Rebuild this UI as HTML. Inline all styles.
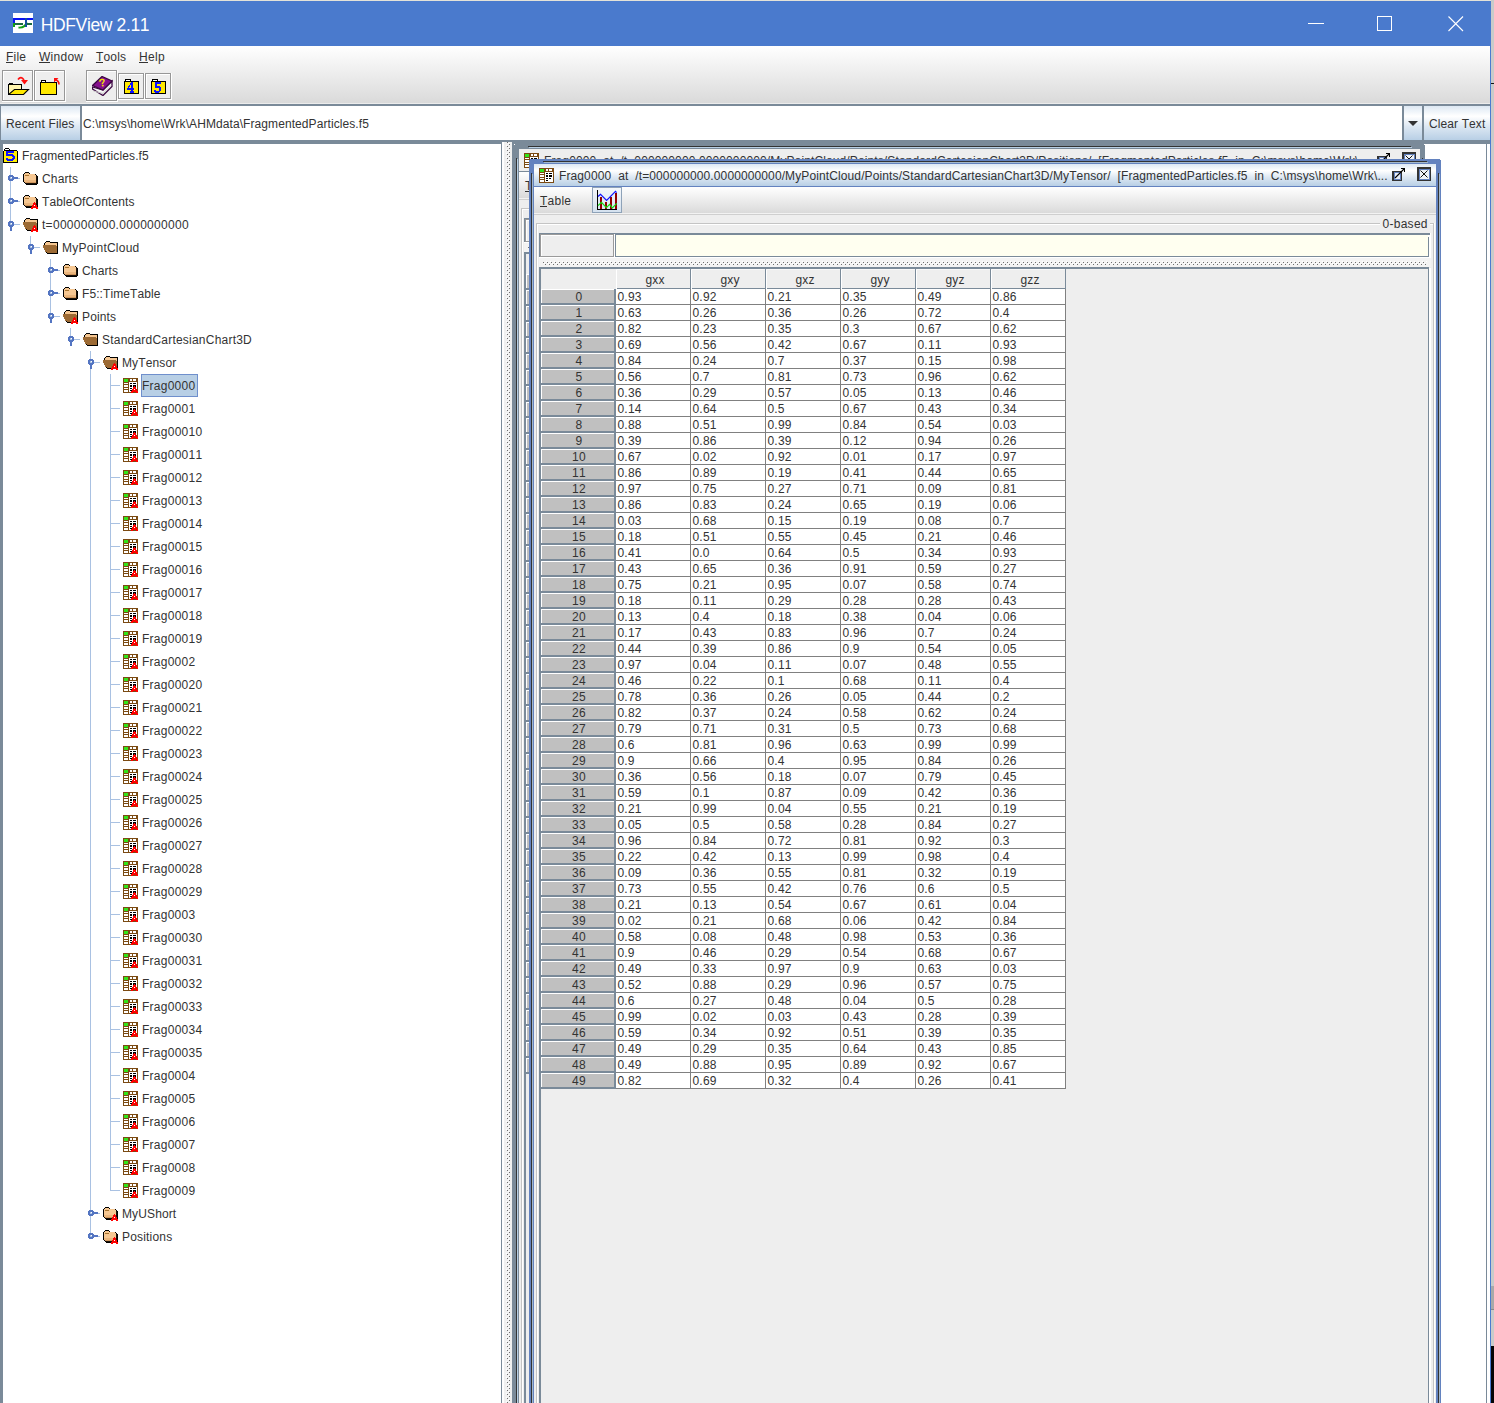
<!DOCTYPE html>
<html><head><meta charset="utf-8"><title>HDFView 2.11</title>
<style>
html,body{margin:0;padding:0;}
body{width:1494px;height:1403px;position:relative;overflow:hidden;background:#d3d3d3;font-family:"Liberation Sans",sans-serif;}
body div,body svg{position:absolute;}
.t{white-space:pre;font-kerning:none;font-family:"Liberation Sans",sans-serif;}
</style></head><body>
<div style="left:1491px;top:0px;width:3px;height:1403px;background:#c8cbca;"></div>
<div style="left:1491px;top:83px;width:3px;height:1px;background:#111111;"></div>
<div style="left:1491px;top:1286px;width:3px;height:23px;background:#a9a9a9;"></div>
<div style="left:1491px;top:1309px;width:3px;height:1px;background:#888888;"></div>
<div style="left:1491px;top:1346px;width:3px;height:57px;background:#050505;"></div>
<div style="left:0px;top:0px;width:1491px;height:1px;background:#e4e2d8;"></div>
<div style="left:0px;top:1px;width:1491px;height:45px;background:#4a7acd;"></div>
<div style="left:1490px;top:1px;width:1px;height:1402px;background:#4a7ad0;"></div>
<svg style="left:13px;top:13px;" width="20" height="20" viewBox="0 0 20 20" shape-rendering="crispEdges"><rect x="0" y="0" width="20" height="20" fill="#ffffff"/><rect x="0" y="5" width="20" height="2" fill="#0a14f0"/><rect x="0" y="5" width="2" height="9" fill="#0a14f0"/><rect x="0" y="10" width="2" height="4" fill="#10a010"/><rect x="2" y="10" width="8" height="2" fill="#1a6a40"/><rect x="12" y="10" width="7" height="2" fill="#1a6a40"/><path d="M5.5 14.5 Q12.5 15 13.5 9" stroke="#12a012" stroke-width="1.8" fill="none" shape-rendering="geometricPrecision"/><rect x="12" y="5" width="2" height="9" fill="#124f9a"/></svg>
<div class="t" style="left:40.7px;top:16.5px;font-size:17.5px;line-height:17.5px;color:#ffffff;letter-spacing:-0.360px;">HDFView 2.11</div>
<div style="left:1308px;top:23px;width:16px;height:1px;background:#ffffff;"></div>
<div style="left:1377px;top:16px;width:13px;height:13px;border:1px solid #ffffff;"></div>
<svg style="left:1447px;top:15px;" width="18" height="18" viewBox="0 0 18 18" shape-rendering="crispEdges"><path d="M1.5 1.5 L16 16 M16 1.5 L1.5 16" stroke="#ffffff" stroke-width="1.1" fill="none" shape-rendering="geometricPrecision"/></svg>
<div style="left:0px;top:46px;width:1490px;height:57px;background:linear-gradient(to bottom,#ffffff 0%,#dadada 100%);"></div>
<div style="left:0px;top:103px;width:1490px;height:1px;background:#ececec;"></div>
<div style="left:0px;top:104px;width:1490px;height:2px;background:#7a8a99;"></div>
<div class="t" style="left:6px;top:51px;font-size:12px;line-height:12px;color:#333333;letter-spacing:0.206px;">File</div>
<div style="left:6px;top:62px;width:7px;height:1px;background:#333333;"></div>
<div class="t" style="left:39px;top:51px;font-size:12px;line-height:12px;color:#333333;letter-spacing:0.260px;">Window</div>
<div style="left:39px;top:62px;width:11px;height:1px;background:#333333;"></div>
<div class="t" style="left:96px;top:51px;font-size:12px;line-height:12px;color:#333333;letter-spacing:0.171px;">Tools</div>
<div style="left:96px;top:62px;width:7px;height:1px;background:#333333;"></div>
<div class="t" style="left:139px;top:51px;font-size:12px;line-height:12px;color:#333333;letter-spacing:0.370px;">Help</div>
<div style="left:139px;top:62px;width:9px;height:1px;background:#333333;"></div>
<div style="left:2px;top:70px;width:32px;height:32px;background:#ffffff;"></div>
<div style="left:2px;top:70px;width:29px;height:29px;border:1px solid #979797;background:#eeeeee;box-shadow:inset 1px 1px 0 #ffffff;"></div>
<div style="left:34px;top:70px;width:32px;height:32px;background:#ffffff;"></div>
<div style="left:34px;top:70px;width:29px;height:29px;border:1px solid #979797;background:#eeeeee;box-shadow:inset 1px 1px 0 #ffffff;"></div>
<div style="left:86px;top:70px;width:32px;height:32px;background:#ffffff;"></div>
<div style="left:86px;top:70px;width:29px;height:29px;border:1px solid #979797;background:#eeeeee;box-shadow:inset 1px 1px 0 #ffffff;"></div>
<div style="left:118px;top:73px;width:27px;height:27px;background:#ffffff;"></div>
<div style="left:118px;top:73px;width:24px;height:24px;border:1px solid #979797;background:#eeeeee;box-shadow:inset 1px 1px 0 #ffffff;"></div>
<div style="left:145px;top:73px;width:27px;height:27px;background:#ffffff;"></div>
<div style="left:145px;top:73px;width:24px;height:24px;border:1px solid #979797;background:#eeeeee;box-shadow:inset 1px 1px 0 #ffffff;"></div>
<svg style="left:8px;top:76px;" width="22" height="20" viewBox="0 0 22 20" shape-rendering="crispEdges"><rect x="1" y="7" width="4" height="1" fill="#000"/><rect x="0" y="8" width="14" height="1" fill="#000"/><rect x="0" y="8" width="1" height="11" fill="#000"/><rect x="13" y="8" width="1" height="5" fill="#000"/><rect x="1" y="9" width="12" height="9" fill="#fff6b0"/><path d="M6.5 13.5 L20.5 13.5 L15.5 18.5 L0.5 18.5 Z" fill="#ffe800" stroke="#000" stroke-width="1.1" shape-rendering="geometricPrecision"/><path d="M10 3.5 Q13 -0.5 16 4" stroke="#ff1010" stroke-width="1.6" fill="none" shape-rendering="geometricPrecision"/><path d="M13 4 L20 4 L16.5 8.5 Z" fill="#ff1010" shape-rendering="geometricPrecision"/></svg>
<svg style="left:40px;top:77px;" width="20" height="20" viewBox="0 0 20 20" shape-rendering="crispEdges"><rect x="1" y="3" width="5" height="2" fill="#000"/><rect x="2" y="4" width="3" height="1" fill="#fff"/><rect x="0" y="5" width="17" height="13" fill="#000"/><rect x="1" y="6" width="15" height="11" fill="#ffe800"/><path d="M14 1 L18.5 1 L14 5.5 Z" fill="#ff1010" shape-rendering="geometricPrecision"/><path d="M15.5 2.5 Q19 4 19 7.5" stroke="#ff1010" stroke-width="1.6" fill="none" shape-rendering="geometricPrecision"/></svg>
<svg style="left:92px;top:76px;" width="21" height="20" viewBox="0 0 21 20" shape-rendering="crispEdges"><path d="M0.5 11 L0.5 13 L11 19.5 L20 10.5 L20 5 L11 14 Z" fill="#f4f4f4" stroke="#3c0642" stroke-width="1.3" shape-rendering="geometricPrecision"/><path d="M1.5 15 L11 17.5 L19 9.5" stroke="#c8c8c8" stroke-width="1" fill="none" shape-rendering="geometricPrecision"/><path d="M0.5 9.5 L10 0.5 L20 5 L11 14 Z" fill="#86108e" stroke="#3c0642" stroke-width="1.3" shape-rendering="geometricPrecision"/><text x="7" y="10.5" transform="rotate(-12 10 7)" font-family="Liberation Sans" font-weight="bold" font-size="11" fill="#f0e000">?</text></svg>
<svg style="left:124px;top:78px;" width="16" height="16" viewBox="0 0 16 16" shape-rendering="crispEdges"><rect x="1" y="1" width="6" height="2" fill="#000"/><rect x="2" y="2" width="4" height="1" fill="#fff"/><rect x="0" y="3" width="15" height="13" fill="#000"/><rect x="1" y="4" width="13" height="11" fill="#ffe800"/><g transform="translate(3,4)"><rect x="4" y="0" width="2" height="1" fill="#0a10ff"/><rect x="3" y="1" width="3" height="1" fill="#0a10ff"/><rect x="3" y="2" width="3" height="1" fill="#0a10ff"/><rect x="2" y="3" width="1" height="1" fill="#0a10ff"/><rect x="4" y="3" width="2" height="1" fill="#0a10ff"/><rect x="1" y="4" width="2" height="1" fill="#0a10ff"/><rect x="4" y="4" width="2" height="1" fill="#0a10ff"/><rect x="1" y="5" width="1" height="1" fill="#0a10ff"/><rect x="4" y="5" width="2" height="1" fill="#0a10ff"/><rect x="0" y="6" width="7" height="1" fill="#0a10ff"/><rect x="0" y="7" width="7" height="1" fill="#0a10ff"/><rect x="4" y="8" width="2" height="1" fill="#0a10ff"/><rect x="3" y="9" width="4" height="1" fill="#0a10ff"/><rect x="3" y="10" width="4" height="1" fill="#0a10ff"/></g></svg>
<svg style="left:151px;top:78px;" width="16" height="16" viewBox="0 0 16 16" shape-rendering="crispEdges"><rect x="1" y="1" width="6" height="2" fill="#000"/><rect x="2" y="2" width="4" height="1" fill="#fff"/><rect x="0" y="3" width="15" height="13" fill="#000"/><rect x="1" y="4" width="13" height="11" fill="#ffe800"/><g transform="translate(3,4)"><rect x="1" y="0" width="6" height="1" fill="#0a10ff"/><rect x="1" y="1" width="6" height="1" fill="#0a10ff"/><rect x="1" y="2" width="2" height="1" fill="#0a10ff"/><rect x="1" y="3" width="2" height="1" fill="#0a10ff"/><rect x="1" y="4" width="5" height="1" fill="#0a10ff"/><rect x="1" y="5" width="6" height="1" fill="#0a10ff"/><rect x="5" y="6" width="2" height="1" fill="#0a10ff"/><rect x="5" y="7" width="2" height="1" fill="#0a10ff"/><rect x="0" y="8" width="2" height="1" fill="#0a10ff"/><rect x="5" y="8" width="2" height="1" fill="#0a10ff"/><rect x="0" y="9" width="6" height="1" fill="#0a10ff"/><rect x="1" y="10" width="4" height="1" fill="#0a10ff"/></g></svg>
<div style="left:0px;top:106px;width:1490px;height:34px;background:#7a8a99;"></div>
<div style="left:1px;top:106px;width:79px;height:34px;background:linear-gradient(to bottom,#dde8f3 0%,#ffffff 30%,#dde8f3 60%,#b8cfe5 100%);"></div>
<div class="t" style="left:6px;top:118px;font-size:12px;line-height:12px;color:#333333;letter-spacing:0.149px;">Recent Files</div>
<div style="left:82px;top:106px;width:1320px;height:34px;background:#ffffff;"></div>
<div class="t" style="left:83px;top:118px;font-size:12px;line-height:12px;color:#333333;letter-spacing:0.081px;">C:\msys\home\Wrk\AHMdata\FragmentedParticles.f5</div>
<div style="left:1404px;top:106px;width:18px;height:34px;background:linear-gradient(to bottom,#dde8f3 0%,#ffffff 30%,#dde8f3 60%,#b8cfe5 100%);"></div>
<svg style="left:1408px;top:121px;" width="10" height="5" viewBox="0 0 10 5" shape-rendering="crispEdges"><path d="M0 0 L10 0 L5 5 Z" fill="#333333" shape-rendering="geometricPrecision"/></svg>
<div style="left:1424px;top:106px;width:66px;height:34px;background:linear-gradient(to bottom,#dde8f3 0%,#ffffff 30%,#dde8f3 60%,#b8cfe5 100%);"></div>
<div class="t" style="left:1429px;top:118px;font-size:12px;line-height:12px;color:#333333;letter-spacing:0.105px;">Clear Text</div>
<div style="left:0px;top:140px;width:1490px;height:4px;background:#7a8a99;"></div>
<div style="left:0px;top:144px;width:3px;height:1259px;background:#7a8a99;"></div>
<div style="left:3px;top:144px;width:498px;height:1259px;background:#ffffff;"></div>
<div style="left:501px;top:142px;width:1px;height:1261px;background:#7a8a99;"></div>
<div style="left:502px;top:142px;width:2px;height:1261px;background:#ffffff;"></div>
<div style="left:504px;top:142px;width:8px;height:1261px;background:#f0f0f0;"></div>
<svg style="left:504px;top:142px" width="8" height="1261" shape-rendering="crispEdges"><defs><pattern id="bumpv" width="8" height="4" patternUnits="userSpaceOnUse"><rect x="3" y="0" width="1" height="1" fill="#6e6e6e"/><rect x="5" y="2" width="1" height="1" fill="#6e6e6e"/><rect x="2" y="3" width="1" height="1" fill="#ffffff"/><rect x="4" y="1" width="1" height="1" fill="#ffffff"/></pattern></defs><rect x="0" y="0" width="8" height="1261" fill="url(#bumpv)"/></svg>
<div style="left:512px;top:140px;width:2px;height:1263px;background:#7a8a99;"></div>
<div style="left:10px;top:167px;width:1px;height:58px;background:#a9c1e2;"></div>
<div style="left:30px;top:236px;width:1px;height:12px;background:#a9c1e2;"></div>
<div style="left:50px;top:259px;width:1px;height:58px;background:#a9c1e2;"></div>
<div style="left:70px;top:328px;width:1px;height:12px;background:#a9c1e2;"></div>
<div style="left:90px;top:351px;width:1px;height:886px;background:#a9c1e2;"></div>
<div style="left:110px;top:374px;width:1px;height:817px;background:#a9c1e2;"></div>
<div style="left:141px;top:374px;width:55px;height:21px;background:#b8cfe5;border:1px solid #6f8fcc;"></div>
<svg style="left:3px;top:148px;" width="16" height="16" viewBox="0 0 16 16" shape-rendering="crispEdges"><rect x="2" y="0" width="4" height="1" fill="#000000"/><rect x="1" y="1" width="1" height="1" fill="#000000"/><rect x="2" y="1" width="4" height="1" fill="#ffffff"/><rect x="6" y="1" width="1" height="1" fill="#000000"/><rect x="1" y="2" width="13" height="1" fill="#000000"/><rect x="0" y="3" width="1" height="1" fill="#000000"/><rect x="1" y="3" width="2" height="1" fill="#ffee00"/><rect x="3" y="3" width="8" height="1" fill="#0a10ff"/><rect x="11" y="3" width="3" height="1" fill="#ffee00"/><rect x="14" y="3" width="1" height="1" fill="#000000"/><rect x="0" y="4" width="1" height="1" fill="#000000"/><rect x="1" y="4" width="2" height="1" fill="#ffee00"/><rect x="3" y="4" width="8" height="1" fill="#0a10ff"/><rect x="11" y="4" width="3" height="1" fill="#ffee00"/><rect x="14" y="4" width="1" height="1" fill="#000000"/><rect x="0" y="5" width="1" height="1" fill="#000000"/><rect x="1" y="5" width="2" height="1" fill="#ffee00"/><rect x="3" y="5" width="2" height="1" fill="#0a10ff"/><rect x="5" y="5" width="9" height="1" fill="#ffee00"/><rect x="14" y="5" width="1" height="1" fill="#000000"/><rect x="0" y="6" width="1" height="1" fill="#000000"/><rect x="1" y="6" width="2" height="1" fill="#ffee00"/><rect x="3" y="6" width="7" height="1" fill="#0a10ff"/><rect x="10" y="6" width="4" height="1" fill="#ffee00"/><rect x="14" y="6" width="1" height="1" fill="#000000"/><rect x="0" y="7" width="1" height="1" fill="#000000"/><rect x="1" y="7" width="2" height="1" fill="#ffee00"/><rect x="3" y="7" width="8" height="1" fill="#0a10ff"/><rect x="11" y="7" width="3" height="1" fill="#ffee00"/><rect x="14" y="7" width="1" height="1" fill="#000000"/><rect x="0" y="8" width="1" height="1" fill="#000000"/><rect x="1" y="8" width="8" height="1" fill="#ffee00"/><rect x="9" y="8" width="3" height="1" fill="#0a10ff"/><rect x="12" y="8" width="2" height="1" fill="#ffee00"/><rect x="14" y="8" width="1" height="1" fill="#000000"/><rect x="0" y="9" width="1" height="1" fill="#000000"/><rect x="1" y="9" width="9" height="1" fill="#ffee00"/><rect x="10" y="9" width="2" height="1" fill="#0a10ff"/><rect x="12" y="9" width="2" height="1" fill="#ffee00"/><rect x="14" y="9" width="1" height="1" fill="#000000"/><rect x="0" y="10" width="1" height="1" fill="#000000"/><rect x="1" y="10" width="2" height="1" fill="#ffee00"/><rect x="3" y="10" width="2" height="1" fill="#0a10ff"/><rect x="5" y="10" width="4" height="1" fill="#ffee00"/><rect x="9" y="10" width="3" height="1" fill="#0a10ff"/><rect x="12" y="10" width="2" height="1" fill="#ffee00"/><rect x="14" y="10" width="1" height="1" fill="#000000"/><rect x="0" y="11" width="1" height="1" fill="#000000"/><rect x="1" y="11" width="2" height="1" fill="#ffee00"/><rect x="3" y="11" width="8" height="1" fill="#0a10ff"/><rect x="11" y="11" width="3" height="1" fill="#ffee00"/><rect x="14" y="11" width="1" height="1" fill="#000000"/><rect x="0" y="12" width="1" height="1" fill="#000000"/><rect x="1" y="12" width="3" height="1" fill="#ffee00"/><rect x="4" y="12" width="6" height="1" fill="#0a10ff"/><rect x="10" y="12" width="4" height="1" fill="#ffee00"/><rect x="14" y="12" width="1" height="1" fill="#000000"/><rect x="0" y="13" width="1" height="1" fill="#000000"/><rect x="1" y="13" width="13" height="1" fill="#ffee00"/><rect x="14" y="13" width="1" height="1" fill="#000000"/><rect x="0" y="14" width="15" height="1" fill="#000000"/></svg>
<div class="t" style="left:22px;top:150px;font-size:12px;line-height:12px;color:#333333;letter-spacing:0.128px;">FragmentedParticles.f5</div>
<div style="left:10px;top:178px;width:10px;height:1px;background:#a9c1e2;"></div>
<svg style="left:8px;top:175px;" width="12" height="6" viewBox="0 0 12 6" shape-rendering="crispEdges"><rect x="1" y="0" width="4" height="1" fill="#5475c2"/><rect x="0" y="1" width="6" height="1" fill="#5475c2"/><rect x="0" y="2" width="2" height="1" fill="#5475c2"/><rect x="4" y="2" width="6" height="1" fill="#5475c2"/><rect x="0" y="3" width="2" height="1" fill="#5475c2"/><rect x="4" y="3" width="6" height="1" fill="#5475c2"/><rect x="0" y="4" width="6" height="1" fill="#5475c2"/><rect x="1" y="5" width="4" height="1" fill="#5475c2"/></svg>
<svg style="left:23px;top:171px;" width="16" height="16" viewBox="0 0 16 16" shape-rendering="crispEdges"><rect x="2" y="1" width="4" height="1" fill="#000000"/><rect x="1" y="2" width="1" height="1" fill="#000000"/><rect x="2" y="2" width="4" height="1" fill="#f6c792"/><rect x="6" y="2" width="1" height="1" fill="#000000"/><rect x="0" y="3" width="1" height="1" fill="#000000"/><rect x="1" y="3" width="11" height="1" fill="#f6c792"/><rect x="12" y="3" width="1" height="1" fill="#000000"/><rect x="0" y="4" width="1" height="1" fill="#000000"/><rect x="1" y="4" width="1" height="1" fill="#f6c792"/><rect x="2" y="4" width="4" height="1" fill="#a8742e"/><rect x="6" y="4" width="7" height="1" fill="#f6c792"/><rect x="13" y="4" width="1" height="1" fill="#000000"/><rect x="0" y="5" width="1" height="1" fill="#000000"/><rect x="1" y="5" width="12" height="1" fill="#f6c792"/><rect x="13" y="5" width="1" height="1" fill="#1c1208"/><rect x="14" y="5" width="1" height="1" fill="#000000"/><rect x="0" y="6" width="1" height="1" fill="#000000"/><rect x="1" y="6" width="12" height="1" fill="#f6c792"/><rect x="13" y="6" width="1" height="1" fill="#1c1208"/><rect x="14" y="6" width="1" height="1" fill="#000000"/><rect x="0" y="7" width="1" height="1" fill="#000000"/><rect x="1" y="7" width="12" height="1" fill="#f6c792"/><rect x="13" y="7" width="1" height="1" fill="#1c1208"/><rect x="14" y="7" width="1" height="1" fill="#000000"/><rect x="0" y="8" width="1" height="1" fill="#000000"/><rect x="1" y="8" width="12" height="1" fill="#f6c792"/><rect x="13" y="8" width="1" height="1" fill="#1c1208"/><rect x="14" y="8" width="1" height="1" fill="#000000"/><rect x="0" y="9" width="1" height="1" fill="#000000"/><rect x="1" y="9" width="12" height="1" fill="#eab57c"/><rect x="13" y="9" width="1" height="1" fill="#1c1208"/><rect x="14" y="9" width="1" height="1" fill="#000000"/><rect x="0" y="10" width="1" height="1" fill="#000000"/><rect x="1" y="10" width="12" height="1" fill="#eab57c"/><rect x="13" y="10" width="1" height="1" fill="#1c1208"/><rect x="14" y="10" width="1" height="1" fill="#000000"/><rect x="1" y="11" width="1" height="1" fill="#000000"/><rect x="2" y="11" width="11" height="1" fill="#cf955c"/><rect x="13" y="11" width="1" height="1" fill="#1c1208"/><rect x="14" y="11" width="1" height="1" fill="#000000"/><rect x="2" y="12" width="1" height="1" fill="#000000"/><rect x="3" y="12" width="11" height="1" fill="#1c1208"/><rect x="14" y="12" width="1" height="1" fill="#000000"/><rect x="3" y="13" width="11" height="1" fill="#000000"/></svg>
<div class="t" style="left:42px;top:173px;font-size:12px;line-height:12px;color:#333333;letter-spacing:0.149px;">Charts</div>
<div style="left:10px;top:201px;width:10px;height:1px;background:#a9c1e2;"></div>
<svg style="left:8px;top:198px;" width="12" height="6" viewBox="0 0 12 6" shape-rendering="crispEdges"><rect x="1" y="0" width="4" height="1" fill="#5475c2"/><rect x="0" y="1" width="6" height="1" fill="#5475c2"/><rect x="0" y="2" width="2" height="1" fill="#5475c2"/><rect x="4" y="2" width="6" height="1" fill="#5475c2"/><rect x="0" y="3" width="2" height="1" fill="#5475c2"/><rect x="4" y="3" width="6" height="1" fill="#5475c2"/><rect x="0" y="4" width="6" height="1" fill="#5475c2"/><rect x="1" y="5" width="4" height="1" fill="#5475c2"/></svg>
<svg style="left:23px;top:194px;" width="16" height="16" viewBox="0 0 16 16" shape-rendering="crispEdges"><rect x="2" y="1" width="4" height="1" fill="#000000"/><rect x="1" y="2" width="1" height="1" fill="#000000"/><rect x="2" y="2" width="4" height="1" fill="#f6c792"/><rect x="6" y="2" width="1" height="1" fill="#000000"/><rect x="0" y="3" width="1" height="1" fill="#000000"/><rect x="1" y="3" width="11" height="1" fill="#f6c792"/><rect x="12" y="3" width="1" height="1" fill="#000000"/><rect x="0" y="4" width="1" height="1" fill="#000000"/><rect x="1" y="4" width="1" height="1" fill="#f6c792"/><rect x="2" y="4" width="4" height="1" fill="#a8742e"/><rect x="6" y="4" width="7" height="1" fill="#f6c792"/><rect x="13" y="4" width="1" height="1" fill="#000000"/><rect x="0" y="5" width="1" height="1" fill="#000000"/><rect x="1" y="5" width="12" height="1" fill="#f6c792"/><rect x="13" y="5" width="1" height="1" fill="#1c1208"/><rect x="14" y="5" width="1" height="1" fill="#000000"/><rect x="0" y="6" width="1" height="1" fill="#000000"/><rect x="1" y="6" width="12" height="1" fill="#f6c792"/><rect x="13" y="6" width="1" height="1" fill="#1c1208"/><rect x="14" y="6" width="1" height="1" fill="#000000"/><rect x="0" y="7" width="1" height="1" fill="#000000"/><rect x="1" y="7" width="12" height="1" fill="#f6c792"/><rect x="13" y="7" width="1" height="1" fill="#1c1208"/><rect x="14" y="7" width="1" height="1" fill="#000000"/><rect x="0" y="8" width="1" height="1" fill="#000000"/><rect x="1" y="8" width="12" height="1" fill="#f6c792"/><rect x="13" y="8" width="1" height="1" fill="#1c1208"/><rect x="14" y="8" width="1" height="1" fill="#000000"/><rect x="0" y="9" width="1" height="1" fill="#000000"/><rect x="1" y="9" width="12" height="1" fill="#eab57c"/><rect x="13" y="9" width="1" height="1" fill="#1c1208"/><rect x="14" y="9" width="1" height="1" fill="#000000"/><rect x="0" y="10" width="1" height="1" fill="#000000"/><rect x="1" y="10" width="12" height="1" fill="#eab57c"/><rect x="13" y="10" width="1" height="1" fill="#1c1208"/><rect x="14" y="10" width="1" height="1" fill="#000000"/><rect x="1" y="11" width="1" height="1" fill="#000000"/><rect x="2" y="11" width="11" height="1" fill="#cf955c"/><rect x="13" y="11" width="1" height="1" fill="#1c1208"/><rect x="14" y="11" width="1" height="1" fill="#000000"/><rect x="2" y="12" width="1" height="1" fill="#000000"/><rect x="3" y="12" width="11" height="1" fill="#1c1208"/><rect x="14" y="12" width="1" height="1" fill="#000000"/><rect x="3" y="13" width="11" height="1" fill="#000000"/><g transform="translate(8,8)"><rect x="3" y="0" width="1" height="1" fill="#ff0000"/><rect x="2" y="1" width="3" height="1" fill="#ff0000"/><rect x="2" y="2" width="3" height="1" fill="#ff0000"/><rect x="1" y="3" width="2" height="1" fill="#ff0000"/><rect x="3" y="3" width="1" height="1" fill="#ffffff"/><rect x="4" y="3" width="2" height="1" fill="#ff0000"/><rect x="1" y="4" width="5" height="1" fill="#ff0000"/><rect x="0" y="5" width="7" height="1" fill="#ff0000"/><rect x="0" y="6" width="2" height="1" fill="#ff0000"/><rect x="5" y="6" width="2" height="1" fill="#ff0000"/></g></svg>
<div class="t" style="left:42px;top:196px;font-size:12px;line-height:12px;color:#333333;letter-spacing:0.126px;">TableOfContents</div>
<div style="left:10px;top:224px;width:10px;height:1px;background:#a9c1e2;"></div>
<svg style="left:8px;top:221px;" width="6" height="10" viewBox="0 0 6 10" shape-rendering="crispEdges"><rect x="1" y="0" width="4" height="1" fill="#5475c2"/><rect x="0" y="1" width="6" height="1" fill="#5475c2"/><rect x="0" y="2" width="2" height="1" fill="#5475c2"/><rect x="4" y="2" width="2" height="1" fill="#5475c2"/><rect x="0" y="3" width="2" height="1" fill="#5475c2"/><rect x="4" y="3" width="2" height="1" fill="#5475c2"/><rect x="0" y="4" width="6" height="1" fill="#5475c2"/><rect x="1" y="5" width="4" height="1" fill="#5475c2"/><rect x="2" y="6" width="2" height="1" fill="#5475c2"/><rect x="2" y="7" width="2" height="1" fill="#5475c2"/><rect x="2" y="8" width="2" height="1" fill="#5475c2"/><rect x="2" y="9" width="2" height="1" fill="#5475c2"/></svg>
<svg style="left:23px;top:217px;" width="16" height="16" viewBox="0 0 16 16" shape-rendering="crispEdges"><rect x="3" y="1" width="4" height="1" fill="#000000"/><rect x="2" y="2" width="1" height="1" fill="#000000"/><rect x="3" y="2" width="4" height="1" fill="#f6c792"/><rect x="7" y="2" width="8" height="1" fill="#000000"/><rect x="1" y="3" width="1" height="1" fill="#000000"/><rect x="2" y="3" width="12" height="1" fill="#f6c792"/><rect x="14" y="3" width="1" height="1" fill="#000000"/><rect x="1" y="4" width="1" height="1" fill="#000000"/><rect x="2" y="4" width="12" height="1" fill="#f6c792"/><rect x="14" y="4" width="1" height="1" fill="#000000"/><rect x="0" y="5" width="13" height="1" fill="#9c6a34"/><rect x="13" y="5" width="1" height="1" fill="#f6c792"/><rect x="14" y="5" width="1" height="1" fill="#000000"/><rect x="0" y="6" width="14" height="1" fill="#9c6a34"/><rect x="14" y="6" width="1" height="1" fill="#000000"/><rect x="0" y="7" width="14" height="1" fill="#9c6a34"/><rect x="14" y="7" width="1" height="1" fill="#000000"/><rect x="1" y="8" width="13" height="1" fill="#9c6a34"/><rect x="14" y="8" width="1" height="1" fill="#000000"/><rect x="1" y="9" width="13" height="1" fill="#9c6a34"/><rect x="14" y="9" width="1" height="1" fill="#000000"/><rect x="2" y="10" width="12" height="1" fill="#9c6a34"/><rect x="14" y="10" width="1" height="1" fill="#000000"/><rect x="2" y="11" width="12" height="1" fill="#9c6a34"/><rect x="14" y="11" width="1" height="1" fill="#000000"/><rect x="3" y="12" width="1" height="1" fill="#000000"/><rect x="4" y="12" width="10" height="1" fill="#9c6a34"/><rect x="14" y="12" width="1" height="1" fill="#000000"/><rect x="4" y="13" width="11" height="1" fill="#000000"/><g transform="translate(8,8)"><rect x="3" y="0" width="1" height="1" fill="#ff0000"/><rect x="2" y="1" width="3" height="1" fill="#ff0000"/><rect x="2" y="2" width="3" height="1" fill="#ff0000"/><rect x="1" y="3" width="2" height="1" fill="#ff0000"/><rect x="3" y="3" width="1" height="1" fill="#ffffff"/><rect x="4" y="3" width="2" height="1" fill="#ff0000"/><rect x="1" y="4" width="5" height="1" fill="#ff0000"/><rect x="0" y="5" width="7" height="1" fill="#ff0000"/><rect x="0" y="6" width="2" height="1" fill="#ff0000"/><rect x="5" y="6" width="2" height="1" fill="#ff0000"/></g></svg>
<div class="t" style="left:42px;top:219px;font-size:12px;line-height:12px;color:#333333;letter-spacing:0.291px;">t=000000000.0000000000</div>
<div style="left:30px;top:247px;width:10px;height:1px;background:#a9c1e2;"></div>
<svg style="left:28px;top:244px;" width="6" height="10" viewBox="0 0 6 10" shape-rendering="crispEdges"><rect x="1" y="0" width="4" height="1" fill="#5475c2"/><rect x="0" y="1" width="6" height="1" fill="#5475c2"/><rect x="0" y="2" width="2" height="1" fill="#5475c2"/><rect x="4" y="2" width="2" height="1" fill="#5475c2"/><rect x="0" y="3" width="2" height="1" fill="#5475c2"/><rect x="4" y="3" width="2" height="1" fill="#5475c2"/><rect x="0" y="4" width="6" height="1" fill="#5475c2"/><rect x="1" y="5" width="4" height="1" fill="#5475c2"/><rect x="2" y="6" width="2" height="1" fill="#5475c2"/><rect x="2" y="7" width="2" height="1" fill="#5475c2"/><rect x="2" y="8" width="2" height="1" fill="#5475c2"/><rect x="2" y="9" width="2" height="1" fill="#5475c2"/></svg>
<svg style="left:43px;top:240px;" width="16" height="16" viewBox="0 0 16 16" shape-rendering="crispEdges"><rect x="3" y="1" width="4" height="1" fill="#000000"/><rect x="2" y="2" width="1" height="1" fill="#000000"/><rect x="3" y="2" width="4" height="1" fill="#f6c792"/><rect x="7" y="2" width="8" height="1" fill="#000000"/><rect x="1" y="3" width="1" height="1" fill="#000000"/><rect x="2" y="3" width="12" height="1" fill="#f6c792"/><rect x="14" y="3" width="1" height="1" fill="#000000"/><rect x="1" y="4" width="1" height="1" fill="#000000"/><rect x="2" y="4" width="12" height="1" fill="#f6c792"/><rect x="14" y="4" width="1" height="1" fill="#000000"/><rect x="0" y="5" width="13" height="1" fill="#9c6a34"/><rect x="13" y="5" width="1" height="1" fill="#f6c792"/><rect x="14" y="5" width="1" height="1" fill="#000000"/><rect x="0" y="6" width="14" height="1" fill="#9c6a34"/><rect x="14" y="6" width="1" height="1" fill="#000000"/><rect x="0" y="7" width="14" height="1" fill="#9c6a34"/><rect x="14" y="7" width="1" height="1" fill="#000000"/><rect x="1" y="8" width="13" height="1" fill="#9c6a34"/><rect x="14" y="8" width="1" height="1" fill="#000000"/><rect x="1" y="9" width="13" height="1" fill="#9c6a34"/><rect x="14" y="9" width="1" height="1" fill="#000000"/><rect x="2" y="10" width="12" height="1" fill="#9c6a34"/><rect x="14" y="10" width="1" height="1" fill="#000000"/><rect x="2" y="11" width="12" height="1" fill="#9c6a34"/><rect x="14" y="11" width="1" height="1" fill="#000000"/><rect x="3" y="12" width="1" height="1" fill="#000000"/><rect x="4" y="12" width="10" height="1" fill="#9c6a34"/><rect x="14" y="12" width="1" height="1" fill="#000000"/><rect x="4" y="13" width="11" height="1" fill="#000000"/></svg>
<div class="t" style="left:62px;top:242px;font-size:12px;line-height:12px;color:#333333;letter-spacing:0.232px;">MyPointCloud</div>
<div style="left:50px;top:270px;width:10px;height:1px;background:#a9c1e2;"></div>
<svg style="left:48px;top:267px;" width="12" height="6" viewBox="0 0 12 6" shape-rendering="crispEdges"><rect x="1" y="0" width="4" height="1" fill="#5475c2"/><rect x="0" y="1" width="6" height="1" fill="#5475c2"/><rect x="0" y="2" width="2" height="1" fill="#5475c2"/><rect x="4" y="2" width="6" height="1" fill="#5475c2"/><rect x="0" y="3" width="2" height="1" fill="#5475c2"/><rect x="4" y="3" width="6" height="1" fill="#5475c2"/><rect x="0" y="4" width="6" height="1" fill="#5475c2"/><rect x="1" y="5" width="4" height="1" fill="#5475c2"/></svg>
<svg style="left:63px;top:263px;" width="16" height="16" viewBox="0 0 16 16" shape-rendering="crispEdges"><rect x="2" y="1" width="4" height="1" fill="#000000"/><rect x="1" y="2" width="1" height="1" fill="#000000"/><rect x="2" y="2" width="4" height="1" fill="#f6c792"/><rect x="6" y="2" width="1" height="1" fill="#000000"/><rect x="0" y="3" width="1" height="1" fill="#000000"/><rect x="1" y="3" width="11" height="1" fill="#f6c792"/><rect x="12" y="3" width="1" height="1" fill="#000000"/><rect x="0" y="4" width="1" height="1" fill="#000000"/><rect x="1" y="4" width="1" height="1" fill="#f6c792"/><rect x="2" y="4" width="4" height="1" fill="#a8742e"/><rect x="6" y="4" width="7" height="1" fill="#f6c792"/><rect x="13" y="4" width="1" height="1" fill="#000000"/><rect x="0" y="5" width="1" height="1" fill="#000000"/><rect x="1" y="5" width="12" height="1" fill="#f6c792"/><rect x="13" y="5" width="1" height="1" fill="#1c1208"/><rect x="14" y="5" width="1" height="1" fill="#000000"/><rect x="0" y="6" width="1" height="1" fill="#000000"/><rect x="1" y="6" width="12" height="1" fill="#f6c792"/><rect x="13" y="6" width="1" height="1" fill="#1c1208"/><rect x="14" y="6" width="1" height="1" fill="#000000"/><rect x="0" y="7" width="1" height="1" fill="#000000"/><rect x="1" y="7" width="12" height="1" fill="#f6c792"/><rect x="13" y="7" width="1" height="1" fill="#1c1208"/><rect x="14" y="7" width="1" height="1" fill="#000000"/><rect x="0" y="8" width="1" height="1" fill="#000000"/><rect x="1" y="8" width="12" height="1" fill="#f6c792"/><rect x="13" y="8" width="1" height="1" fill="#1c1208"/><rect x="14" y="8" width="1" height="1" fill="#000000"/><rect x="0" y="9" width="1" height="1" fill="#000000"/><rect x="1" y="9" width="12" height="1" fill="#eab57c"/><rect x="13" y="9" width="1" height="1" fill="#1c1208"/><rect x="14" y="9" width="1" height="1" fill="#000000"/><rect x="0" y="10" width="1" height="1" fill="#000000"/><rect x="1" y="10" width="12" height="1" fill="#eab57c"/><rect x="13" y="10" width="1" height="1" fill="#1c1208"/><rect x="14" y="10" width="1" height="1" fill="#000000"/><rect x="1" y="11" width="1" height="1" fill="#000000"/><rect x="2" y="11" width="11" height="1" fill="#cf955c"/><rect x="13" y="11" width="1" height="1" fill="#1c1208"/><rect x="14" y="11" width="1" height="1" fill="#000000"/><rect x="2" y="12" width="1" height="1" fill="#000000"/><rect x="3" y="12" width="11" height="1" fill="#1c1208"/><rect x="14" y="12" width="1" height="1" fill="#000000"/><rect x="3" y="13" width="11" height="1" fill="#000000"/></svg>
<div class="t" style="left:82px;top:265px;font-size:12px;line-height:12px;color:#333333;letter-spacing:0.149px;">Charts</div>
<div style="left:50px;top:293px;width:10px;height:1px;background:#a9c1e2;"></div>
<svg style="left:48px;top:290px;" width="12" height="6" viewBox="0 0 12 6" shape-rendering="crispEdges"><rect x="1" y="0" width="4" height="1" fill="#5475c2"/><rect x="0" y="1" width="6" height="1" fill="#5475c2"/><rect x="0" y="2" width="2" height="1" fill="#5475c2"/><rect x="4" y="2" width="6" height="1" fill="#5475c2"/><rect x="0" y="3" width="2" height="1" fill="#5475c2"/><rect x="4" y="3" width="6" height="1" fill="#5475c2"/><rect x="0" y="4" width="6" height="1" fill="#5475c2"/><rect x="1" y="5" width="4" height="1" fill="#5475c2"/></svg>
<svg style="left:63px;top:286px;" width="16" height="16" viewBox="0 0 16 16" shape-rendering="crispEdges"><rect x="2" y="1" width="4" height="1" fill="#000000"/><rect x="1" y="2" width="1" height="1" fill="#000000"/><rect x="2" y="2" width="4" height="1" fill="#f6c792"/><rect x="6" y="2" width="1" height="1" fill="#000000"/><rect x="0" y="3" width="1" height="1" fill="#000000"/><rect x="1" y="3" width="11" height="1" fill="#f6c792"/><rect x="12" y="3" width="1" height="1" fill="#000000"/><rect x="0" y="4" width="1" height="1" fill="#000000"/><rect x="1" y="4" width="1" height="1" fill="#f6c792"/><rect x="2" y="4" width="4" height="1" fill="#a8742e"/><rect x="6" y="4" width="7" height="1" fill="#f6c792"/><rect x="13" y="4" width="1" height="1" fill="#000000"/><rect x="0" y="5" width="1" height="1" fill="#000000"/><rect x="1" y="5" width="12" height="1" fill="#f6c792"/><rect x="13" y="5" width="1" height="1" fill="#1c1208"/><rect x="14" y="5" width="1" height="1" fill="#000000"/><rect x="0" y="6" width="1" height="1" fill="#000000"/><rect x="1" y="6" width="12" height="1" fill="#f6c792"/><rect x="13" y="6" width="1" height="1" fill="#1c1208"/><rect x="14" y="6" width="1" height="1" fill="#000000"/><rect x="0" y="7" width="1" height="1" fill="#000000"/><rect x="1" y="7" width="12" height="1" fill="#f6c792"/><rect x="13" y="7" width="1" height="1" fill="#1c1208"/><rect x="14" y="7" width="1" height="1" fill="#000000"/><rect x="0" y="8" width="1" height="1" fill="#000000"/><rect x="1" y="8" width="12" height="1" fill="#f6c792"/><rect x="13" y="8" width="1" height="1" fill="#1c1208"/><rect x="14" y="8" width="1" height="1" fill="#000000"/><rect x="0" y="9" width="1" height="1" fill="#000000"/><rect x="1" y="9" width="12" height="1" fill="#eab57c"/><rect x="13" y="9" width="1" height="1" fill="#1c1208"/><rect x="14" y="9" width="1" height="1" fill="#000000"/><rect x="0" y="10" width="1" height="1" fill="#000000"/><rect x="1" y="10" width="12" height="1" fill="#eab57c"/><rect x="13" y="10" width="1" height="1" fill="#1c1208"/><rect x="14" y="10" width="1" height="1" fill="#000000"/><rect x="1" y="11" width="1" height="1" fill="#000000"/><rect x="2" y="11" width="11" height="1" fill="#cf955c"/><rect x="13" y="11" width="1" height="1" fill="#1c1208"/><rect x="14" y="11" width="1" height="1" fill="#000000"/><rect x="2" y="12" width="1" height="1" fill="#000000"/><rect x="3" y="12" width="11" height="1" fill="#1c1208"/><rect x="14" y="12" width="1" height="1" fill="#000000"/><rect x="3" y="13" width="11" height="1" fill="#000000"/></svg>
<div class="t" style="left:82px;top:288px;font-size:12px;line-height:12px;color:#333333;letter-spacing:0.090px;">F5::TimeTable</div>
<div style="left:50px;top:316px;width:10px;height:1px;background:#a9c1e2;"></div>
<svg style="left:48px;top:313px;" width="6" height="10" viewBox="0 0 6 10" shape-rendering="crispEdges"><rect x="1" y="0" width="4" height="1" fill="#5475c2"/><rect x="0" y="1" width="6" height="1" fill="#5475c2"/><rect x="0" y="2" width="2" height="1" fill="#5475c2"/><rect x="4" y="2" width="2" height="1" fill="#5475c2"/><rect x="0" y="3" width="2" height="1" fill="#5475c2"/><rect x="4" y="3" width="2" height="1" fill="#5475c2"/><rect x="0" y="4" width="6" height="1" fill="#5475c2"/><rect x="1" y="5" width="4" height="1" fill="#5475c2"/><rect x="2" y="6" width="2" height="1" fill="#5475c2"/><rect x="2" y="7" width="2" height="1" fill="#5475c2"/><rect x="2" y="8" width="2" height="1" fill="#5475c2"/><rect x="2" y="9" width="2" height="1" fill="#5475c2"/></svg>
<svg style="left:63px;top:309px;" width="16" height="16" viewBox="0 0 16 16" shape-rendering="crispEdges"><rect x="3" y="1" width="4" height="1" fill="#000000"/><rect x="2" y="2" width="1" height="1" fill="#000000"/><rect x="3" y="2" width="4" height="1" fill="#f6c792"/><rect x="7" y="2" width="8" height="1" fill="#000000"/><rect x="1" y="3" width="1" height="1" fill="#000000"/><rect x="2" y="3" width="12" height="1" fill="#f6c792"/><rect x="14" y="3" width="1" height="1" fill="#000000"/><rect x="1" y="4" width="1" height="1" fill="#000000"/><rect x="2" y="4" width="12" height="1" fill="#f6c792"/><rect x="14" y="4" width="1" height="1" fill="#000000"/><rect x="0" y="5" width="13" height="1" fill="#9c6a34"/><rect x="13" y="5" width="1" height="1" fill="#f6c792"/><rect x="14" y="5" width="1" height="1" fill="#000000"/><rect x="0" y="6" width="14" height="1" fill="#9c6a34"/><rect x="14" y="6" width="1" height="1" fill="#000000"/><rect x="0" y="7" width="14" height="1" fill="#9c6a34"/><rect x="14" y="7" width="1" height="1" fill="#000000"/><rect x="1" y="8" width="13" height="1" fill="#9c6a34"/><rect x="14" y="8" width="1" height="1" fill="#000000"/><rect x="1" y="9" width="13" height="1" fill="#9c6a34"/><rect x="14" y="9" width="1" height="1" fill="#000000"/><rect x="2" y="10" width="12" height="1" fill="#9c6a34"/><rect x="14" y="10" width="1" height="1" fill="#000000"/><rect x="2" y="11" width="12" height="1" fill="#9c6a34"/><rect x="14" y="11" width="1" height="1" fill="#000000"/><rect x="3" y="12" width="1" height="1" fill="#000000"/><rect x="4" y="12" width="10" height="1" fill="#9c6a34"/><rect x="14" y="12" width="1" height="1" fill="#000000"/><rect x="4" y="13" width="11" height="1" fill="#000000"/><g transform="translate(8,8)"><rect x="3" y="0" width="1" height="1" fill="#ff0000"/><rect x="2" y="1" width="3" height="1" fill="#ff0000"/><rect x="2" y="2" width="3" height="1" fill="#ff0000"/><rect x="1" y="3" width="2" height="1" fill="#ff0000"/><rect x="3" y="3" width="1" height="1" fill="#ffffff"/><rect x="4" y="3" width="2" height="1" fill="#ff0000"/><rect x="1" y="4" width="5" height="1" fill="#ff0000"/><rect x="0" y="5" width="7" height="1" fill="#ff0000"/><rect x="0" y="6" width="2" height="1" fill="#ff0000"/><rect x="5" y="6" width="2" height="1" fill="#ff0000"/></g></svg>
<div class="t" style="left:82px;top:311px;font-size:12px;line-height:12px;color:#333333;letter-spacing:0.148px;">Points</div>
<div style="left:70px;top:339px;width:10px;height:1px;background:#a9c1e2;"></div>
<svg style="left:68px;top:336px;" width="6" height="10" viewBox="0 0 6 10" shape-rendering="crispEdges"><rect x="1" y="0" width="4" height="1" fill="#5475c2"/><rect x="0" y="1" width="6" height="1" fill="#5475c2"/><rect x="0" y="2" width="2" height="1" fill="#5475c2"/><rect x="4" y="2" width="2" height="1" fill="#5475c2"/><rect x="0" y="3" width="2" height="1" fill="#5475c2"/><rect x="4" y="3" width="2" height="1" fill="#5475c2"/><rect x="0" y="4" width="6" height="1" fill="#5475c2"/><rect x="1" y="5" width="4" height="1" fill="#5475c2"/><rect x="2" y="6" width="2" height="1" fill="#5475c2"/><rect x="2" y="7" width="2" height="1" fill="#5475c2"/><rect x="2" y="8" width="2" height="1" fill="#5475c2"/><rect x="2" y="9" width="2" height="1" fill="#5475c2"/></svg>
<svg style="left:83px;top:332px;" width="16" height="16" viewBox="0 0 16 16" shape-rendering="crispEdges"><rect x="3" y="1" width="4" height="1" fill="#000000"/><rect x="2" y="2" width="1" height="1" fill="#000000"/><rect x="3" y="2" width="4" height="1" fill="#f6c792"/><rect x="7" y="2" width="8" height="1" fill="#000000"/><rect x="1" y="3" width="1" height="1" fill="#000000"/><rect x="2" y="3" width="12" height="1" fill="#f6c792"/><rect x="14" y="3" width="1" height="1" fill="#000000"/><rect x="1" y="4" width="1" height="1" fill="#000000"/><rect x="2" y="4" width="12" height="1" fill="#f6c792"/><rect x="14" y="4" width="1" height="1" fill="#000000"/><rect x="0" y="5" width="13" height="1" fill="#9c6a34"/><rect x="13" y="5" width="1" height="1" fill="#f6c792"/><rect x="14" y="5" width="1" height="1" fill="#000000"/><rect x="0" y="6" width="14" height="1" fill="#9c6a34"/><rect x="14" y="6" width="1" height="1" fill="#000000"/><rect x="0" y="7" width="14" height="1" fill="#9c6a34"/><rect x="14" y="7" width="1" height="1" fill="#000000"/><rect x="1" y="8" width="13" height="1" fill="#9c6a34"/><rect x="14" y="8" width="1" height="1" fill="#000000"/><rect x="1" y="9" width="13" height="1" fill="#9c6a34"/><rect x="14" y="9" width="1" height="1" fill="#000000"/><rect x="2" y="10" width="12" height="1" fill="#9c6a34"/><rect x="14" y="10" width="1" height="1" fill="#000000"/><rect x="2" y="11" width="12" height="1" fill="#9c6a34"/><rect x="14" y="11" width="1" height="1" fill="#000000"/><rect x="3" y="12" width="1" height="1" fill="#000000"/><rect x="4" y="12" width="10" height="1" fill="#9c6a34"/><rect x="14" y="12" width="1" height="1" fill="#000000"/><rect x="4" y="13" width="11" height="1" fill="#000000"/></svg>
<div class="t" style="left:102px;top:334px;font-size:12px;line-height:12px;color:#333333;letter-spacing:0.217px;">StandardCartesianChart3D</div>
<div style="left:90px;top:362px;width:10px;height:1px;background:#a9c1e2;"></div>
<svg style="left:88px;top:359px;" width="6" height="10" viewBox="0 0 6 10" shape-rendering="crispEdges"><rect x="1" y="0" width="4" height="1" fill="#5475c2"/><rect x="0" y="1" width="6" height="1" fill="#5475c2"/><rect x="0" y="2" width="2" height="1" fill="#5475c2"/><rect x="4" y="2" width="2" height="1" fill="#5475c2"/><rect x="0" y="3" width="2" height="1" fill="#5475c2"/><rect x="4" y="3" width="2" height="1" fill="#5475c2"/><rect x="0" y="4" width="6" height="1" fill="#5475c2"/><rect x="1" y="5" width="4" height="1" fill="#5475c2"/><rect x="2" y="6" width="2" height="1" fill="#5475c2"/><rect x="2" y="7" width="2" height="1" fill="#5475c2"/><rect x="2" y="8" width="2" height="1" fill="#5475c2"/><rect x="2" y="9" width="2" height="1" fill="#5475c2"/></svg>
<svg style="left:103px;top:355px;" width="16" height="16" viewBox="0 0 16 16" shape-rendering="crispEdges"><rect x="3" y="1" width="4" height="1" fill="#000000"/><rect x="2" y="2" width="1" height="1" fill="#000000"/><rect x="3" y="2" width="4" height="1" fill="#f6c792"/><rect x="7" y="2" width="8" height="1" fill="#000000"/><rect x="1" y="3" width="1" height="1" fill="#000000"/><rect x="2" y="3" width="12" height="1" fill="#f6c792"/><rect x="14" y="3" width="1" height="1" fill="#000000"/><rect x="1" y="4" width="1" height="1" fill="#000000"/><rect x="2" y="4" width="12" height="1" fill="#f6c792"/><rect x="14" y="4" width="1" height="1" fill="#000000"/><rect x="0" y="5" width="13" height="1" fill="#9c6a34"/><rect x="13" y="5" width="1" height="1" fill="#f6c792"/><rect x="14" y="5" width="1" height="1" fill="#000000"/><rect x="0" y="6" width="14" height="1" fill="#9c6a34"/><rect x="14" y="6" width="1" height="1" fill="#000000"/><rect x="0" y="7" width="14" height="1" fill="#9c6a34"/><rect x="14" y="7" width="1" height="1" fill="#000000"/><rect x="1" y="8" width="13" height="1" fill="#9c6a34"/><rect x="14" y="8" width="1" height="1" fill="#000000"/><rect x="1" y="9" width="13" height="1" fill="#9c6a34"/><rect x="14" y="9" width="1" height="1" fill="#000000"/><rect x="2" y="10" width="12" height="1" fill="#9c6a34"/><rect x="14" y="10" width="1" height="1" fill="#000000"/><rect x="2" y="11" width="12" height="1" fill="#9c6a34"/><rect x="14" y="11" width="1" height="1" fill="#000000"/><rect x="3" y="12" width="1" height="1" fill="#000000"/><rect x="4" y="12" width="10" height="1" fill="#9c6a34"/><rect x="14" y="12" width="1" height="1" fill="#000000"/><rect x="4" y="13" width="11" height="1" fill="#000000"/><g transform="translate(8,8)"><rect x="3" y="0" width="1" height="1" fill="#ff0000"/><rect x="2" y="1" width="3" height="1" fill="#ff0000"/><rect x="2" y="2" width="3" height="1" fill="#ff0000"/><rect x="1" y="3" width="2" height="1" fill="#ff0000"/><rect x="3" y="3" width="1" height="1" fill="#ffffff"/><rect x="4" y="3" width="2" height="1" fill="#ff0000"/><rect x="1" y="4" width="5" height="1" fill="#ff0000"/><rect x="0" y="5" width="7" height="1" fill="#ff0000"/><rect x="0" y="6" width="2" height="1" fill="#ff0000"/><rect x="5" y="6" width="2" height="1" fill="#ff0000"/></g></svg>
<div class="t" style="left:122px;top:357px;font-size:12px;line-height:12px;color:#333333;letter-spacing:0.122px;">MyTensor</div>
<div style="left:110px;top:385px;width:10px;height:1px;background:#a9c1e2;"></div>
<svg style="left:123px;top:378px;" width="16" height="16" viewBox="0 0 16 16" shape-rendering="crispEdges"><rect x="0" y="0" width="15" height="1" fill="#7b4a12"/><rect x="0" y="1" width="1" height="1" fill="#7b4a12"/><rect x="1" y="1" width="4" height="1" fill="#33e51a"/><rect x="5" y="1" width="2" height="1" fill="#7b4a12"/><rect x="7" y="1" width="2" height="1" fill="#ffffff"/><rect x="9" y="1" width="1" height="1" fill="#7b4a12"/><rect x="10" y="1" width="3" height="1" fill="#ffffff"/><rect x="13" y="1" width="2" height="1" fill="#7b4a12"/><rect x="0" y="2" width="1" height="1" fill="#7b4a12"/><rect x="1" y="2" width="4" height="1" fill="#33e51a"/><rect x="5" y="2" width="2" height="1" fill="#7b4a12"/><rect x="7" y="2" width="2" height="1" fill="#ffffff"/><rect x="9" y="2" width="1" height="1" fill="#7b4a12"/><rect x="10" y="2" width="3" height="1" fill="#ffffff"/><rect x="13" y="2" width="2" height="1" fill="#7b4a12"/><rect x="0" y="3" width="1" height="1" fill="#7b4a12"/><rect x="1" y="3" width="4" height="1" fill="#33e51a"/><rect x="5" y="3" width="10" height="1" fill="#7b4a12"/><rect x="0" y="4" width="6" height="1" fill="#7b4a12"/><rect x="6" y="4" width="8" height="1" fill="#ffffff"/><rect x="14" y="4" width="1" height="1" fill="#7b4a12"/><rect x="0" y="5" width="1" height="1" fill="#7b4a12"/><rect x="1" y="5" width="4" height="1" fill="#ffffff"/><rect x="5" y="5" width="1" height="1" fill="#7b4a12"/><rect x="6" y="5" width="1" height="1" fill="#ffffff"/><rect x="7" y="5" width="2" height="1" fill="#000000"/><rect x="9" y="5" width="1" height="1" fill="#ffffff"/><rect x="10" y="5" width="3" height="1" fill="#000000"/><rect x="13" y="5" width="1" height="1" fill="#ffffff"/><rect x="14" y="5" width="1" height="1" fill="#7b4a12"/><rect x="0" y="6" width="6" height="1" fill="#7b4a12"/><rect x="6" y="6" width="8" height="1" fill="#ffffff"/><rect x="14" y="6" width="1" height="1" fill="#7b4a12"/><rect x="0" y="7" width="1" height="1" fill="#7b4a12"/><rect x="1" y="7" width="4" height="1" fill="#ffffff"/><rect x="5" y="7" width="1" height="1" fill="#7b4a12"/><rect x="6" y="7" width="1" height="1" fill="#ffffff"/><rect x="7" y="7" width="2" height="1" fill="#000000"/><rect x="9" y="7" width="1" height="1" fill="#ffffff"/><rect x="10" y="7" width="3" height="1" fill="#000000"/><rect x="13" y="7" width="1" height="1" fill="#ffffff"/><rect x="14" y="7" width="1" height="1" fill="#7b4a12"/><rect x="0" y="8" width="1" height="1" fill="#7b4a12"/><rect x="1" y="8" width="4" height="1" fill="#ffffff"/><rect x="5" y="8" width="1" height="1" fill="#7b4a12"/><rect x="6" y="8" width="1" height="1" fill="#ffffff"/><rect x="7" y="8" width="2" height="1" fill="#000000"/><rect x="9" y="8" width="1" height="1" fill="#ffffff"/><rect x="10" y="8" width="3" height="1" fill="#000000"/><rect x="13" y="8" width="1" height="1" fill="#ffffff"/><rect x="14" y="8" width="1" height="1" fill="#7b4a12"/><rect x="0" y="9" width="6" height="1" fill="#7b4a12"/><rect x="6" y="9" width="8" height="1" fill="#ffffff"/><rect x="14" y="9" width="1" height="1" fill="#7b4a12"/><rect x="0" y="10" width="1" height="1" fill="#7b4a12"/><rect x="1" y="10" width="4" height="1" fill="#ffffff"/><rect x="5" y="10" width="1" height="1" fill="#7b4a12"/><rect x="6" y="10" width="1" height="1" fill="#ffffff"/><rect x="7" y="10" width="2" height="1" fill="#000000"/><rect x="9" y="10" width="1" height="1" fill="#ffffff"/><rect x="10" y="10" width="2" height="1" fill="#000000"/><rect x="12" y="10" width="2" height="1" fill="#ffffff"/><rect x="14" y="10" width="1" height="1" fill="#7b4a12"/><rect x="0" y="11" width="6" height="1" fill="#7b4a12"/><rect x="6" y="11" width="8" height="1" fill="#ffffff"/><rect x="14" y="11" width="1" height="1" fill="#7b4a12"/><rect x="0" y="12" width="1" height="1" fill="#7b4a12"/><rect x="1" y="12" width="4" height="1" fill="#ffffff"/><rect x="5" y="12" width="1" height="1" fill="#7b4a12"/><rect x="6" y="12" width="1" height="1" fill="#ffffff"/><rect x="7" y="12" width="2" height="1" fill="#000000"/><rect x="9" y="12" width="5" height="1" fill="#ffffff"/><rect x="14" y="12" width="1" height="1" fill="#7b4a12"/><rect x="0" y="13" width="1" height="1" fill="#7b4a12"/><rect x="1" y="13" width="4" height="1" fill="#ffffff"/><rect x="5" y="13" width="1" height="1" fill="#7b4a12"/><rect x="6" y="13" width="8" height="1" fill="#ffffff"/><rect x="14" y="13" width="1" height="1" fill="#7b4a12"/><rect x="0" y="14" width="15" height="1" fill="#7b4a12"/><g transform="translate(8,8)"><rect x="3" y="0" width="1" height="1" fill="#ff0000"/><rect x="2" y="1" width="3" height="1" fill="#ff0000"/><rect x="2" y="2" width="3" height="1" fill="#ff0000"/><rect x="1" y="3" width="2" height="1" fill="#ff0000"/><rect x="3" y="3" width="1" height="1" fill="#ffffff"/><rect x="4" y="3" width="2" height="1" fill="#ff0000"/><rect x="1" y="4" width="5" height="1" fill="#ff0000"/><rect x="0" y="5" width="7" height="1" fill="#ff0000"/><rect x="0" y="6" width="2" height="1" fill="#ff0000"/><rect x="5" y="6" width="2" height="1" fill="#ff0000"/></g></svg>
<div class="t" style="left:142px;top:380px;font-size:12px;line-height:12px;color:#333333;letter-spacing:0.244px;">Frag0000</div>
<div style="left:110px;top:408px;width:10px;height:1px;background:#a9c1e2;"></div>
<svg style="left:123px;top:401px;" width="16" height="16" viewBox="0 0 16 16" shape-rendering="crispEdges"><rect x="0" y="0" width="15" height="1" fill="#7b4a12"/><rect x="0" y="1" width="1" height="1" fill="#7b4a12"/><rect x="1" y="1" width="4" height="1" fill="#33e51a"/><rect x="5" y="1" width="2" height="1" fill="#7b4a12"/><rect x="7" y="1" width="2" height="1" fill="#ffffff"/><rect x="9" y="1" width="1" height="1" fill="#7b4a12"/><rect x="10" y="1" width="3" height="1" fill="#ffffff"/><rect x="13" y="1" width="2" height="1" fill="#7b4a12"/><rect x="0" y="2" width="1" height="1" fill="#7b4a12"/><rect x="1" y="2" width="4" height="1" fill="#33e51a"/><rect x="5" y="2" width="2" height="1" fill="#7b4a12"/><rect x="7" y="2" width="2" height="1" fill="#ffffff"/><rect x="9" y="2" width="1" height="1" fill="#7b4a12"/><rect x="10" y="2" width="3" height="1" fill="#ffffff"/><rect x="13" y="2" width="2" height="1" fill="#7b4a12"/><rect x="0" y="3" width="1" height="1" fill="#7b4a12"/><rect x="1" y="3" width="4" height="1" fill="#33e51a"/><rect x="5" y="3" width="10" height="1" fill="#7b4a12"/><rect x="0" y="4" width="6" height="1" fill="#7b4a12"/><rect x="6" y="4" width="8" height="1" fill="#ffffff"/><rect x="14" y="4" width="1" height="1" fill="#7b4a12"/><rect x="0" y="5" width="1" height="1" fill="#7b4a12"/><rect x="1" y="5" width="4" height="1" fill="#ffffff"/><rect x="5" y="5" width="1" height="1" fill="#7b4a12"/><rect x="6" y="5" width="1" height="1" fill="#ffffff"/><rect x="7" y="5" width="2" height="1" fill="#000000"/><rect x="9" y="5" width="1" height="1" fill="#ffffff"/><rect x="10" y="5" width="3" height="1" fill="#000000"/><rect x="13" y="5" width="1" height="1" fill="#ffffff"/><rect x="14" y="5" width="1" height="1" fill="#7b4a12"/><rect x="0" y="6" width="6" height="1" fill="#7b4a12"/><rect x="6" y="6" width="8" height="1" fill="#ffffff"/><rect x="14" y="6" width="1" height="1" fill="#7b4a12"/><rect x="0" y="7" width="1" height="1" fill="#7b4a12"/><rect x="1" y="7" width="4" height="1" fill="#ffffff"/><rect x="5" y="7" width="1" height="1" fill="#7b4a12"/><rect x="6" y="7" width="1" height="1" fill="#ffffff"/><rect x="7" y="7" width="2" height="1" fill="#000000"/><rect x="9" y="7" width="1" height="1" fill="#ffffff"/><rect x="10" y="7" width="3" height="1" fill="#000000"/><rect x="13" y="7" width="1" height="1" fill="#ffffff"/><rect x="14" y="7" width="1" height="1" fill="#7b4a12"/><rect x="0" y="8" width="1" height="1" fill="#7b4a12"/><rect x="1" y="8" width="4" height="1" fill="#ffffff"/><rect x="5" y="8" width="1" height="1" fill="#7b4a12"/><rect x="6" y="8" width="1" height="1" fill="#ffffff"/><rect x="7" y="8" width="2" height="1" fill="#000000"/><rect x="9" y="8" width="1" height="1" fill="#ffffff"/><rect x="10" y="8" width="3" height="1" fill="#000000"/><rect x="13" y="8" width="1" height="1" fill="#ffffff"/><rect x="14" y="8" width="1" height="1" fill="#7b4a12"/><rect x="0" y="9" width="6" height="1" fill="#7b4a12"/><rect x="6" y="9" width="8" height="1" fill="#ffffff"/><rect x="14" y="9" width="1" height="1" fill="#7b4a12"/><rect x="0" y="10" width="1" height="1" fill="#7b4a12"/><rect x="1" y="10" width="4" height="1" fill="#ffffff"/><rect x="5" y="10" width="1" height="1" fill="#7b4a12"/><rect x="6" y="10" width="1" height="1" fill="#ffffff"/><rect x="7" y="10" width="2" height="1" fill="#000000"/><rect x="9" y="10" width="1" height="1" fill="#ffffff"/><rect x="10" y="10" width="2" height="1" fill="#000000"/><rect x="12" y="10" width="2" height="1" fill="#ffffff"/><rect x="14" y="10" width="1" height="1" fill="#7b4a12"/><rect x="0" y="11" width="6" height="1" fill="#7b4a12"/><rect x="6" y="11" width="8" height="1" fill="#ffffff"/><rect x="14" y="11" width="1" height="1" fill="#7b4a12"/><rect x="0" y="12" width="1" height="1" fill="#7b4a12"/><rect x="1" y="12" width="4" height="1" fill="#ffffff"/><rect x="5" y="12" width="1" height="1" fill="#7b4a12"/><rect x="6" y="12" width="1" height="1" fill="#ffffff"/><rect x="7" y="12" width="2" height="1" fill="#000000"/><rect x="9" y="12" width="5" height="1" fill="#ffffff"/><rect x="14" y="12" width="1" height="1" fill="#7b4a12"/><rect x="0" y="13" width="1" height="1" fill="#7b4a12"/><rect x="1" y="13" width="4" height="1" fill="#ffffff"/><rect x="5" y="13" width="1" height="1" fill="#7b4a12"/><rect x="6" y="13" width="8" height="1" fill="#ffffff"/><rect x="14" y="13" width="1" height="1" fill="#7b4a12"/><rect x="0" y="14" width="15" height="1" fill="#7b4a12"/><g transform="translate(8,8)"><rect x="3" y="0" width="1" height="1" fill="#ff0000"/><rect x="2" y="1" width="3" height="1" fill="#ff0000"/><rect x="2" y="2" width="3" height="1" fill="#ff0000"/><rect x="1" y="3" width="2" height="1" fill="#ff0000"/><rect x="3" y="3" width="1" height="1" fill="#ffffff"/><rect x="4" y="3" width="2" height="1" fill="#ff0000"/><rect x="1" y="4" width="5" height="1" fill="#ff0000"/><rect x="0" y="5" width="7" height="1" fill="#ff0000"/><rect x="0" y="6" width="2" height="1" fill="#ff0000"/><rect x="5" y="6" width="2" height="1" fill="#ff0000"/></g></svg>
<div class="t" style="left:142px;top:403px;font-size:12px;line-height:12px;color:#333333;letter-spacing:0.244px;">Frag0001</div>
<div style="left:110px;top:431px;width:10px;height:1px;background:#a9c1e2;"></div>
<svg style="left:123px;top:424px;" width="16" height="16" viewBox="0 0 16 16" shape-rendering="crispEdges"><rect x="0" y="0" width="15" height="1" fill="#7b4a12"/><rect x="0" y="1" width="1" height="1" fill="#7b4a12"/><rect x="1" y="1" width="4" height="1" fill="#33e51a"/><rect x="5" y="1" width="2" height="1" fill="#7b4a12"/><rect x="7" y="1" width="2" height="1" fill="#ffffff"/><rect x="9" y="1" width="1" height="1" fill="#7b4a12"/><rect x="10" y="1" width="3" height="1" fill="#ffffff"/><rect x="13" y="1" width="2" height="1" fill="#7b4a12"/><rect x="0" y="2" width="1" height="1" fill="#7b4a12"/><rect x="1" y="2" width="4" height="1" fill="#33e51a"/><rect x="5" y="2" width="2" height="1" fill="#7b4a12"/><rect x="7" y="2" width="2" height="1" fill="#ffffff"/><rect x="9" y="2" width="1" height="1" fill="#7b4a12"/><rect x="10" y="2" width="3" height="1" fill="#ffffff"/><rect x="13" y="2" width="2" height="1" fill="#7b4a12"/><rect x="0" y="3" width="1" height="1" fill="#7b4a12"/><rect x="1" y="3" width="4" height="1" fill="#33e51a"/><rect x="5" y="3" width="10" height="1" fill="#7b4a12"/><rect x="0" y="4" width="6" height="1" fill="#7b4a12"/><rect x="6" y="4" width="8" height="1" fill="#ffffff"/><rect x="14" y="4" width="1" height="1" fill="#7b4a12"/><rect x="0" y="5" width="1" height="1" fill="#7b4a12"/><rect x="1" y="5" width="4" height="1" fill="#ffffff"/><rect x="5" y="5" width="1" height="1" fill="#7b4a12"/><rect x="6" y="5" width="1" height="1" fill="#ffffff"/><rect x="7" y="5" width="2" height="1" fill="#000000"/><rect x="9" y="5" width="1" height="1" fill="#ffffff"/><rect x="10" y="5" width="3" height="1" fill="#000000"/><rect x="13" y="5" width="1" height="1" fill="#ffffff"/><rect x="14" y="5" width="1" height="1" fill="#7b4a12"/><rect x="0" y="6" width="6" height="1" fill="#7b4a12"/><rect x="6" y="6" width="8" height="1" fill="#ffffff"/><rect x="14" y="6" width="1" height="1" fill="#7b4a12"/><rect x="0" y="7" width="1" height="1" fill="#7b4a12"/><rect x="1" y="7" width="4" height="1" fill="#ffffff"/><rect x="5" y="7" width="1" height="1" fill="#7b4a12"/><rect x="6" y="7" width="1" height="1" fill="#ffffff"/><rect x="7" y="7" width="2" height="1" fill="#000000"/><rect x="9" y="7" width="1" height="1" fill="#ffffff"/><rect x="10" y="7" width="3" height="1" fill="#000000"/><rect x="13" y="7" width="1" height="1" fill="#ffffff"/><rect x="14" y="7" width="1" height="1" fill="#7b4a12"/><rect x="0" y="8" width="1" height="1" fill="#7b4a12"/><rect x="1" y="8" width="4" height="1" fill="#ffffff"/><rect x="5" y="8" width="1" height="1" fill="#7b4a12"/><rect x="6" y="8" width="1" height="1" fill="#ffffff"/><rect x="7" y="8" width="2" height="1" fill="#000000"/><rect x="9" y="8" width="1" height="1" fill="#ffffff"/><rect x="10" y="8" width="3" height="1" fill="#000000"/><rect x="13" y="8" width="1" height="1" fill="#ffffff"/><rect x="14" y="8" width="1" height="1" fill="#7b4a12"/><rect x="0" y="9" width="6" height="1" fill="#7b4a12"/><rect x="6" y="9" width="8" height="1" fill="#ffffff"/><rect x="14" y="9" width="1" height="1" fill="#7b4a12"/><rect x="0" y="10" width="1" height="1" fill="#7b4a12"/><rect x="1" y="10" width="4" height="1" fill="#ffffff"/><rect x="5" y="10" width="1" height="1" fill="#7b4a12"/><rect x="6" y="10" width="1" height="1" fill="#ffffff"/><rect x="7" y="10" width="2" height="1" fill="#000000"/><rect x="9" y="10" width="1" height="1" fill="#ffffff"/><rect x="10" y="10" width="2" height="1" fill="#000000"/><rect x="12" y="10" width="2" height="1" fill="#ffffff"/><rect x="14" y="10" width="1" height="1" fill="#7b4a12"/><rect x="0" y="11" width="6" height="1" fill="#7b4a12"/><rect x="6" y="11" width="8" height="1" fill="#ffffff"/><rect x="14" y="11" width="1" height="1" fill="#7b4a12"/><rect x="0" y="12" width="1" height="1" fill="#7b4a12"/><rect x="1" y="12" width="4" height="1" fill="#ffffff"/><rect x="5" y="12" width="1" height="1" fill="#7b4a12"/><rect x="6" y="12" width="1" height="1" fill="#ffffff"/><rect x="7" y="12" width="2" height="1" fill="#000000"/><rect x="9" y="12" width="5" height="1" fill="#ffffff"/><rect x="14" y="12" width="1" height="1" fill="#7b4a12"/><rect x="0" y="13" width="1" height="1" fill="#7b4a12"/><rect x="1" y="13" width="4" height="1" fill="#ffffff"/><rect x="5" y="13" width="1" height="1" fill="#7b4a12"/><rect x="6" y="13" width="8" height="1" fill="#ffffff"/><rect x="14" y="13" width="1" height="1" fill="#7b4a12"/><rect x="0" y="14" width="15" height="1" fill="#7b4a12"/><g transform="translate(8,8)"><rect x="3" y="0" width="1" height="1" fill="#ff0000"/><rect x="2" y="1" width="3" height="1" fill="#ff0000"/><rect x="2" y="2" width="3" height="1" fill="#ff0000"/><rect x="1" y="3" width="2" height="1" fill="#ff0000"/><rect x="3" y="3" width="1" height="1" fill="#ffffff"/><rect x="4" y="3" width="2" height="1" fill="#ff0000"/><rect x="1" y="4" width="5" height="1" fill="#ff0000"/><rect x="0" y="5" width="7" height="1" fill="#ff0000"/><rect x="0" y="6" width="2" height="1" fill="#ff0000"/><rect x="5" y="6" width="2" height="1" fill="#ff0000"/></g></svg>
<div class="t" style="left:142px;top:426px;font-size:12px;line-height:12px;color:#333333;letter-spacing:0.257px;">Frag00010</div>
<div style="left:110px;top:454px;width:10px;height:1px;background:#a9c1e2;"></div>
<svg style="left:123px;top:447px;" width="16" height="16" viewBox="0 0 16 16" shape-rendering="crispEdges"><rect x="0" y="0" width="15" height="1" fill="#7b4a12"/><rect x="0" y="1" width="1" height="1" fill="#7b4a12"/><rect x="1" y="1" width="4" height="1" fill="#33e51a"/><rect x="5" y="1" width="2" height="1" fill="#7b4a12"/><rect x="7" y="1" width="2" height="1" fill="#ffffff"/><rect x="9" y="1" width="1" height="1" fill="#7b4a12"/><rect x="10" y="1" width="3" height="1" fill="#ffffff"/><rect x="13" y="1" width="2" height="1" fill="#7b4a12"/><rect x="0" y="2" width="1" height="1" fill="#7b4a12"/><rect x="1" y="2" width="4" height="1" fill="#33e51a"/><rect x="5" y="2" width="2" height="1" fill="#7b4a12"/><rect x="7" y="2" width="2" height="1" fill="#ffffff"/><rect x="9" y="2" width="1" height="1" fill="#7b4a12"/><rect x="10" y="2" width="3" height="1" fill="#ffffff"/><rect x="13" y="2" width="2" height="1" fill="#7b4a12"/><rect x="0" y="3" width="1" height="1" fill="#7b4a12"/><rect x="1" y="3" width="4" height="1" fill="#33e51a"/><rect x="5" y="3" width="10" height="1" fill="#7b4a12"/><rect x="0" y="4" width="6" height="1" fill="#7b4a12"/><rect x="6" y="4" width="8" height="1" fill="#ffffff"/><rect x="14" y="4" width="1" height="1" fill="#7b4a12"/><rect x="0" y="5" width="1" height="1" fill="#7b4a12"/><rect x="1" y="5" width="4" height="1" fill="#ffffff"/><rect x="5" y="5" width="1" height="1" fill="#7b4a12"/><rect x="6" y="5" width="1" height="1" fill="#ffffff"/><rect x="7" y="5" width="2" height="1" fill="#000000"/><rect x="9" y="5" width="1" height="1" fill="#ffffff"/><rect x="10" y="5" width="3" height="1" fill="#000000"/><rect x="13" y="5" width="1" height="1" fill="#ffffff"/><rect x="14" y="5" width="1" height="1" fill="#7b4a12"/><rect x="0" y="6" width="6" height="1" fill="#7b4a12"/><rect x="6" y="6" width="8" height="1" fill="#ffffff"/><rect x="14" y="6" width="1" height="1" fill="#7b4a12"/><rect x="0" y="7" width="1" height="1" fill="#7b4a12"/><rect x="1" y="7" width="4" height="1" fill="#ffffff"/><rect x="5" y="7" width="1" height="1" fill="#7b4a12"/><rect x="6" y="7" width="1" height="1" fill="#ffffff"/><rect x="7" y="7" width="2" height="1" fill="#000000"/><rect x="9" y="7" width="1" height="1" fill="#ffffff"/><rect x="10" y="7" width="3" height="1" fill="#000000"/><rect x="13" y="7" width="1" height="1" fill="#ffffff"/><rect x="14" y="7" width="1" height="1" fill="#7b4a12"/><rect x="0" y="8" width="1" height="1" fill="#7b4a12"/><rect x="1" y="8" width="4" height="1" fill="#ffffff"/><rect x="5" y="8" width="1" height="1" fill="#7b4a12"/><rect x="6" y="8" width="1" height="1" fill="#ffffff"/><rect x="7" y="8" width="2" height="1" fill="#000000"/><rect x="9" y="8" width="1" height="1" fill="#ffffff"/><rect x="10" y="8" width="3" height="1" fill="#000000"/><rect x="13" y="8" width="1" height="1" fill="#ffffff"/><rect x="14" y="8" width="1" height="1" fill="#7b4a12"/><rect x="0" y="9" width="6" height="1" fill="#7b4a12"/><rect x="6" y="9" width="8" height="1" fill="#ffffff"/><rect x="14" y="9" width="1" height="1" fill="#7b4a12"/><rect x="0" y="10" width="1" height="1" fill="#7b4a12"/><rect x="1" y="10" width="4" height="1" fill="#ffffff"/><rect x="5" y="10" width="1" height="1" fill="#7b4a12"/><rect x="6" y="10" width="1" height="1" fill="#ffffff"/><rect x="7" y="10" width="2" height="1" fill="#000000"/><rect x="9" y="10" width="1" height="1" fill="#ffffff"/><rect x="10" y="10" width="2" height="1" fill="#000000"/><rect x="12" y="10" width="2" height="1" fill="#ffffff"/><rect x="14" y="10" width="1" height="1" fill="#7b4a12"/><rect x="0" y="11" width="6" height="1" fill="#7b4a12"/><rect x="6" y="11" width="8" height="1" fill="#ffffff"/><rect x="14" y="11" width="1" height="1" fill="#7b4a12"/><rect x="0" y="12" width="1" height="1" fill="#7b4a12"/><rect x="1" y="12" width="4" height="1" fill="#ffffff"/><rect x="5" y="12" width="1" height="1" fill="#7b4a12"/><rect x="6" y="12" width="1" height="1" fill="#ffffff"/><rect x="7" y="12" width="2" height="1" fill="#000000"/><rect x="9" y="12" width="5" height="1" fill="#ffffff"/><rect x="14" y="12" width="1" height="1" fill="#7b4a12"/><rect x="0" y="13" width="1" height="1" fill="#7b4a12"/><rect x="1" y="13" width="4" height="1" fill="#ffffff"/><rect x="5" y="13" width="1" height="1" fill="#7b4a12"/><rect x="6" y="13" width="8" height="1" fill="#ffffff"/><rect x="14" y="13" width="1" height="1" fill="#7b4a12"/><rect x="0" y="14" width="15" height="1" fill="#7b4a12"/><g transform="translate(8,8)"><rect x="3" y="0" width="1" height="1" fill="#ff0000"/><rect x="2" y="1" width="3" height="1" fill="#ff0000"/><rect x="2" y="2" width="3" height="1" fill="#ff0000"/><rect x="1" y="3" width="2" height="1" fill="#ff0000"/><rect x="3" y="3" width="1" height="1" fill="#ffffff"/><rect x="4" y="3" width="2" height="1" fill="#ff0000"/><rect x="1" y="4" width="5" height="1" fill="#ff0000"/><rect x="0" y="5" width="7" height="1" fill="#ff0000"/><rect x="0" y="6" width="2" height="1" fill="#ff0000"/><rect x="5" y="6" width="2" height="1" fill="#ff0000"/></g></svg>
<div class="t" style="left:142px;top:449px;font-size:12px;line-height:12px;color:#333333;letter-spacing:0.257px;">Frag00011</div>
<div style="left:110px;top:477px;width:10px;height:1px;background:#a9c1e2;"></div>
<svg style="left:123px;top:470px;" width="16" height="16" viewBox="0 0 16 16" shape-rendering="crispEdges"><rect x="0" y="0" width="15" height="1" fill="#7b4a12"/><rect x="0" y="1" width="1" height="1" fill="#7b4a12"/><rect x="1" y="1" width="4" height="1" fill="#33e51a"/><rect x="5" y="1" width="2" height="1" fill="#7b4a12"/><rect x="7" y="1" width="2" height="1" fill="#ffffff"/><rect x="9" y="1" width="1" height="1" fill="#7b4a12"/><rect x="10" y="1" width="3" height="1" fill="#ffffff"/><rect x="13" y="1" width="2" height="1" fill="#7b4a12"/><rect x="0" y="2" width="1" height="1" fill="#7b4a12"/><rect x="1" y="2" width="4" height="1" fill="#33e51a"/><rect x="5" y="2" width="2" height="1" fill="#7b4a12"/><rect x="7" y="2" width="2" height="1" fill="#ffffff"/><rect x="9" y="2" width="1" height="1" fill="#7b4a12"/><rect x="10" y="2" width="3" height="1" fill="#ffffff"/><rect x="13" y="2" width="2" height="1" fill="#7b4a12"/><rect x="0" y="3" width="1" height="1" fill="#7b4a12"/><rect x="1" y="3" width="4" height="1" fill="#33e51a"/><rect x="5" y="3" width="10" height="1" fill="#7b4a12"/><rect x="0" y="4" width="6" height="1" fill="#7b4a12"/><rect x="6" y="4" width="8" height="1" fill="#ffffff"/><rect x="14" y="4" width="1" height="1" fill="#7b4a12"/><rect x="0" y="5" width="1" height="1" fill="#7b4a12"/><rect x="1" y="5" width="4" height="1" fill="#ffffff"/><rect x="5" y="5" width="1" height="1" fill="#7b4a12"/><rect x="6" y="5" width="1" height="1" fill="#ffffff"/><rect x="7" y="5" width="2" height="1" fill="#000000"/><rect x="9" y="5" width="1" height="1" fill="#ffffff"/><rect x="10" y="5" width="3" height="1" fill="#000000"/><rect x="13" y="5" width="1" height="1" fill="#ffffff"/><rect x="14" y="5" width="1" height="1" fill="#7b4a12"/><rect x="0" y="6" width="6" height="1" fill="#7b4a12"/><rect x="6" y="6" width="8" height="1" fill="#ffffff"/><rect x="14" y="6" width="1" height="1" fill="#7b4a12"/><rect x="0" y="7" width="1" height="1" fill="#7b4a12"/><rect x="1" y="7" width="4" height="1" fill="#ffffff"/><rect x="5" y="7" width="1" height="1" fill="#7b4a12"/><rect x="6" y="7" width="1" height="1" fill="#ffffff"/><rect x="7" y="7" width="2" height="1" fill="#000000"/><rect x="9" y="7" width="1" height="1" fill="#ffffff"/><rect x="10" y="7" width="3" height="1" fill="#000000"/><rect x="13" y="7" width="1" height="1" fill="#ffffff"/><rect x="14" y="7" width="1" height="1" fill="#7b4a12"/><rect x="0" y="8" width="1" height="1" fill="#7b4a12"/><rect x="1" y="8" width="4" height="1" fill="#ffffff"/><rect x="5" y="8" width="1" height="1" fill="#7b4a12"/><rect x="6" y="8" width="1" height="1" fill="#ffffff"/><rect x="7" y="8" width="2" height="1" fill="#000000"/><rect x="9" y="8" width="1" height="1" fill="#ffffff"/><rect x="10" y="8" width="3" height="1" fill="#000000"/><rect x="13" y="8" width="1" height="1" fill="#ffffff"/><rect x="14" y="8" width="1" height="1" fill="#7b4a12"/><rect x="0" y="9" width="6" height="1" fill="#7b4a12"/><rect x="6" y="9" width="8" height="1" fill="#ffffff"/><rect x="14" y="9" width="1" height="1" fill="#7b4a12"/><rect x="0" y="10" width="1" height="1" fill="#7b4a12"/><rect x="1" y="10" width="4" height="1" fill="#ffffff"/><rect x="5" y="10" width="1" height="1" fill="#7b4a12"/><rect x="6" y="10" width="1" height="1" fill="#ffffff"/><rect x="7" y="10" width="2" height="1" fill="#000000"/><rect x="9" y="10" width="1" height="1" fill="#ffffff"/><rect x="10" y="10" width="2" height="1" fill="#000000"/><rect x="12" y="10" width="2" height="1" fill="#ffffff"/><rect x="14" y="10" width="1" height="1" fill="#7b4a12"/><rect x="0" y="11" width="6" height="1" fill="#7b4a12"/><rect x="6" y="11" width="8" height="1" fill="#ffffff"/><rect x="14" y="11" width="1" height="1" fill="#7b4a12"/><rect x="0" y="12" width="1" height="1" fill="#7b4a12"/><rect x="1" y="12" width="4" height="1" fill="#ffffff"/><rect x="5" y="12" width="1" height="1" fill="#7b4a12"/><rect x="6" y="12" width="1" height="1" fill="#ffffff"/><rect x="7" y="12" width="2" height="1" fill="#000000"/><rect x="9" y="12" width="5" height="1" fill="#ffffff"/><rect x="14" y="12" width="1" height="1" fill="#7b4a12"/><rect x="0" y="13" width="1" height="1" fill="#7b4a12"/><rect x="1" y="13" width="4" height="1" fill="#ffffff"/><rect x="5" y="13" width="1" height="1" fill="#7b4a12"/><rect x="6" y="13" width="8" height="1" fill="#ffffff"/><rect x="14" y="13" width="1" height="1" fill="#7b4a12"/><rect x="0" y="14" width="15" height="1" fill="#7b4a12"/><g transform="translate(8,8)"><rect x="3" y="0" width="1" height="1" fill="#ff0000"/><rect x="2" y="1" width="3" height="1" fill="#ff0000"/><rect x="2" y="2" width="3" height="1" fill="#ff0000"/><rect x="1" y="3" width="2" height="1" fill="#ff0000"/><rect x="3" y="3" width="1" height="1" fill="#ffffff"/><rect x="4" y="3" width="2" height="1" fill="#ff0000"/><rect x="1" y="4" width="5" height="1" fill="#ff0000"/><rect x="0" y="5" width="7" height="1" fill="#ff0000"/><rect x="0" y="6" width="2" height="1" fill="#ff0000"/><rect x="5" y="6" width="2" height="1" fill="#ff0000"/></g></svg>
<div class="t" style="left:142px;top:472px;font-size:12px;line-height:12px;color:#333333;letter-spacing:0.257px;">Frag00012</div>
<div style="left:110px;top:500px;width:10px;height:1px;background:#a9c1e2;"></div>
<svg style="left:123px;top:493px;" width="16" height="16" viewBox="0 0 16 16" shape-rendering="crispEdges"><rect x="0" y="0" width="15" height="1" fill="#7b4a12"/><rect x="0" y="1" width="1" height="1" fill="#7b4a12"/><rect x="1" y="1" width="4" height="1" fill="#33e51a"/><rect x="5" y="1" width="2" height="1" fill="#7b4a12"/><rect x="7" y="1" width="2" height="1" fill="#ffffff"/><rect x="9" y="1" width="1" height="1" fill="#7b4a12"/><rect x="10" y="1" width="3" height="1" fill="#ffffff"/><rect x="13" y="1" width="2" height="1" fill="#7b4a12"/><rect x="0" y="2" width="1" height="1" fill="#7b4a12"/><rect x="1" y="2" width="4" height="1" fill="#33e51a"/><rect x="5" y="2" width="2" height="1" fill="#7b4a12"/><rect x="7" y="2" width="2" height="1" fill="#ffffff"/><rect x="9" y="2" width="1" height="1" fill="#7b4a12"/><rect x="10" y="2" width="3" height="1" fill="#ffffff"/><rect x="13" y="2" width="2" height="1" fill="#7b4a12"/><rect x="0" y="3" width="1" height="1" fill="#7b4a12"/><rect x="1" y="3" width="4" height="1" fill="#33e51a"/><rect x="5" y="3" width="10" height="1" fill="#7b4a12"/><rect x="0" y="4" width="6" height="1" fill="#7b4a12"/><rect x="6" y="4" width="8" height="1" fill="#ffffff"/><rect x="14" y="4" width="1" height="1" fill="#7b4a12"/><rect x="0" y="5" width="1" height="1" fill="#7b4a12"/><rect x="1" y="5" width="4" height="1" fill="#ffffff"/><rect x="5" y="5" width="1" height="1" fill="#7b4a12"/><rect x="6" y="5" width="1" height="1" fill="#ffffff"/><rect x="7" y="5" width="2" height="1" fill="#000000"/><rect x="9" y="5" width="1" height="1" fill="#ffffff"/><rect x="10" y="5" width="3" height="1" fill="#000000"/><rect x="13" y="5" width="1" height="1" fill="#ffffff"/><rect x="14" y="5" width="1" height="1" fill="#7b4a12"/><rect x="0" y="6" width="6" height="1" fill="#7b4a12"/><rect x="6" y="6" width="8" height="1" fill="#ffffff"/><rect x="14" y="6" width="1" height="1" fill="#7b4a12"/><rect x="0" y="7" width="1" height="1" fill="#7b4a12"/><rect x="1" y="7" width="4" height="1" fill="#ffffff"/><rect x="5" y="7" width="1" height="1" fill="#7b4a12"/><rect x="6" y="7" width="1" height="1" fill="#ffffff"/><rect x="7" y="7" width="2" height="1" fill="#000000"/><rect x="9" y="7" width="1" height="1" fill="#ffffff"/><rect x="10" y="7" width="3" height="1" fill="#000000"/><rect x="13" y="7" width="1" height="1" fill="#ffffff"/><rect x="14" y="7" width="1" height="1" fill="#7b4a12"/><rect x="0" y="8" width="1" height="1" fill="#7b4a12"/><rect x="1" y="8" width="4" height="1" fill="#ffffff"/><rect x="5" y="8" width="1" height="1" fill="#7b4a12"/><rect x="6" y="8" width="1" height="1" fill="#ffffff"/><rect x="7" y="8" width="2" height="1" fill="#000000"/><rect x="9" y="8" width="1" height="1" fill="#ffffff"/><rect x="10" y="8" width="3" height="1" fill="#000000"/><rect x="13" y="8" width="1" height="1" fill="#ffffff"/><rect x="14" y="8" width="1" height="1" fill="#7b4a12"/><rect x="0" y="9" width="6" height="1" fill="#7b4a12"/><rect x="6" y="9" width="8" height="1" fill="#ffffff"/><rect x="14" y="9" width="1" height="1" fill="#7b4a12"/><rect x="0" y="10" width="1" height="1" fill="#7b4a12"/><rect x="1" y="10" width="4" height="1" fill="#ffffff"/><rect x="5" y="10" width="1" height="1" fill="#7b4a12"/><rect x="6" y="10" width="1" height="1" fill="#ffffff"/><rect x="7" y="10" width="2" height="1" fill="#000000"/><rect x="9" y="10" width="1" height="1" fill="#ffffff"/><rect x="10" y="10" width="2" height="1" fill="#000000"/><rect x="12" y="10" width="2" height="1" fill="#ffffff"/><rect x="14" y="10" width="1" height="1" fill="#7b4a12"/><rect x="0" y="11" width="6" height="1" fill="#7b4a12"/><rect x="6" y="11" width="8" height="1" fill="#ffffff"/><rect x="14" y="11" width="1" height="1" fill="#7b4a12"/><rect x="0" y="12" width="1" height="1" fill="#7b4a12"/><rect x="1" y="12" width="4" height="1" fill="#ffffff"/><rect x="5" y="12" width="1" height="1" fill="#7b4a12"/><rect x="6" y="12" width="1" height="1" fill="#ffffff"/><rect x="7" y="12" width="2" height="1" fill="#000000"/><rect x="9" y="12" width="5" height="1" fill="#ffffff"/><rect x="14" y="12" width="1" height="1" fill="#7b4a12"/><rect x="0" y="13" width="1" height="1" fill="#7b4a12"/><rect x="1" y="13" width="4" height="1" fill="#ffffff"/><rect x="5" y="13" width="1" height="1" fill="#7b4a12"/><rect x="6" y="13" width="8" height="1" fill="#ffffff"/><rect x="14" y="13" width="1" height="1" fill="#7b4a12"/><rect x="0" y="14" width="15" height="1" fill="#7b4a12"/><g transform="translate(8,8)"><rect x="3" y="0" width="1" height="1" fill="#ff0000"/><rect x="2" y="1" width="3" height="1" fill="#ff0000"/><rect x="2" y="2" width="3" height="1" fill="#ff0000"/><rect x="1" y="3" width="2" height="1" fill="#ff0000"/><rect x="3" y="3" width="1" height="1" fill="#ffffff"/><rect x="4" y="3" width="2" height="1" fill="#ff0000"/><rect x="1" y="4" width="5" height="1" fill="#ff0000"/><rect x="0" y="5" width="7" height="1" fill="#ff0000"/><rect x="0" y="6" width="2" height="1" fill="#ff0000"/><rect x="5" y="6" width="2" height="1" fill="#ff0000"/></g></svg>
<div class="t" style="left:142px;top:495px;font-size:12px;line-height:12px;color:#333333;letter-spacing:0.257px;">Frag00013</div>
<div style="left:110px;top:523px;width:10px;height:1px;background:#a9c1e2;"></div>
<svg style="left:123px;top:516px;" width="16" height="16" viewBox="0 0 16 16" shape-rendering="crispEdges"><rect x="0" y="0" width="15" height="1" fill="#7b4a12"/><rect x="0" y="1" width="1" height="1" fill="#7b4a12"/><rect x="1" y="1" width="4" height="1" fill="#33e51a"/><rect x="5" y="1" width="2" height="1" fill="#7b4a12"/><rect x="7" y="1" width="2" height="1" fill="#ffffff"/><rect x="9" y="1" width="1" height="1" fill="#7b4a12"/><rect x="10" y="1" width="3" height="1" fill="#ffffff"/><rect x="13" y="1" width="2" height="1" fill="#7b4a12"/><rect x="0" y="2" width="1" height="1" fill="#7b4a12"/><rect x="1" y="2" width="4" height="1" fill="#33e51a"/><rect x="5" y="2" width="2" height="1" fill="#7b4a12"/><rect x="7" y="2" width="2" height="1" fill="#ffffff"/><rect x="9" y="2" width="1" height="1" fill="#7b4a12"/><rect x="10" y="2" width="3" height="1" fill="#ffffff"/><rect x="13" y="2" width="2" height="1" fill="#7b4a12"/><rect x="0" y="3" width="1" height="1" fill="#7b4a12"/><rect x="1" y="3" width="4" height="1" fill="#33e51a"/><rect x="5" y="3" width="10" height="1" fill="#7b4a12"/><rect x="0" y="4" width="6" height="1" fill="#7b4a12"/><rect x="6" y="4" width="8" height="1" fill="#ffffff"/><rect x="14" y="4" width="1" height="1" fill="#7b4a12"/><rect x="0" y="5" width="1" height="1" fill="#7b4a12"/><rect x="1" y="5" width="4" height="1" fill="#ffffff"/><rect x="5" y="5" width="1" height="1" fill="#7b4a12"/><rect x="6" y="5" width="1" height="1" fill="#ffffff"/><rect x="7" y="5" width="2" height="1" fill="#000000"/><rect x="9" y="5" width="1" height="1" fill="#ffffff"/><rect x="10" y="5" width="3" height="1" fill="#000000"/><rect x="13" y="5" width="1" height="1" fill="#ffffff"/><rect x="14" y="5" width="1" height="1" fill="#7b4a12"/><rect x="0" y="6" width="6" height="1" fill="#7b4a12"/><rect x="6" y="6" width="8" height="1" fill="#ffffff"/><rect x="14" y="6" width="1" height="1" fill="#7b4a12"/><rect x="0" y="7" width="1" height="1" fill="#7b4a12"/><rect x="1" y="7" width="4" height="1" fill="#ffffff"/><rect x="5" y="7" width="1" height="1" fill="#7b4a12"/><rect x="6" y="7" width="1" height="1" fill="#ffffff"/><rect x="7" y="7" width="2" height="1" fill="#000000"/><rect x="9" y="7" width="1" height="1" fill="#ffffff"/><rect x="10" y="7" width="3" height="1" fill="#000000"/><rect x="13" y="7" width="1" height="1" fill="#ffffff"/><rect x="14" y="7" width="1" height="1" fill="#7b4a12"/><rect x="0" y="8" width="1" height="1" fill="#7b4a12"/><rect x="1" y="8" width="4" height="1" fill="#ffffff"/><rect x="5" y="8" width="1" height="1" fill="#7b4a12"/><rect x="6" y="8" width="1" height="1" fill="#ffffff"/><rect x="7" y="8" width="2" height="1" fill="#000000"/><rect x="9" y="8" width="1" height="1" fill="#ffffff"/><rect x="10" y="8" width="3" height="1" fill="#000000"/><rect x="13" y="8" width="1" height="1" fill="#ffffff"/><rect x="14" y="8" width="1" height="1" fill="#7b4a12"/><rect x="0" y="9" width="6" height="1" fill="#7b4a12"/><rect x="6" y="9" width="8" height="1" fill="#ffffff"/><rect x="14" y="9" width="1" height="1" fill="#7b4a12"/><rect x="0" y="10" width="1" height="1" fill="#7b4a12"/><rect x="1" y="10" width="4" height="1" fill="#ffffff"/><rect x="5" y="10" width="1" height="1" fill="#7b4a12"/><rect x="6" y="10" width="1" height="1" fill="#ffffff"/><rect x="7" y="10" width="2" height="1" fill="#000000"/><rect x="9" y="10" width="1" height="1" fill="#ffffff"/><rect x="10" y="10" width="2" height="1" fill="#000000"/><rect x="12" y="10" width="2" height="1" fill="#ffffff"/><rect x="14" y="10" width="1" height="1" fill="#7b4a12"/><rect x="0" y="11" width="6" height="1" fill="#7b4a12"/><rect x="6" y="11" width="8" height="1" fill="#ffffff"/><rect x="14" y="11" width="1" height="1" fill="#7b4a12"/><rect x="0" y="12" width="1" height="1" fill="#7b4a12"/><rect x="1" y="12" width="4" height="1" fill="#ffffff"/><rect x="5" y="12" width="1" height="1" fill="#7b4a12"/><rect x="6" y="12" width="1" height="1" fill="#ffffff"/><rect x="7" y="12" width="2" height="1" fill="#000000"/><rect x="9" y="12" width="5" height="1" fill="#ffffff"/><rect x="14" y="12" width="1" height="1" fill="#7b4a12"/><rect x="0" y="13" width="1" height="1" fill="#7b4a12"/><rect x="1" y="13" width="4" height="1" fill="#ffffff"/><rect x="5" y="13" width="1" height="1" fill="#7b4a12"/><rect x="6" y="13" width="8" height="1" fill="#ffffff"/><rect x="14" y="13" width="1" height="1" fill="#7b4a12"/><rect x="0" y="14" width="15" height="1" fill="#7b4a12"/><g transform="translate(8,8)"><rect x="3" y="0" width="1" height="1" fill="#ff0000"/><rect x="2" y="1" width="3" height="1" fill="#ff0000"/><rect x="2" y="2" width="3" height="1" fill="#ff0000"/><rect x="1" y="3" width="2" height="1" fill="#ff0000"/><rect x="3" y="3" width="1" height="1" fill="#ffffff"/><rect x="4" y="3" width="2" height="1" fill="#ff0000"/><rect x="1" y="4" width="5" height="1" fill="#ff0000"/><rect x="0" y="5" width="7" height="1" fill="#ff0000"/><rect x="0" y="6" width="2" height="1" fill="#ff0000"/><rect x="5" y="6" width="2" height="1" fill="#ff0000"/></g></svg>
<div class="t" style="left:142px;top:518px;font-size:12px;line-height:12px;color:#333333;letter-spacing:0.257px;">Frag00014</div>
<div style="left:110px;top:546px;width:10px;height:1px;background:#a9c1e2;"></div>
<svg style="left:123px;top:539px;" width="16" height="16" viewBox="0 0 16 16" shape-rendering="crispEdges"><rect x="0" y="0" width="15" height="1" fill="#7b4a12"/><rect x="0" y="1" width="1" height="1" fill="#7b4a12"/><rect x="1" y="1" width="4" height="1" fill="#33e51a"/><rect x="5" y="1" width="2" height="1" fill="#7b4a12"/><rect x="7" y="1" width="2" height="1" fill="#ffffff"/><rect x="9" y="1" width="1" height="1" fill="#7b4a12"/><rect x="10" y="1" width="3" height="1" fill="#ffffff"/><rect x="13" y="1" width="2" height="1" fill="#7b4a12"/><rect x="0" y="2" width="1" height="1" fill="#7b4a12"/><rect x="1" y="2" width="4" height="1" fill="#33e51a"/><rect x="5" y="2" width="2" height="1" fill="#7b4a12"/><rect x="7" y="2" width="2" height="1" fill="#ffffff"/><rect x="9" y="2" width="1" height="1" fill="#7b4a12"/><rect x="10" y="2" width="3" height="1" fill="#ffffff"/><rect x="13" y="2" width="2" height="1" fill="#7b4a12"/><rect x="0" y="3" width="1" height="1" fill="#7b4a12"/><rect x="1" y="3" width="4" height="1" fill="#33e51a"/><rect x="5" y="3" width="10" height="1" fill="#7b4a12"/><rect x="0" y="4" width="6" height="1" fill="#7b4a12"/><rect x="6" y="4" width="8" height="1" fill="#ffffff"/><rect x="14" y="4" width="1" height="1" fill="#7b4a12"/><rect x="0" y="5" width="1" height="1" fill="#7b4a12"/><rect x="1" y="5" width="4" height="1" fill="#ffffff"/><rect x="5" y="5" width="1" height="1" fill="#7b4a12"/><rect x="6" y="5" width="1" height="1" fill="#ffffff"/><rect x="7" y="5" width="2" height="1" fill="#000000"/><rect x="9" y="5" width="1" height="1" fill="#ffffff"/><rect x="10" y="5" width="3" height="1" fill="#000000"/><rect x="13" y="5" width="1" height="1" fill="#ffffff"/><rect x="14" y="5" width="1" height="1" fill="#7b4a12"/><rect x="0" y="6" width="6" height="1" fill="#7b4a12"/><rect x="6" y="6" width="8" height="1" fill="#ffffff"/><rect x="14" y="6" width="1" height="1" fill="#7b4a12"/><rect x="0" y="7" width="1" height="1" fill="#7b4a12"/><rect x="1" y="7" width="4" height="1" fill="#ffffff"/><rect x="5" y="7" width="1" height="1" fill="#7b4a12"/><rect x="6" y="7" width="1" height="1" fill="#ffffff"/><rect x="7" y="7" width="2" height="1" fill="#000000"/><rect x="9" y="7" width="1" height="1" fill="#ffffff"/><rect x="10" y="7" width="3" height="1" fill="#000000"/><rect x="13" y="7" width="1" height="1" fill="#ffffff"/><rect x="14" y="7" width="1" height="1" fill="#7b4a12"/><rect x="0" y="8" width="1" height="1" fill="#7b4a12"/><rect x="1" y="8" width="4" height="1" fill="#ffffff"/><rect x="5" y="8" width="1" height="1" fill="#7b4a12"/><rect x="6" y="8" width="1" height="1" fill="#ffffff"/><rect x="7" y="8" width="2" height="1" fill="#000000"/><rect x="9" y="8" width="1" height="1" fill="#ffffff"/><rect x="10" y="8" width="3" height="1" fill="#000000"/><rect x="13" y="8" width="1" height="1" fill="#ffffff"/><rect x="14" y="8" width="1" height="1" fill="#7b4a12"/><rect x="0" y="9" width="6" height="1" fill="#7b4a12"/><rect x="6" y="9" width="8" height="1" fill="#ffffff"/><rect x="14" y="9" width="1" height="1" fill="#7b4a12"/><rect x="0" y="10" width="1" height="1" fill="#7b4a12"/><rect x="1" y="10" width="4" height="1" fill="#ffffff"/><rect x="5" y="10" width="1" height="1" fill="#7b4a12"/><rect x="6" y="10" width="1" height="1" fill="#ffffff"/><rect x="7" y="10" width="2" height="1" fill="#000000"/><rect x="9" y="10" width="1" height="1" fill="#ffffff"/><rect x="10" y="10" width="2" height="1" fill="#000000"/><rect x="12" y="10" width="2" height="1" fill="#ffffff"/><rect x="14" y="10" width="1" height="1" fill="#7b4a12"/><rect x="0" y="11" width="6" height="1" fill="#7b4a12"/><rect x="6" y="11" width="8" height="1" fill="#ffffff"/><rect x="14" y="11" width="1" height="1" fill="#7b4a12"/><rect x="0" y="12" width="1" height="1" fill="#7b4a12"/><rect x="1" y="12" width="4" height="1" fill="#ffffff"/><rect x="5" y="12" width="1" height="1" fill="#7b4a12"/><rect x="6" y="12" width="1" height="1" fill="#ffffff"/><rect x="7" y="12" width="2" height="1" fill="#000000"/><rect x="9" y="12" width="5" height="1" fill="#ffffff"/><rect x="14" y="12" width="1" height="1" fill="#7b4a12"/><rect x="0" y="13" width="1" height="1" fill="#7b4a12"/><rect x="1" y="13" width="4" height="1" fill="#ffffff"/><rect x="5" y="13" width="1" height="1" fill="#7b4a12"/><rect x="6" y="13" width="8" height="1" fill="#ffffff"/><rect x="14" y="13" width="1" height="1" fill="#7b4a12"/><rect x="0" y="14" width="15" height="1" fill="#7b4a12"/><g transform="translate(8,8)"><rect x="3" y="0" width="1" height="1" fill="#ff0000"/><rect x="2" y="1" width="3" height="1" fill="#ff0000"/><rect x="2" y="2" width="3" height="1" fill="#ff0000"/><rect x="1" y="3" width="2" height="1" fill="#ff0000"/><rect x="3" y="3" width="1" height="1" fill="#ffffff"/><rect x="4" y="3" width="2" height="1" fill="#ff0000"/><rect x="1" y="4" width="5" height="1" fill="#ff0000"/><rect x="0" y="5" width="7" height="1" fill="#ff0000"/><rect x="0" y="6" width="2" height="1" fill="#ff0000"/><rect x="5" y="6" width="2" height="1" fill="#ff0000"/></g></svg>
<div class="t" style="left:142px;top:541px;font-size:12px;line-height:12px;color:#333333;letter-spacing:0.257px;">Frag00015</div>
<div style="left:110px;top:569px;width:10px;height:1px;background:#a9c1e2;"></div>
<svg style="left:123px;top:562px;" width="16" height="16" viewBox="0 0 16 16" shape-rendering="crispEdges"><rect x="0" y="0" width="15" height="1" fill="#7b4a12"/><rect x="0" y="1" width="1" height="1" fill="#7b4a12"/><rect x="1" y="1" width="4" height="1" fill="#33e51a"/><rect x="5" y="1" width="2" height="1" fill="#7b4a12"/><rect x="7" y="1" width="2" height="1" fill="#ffffff"/><rect x="9" y="1" width="1" height="1" fill="#7b4a12"/><rect x="10" y="1" width="3" height="1" fill="#ffffff"/><rect x="13" y="1" width="2" height="1" fill="#7b4a12"/><rect x="0" y="2" width="1" height="1" fill="#7b4a12"/><rect x="1" y="2" width="4" height="1" fill="#33e51a"/><rect x="5" y="2" width="2" height="1" fill="#7b4a12"/><rect x="7" y="2" width="2" height="1" fill="#ffffff"/><rect x="9" y="2" width="1" height="1" fill="#7b4a12"/><rect x="10" y="2" width="3" height="1" fill="#ffffff"/><rect x="13" y="2" width="2" height="1" fill="#7b4a12"/><rect x="0" y="3" width="1" height="1" fill="#7b4a12"/><rect x="1" y="3" width="4" height="1" fill="#33e51a"/><rect x="5" y="3" width="10" height="1" fill="#7b4a12"/><rect x="0" y="4" width="6" height="1" fill="#7b4a12"/><rect x="6" y="4" width="8" height="1" fill="#ffffff"/><rect x="14" y="4" width="1" height="1" fill="#7b4a12"/><rect x="0" y="5" width="1" height="1" fill="#7b4a12"/><rect x="1" y="5" width="4" height="1" fill="#ffffff"/><rect x="5" y="5" width="1" height="1" fill="#7b4a12"/><rect x="6" y="5" width="1" height="1" fill="#ffffff"/><rect x="7" y="5" width="2" height="1" fill="#000000"/><rect x="9" y="5" width="1" height="1" fill="#ffffff"/><rect x="10" y="5" width="3" height="1" fill="#000000"/><rect x="13" y="5" width="1" height="1" fill="#ffffff"/><rect x="14" y="5" width="1" height="1" fill="#7b4a12"/><rect x="0" y="6" width="6" height="1" fill="#7b4a12"/><rect x="6" y="6" width="8" height="1" fill="#ffffff"/><rect x="14" y="6" width="1" height="1" fill="#7b4a12"/><rect x="0" y="7" width="1" height="1" fill="#7b4a12"/><rect x="1" y="7" width="4" height="1" fill="#ffffff"/><rect x="5" y="7" width="1" height="1" fill="#7b4a12"/><rect x="6" y="7" width="1" height="1" fill="#ffffff"/><rect x="7" y="7" width="2" height="1" fill="#000000"/><rect x="9" y="7" width="1" height="1" fill="#ffffff"/><rect x="10" y="7" width="3" height="1" fill="#000000"/><rect x="13" y="7" width="1" height="1" fill="#ffffff"/><rect x="14" y="7" width="1" height="1" fill="#7b4a12"/><rect x="0" y="8" width="1" height="1" fill="#7b4a12"/><rect x="1" y="8" width="4" height="1" fill="#ffffff"/><rect x="5" y="8" width="1" height="1" fill="#7b4a12"/><rect x="6" y="8" width="1" height="1" fill="#ffffff"/><rect x="7" y="8" width="2" height="1" fill="#000000"/><rect x="9" y="8" width="1" height="1" fill="#ffffff"/><rect x="10" y="8" width="3" height="1" fill="#000000"/><rect x="13" y="8" width="1" height="1" fill="#ffffff"/><rect x="14" y="8" width="1" height="1" fill="#7b4a12"/><rect x="0" y="9" width="6" height="1" fill="#7b4a12"/><rect x="6" y="9" width="8" height="1" fill="#ffffff"/><rect x="14" y="9" width="1" height="1" fill="#7b4a12"/><rect x="0" y="10" width="1" height="1" fill="#7b4a12"/><rect x="1" y="10" width="4" height="1" fill="#ffffff"/><rect x="5" y="10" width="1" height="1" fill="#7b4a12"/><rect x="6" y="10" width="1" height="1" fill="#ffffff"/><rect x="7" y="10" width="2" height="1" fill="#000000"/><rect x="9" y="10" width="1" height="1" fill="#ffffff"/><rect x="10" y="10" width="2" height="1" fill="#000000"/><rect x="12" y="10" width="2" height="1" fill="#ffffff"/><rect x="14" y="10" width="1" height="1" fill="#7b4a12"/><rect x="0" y="11" width="6" height="1" fill="#7b4a12"/><rect x="6" y="11" width="8" height="1" fill="#ffffff"/><rect x="14" y="11" width="1" height="1" fill="#7b4a12"/><rect x="0" y="12" width="1" height="1" fill="#7b4a12"/><rect x="1" y="12" width="4" height="1" fill="#ffffff"/><rect x="5" y="12" width="1" height="1" fill="#7b4a12"/><rect x="6" y="12" width="1" height="1" fill="#ffffff"/><rect x="7" y="12" width="2" height="1" fill="#000000"/><rect x="9" y="12" width="5" height="1" fill="#ffffff"/><rect x="14" y="12" width="1" height="1" fill="#7b4a12"/><rect x="0" y="13" width="1" height="1" fill="#7b4a12"/><rect x="1" y="13" width="4" height="1" fill="#ffffff"/><rect x="5" y="13" width="1" height="1" fill="#7b4a12"/><rect x="6" y="13" width="8" height="1" fill="#ffffff"/><rect x="14" y="13" width="1" height="1" fill="#7b4a12"/><rect x="0" y="14" width="15" height="1" fill="#7b4a12"/><g transform="translate(8,8)"><rect x="3" y="0" width="1" height="1" fill="#ff0000"/><rect x="2" y="1" width="3" height="1" fill="#ff0000"/><rect x="2" y="2" width="3" height="1" fill="#ff0000"/><rect x="1" y="3" width="2" height="1" fill="#ff0000"/><rect x="3" y="3" width="1" height="1" fill="#ffffff"/><rect x="4" y="3" width="2" height="1" fill="#ff0000"/><rect x="1" y="4" width="5" height="1" fill="#ff0000"/><rect x="0" y="5" width="7" height="1" fill="#ff0000"/><rect x="0" y="6" width="2" height="1" fill="#ff0000"/><rect x="5" y="6" width="2" height="1" fill="#ff0000"/></g></svg>
<div class="t" style="left:142px;top:564px;font-size:12px;line-height:12px;color:#333333;letter-spacing:0.257px;">Frag00016</div>
<div style="left:110px;top:592px;width:10px;height:1px;background:#a9c1e2;"></div>
<svg style="left:123px;top:585px;" width="16" height="16" viewBox="0 0 16 16" shape-rendering="crispEdges"><rect x="0" y="0" width="15" height="1" fill="#7b4a12"/><rect x="0" y="1" width="1" height="1" fill="#7b4a12"/><rect x="1" y="1" width="4" height="1" fill="#33e51a"/><rect x="5" y="1" width="2" height="1" fill="#7b4a12"/><rect x="7" y="1" width="2" height="1" fill="#ffffff"/><rect x="9" y="1" width="1" height="1" fill="#7b4a12"/><rect x="10" y="1" width="3" height="1" fill="#ffffff"/><rect x="13" y="1" width="2" height="1" fill="#7b4a12"/><rect x="0" y="2" width="1" height="1" fill="#7b4a12"/><rect x="1" y="2" width="4" height="1" fill="#33e51a"/><rect x="5" y="2" width="2" height="1" fill="#7b4a12"/><rect x="7" y="2" width="2" height="1" fill="#ffffff"/><rect x="9" y="2" width="1" height="1" fill="#7b4a12"/><rect x="10" y="2" width="3" height="1" fill="#ffffff"/><rect x="13" y="2" width="2" height="1" fill="#7b4a12"/><rect x="0" y="3" width="1" height="1" fill="#7b4a12"/><rect x="1" y="3" width="4" height="1" fill="#33e51a"/><rect x="5" y="3" width="10" height="1" fill="#7b4a12"/><rect x="0" y="4" width="6" height="1" fill="#7b4a12"/><rect x="6" y="4" width="8" height="1" fill="#ffffff"/><rect x="14" y="4" width="1" height="1" fill="#7b4a12"/><rect x="0" y="5" width="1" height="1" fill="#7b4a12"/><rect x="1" y="5" width="4" height="1" fill="#ffffff"/><rect x="5" y="5" width="1" height="1" fill="#7b4a12"/><rect x="6" y="5" width="1" height="1" fill="#ffffff"/><rect x="7" y="5" width="2" height="1" fill="#000000"/><rect x="9" y="5" width="1" height="1" fill="#ffffff"/><rect x="10" y="5" width="3" height="1" fill="#000000"/><rect x="13" y="5" width="1" height="1" fill="#ffffff"/><rect x="14" y="5" width="1" height="1" fill="#7b4a12"/><rect x="0" y="6" width="6" height="1" fill="#7b4a12"/><rect x="6" y="6" width="8" height="1" fill="#ffffff"/><rect x="14" y="6" width="1" height="1" fill="#7b4a12"/><rect x="0" y="7" width="1" height="1" fill="#7b4a12"/><rect x="1" y="7" width="4" height="1" fill="#ffffff"/><rect x="5" y="7" width="1" height="1" fill="#7b4a12"/><rect x="6" y="7" width="1" height="1" fill="#ffffff"/><rect x="7" y="7" width="2" height="1" fill="#000000"/><rect x="9" y="7" width="1" height="1" fill="#ffffff"/><rect x="10" y="7" width="3" height="1" fill="#000000"/><rect x="13" y="7" width="1" height="1" fill="#ffffff"/><rect x="14" y="7" width="1" height="1" fill="#7b4a12"/><rect x="0" y="8" width="1" height="1" fill="#7b4a12"/><rect x="1" y="8" width="4" height="1" fill="#ffffff"/><rect x="5" y="8" width="1" height="1" fill="#7b4a12"/><rect x="6" y="8" width="1" height="1" fill="#ffffff"/><rect x="7" y="8" width="2" height="1" fill="#000000"/><rect x="9" y="8" width="1" height="1" fill="#ffffff"/><rect x="10" y="8" width="3" height="1" fill="#000000"/><rect x="13" y="8" width="1" height="1" fill="#ffffff"/><rect x="14" y="8" width="1" height="1" fill="#7b4a12"/><rect x="0" y="9" width="6" height="1" fill="#7b4a12"/><rect x="6" y="9" width="8" height="1" fill="#ffffff"/><rect x="14" y="9" width="1" height="1" fill="#7b4a12"/><rect x="0" y="10" width="1" height="1" fill="#7b4a12"/><rect x="1" y="10" width="4" height="1" fill="#ffffff"/><rect x="5" y="10" width="1" height="1" fill="#7b4a12"/><rect x="6" y="10" width="1" height="1" fill="#ffffff"/><rect x="7" y="10" width="2" height="1" fill="#000000"/><rect x="9" y="10" width="1" height="1" fill="#ffffff"/><rect x="10" y="10" width="2" height="1" fill="#000000"/><rect x="12" y="10" width="2" height="1" fill="#ffffff"/><rect x="14" y="10" width="1" height="1" fill="#7b4a12"/><rect x="0" y="11" width="6" height="1" fill="#7b4a12"/><rect x="6" y="11" width="8" height="1" fill="#ffffff"/><rect x="14" y="11" width="1" height="1" fill="#7b4a12"/><rect x="0" y="12" width="1" height="1" fill="#7b4a12"/><rect x="1" y="12" width="4" height="1" fill="#ffffff"/><rect x="5" y="12" width="1" height="1" fill="#7b4a12"/><rect x="6" y="12" width="1" height="1" fill="#ffffff"/><rect x="7" y="12" width="2" height="1" fill="#000000"/><rect x="9" y="12" width="5" height="1" fill="#ffffff"/><rect x="14" y="12" width="1" height="1" fill="#7b4a12"/><rect x="0" y="13" width="1" height="1" fill="#7b4a12"/><rect x="1" y="13" width="4" height="1" fill="#ffffff"/><rect x="5" y="13" width="1" height="1" fill="#7b4a12"/><rect x="6" y="13" width="8" height="1" fill="#ffffff"/><rect x="14" y="13" width="1" height="1" fill="#7b4a12"/><rect x="0" y="14" width="15" height="1" fill="#7b4a12"/><g transform="translate(8,8)"><rect x="3" y="0" width="1" height="1" fill="#ff0000"/><rect x="2" y="1" width="3" height="1" fill="#ff0000"/><rect x="2" y="2" width="3" height="1" fill="#ff0000"/><rect x="1" y="3" width="2" height="1" fill="#ff0000"/><rect x="3" y="3" width="1" height="1" fill="#ffffff"/><rect x="4" y="3" width="2" height="1" fill="#ff0000"/><rect x="1" y="4" width="5" height="1" fill="#ff0000"/><rect x="0" y="5" width="7" height="1" fill="#ff0000"/><rect x="0" y="6" width="2" height="1" fill="#ff0000"/><rect x="5" y="6" width="2" height="1" fill="#ff0000"/></g></svg>
<div class="t" style="left:142px;top:587px;font-size:12px;line-height:12px;color:#333333;letter-spacing:0.257px;">Frag00017</div>
<div style="left:110px;top:615px;width:10px;height:1px;background:#a9c1e2;"></div>
<svg style="left:123px;top:608px;" width="16" height="16" viewBox="0 0 16 16" shape-rendering="crispEdges"><rect x="0" y="0" width="15" height="1" fill="#7b4a12"/><rect x="0" y="1" width="1" height="1" fill="#7b4a12"/><rect x="1" y="1" width="4" height="1" fill="#33e51a"/><rect x="5" y="1" width="2" height="1" fill="#7b4a12"/><rect x="7" y="1" width="2" height="1" fill="#ffffff"/><rect x="9" y="1" width="1" height="1" fill="#7b4a12"/><rect x="10" y="1" width="3" height="1" fill="#ffffff"/><rect x="13" y="1" width="2" height="1" fill="#7b4a12"/><rect x="0" y="2" width="1" height="1" fill="#7b4a12"/><rect x="1" y="2" width="4" height="1" fill="#33e51a"/><rect x="5" y="2" width="2" height="1" fill="#7b4a12"/><rect x="7" y="2" width="2" height="1" fill="#ffffff"/><rect x="9" y="2" width="1" height="1" fill="#7b4a12"/><rect x="10" y="2" width="3" height="1" fill="#ffffff"/><rect x="13" y="2" width="2" height="1" fill="#7b4a12"/><rect x="0" y="3" width="1" height="1" fill="#7b4a12"/><rect x="1" y="3" width="4" height="1" fill="#33e51a"/><rect x="5" y="3" width="10" height="1" fill="#7b4a12"/><rect x="0" y="4" width="6" height="1" fill="#7b4a12"/><rect x="6" y="4" width="8" height="1" fill="#ffffff"/><rect x="14" y="4" width="1" height="1" fill="#7b4a12"/><rect x="0" y="5" width="1" height="1" fill="#7b4a12"/><rect x="1" y="5" width="4" height="1" fill="#ffffff"/><rect x="5" y="5" width="1" height="1" fill="#7b4a12"/><rect x="6" y="5" width="1" height="1" fill="#ffffff"/><rect x="7" y="5" width="2" height="1" fill="#000000"/><rect x="9" y="5" width="1" height="1" fill="#ffffff"/><rect x="10" y="5" width="3" height="1" fill="#000000"/><rect x="13" y="5" width="1" height="1" fill="#ffffff"/><rect x="14" y="5" width="1" height="1" fill="#7b4a12"/><rect x="0" y="6" width="6" height="1" fill="#7b4a12"/><rect x="6" y="6" width="8" height="1" fill="#ffffff"/><rect x="14" y="6" width="1" height="1" fill="#7b4a12"/><rect x="0" y="7" width="1" height="1" fill="#7b4a12"/><rect x="1" y="7" width="4" height="1" fill="#ffffff"/><rect x="5" y="7" width="1" height="1" fill="#7b4a12"/><rect x="6" y="7" width="1" height="1" fill="#ffffff"/><rect x="7" y="7" width="2" height="1" fill="#000000"/><rect x="9" y="7" width="1" height="1" fill="#ffffff"/><rect x="10" y="7" width="3" height="1" fill="#000000"/><rect x="13" y="7" width="1" height="1" fill="#ffffff"/><rect x="14" y="7" width="1" height="1" fill="#7b4a12"/><rect x="0" y="8" width="1" height="1" fill="#7b4a12"/><rect x="1" y="8" width="4" height="1" fill="#ffffff"/><rect x="5" y="8" width="1" height="1" fill="#7b4a12"/><rect x="6" y="8" width="1" height="1" fill="#ffffff"/><rect x="7" y="8" width="2" height="1" fill="#000000"/><rect x="9" y="8" width="1" height="1" fill="#ffffff"/><rect x="10" y="8" width="3" height="1" fill="#000000"/><rect x="13" y="8" width="1" height="1" fill="#ffffff"/><rect x="14" y="8" width="1" height="1" fill="#7b4a12"/><rect x="0" y="9" width="6" height="1" fill="#7b4a12"/><rect x="6" y="9" width="8" height="1" fill="#ffffff"/><rect x="14" y="9" width="1" height="1" fill="#7b4a12"/><rect x="0" y="10" width="1" height="1" fill="#7b4a12"/><rect x="1" y="10" width="4" height="1" fill="#ffffff"/><rect x="5" y="10" width="1" height="1" fill="#7b4a12"/><rect x="6" y="10" width="1" height="1" fill="#ffffff"/><rect x="7" y="10" width="2" height="1" fill="#000000"/><rect x="9" y="10" width="1" height="1" fill="#ffffff"/><rect x="10" y="10" width="2" height="1" fill="#000000"/><rect x="12" y="10" width="2" height="1" fill="#ffffff"/><rect x="14" y="10" width="1" height="1" fill="#7b4a12"/><rect x="0" y="11" width="6" height="1" fill="#7b4a12"/><rect x="6" y="11" width="8" height="1" fill="#ffffff"/><rect x="14" y="11" width="1" height="1" fill="#7b4a12"/><rect x="0" y="12" width="1" height="1" fill="#7b4a12"/><rect x="1" y="12" width="4" height="1" fill="#ffffff"/><rect x="5" y="12" width="1" height="1" fill="#7b4a12"/><rect x="6" y="12" width="1" height="1" fill="#ffffff"/><rect x="7" y="12" width="2" height="1" fill="#000000"/><rect x="9" y="12" width="5" height="1" fill="#ffffff"/><rect x="14" y="12" width="1" height="1" fill="#7b4a12"/><rect x="0" y="13" width="1" height="1" fill="#7b4a12"/><rect x="1" y="13" width="4" height="1" fill="#ffffff"/><rect x="5" y="13" width="1" height="1" fill="#7b4a12"/><rect x="6" y="13" width="8" height="1" fill="#ffffff"/><rect x="14" y="13" width="1" height="1" fill="#7b4a12"/><rect x="0" y="14" width="15" height="1" fill="#7b4a12"/><g transform="translate(8,8)"><rect x="3" y="0" width="1" height="1" fill="#ff0000"/><rect x="2" y="1" width="3" height="1" fill="#ff0000"/><rect x="2" y="2" width="3" height="1" fill="#ff0000"/><rect x="1" y="3" width="2" height="1" fill="#ff0000"/><rect x="3" y="3" width="1" height="1" fill="#ffffff"/><rect x="4" y="3" width="2" height="1" fill="#ff0000"/><rect x="1" y="4" width="5" height="1" fill="#ff0000"/><rect x="0" y="5" width="7" height="1" fill="#ff0000"/><rect x="0" y="6" width="2" height="1" fill="#ff0000"/><rect x="5" y="6" width="2" height="1" fill="#ff0000"/></g></svg>
<div class="t" style="left:142px;top:610px;font-size:12px;line-height:12px;color:#333333;letter-spacing:0.257px;">Frag00018</div>
<div style="left:110px;top:638px;width:10px;height:1px;background:#a9c1e2;"></div>
<svg style="left:123px;top:631px;" width="16" height="16" viewBox="0 0 16 16" shape-rendering="crispEdges"><rect x="0" y="0" width="15" height="1" fill="#7b4a12"/><rect x="0" y="1" width="1" height="1" fill="#7b4a12"/><rect x="1" y="1" width="4" height="1" fill="#33e51a"/><rect x="5" y="1" width="2" height="1" fill="#7b4a12"/><rect x="7" y="1" width="2" height="1" fill="#ffffff"/><rect x="9" y="1" width="1" height="1" fill="#7b4a12"/><rect x="10" y="1" width="3" height="1" fill="#ffffff"/><rect x="13" y="1" width="2" height="1" fill="#7b4a12"/><rect x="0" y="2" width="1" height="1" fill="#7b4a12"/><rect x="1" y="2" width="4" height="1" fill="#33e51a"/><rect x="5" y="2" width="2" height="1" fill="#7b4a12"/><rect x="7" y="2" width="2" height="1" fill="#ffffff"/><rect x="9" y="2" width="1" height="1" fill="#7b4a12"/><rect x="10" y="2" width="3" height="1" fill="#ffffff"/><rect x="13" y="2" width="2" height="1" fill="#7b4a12"/><rect x="0" y="3" width="1" height="1" fill="#7b4a12"/><rect x="1" y="3" width="4" height="1" fill="#33e51a"/><rect x="5" y="3" width="10" height="1" fill="#7b4a12"/><rect x="0" y="4" width="6" height="1" fill="#7b4a12"/><rect x="6" y="4" width="8" height="1" fill="#ffffff"/><rect x="14" y="4" width="1" height="1" fill="#7b4a12"/><rect x="0" y="5" width="1" height="1" fill="#7b4a12"/><rect x="1" y="5" width="4" height="1" fill="#ffffff"/><rect x="5" y="5" width="1" height="1" fill="#7b4a12"/><rect x="6" y="5" width="1" height="1" fill="#ffffff"/><rect x="7" y="5" width="2" height="1" fill="#000000"/><rect x="9" y="5" width="1" height="1" fill="#ffffff"/><rect x="10" y="5" width="3" height="1" fill="#000000"/><rect x="13" y="5" width="1" height="1" fill="#ffffff"/><rect x="14" y="5" width="1" height="1" fill="#7b4a12"/><rect x="0" y="6" width="6" height="1" fill="#7b4a12"/><rect x="6" y="6" width="8" height="1" fill="#ffffff"/><rect x="14" y="6" width="1" height="1" fill="#7b4a12"/><rect x="0" y="7" width="1" height="1" fill="#7b4a12"/><rect x="1" y="7" width="4" height="1" fill="#ffffff"/><rect x="5" y="7" width="1" height="1" fill="#7b4a12"/><rect x="6" y="7" width="1" height="1" fill="#ffffff"/><rect x="7" y="7" width="2" height="1" fill="#000000"/><rect x="9" y="7" width="1" height="1" fill="#ffffff"/><rect x="10" y="7" width="3" height="1" fill="#000000"/><rect x="13" y="7" width="1" height="1" fill="#ffffff"/><rect x="14" y="7" width="1" height="1" fill="#7b4a12"/><rect x="0" y="8" width="1" height="1" fill="#7b4a12"/><rect x="1" y="8" width="4" height="1" fill="#ffffff"/><rect x="5" y="8" width="1" height="1" fill="#7b4a12"/><rect x="6" y="8" width="1" height="1" fill="#ffffff"/><rect x="7" y="8" width="2" height="1" fill="#000000"/><rect x="9" y="8" width="1" height="1" fill="#ffffff"/><rect x="10" y="8" width="3" height="1" fill="#000000"/><rect x="13" y="8" width="1" height="1" fill="#ffffff"/><rect x="14" y="8" width="1" height="1" fill="#7b4a12"/><rect x="0" y="9" width="6" height="1" fill="#7b4a12"/><rect x="6" y="9" width="8" height="1" fill="#ffffff"/><rect x="14" y="9" width="1" height="1" fill="#7b4a12"/><rect x="0" y="10" width="1" height="1" fill="#7b4a12"/><rect x="1" y="10" width="4" height="1" fill="#ffffff"/><rect x="5" y="10" width="1" height="1" fill="#7b4a12"/><rect x="6" y="10" width="1" height="1" fill="#ffffff"/><rect x="7" y="10" width="2" height="1" fill="#000000"/><rect x="9" y="10" width="1" height="1" fill="#ffffff"/><rect x="10" y="10" width="2" height="1" fill="#000000"/><rect x="12" y="10" width="2" height="1" fill="#ffffff"/><rect x="14" y="10" width="1" height="1" fill="#7b4a12"/><rect x="0" y="11" width="6" height="1" fill="#7b4a12"/><rect x="6" y="11" width="8" height="1" fill="#ffffff"/><rect x="14" y="11" width="1" height="1" fill="#7b4a12"/><rect x="0" y="12" width="1" height="1" fill="#7b4a12"/><rect x="1" y="12" width="4" height="1" fill="#ffffff"/><rect x="5" y="12" width="1" height="1" fill="#7b4a12"/><rect x="6" y="12" width="1" height="1" fill="#ffffff"/><rect x="7" y="12" width="2" height="1" fill="#000000"/><rect x="9" y="12" width="5" height="1" fill="#ffffff"/><rect x="14" y="12" width="1" height="1" fill="#7b4a12"/><rect x="0" y="13" width="1" height="1" fill="#7b4a12"/><rect x="1" y="13" width="4" height="1" fill="#ffffff"/><rect x="5" y="13" width="1" height="1" fill="#7b4a12"/><rect x="6" y="13" width="8" height="1" fill="#ffffff"/><rect x="14" y="13" width="1" height="1" fill="#7b4a12"/><rect x="0" y="14" width="15" height="1" fill="#7b4a12"/><g transform="translate(8,8)"><rect x="3" y="0" width="1" height="1" fill="#ff0000"/><rect x="2" y="1" width="3" height="1" fill="#ff0000"/><rect x="2" y="2" width="3" height="1" fill="#ff0000"/><rect x="1" y="3" width="2" height="1" fill="#ff0000"/><rect x="3" y="3" width="1" height="1" fill="#ffffff"/><rect x="4" y="3" width="2" height="1" fill="#ff0000"/><rect x="1" y="4" width="5" height="1" fill="#ff0000"/><rect x="0" y="5" width="7" height="1" fill="#ff0000"/><rect x="0" y="6" width="2" height="1" fill="#ff0000"/><rect x="5" y="6" width="2" height="1" fill="#ff0000"/></g></svg>
<div class="t" style="left:142px;top:633px;font-size:12px;line-height:12px;color:#333333;letter-spacing:0.257px;">Frag00019</div>
<div style="left:110px;top:661px;width:10px;height:1px;background:#a9c1e2;"></div>
<svg style="left:123px;top:654px;" width="16" height="16" viewBox="0 0 16 16" shape-rendering="crispEdges"><rect x="0" y="0" width="15" height="1" fill="#7b4a12"/><rect x="0" y="1" width="1" height="1" fill="#7b4a12"/><rect x="1" y="1" width="4" height="1" fill="#33e51a"/><rect x="5" y="1" width="2" height="1" fill="#7b4a12"/><rect x="7" y="1" width="2" height="1" fill="#ffffff"/><rect x="9" y="1" width="1" height="1" fill="#7b4a12"/><rect x="10" y="1" width="3" height="1" fill="#ffffff"/><rect x="13" y="1" width="2" height="1" fill="#7b4a12"/><rect x="0" y="2" width="1" height="1" fill="#7b4a12"/><rect x="1" y="2" width="4" height="1" fill="#33e51a"/><rect x="5" y="2" width="2" height="1" fill="#7b4a12"/><rect x="7" y="2" width="2" height="1" fill="#ffffff"/><rect x="9" y="2" width="1" height="1" fill="#7b4a12"/><rect x="10" y="2" width="3" height="1" fill="#ffffff"/><rect x="13" y="2" width="2" height="1" fill="#7b4a12"/><rect x="0" y="3" width="1" height="1" fill="#7b4a12"/><rect x="1" y="3" width="4" height="1" fill="#33e51a"/><rect x="5" y="3" width="10" height="1" fill="#7b4a12"/><rect x="0" y="4" width="6" height="1" fill="#7b4a12"/><rect x="6" y="4" width="8" height="1" fill="#ffffff"/><rect x="14" y="4" width="1" height="1" fill="#7b4a12"/><rect x="0" y="5" width="1" height="1" fill="#7b4a12"/><rect x="1" y="5" width="4" height="1" fill="#ffffff"/><rect x="5" y="5" width="1" height="1" fill="#7b4a12"/><rect x="6" y="5" width="1" height="1" fill="#ffffff"/><rect x="7" y="5" width="2" height="1" fill="#000000"/><rect x="9" y="5" width="1" height="1" fill="#ffffff"/><rect x="10" y="5" width="3" height="1" fill="#000000"/><rect x="13" y="5" width="1" height="1" fill="#ffffff"/><rect x="14" y="5" width="1" height="1" fill="#7b4a12"/><rect x="0" y="6" width="6" height="1" fill="#7b4a12"/><rect x="6" y="6" width="8" height="1" fill="#ffffff"/><rect x="14" y="6" width="1" height="1" fill="#7b4a12"/><rect x="0" y="7" width="1" height="1" fill="#7b4a12"/><rect x="1" y="7" width="4" height="1" fill="#ffffff"/><rect x="5" y="7" width="1" height="1" fill="#7b4a12"/><rect x="6" y="7" width="1" height="1" fill="#ffffff"/><rect x="7" y="7" width="2" height="1" fill="#000000"/><rect x="9" y="7" width="1" height="1" fill="#ffffff"/><rect x="10" y="7" width="3" height="1" fill="#000000"/><rect x="13" y="7" width="1" height="1" fill="#ffffff"/><rect x="14" y="7" width="1" height="1" fill="#7b4a12"/><rect x="0" y="8" width="1" height="1" fill="#7b4a12"/><rect x="1" y="8" width="4" height="1" fill="#ffffff"/><rect x="5" y="8" width="1" height="1" fill="#7b4a12"/><rect x="6" y="8" width="1" height="1" fill="#ffffff"/><rect x="7" y="8" width="2" height="1" fill="#000000"/><rect x="9" y="8" width="1" height="1" fill="#ffffff"/><rect x="10" y="8" width="3" height="1" fill="#000000"/><rect x="13" y="8" width="1" height="1" fill="#ffffff"/><rect x="14" y="8" width="1" height="1" fill="#7b4a12"/><rect x="0" y="9" width="6" height="1" fill="#7b4a12"/><rect x="6" y="9" width="8" height="1" fill="#ffffff"/><rect x="14" y="9" width="1" height="1" fill="#7b4a12"/><rect x="0" y="10" width="1" height="1" fill="#7b4a12"/><rect x="1" y="10" width="4" height="1" fill="#ffffff"/><rect x="5" y="10" width="1" height="1" fill="#7b4a12"/><rect x="6" y="10" width="1" height="1" fill="#ffffff"/><rect x="7" y="10" width="2" height="1" fill="#000000"/><rect x="9" y="10" width="1" height="1" fill="#ffffff"/><rect x="10" y="10" width="2" height="1" fill="#000000"/><rect x="12" y="10" width="2" height="1" fill="#ffffff"/><rect x="14" y="10" width="1" height="1" fill="#7b4a12"/><rect x="0" y="11" width="6" height="1" fill="#7b4a12"/><rect x="6" y="11" width="8" height="1" fill="#ffffff"/><rect x="14" y="11" width="1" height="1" fill="#7b4a12"/><rect x="0" y="12" width="1" height="1" fill="#7b4a12"/><rect x="1" y="12" width="4" height="1" fill="#ffffff"/><rect x="5" y="12" width="1" height="1" fill="#7b4a12"/><rect x="6" y="12" width="1" height="1" fill="#ffffff"/><rect x="7" y="12" width="2" height="1" fill="#000000"/><rect x="9" y="12" width="5" height="1" fill="#ffffff"/><rect x="14" y="12" width="1" height="1" fill="#7b4a12"/><rect x="0" y="13" width="1" height="1" fill="#7b4a12"/><rect x="1" y="13" width="4" height="1" fill="#ffffff"/><rect x="5" y="13" width="1" height="1" fill="#7b4a12"/><rect x="6" y="13" width="8" height="1" fill="#ffffff"/><rect x="14" y="13" width="1" height="1" fill="#7b4a12"/><rect x="0" y="14" width="15" height="1" fill="#7b4a12"/><g transform="translate(8,8)"><rect x="3" y="0" width="1" height="1" fill="#ff0000"/><rect x="2" y="1" width="3" height="1" fill="#ff0000"/><rect x="2" y="2" width="3" height="1" fill="#ff0000"/><rect x="1" y="3" width="2" height="1" fill="#ff0000"/><rect x="3" y="3" width="1" height="1" fill="#ffffff"/><rect x="4" y="3" width="2" height="1" fill="#ff0000"/><rect x="1" y="4" width="5" height="1" fill="#ff0000"/><rect x="0" y="5" width="7" height="1" fill="#ff0000"/><rect x="0" y="6" width="2" height="1" fill="#ff0000"/><rect x="5" y="6" width="2" height="1" fill="#ff0000"/></g></svg>
<div class="t" style="left:142px;top:656px;font-size:12px;line-height:12px;color:#333333;letter-spacing:0.244px;">Frag0002</div>
<div style="left:110px;top:684px;width:10px;height:1px;background:#a9c1e2;"></div>
<svg style="left:123px;top:677px;" width="16" height="16" viewBox="0 0 16 16" shape-rendering="crispEdges"><rect x="0" y="0" width="15" height="1" fill="#7b4a12"/><rect x="0" y="1" width="1" height="1" fill="#7b4a12"/><rect x="1" y="1" width="4" height="1" fill="#33e51a"/><rect x="5" y="1" width="2" height="1" fill="#7b4a12"/><rect x="7" y="1" width="2" height="1" fill="#ffffff"/><rect x="9" y="1" width="1" height="1" fill="#7b4a12"/><rect x="10" y="1" width="3" height="1" fill="#ffffff"/><rect x="13" y="1" width="2" height="1" fill="#7b4a12"/><rect x="0" y="2" width="1" height="1" fill="#7b4a12"/><rect x="1" y="2" width="4" height="1" fill="#33e51a"/><rect x="5" y="2" width="2" height="1" fill="#7b4a12"/><rect x="7" y="2" width="2" height="1" fill="#ffffff"/><rect x="9" y="2" width="1" height="1" fill="#7b4a12"/><rect x="10" y="2" width="3" height="1" fill="#ffffff"/><rect x="13" y="2" width="2" height="1" fill="#7b4a12"/><rect x="0" y="3" width="1" height="1" fill="#7b4a12"/><rect x="1" y="3" width="4" height="1" fill="#33e51a"/><rect x="5" y="3" width="10" height="1" fill="#7b4a12"/><rect x="0" y="4" width="6" height="1" fill="#7b4a12"/><rect x="6" y="4" width="8" height="1" fill="#ffffff"/><rect x="14" y="4" width="1" height="1" fill="#7b4a12"/><rect x="0" y="5" width="1" height="1" fill="#7b4a12"/><rect x="1" y="5" width="4" height="1" fill="#ffffff"/><rect x="5" y="5" width="1" height="1" fill="#7b4a12"/><rect x="6" y="5" width="1" height="1" fill="#ffffff"/><rect x="7" y="5" width="2" height="1" fill="#000000"/><rect x="9" y="5" width="1" height="1" fill="#ffffff"/><rect x="10" y="5" width="3" height="1" fill="#000000"/><rect x="13" y="5" width="1" height="1" fill="#ffffff"/><rect x="14" y="5" width="1" height="1" fill="#7b4a12"/><rect x="0" y="6" width="6" height="1" fill="#7b4a12"/><rect x="6" y="6" width="8" height="1" fill="#ffffff"/><rect x="14" y="6" width="1" height="1" fill="#7b4a12"/><rect x="0" y="7" width="1" height="1" fill="#7b4a12"/><rect x="1" y="7" width="4" height="1" fill="#ffffff"/><rect x="5" y="7" width="1" height="1" fill="#7b4a12"/><rect x="6" y="7" width="1" height="1" fill="#ffffff"/><rect x="7" y="7" width="2" height="1" fill="#000000"/><rect x="9" y="7" width="1" height="1" fill="#ffffff"/><rect x="10" y="7" width="3" height="1" fill="#000000"/><rect x="13" y="7" width="1" height="1" fill="#ffffff"/><rect x="14" y="7" width="1" height="1" fill="#7b4a12"/><rect x="0" y="8" width="1" height="1" fill="#7b4a12"/><rect x="1" y="8" width="4" height="1" fill="#ffffff"/><rect x="5" y="8" width="1" height="1" fill="#7b4a12"/><rect x="6" y="8" width="1" height="1" fill="#ffffff"/><rect x="7" y="8" width="2" height="1" fill="#000000"/><rect x="9" y="8" width="1" height="1" fill="#ffffff"/><rect x="10" y="8" width="3" height="1" fill="#000000"/><rect x="13" y="8" width="1" height="1" fill="#ffffff"/><rect x="14" y="8" width="1" height="1" fill="#7b4a12"/><rect x="0" y="9" width="6" height="1" fill="#7b4a12"/><rect x="6" y="9" width="8" height="1" fill="#ffffff"/><rect x="14" y="9" width="1" height="1" fill="#7b4a12"/><rect x="0" y="10" width="1" height="1" fill="#7b4a12"/><rect x="1" y="10" width="4" height="1" fill="#ffffff"/><rect x="5" y="10" width="1" height="1" fill="#7b4a12"/><rect x="6" y="10" width="1" height="1" fill="#ffffff"/><rect x="7" y="10" width="2" height="1" fill="#000000"/><rect x="9" y="10" width="1" height="1" fill="#ffffff"/><rect x="10" y="10" width="2" height="1" fill="#000000"/><rect x="12" y="10" width="2" height="1" fill="#ffffff"/><rect x="14" y="10" width="1" height="1" fill="#7b4a12"/><rect x="0" y="11" width="6" height="1" fill="#7b4a12"/><rect x="6" y="11" width="8" height="1" fill="#ffffff"/><rect x="14" y="11" width="1" height="1" fill="#7b4a12"/><rect x="0" y="12" width="1" height="1" fill="#7b4a12"/><rect x="1" y="12" width="4" height="1" fill="#ffffff"/><rect x="5" y="12" width="1" height="1" fill="#7b4a12"/><rect x="6" y="12" width="1" height="1" fill="#ffffff"/><rect x="7" y="12" width="2" height="1" fill="#000000"/><rect x="9" y="12" width="5" height="1" fill="#ffffff"/><rect x="14" y="12" width="1" height="1" fill="#7b4a12"/><rect x="0" y="13" width="1" height="1" fill="#7b4a12"/><rect x="1" y="13" width="4" height="1" fill="#ffffff"/><rect x="5" y="13" width="1" height="1" fill="#7b4a12"/><rect x="6" y="13" width="8" height="1" fill="#ffffff"/><rect x="14" y="13" width="1" height="1" fill="#7b4a12"/><rect x="0" y="14" width="15" height="1" fill="#7b4a12"/><g transform="translate(8,8)"><rect x="3" y="0" width="1" height="1" fill="#ff0000"/><rect x="2" y="1" width="3" height="1" fill="#ff0000"/><rect x="2" y="2" width="3" height="1" fill="#ff0000"/><rect x="1" y="3" width="2" height="1" fill="#ff0000"/><rect x="3" y="3" width="1" height="1" fill="#ffffff"/><rect x="4" y="3" width="2" height="1" fill="#ff0000"/><rect x="1" y="4" width="5" height="1" fill="#ff0000"/><rect x="0" y="5" width="7" height="1" fill="#ff0000"/><rect x="0" y="6" width="2" height="1" fill="#ff0000"/><rect x="5" y="6" width="2" height="1" fill="#ff0000"/></g></svg>
<div class="t" style="left:142px;top:679px;font-size:12px;line-height:12px;color:#333333;letter-spacing:0.257px;">Frag00020</div>
<div style="left:110px;top:707px;width:10px;height:1px;background:#a9c1e2;"></div>
<svg style="left:123px;top:700px;" width="16" height="16" viewBox="0 0 16 16" shape-rendering="crispEdges"><rect x="0" y="0" width="15" height="1" fill="#7b4a12"/><rect x="0" y="1" width="1" height="1" fill="#7b4a12"/><rect x="1" y="1" width="4" height="1" fill="#33e51a"/><rect x="5" y="1" width="2" height="1" fill="#7b4a12"/><rect x="7" y="1" width="2" height="1" fill="#ffffff"/><rect x="9" y="1" width="1" height="1" fill="#7b4a12"/><rect x="10" y="1" width="3" height="1" fill="#ffffff"/><rect x="13" y="1" width="2" height="1" fill="#7b4a12"/><rect x="0" y="2" width="1" height="1" fill="#7b4a12"/><rect x="1" y="2" width="4" height="1" fill="#33e51a"/><rect x="5" y="2" width="2" height="1" fill="#7b4a12"/><rect x="7" y="2" width="2" height="1" fill="#ffffff"/><rect x="9" y="2" width="1" height="1" fill="#7b4a12"/><rect x="10" y="2" width="3" height="1" fill="#ffffff"/><rect x="13" y="2" width="2" height="1" fill="#7b4a12"/><rect x="0" y="3" width="1" height="1" fill="#7b4a12"/><rect x="1" y="3" width="4" height="1" fill="#33e51a"/><rect x="5" y="3" width="10" height="1" fill="#7b4a12"/><rect x="0" y="4" width="6" height="1" fill="#7b4a12"/><rect x="6" y="4" width="8" height="1" fill="#ffffff"/><rect x="14" y="4" width="1" height="1" fill="#7b4a12"/><rect x="0" y="5" width="1" height="1" fill="#7b4a12"/><rect x="1" y="5" width="4" height="1" fill="#ffffff"/><rect x="5" y="5" width="1" height="1" fill="#7b4a12"/><rect x="6" y="5" width="1" height="1" fill="#ffffff"/><rect x="7" y="5" width="2" height="1" fill="#000000"/><rect x="9" y="5" width="1" height="1" fill="#ffffff"/><rect x="10" y="5" width="3" height="1" fill="#000000"/><rect x="13" y="5" width="1" height="1" fill="#ffffff"/><rect x="14" y="5" width="1" height="1" fill="#7b4a12"/><rect x="0" y="6" width="6" height="1" fill="#7b4a12"/><rect x="6" y="6" width="8" height="1" fill="#ffffff"/><rect x="14" y="6" width="1" height="1" fill="#7b4a12"/><rect x="0" y="7" width="1" height="1" fill="#7b4a12"/><rect x="1" y="7" width="4" height="1" fill="#ffffff"/><rect x="5" y="7" width="1" height="1" fill="#7b4a12"/><rect x="6" y="7" width="1" height="1" fill="#ffffff"/><rect x="7" y="7" width="2" height="1" fill="#000000"/><rect x="9" y="7" width="1" height="1" fill="#ffffff"/><rect x="10" y="7" width="3" height="1" fill="#000000"/><rect x="13" y="7" width="1" height="1" fill="#ffffff"/><rect x="14" y="7" width="1" height="1" fill="#7b4a12"/><rect x="0" y="8" width="1" height="1" fill="#7b4a12"/><rect x="1" y="8" width="4" height="1" fill="#ffffff"/><rect x="5" y="8" width="1" height="1" fill="#7b4a12"/><rect x="6" y="8" width="1" height="1" fill="#ffffff"/><rect x="7" y="8" width="2" height="1" fill="#000000"/><rect x="9" y="8" width="1" height="1" fill="#ffffff"/><rect x="10" y="8" width="3" height="1" fill="#000000"/><rect x="13" y="8" width="1" height="1" fill="#ffffff"/><rect x="14" y="8" width="1" height="1" fill="#7b4a12"/><rect x="0" y="9" width="6" height="1" fill="#7b4a12"/><rect x="6" y="9" width="8" height="1" fill="#ffffff"/><rect x="14" y="9" width="1" height="1" fill="#7b4a12"/><rect x="0" y="10" width="1" height="1" fill="#7b4a12"/><rect x="1" y="10" width="4" height="1" fill="#ffffff"/><rect x="5" y="10" width="1" height="1" fill="#7b4a12"/><rect x="6" y="10" width="1" height="1" fill="#ffffff"/><rect x="7" y="10" width="2" height="1" fill="#000000"/><rect x="9" y="10" width="1" height="1" fill="#ffffff"/><rect x="10" y="10" width="2" height="1" fill="#000000"/><rect x="12" y="10" width="2" height="1" fill="#ffffff"/><rect x="14" y="10" width="1" height="1" fill="#7b4a12"/><rect x="0" y="11" width="6" height="1" fill="#7b4a12"/><rect x="6" y="11" width="8" height="1" fill="#ffffff"/><rect x="14" y="11" width="1" height="1" fill="#7b4a12"/><rect x="0" y="12" width="1" height="1" fill="#7b4a12"/><rect x="1" y="12" width="4" height="1" fill="#ffffff"/><rect x="5" y="12" width="1" height="1" fill="#7b4a12"/><rect x="6" y="12" width="1" height="1" fill="#ffffff"/><rect x="7" y="12" width="2" height="1" fill="#000000"/><rect x="9" y="12" width="5" height="1" fill="#ffffff"/><rect x="14" y="12" width="1" height="1" fill="#7b4a12"/><rect x="0" y="13" width="1" height="1" fill="#7b4a12"/><rect x="1" y="13" width="4" height="1" fill="#ffffff"/><rect x="5" y="13" width="1" height="1" fill="#7b4a12"/><rect x="6" y="13" width="8" height="1" fill="#ffffff"/><rect x="14" y="13" width="1" height="1" fill="#7b4a12"/><rect x="0" y="14" width="15" height="1" fill="#7b4a12"/><g transform="translate(8,8)"><rect x="3" y="0" width="1" height="1" fill="#ff0000"/><rect x="2" y="1" width="3" height="1" fill="#ff0000"/><rect x="2" y="2" width="3" height="1" fill="#ff0000"/><rect x="1" y="3" width="2" height="1" fill="#ff0000"/><rect x="3" y="3" width="1" height="1" fill="#ffffff"/><rect x="4" y="3" width="2" height="1" fill="#ff0000"/><rect x="1" y="4" width="5" height="1" fill="#ff0000"/><rect x="0" y="5" width="7" height="1" fill="#ff0000"/><rect x="0" y="6" width="2" height="1" fill="#ff0000"/><rect x="5" y="6" width="2" height="1" fill="#ff0000"/></g></svg>
<div class="t" style="left:142px;top:702px;font-size:12px;line-height:12px;color:#333333;letter-spacing:0.257px;">Frag00021</div>
<div style="left:110px;top:730px;width:10px;height:1px;background:#a9c1e2;"></div>
<svg style="left:123px;top:723px;" width="16" height="16" viewBox="0 0 16 16" shape-rendering="crispEdges"><rect x="0" y="0" width="15" height="1" fill="#7b4a12"/><rect x="0" y="1" width="1" height="1" fill="#7b4a12"/><rect x="1" y="1" width="4" height="1" fill="#33e51a"/><rect x="5" y="1" width="2" height="1" fill="#7b4a12"/><rect x="7" y="1" width="2" height="1" fill="#ffffff"/><rect x="9" y="1" width="1" height="1" fill="#7b4a12"/><rect x="10" y="1" width="3" height="1" fill="#ffffff"/><rect x="13" y="1" width="2" height="1" fill="#7b4a12"/><rect x="0" y="2" width="1" height="1" fill="#7b4a12"/><rect x="1" y="2" width="4" height="1" fill="#33e51a"/><rect x="5" y="2" width="2" height="1" fill="#7b4a12"/><rect x="7" y="2" width="2" height="1" fill="#ffffff"/><rect x="9" y="2" width="1" height="1" fill="#7b4a12"/><rect x="10" y="2" width="3" height="1" fill="#ffffff"/><rect x="13" y="2" width="2" height="1" fill="#7b4a12"/><rect x="0" y="3" width="1" height="1" fill="#7b4a12"/><rect x="1" y="3" width="4" height="1" fill="#33e51a"/><rect x="5" y="3" width="10" height="1" fill="#7b4a12"/><rect x="0" y="4" width="6" height="1" fill="#7b4a12"/><rect x="6" y="4" width="8" height="1" fill="#ffffff"/><rect x="14" y="4" width="1" height="1" fill="#7b4a12"/><rect x="0" y="5" width="1" height="1" fill="#7b4a12"/><rect x="1" y="5" width="4" height="1" fill="#ffffff"/><rect x="5" y="5" width="1" height="1" fill="#7b4a12"/><rect x="6" y="5" width="1" height="1" fill="#ffffff"/><rect x="7" y="5" width="2" height="1" fill="#000000"/><rect x="9" y="5" width="1" height="1" fill="#ffffff"/><rect x="10" y="5" width="3" height="1" fill="#000000"/><rect x="13" y="5" width="1" height="1" fill="#ffffff"/><rect x="14" y="5" width="1" height="1" fill="#7b4a12"/><rect x="0" y="6" width="6" height="1" fill="#7b4a12"/><rect x="6" y="6" width="8" height="1" fill="#ffffff"/><rect x="14" y="6" width="1" height="1" fill="#7b4a12"/><rect x="0" y="7" width="1" height="1" fill="#7b4a12"/><rect x="1" y="7" width="4" height="1" fill="#ffffff"/><rect x="5" y="7" width="1" height="1" fill="#7b4a12"/><rect x="6" y="7" width="1" height="1" fill="#ffffff"/><rect x="7" y="7" width="2" height="1" fill="#000000"/><rect x="9" y="7" width="1" height="1" fill="#ffffff"/><rect x="10" y="7" width="3" height="1" fill="#000000"/><rect x="13" y="7" width="1" height="1" fill="#ffffff"/><rect x="14" y="7" width="1" height="1" fill="#7b4a12"/><rect x="0" y="8" width="1" height="1" fill="#7b4a12"/><rect x="1" y="8" width="4" height="1" fill="#ffffff"/><rect x="5" y="8" width="1" height="1" fill="#7b4a12"/><rect x="6" y="8" width="1" height="1" fill="#ffffff"/><rect x="7" y="8" width="2" height="1" fill="#000000"/><rect x="9" y="8" width="1" height="1" fill="#ffffff"/><rect x="10" y="8" width="3" height="1" fill="#000000"/><rect x="13" y="8" width="1" height="1" fill="#ffffff"/><rect x="14" y="8" width="1" height="1" fill="#7b4a12"/><rect x="0" y="9" width="6" height="1" fill="#7b4a12"/><rect x="6" y="9" width="8" height="1" fill="#ffffff"/><rect x="14" y="9" width="1" height="1" fill="#7b4a12"/><rect x="0" y="10" width="1" height="1" fill="#7b4a12"/><rect x="1" y="10" width="4" height="1" fill="#ffffff"/><rect x="5" y="10" width="1" height="1" fill="#7b4a12"/><rect x="6" y="10" width="1" height="1" fill="#ffffff"/><rect x="7" y="10" width="2" height="1" fill="#000000"/><rect x="9" y="10" width="1" height="1" fill="#ffffff"/><rect x="10" y="10" width="2" height="1" fill="#000000"/><rect x="12" y="10" width="2" height="1" fill="#ffffff"/><rect x="14" y="10" width="1" height="1" fill="#7b4a12"/><rect x="0" y="11" width="6" height="1" fill="#7b4a12"/><rect x="6" y="11" width="8" height="1" fill="#ffffff"/><rect x="14" y="11" width="1" height="1" fill="#7b4a12"/><rect x="0" y="12" width="1" height="1" fill="#7b4a12"/><rect x="1" y="12" width="4" height="1" fill="#ffffff"/><rect x="5" y="12" width="1" height="1" fill="#7b4a12"/><rect x="6" y="12" width="1" height="1" fill="#ffffff"/><rect x="7" y="12" width="2" height="1" fill="#000000"/><rect x="9" y="12" width="5" height="1" fill="#ffffff"/><rect x="14" y="12" width="1" height="1" fill="#7b4a12"/><rect x="0" y="13" width="1" height="1" fill="#7b4a12"/><rect x="1" y="13" width="4" height="1" fill="#ffffff"/><rect x="5" y="13" width="1" height="1" fill="#7b4a12"/><rect x="6" y="13" width="8" height="1" fill="#ffffff"/><rect x="14" y="13" width="1" height="1" fill="#7b4a12"/><rect x="0" y="14" width="15" height="1" fill="#7b4a12"/><g transform="translate(8,8)"><rect x="3" y="0" width="1" height="1" fill="#ff0000"/><rect x="2" y="1" width="3" height="1" fill="#ff0000"/><rect x="2" y="2" width="3" height="1" fill="#ff0000"/><rect x="1" y="3" width="2" height="1" fill="#ff0000"/><rect x="3" y="3" width="1" height="1" fill="#ffffff"/><rect x="4" y="3" width="2" height="1" fill="#ff0000"/><rect x="1" y="4" width="5" height="1" fill="#ff0000"/><rect x="0" y="5" width="7" height="1" fill="#ff0000"/><rect x="0" y="6" width="2" height="1" fill="#ff0000"/><rect x="5" y="6" width="2" height="1" fill="#ff0000"/></g></svg>
<div class="t" style="left:142px;top:725px;font-size:12px;line-height:12px;color:#333333;letter-spacing:0.257px;">Frag00022</div>
<div style="left:110px;top:753px;width:10px;height:1px;background:#a9c1e2;"></div>
<svg style="left:123px;top:746px;" width="16" height="16" viewBox="0 0 16 16" shape-rendering="crispEdges"><rect x="0" y="0" width="15" height="1" fill="#7b4a12"/><rect x="0" y="1" width="1" height="1" fill="#7b4a12"/><rect x="1" y="1" width="4" height="1" fill="#33e51a"/><rect x="5" y="1" width="2" height="1" fill="#7b4a12"/><rect x="7" y="1" width="2" height="1" fill="#ffffff"/><rect x="9" y="1" width="1" height="1" fill="#7b4a12"/><rect x="10" y="1" width="3" height="1" fill="#ffffff"/><rect x="13" y="1" width="2" height="1" fill="#7b4a12"/><rect x="0" y="2" width="1" height="1" fill="#7b4a12"/><rect x="1" y="2" width="4" height="1" fill="#33e51a"/><rect x="5" y="2" width="2" height="1" fill="#7b4a12"/><rect x="7" y="2" width="2" height="1" fill="#ffffff"/><rect x="9" y="2" width="1" height="1" fill="#7b4a12"/><rect x="10" y="2" width="3" height="1" fill="#ffffff"/><rect x="13" y="2" width="2" height="1" fill="#7b4a12"/><rect x="0" y="3" width="1" height="1" fill="#7b4a12"/><rect x="1" y="3" width="4" height="1" fill="#33e51a"/><rect x="5" y="3" width="10" height="1" fill="#7b4a12"/><rect x="0" y="4" width="6" height="1" fill="#7b4a12"/><rect x="6" y="4" width="8" height="1" fill="#ffffff"/><rect x="14" y="4" width="1" height="1" fill="#7b4a12"/><rect x="0" y="5" width="1" height="1" fill="#7b4a12"/><rect x="1" y="5" width="4" height="1" fill="#ffffff"/><rect x="5" y="5" width="1" height="1" fill="#7b4a12"/><rect x="6" y="5" width="1" height="1" fill="#ffffff"/><rect x="7" y="5" width="2" height="1" fill="#000000"/><rect x="9" y="5" width="1" height="1" fill="#ffffff"/><rect x="10" y="5" width="3" height="1" fill="#000000"/><rect x="13" y="5" width="1" height="1" fill="#ffffff"/><rect x="14" y="5" width="1" height="1" fill="#7b4a12"/><rect x="0" y="6" width="6" height="1" fill="#7b4a12"/><rect x="6" y="6" width="8" height="1" fill="#ffffff"/><rect x="14" y="6" width="1" height="1" fill="#7b4a12"/><rect x="0" y="7" width="1" height="1" fill="#7b4a12"/><rect x="1" y="7" width="4" height="1" fill="#ffffff"/><rect x="5" y="7" width="1" height="1" fill="#7b4a12"/><rect x="6" y="7" width="1" height="1" fill="#ffffff"/><rect x="7" y="7" width="2" height="1" fill="#000000"/><rect x="9" y="7" width="1" height="1" fill="#ffffff"/><rect x="10" y="7" width="3" height="1" fill="#000000"/><rect x="13" y="7" width="1" height="1" fill="#ffffff"/><rect x="14" y="7" width="1" height="1" fill="#7b4a12"/><rect x="0" y="8" width="1" height="1" fill="#7b4a12"/><rect x="1" y="8" width="4" height="1" fill="#ffffff"/><rect x="5" y="8" width="1" height="1" fill="#7b4a12"/><rect x="6" y="8" width="1" height="1" fill="#ffffff"/><rect x="7" y="8" width="2" height="1" fill="#000000"/><rect x="9" y="8" width="1" height="1" fill="#ffffff"/><rect x="10" y="8" width="3" height="1" fill="#000000"/><rect x="13" y="8" width="1" height="1" fill="#ffffff"/><rect x="14" y="8" width="1" height="1" fill="#7b4a12"/><rect x="0" y="9" width="6" height="1" fill="#7b4a12"/><rect x="6" y="9" width="8" height="1" fill="#ffffff"/><rect x="14" y="9" width="1" height="1" fill="#7b4a12"/><rect x="0" y="10" width="1" height="1" fill="#7b4a12"/><rect x="1" y="10" width="4" height="1" fill="#ffffff"/><rect x="5" y="10" width="1" height="1" fill="#7b4a12"/><rect x="6" y="10" width="1" height="1" fill="#ffffff"/><rect x="7" y="10" width="2" height="1" fill="#000000"/><rect x="9" y="10" width="1" height="1" fill="#ffffff"/><rect x="10" y="10" width="2" height="1" fill="#000000"/><rect x="12" y="10" width="2" height="1" fill="#ffffff"/><rect x="14" y="10" width="1" height="1" fill="#7b4a12"/><rect x="0" y="11" width="6" height="1" fill="#7b4a12"/><rect x="6" y="11" width="8" height="1" fill="#ffffff"/><rect x="14" y="11" width="1" height="1" fill="#7b4a12"/><rect x="0" y="12" width="1" height="1" fill="#7b4a12"/><rect x="1" y="12" width="4" height="1" fill="#ffffff"/><rect x="5" y="12" width="1" height="1" fill="#7b4a12"/><rect x="6" y="12" width="1" height="1" fill="#ffffff"/><rect x="7" y="12" width="2" height="1" fill="#000000"/><rect x="9" y="12" width="5" height="1" fill="#ffffff"/><rect x="14" y="12" width="1" height="1" fill="#7b4a12"/><rect x="0" y="13" width="1" height="1" fill="#7b4a12"/><rect x="1" y="13" width="4" height="1" fill="#ffffff"/><rect x="5" y="13" width="1" height="1" fill="#7b4a12"/><rect x="6" y="13" width="8" height="1" fill="#ffffff"/><rect x="14" y="13" width="1" height="1" fill="#7b4a12"/><rect x="0" y="14" width="15" height="1" fill="#7b4a12"/><g transform="translate(8,8)"><rect x="3" y="0" width="1" height="1" fill="#ff0000"/><rect x="2" y="1" width="3" height="1" fill="#ff0000"/><rect x="2" y="2" width="3" height="1" fill="#ff0000"/><rect x="1" y="3" width="2" height="1" fill="#ff0000"/><rect x="3" y="3" width="1" height="1" fill="#ffffff"/><rect x="4" y="3" width="2" height="1" fill="#ff0000"/><rect x="1" y="4" width="5" height="1" fill="#ff0000"/><rect x="0" y="5" width="7" height="1" fill="#ff0000"/><rect x="0" y="6" width="2" height="1" fill="#ff0000"/><rect x="5" y="6" width="2" height="1" fill="#ff0000"/></g></svg>
<div class="t" style="left:142px;top:748px;font-size:12px;line-height:12px;color:#333333;letter-spacing:0.257px;">Frag00023</div>
<div style="left:110px;top:776px;width:10px;height:1px;background:#a9c1e2;"></div>
<svg style="left:123px;top:769px;" width="16" height="16" viewBox="0 0 16 16" shape-rendering="crispEdges"><rect x="0" y="0" width="15" height="1" fill="#7b4a12"/><rect x="0" y="1" width="1" height="1" fill="#7b4a12"/><rect x="1" y="1" width="4" height="1" fill="#33e51a"/><rect x="5" y="1" width="2" height="1" fill="#7b4a12"/><rect x="7" y="1" width="2" height="1" fill="#ffffff"/><rect x="9" y="1" width="1" height="1" fill="#7b4a12"/><rect x="10" y="1" width="3" height="1" fill="#ffffff"/><rect x="13" y="1" width="2" height="1" fill="#7b4a12"/><rect x="0" y="2" width="1" height="1" fill="#7b4a12"/><rect x="1" y="2" width="4" height="1" fill="#33e51a"/><rect x="5" y="2" width="2" height="1" fill="#7b4a12"/><rect x="7" y="2" width="2" height="1" fill="#ffffff"/><rect x="9" y="2" width="1" height="1" fill="#7b4a12"/><rect x="10" y="2" width="3" height="1" fill="#ffffff"/><rect x="13" y="2" width="2" height="1" fill="#7b4a12"/><rect x="0" y="3" width="1" height="1" fill="#7b4a12"/><rect x="1" y="3" width="4" height="1" fill="#33e51a"/><rect x="5" y="3" width="10" height="1" fill="#7b4a12"/><rect x="0" y="4" width="6" height="1" fill="#7b4a12"/><rect x="6" y="4" width="8" height="1" fill="#ffffff"/><rect x="14" y="4" width="1" height="1" fill="#7b4a12"/><rect x="0" y="5" width="1" height="1" fill="#7b4a12"/><rect x="1" y="5" width="4" height="1" fill="#ffffff"/><rect x="5" y="5" width="1" height="1" fill="#7b4a12"/><rect x="6" y="5" width="1" height="1" fill="#ffffff"/><rect x="7" y="5" width="2" height="1" fill="#000000"/><rect x="9" y="5" width="1" height="1" fill="#ffffff"/><rect x="10" y="5" width="3" height="1" fill="#000000"/><rect x="13" y="5" width="1" height="1" fill="#ffffff"/><rect x="14" y="5" width="1" height="1" fill="#7b4a12"/><rect x="0" y="6" width="6" height="1" fill="#7b4a12"/><rect x="6" y="6" width="8" height="1" fill="#ffffff"/><rect x="14" y="6" width="1" height="1" fill="#7b4a12"/><rect x="0" y="7" width="1" height="1" fill="#7b4a12"/><rect x="1" y="7" width="4" height="1" fill="#ffffff"/><rect x="5" y="7" width="1" height="1" fill="#7b4a12"/><rect x="6" y="7" width="1" height="1" fill="#ffffff"/><rect x="7" y="7" width="2" height="1" fill="#000000"/><rect x="9" y="7" width="1" height="1" fill="#ffffff"/><rect x="10" y="7" width="3" height="1" fill="#000000"/><rect x="13" y="7" width="1" height="1" fill="#ffffff"/><rect x="14" y="7" width="1" height="1" fill="#7b4a12"/><rect x="0" y="8" width="1" height="1" fill="#7b4a12"/><rect x="1" y="8" width="4" height="1" fill="#ffffff"/><rect x="5" y="8" width="1" height="1" fill="#7b4a12"/><rect x="6" y="8" width="1" height="1" fill="#ffffff"/><rect x="7" y="8" width="2" height="1" fill="#000000"/><rect x="9" y="8" width="1" height="1" fill="#ffffff"/><rect x="10" y="8" width="3" height="1" fill="#000000"/><rect x="13" y="8" width="1" height="1" fill="#ffffff"/><rect x="14" y="8" width="1" height="1" fill="#7b4a12"/><rect x="0" y="9" width="6" height="1" fill="#7b4a12"/><rect x="6" y="9" width="8" height="1" fill="#ffffff"/><rect x="14" y="9" width="1" height="1" fill="#7b4a12"/><rect x="0" y="10" width="1" height="1" fill="#7b4a12"/><rect x="1" y="10" width="4" height="1" fill="#ffffff"/><rect x="5" y="10" width="1" height="1" fill="#7b4a12"/><rect x="6" y="10" width="1" height="1" fill="#ffffff"/><rect x="7" y="10" width="2" height="1" fill="#000000"/><rect x="9" y="10" width="1" height="1" fill="#ffffff"/><rect x="10" y="10" width="2" height="1" fill="#000000"/><rect x="12" y="10" width="2" height="1" fill="#ffffff"/><rect x="14" y="10" width="1" height="1" fill="#7b4a12"/><rect x="0" y="11" width="6" height="1" fill="#7b4a12"/><rect x="6" y="11" width="8" height="1" fill="#ffffff"/><rect x="14" y="11" width="1" height="1" fill="#7b4a12"/><rect x="0" y="12" width="1" height="1" fill="#7b4a12"/><rect x="1" y="12" width="4" height="1" fill="#ffffff"/><rect x="5" y="12" width="1" height="1" fill="#7b4a12"/><rect x="6" y="12" width="1" height="1" fill="#ffffff"/><rect x="7" y="12" width="2" height="1" fill="#000000"/><rect x="9" y="12" width="5" height="1" fill="#ffffff"/><rect x="14" y="12" width="1" height="1" fill="#7b4a12"/><rect x="0" y="13" width="1" height="1" fill="#7b4a12"/><rect x="1" y="13" width="4" height="1" fill="#ffffff"/><rect x="5" y="13" width="1" height="1" fill="#7b4a12"/><rect x="6" y="13" width="8" height="1" fill="#ffffff"/><rect x="14" y="13" width="1" height="1" fill="#7b4a12"/><rect x="0" y="14" width="15" height="1" fill="#7b4a12"/><g transform="translate(8,8)"><rect x="3" y="0" width="1" height="1" fill="#ff0000"/><rect x="2" y="1" width="3" height="1" fill="#ff0000"/><rect x="2" y="2" width="3" height="1" fill="#ff0000"/><rect x="1" y="3" width="2" height="1" fill="#ff0000"/><rect x="3" y="3" width="1" height="1" fill="#ffffff"/><rect x="4" y="3" width="2" height="1" fill="#ff0000"/><rect x="1" y="4" width="5" height="1" fill="#ff0000"/><rect x="0" y="5" width="7" height="1" fill="#ff0000"/><rect x="0" y="6" width="2" height="1" fill="#ff0000"/><rect x="5" y="6" width="2" height="1" fill="#ff0000"/></g></svg>
<div class="t" style="left:142px;top:771px;font-size:12px;line-height:12px;color:#333333;letter-spacing:0.257px;">Frag00024</div>
<div style="left:110px;top:799px;width:10px;height:1px;background:#a9c1e2;"></div>
<svg style="left:123px;top:792px;" width="16" height="16" viewBox="0 0 16 16" shape-rendering="crispEdges"><rect x="0" y="0" width="15" height="1" fill="#7b4a12"/><rect x="0" y="1" width="1" height="1" fill="#7b4a12"/><rect x="1" y="1" width="4" height="1" fill="#33e51a"/><rect x="5" y="1" width="2" height="1" fill="#7b4a12"/><rect x="7" y="1" width="2" height="1" fill="#ffffff"/><rect x="9" y="1" width="1" height="1" fill="#7b4a12"/><rect x="10" y="1" width="3" height="1" fill="#ffffff"/><rect x="13" y="1" width="2" height="1" fill="#7b4a12"/><rect x="0" y="2" width="1" height="1" fill="#7b4a12"/><rect x="1" y="2" width="4" height="1" fill="#33e51a"/><rect x="5" y="2" width="2" height="1" fill="#7b4a12"/><rect x="7" y="2" width="2" height="1" fill="#ffffff"/><rect x="9" y="2" width="1" height="1" fill="#7b4a12"/><rect x="10" y="2" width="3" height="1" fill="#ffffff"/><rect x="13" y="2" width="2" height="1" fill="#7b4a12"/><rect x="0" y="3" width="1" height="1" fill="#7b4a12"/><rect x="1" y="3" width="4" height="1" fill="#33e51a"/><rect x="5" y="3" width="10" height="1" fill="#7b4a12"/><rect x="0" y="4" width="6" height="1" fill="#7b4a12"/><rect x="6" y="4" width="8" height="1" fill="#ffffff"/><rect x="14" y="4" width="1" height="1" fill="#7b4a12"/><rect x="0" y="5" width="1" height="1" fill="#7b4a12"/><rect x="1" y="5" width="4" height="1" fill="#ffffff"/><rect x="5" y="5" width="1" height="1" fill="#7b4a12"/><rect x="6" y="5" width="1" height="1" fill="#ffffff"/><rect x="7" y="5" width="2" height="1" fill="#000000"/><rect x="9" y="5" width="1" height="1" fill="#ffffff"/><rect x="10" y="5" width="3" height="1" fill="#000000"/><rect x="13" y="5" width="1" height="1" fill="#ffffff"/><rect x="14" y="5" width="1" height="1" fill="#7b4a12"/><rect x="0" y="6" width="6" height="1" fill="#7b4a12"/><rect x="6" y="6" width="8" height="1" fill="#ffffff"/><rect x="14" y="6" width="1" height="1" fill="#7b4a12"/><rect x="0" y="7" width="1" height="1" fill="#7b4a12"/><rect x="1" y="7" width="4" height="1" fill="#ffffff"/><rect x="5" y="7" width="1" height="1" fill="#7b4a12"/><rect x="6" y="7" width="1" height="1" fill="#ffffff"/><rect x="7" y="7" width="2" height="1" fill="#000000"/><rect x="9" y="7" width="1" height="1" fill="#ffffff"/><rect x="10" y="7" width="3" height="1" fill="#000000"/><rect x="13" y="7" width="1" height="1" fill="#ffffff"/><rect x="14" y="7" width="1" height="1" fill="#7b4a12"/><rect x="0" y="8" width="1" height="1" fill="#7b4a12"/><rect x="1" y="8" width="4" height="1" fill="#ffffff"/><rect x="5" y="8" width="1" height="1" fill="#7b4a12"/><rect x="6" y="8" width="1" height="1" fill="#ffffff"/><rect x="7" y="8" width="2" height="1" fill="#000000"/><rect x="9" y="8" width="1" height="1" fill="#ffffff"/><rect x="10" y="8" width="3" height="1" fill="#000000"/><rect x="13" y="8" width="1" height="1" fill="#ffffff"/><rect x="14" y="8" width="1" height="1" fill="#7b4a12"/><rect x="0" y="9" width="6" height="1" fill="#7b4a12"/><rect x="6" y="9" width="8" height="1" fill="#ffffff"/><rect x="14" y="9" width="1" height="1" fill="#7b4a12"/><rect x="0" y="10" width="1" height="1" fill="#7b4a12"/><rect x="1" y="10" width="4" height="1" fill="#ffffff"/><rect x="5" y="10" width="1" height="1" fill="#7b4a12"/><rect x="6" y="10" width="1" height="1" fill="#ffffff"/><rect x="7" y="10" width="2" height="1" fill="#000000"/><rect x="9" y="10" width="1" height="1" fill="#ffffff"/><rect x="10" y="10" width="2" height="1" fill="#000000"/><rect x="12" y="10" width="2" height="1" fill="#ffffff"/><rect x="14" y="10" width="1" height="1" fill="#7b4a12"/><rect x="0" y="11" width="6" height="1" fill="#7b4a12"/><rect x="6" y="11" width="8" height="1" fill="#ffffff"/><rect x="14" y="11" width="1" height="1" fill="#7b4a12"/><rect x="0" y="12" width="1" height="1" fill="#7b4a12"/><rect x="1" y="12" width="4" height="1" fill="#ffffff"/><rect x="5" y="12" width="1" height="1" fill="#7b4a12"/><rect x="6" y="12" width="1" height="1" fill="#ffffff"/><rect x="7" y="12" width="2" height="1" fill="#000000"/><rect x="9" y="12" width="5" height="1" fill="#ffffff"/><rect x="14" y="12" width="1" height="1" fill="#7b4a12"/><rect x="0" y="13" width="1" height="1" fill="#7b4a12"/><rect x="1" y="13" width="4" height="1" fill="#ffffff"/><rect x="5" y="13" width="1" height="1" fill="#7b4a12"/><rect x="6" y="13" width="8" height="1" fill="#ffffff"/><rect x="14" y="13" width="1" height="1" fill="#7b4a12"/><rect x="0" y="14" width="15" height="1" fill="#7b4a12"/><g transform="translate(8,8)"><rect x="3" y="0" width="1" height="1" fill="#ff0000"/><rect x="2" y="1" width="3" height="1" fill="#ff0000"/><rect x="2" y="2" width="3" height="1" fill="#ff0000"/><rect x="1" y="3" width="2" height="1" fill="#ff0000"/><rect x="3" y="3" width="1" height="1" fill="#ffffff"/><rect x="4" y="3" width="2" height="1" fill="#ff0000"/><rect x="1" y="4" width="5" height="1" fill="#ff0000"/><rect x="0" y="5" width="7" height="1" fill="#ff0000"/><rect x="0" y="6" width="2" height="1" fill="#ff0000"/><rect x="5" y="6" width="2" height="1" fill="#ff0000"/></g></svg>
<div class="t" style="left:142px;top:794px;font-size:12px;line-height:12px;color:#333333;letter-spacing:0.257px;">Frag00025</div>
<div style="left:110px;top:822px;width:10px;height:1px;background:#a9c1e2;"></div>
<svg style="left:123px;top:815px;" width="16" height="16" viewBox="0 0 16 16" shape-rendering="crispEdges"><rect x="0" y="0" width="15" height="1" fill="#7b4a12"/><rect x="0" y="1" width="1" height="1" fill="#7b4a12"/><rect x="1" y="1" width="4" height="1" fill="#33e51a"/><rect x="5" y="1" width="2" height="1" fill="#7b4a12"/><rect x="7" y="1" width="2" height="1" fill="#ffffff"/><rect x="9" y="1" width="1" height="1" fill="#7b4a12"/><rect x="10" y="1" width="3" height="1" fill="#ffffff"/><rect x="13" y="1" width="2" height="1" fill="#7b4a12"/><rect x="0" y="2" width="1" height="1" fill="#7b4a12"/><rect x="1" y="2" width="4" height="1" fill="#33e51a"/><rect x="5" y="2" width="2" height="1" fill="#7b4a12"/><rect x="7" y="2" width="2" height="1" fill="#ffffff"/><rect x="9" y="2" width="1" height="1" fill="#7b4a12"/><rect x="10" y="2" width="3" height="1" fill="#ffffff"/><rect x="13" y="2" width="2" height="1" fill="#7b4a12"/><rect x="0" y="3" width="1" height="1" fill="#7b4a12"/><rect x="1" y="3" width="4" height="1" fill="#33e51a"/><rect x="5" y="3" width="10" height="1" fill="#7b4a12"/><rect x="0" y="4" width="6" height="1" fill="#7b4a12"/><rect x="6" y="4" width="8" height="1" fill="#ffffff"/><rect x="14" y="4" width="1" height="1" fill="#7b4a12"/><rect x="0" y="5" width="1" height="1" fill="#7b4a12"/><rect x="1" y="5" width="4" height="1" fill="#ffffff"/><rect x="5" y="5" width="1" height="1" fill="#7b4a12"/><rect x="6" y="5" width="1" height="1" fill="#ffffff"/><rect x="7" y="5" width="2" height="1" fill="#000000"/><rect x="9" y="5" width="1" height="1" fill="#ffffff"/><rect x="10" y="5" width="3" height="1" fill="#000000"/><rect x="13" y="5" width="1" height="1" fill="#ffffff"/><rect x="14" y="5" width="1" height="1" fill="#7b4a12"/><rect x="0" y="6" width="6" height="1" fill="#7b4a12"/><rect x="6" y="6" width="8" height="1" fill="#ffffff"/><rect x="14" y="6" width="1" height="1" fill="#7b4a12"/><rect x="0" y="7" width="1" height="1" fill="#7b4a12"/><rect x="1" y="7" width="4" height="1" fill="#ffffff"/><rect x="5" y="7" width="1" height="1" fill="#7b4a12"/><rect x="6" y="7" width="1" height="1" fill="#ffffff"/><rect x="7" y="7" width="2" height="1" fill="#000000"/><rect x="9" y="7" width="1" height="1" fill="#ffffff"/><rect x="10" y="7" width="3" height="1" fill="#000000"/><rect x="13" y="7" width="1" height="1" fill="#ffffff"/><rect x="14" y="7" width="1" height="1" fill="#7b4a12"/><rect x="0" y="8" width="1" height="1" fill="#7b4a12"/><rect x="1" y="8" width="4" height="1" fill="#ffffff"/><rect x="5" y="8" width="1" height="1" fill="#7b4a12"/><rect x="6" y="8" width="1" height="1" fill="#ffffff"/><rect x="7" y="8" width="2" height="1" fill="#000000"/><rect x="9" y="8" width="1" height="1" fill="#ffffff"/><rect x="10" y="8" width="3" height="1" fill="#000000"/><rect x="13" y="8" width="1" height="1" fill="#ffffff"/><rect x="14" y="8" width="1" height="1" fill="#7b4a12"/><rect x="0" y="9" width="6" height="1" fill="#7b4a12"/><rect x="6" y="9" width="8" height="1" fill="#ffffff"/><rect x="14" y="9" width="1" height="1" fill="#7b4a12"/><rect x="0" y="10" width="1" height="1" fill="#7b4a12"/><rect x="1" y="10" width="4" height="1" fill="#ffffff"/><rect x="5" y="10" width="1" height="1" fill="#7b4a12"/><rect x="6" y="10" width="1" height="1" fill="#ffffff"/><rect x="7" y="10" width="2" height="1" fill="#000000"/><rect x="9" y="10" width="1" height="1" fill="#ffffff"/><rect x="10" y="10" width="2" height="1" fill="#000000"/><rect x="12" y="10" width="2" height="1" fill="#ffffff"/><rect x="14" y="10" width="1" height="1" fill="#7b4a12"/><rect x="0" y="11" width="6" height="1" fill="#7b4a12"/><rect x="6" y="11" width="8" height="1" fill="#ffffff"/><rect x="14" y="11" width="1" height="1" fill="#7b4a12"/><rect x="0" y="12" width="1" height="1" fill="#7b4a12"/><rect x="1" y="12" width="4" height="1" fill="#ffffff"/><rect x="5" y="12" width="1" height="1" fill="#7b4a12"/><rect x="6" y="12" width="1" height="1" fill="#ffffff"/><rect x="7" y="12" width="2" height="1" fill="#000000"/><rect x="9" y="12" width="5" height="1" fill="#ffffff"/><rect x="14" y="12" width="1" height="1" fill="#7b4a12"/><rect x="0" y="13" width="1" height="1" fill="#7b4a12"/><rect x="1" y="13" width="4" height="1" fill="#ffffff"/><rect x="5" y="13" width="1" height="1" fill="#7b4a12"/><rect x="6" y="13" width="8" height="1" fill="#ffffff"/><rect x="14" y="13" width="1" height="1" fill="#7b4a12"/><rect x="0" y="14" width="15" height="1" fill="#7b4a12"/><g transform="translate(8,8)"><rect x="3" y="0" width="1" height="1" fill="#ff0000"/><rect x="2" y="1" width="3" height="1" fill="#ff0000"/><rect x="2" y="2" width="3" height="1" fill="#ff0000"/><rect x="1" y="3" width="2" height="1" fill="#ff0000"/><rect x="3" y="3" width="1" height="1" fill="#ffffff"/><rect x="4" y="3" width="2" height="1" fill="#ff0000"/><rect x="1" y="4" width="5" height="1" fill="#ff0000"/><rect x="0" y="5" width="7" height="1" fill="#ff0000"/><rect x="0" y="6" width="2" height="1" fill="#ff0000"/><rect x="5" y="6" width="2" height="1" fill="#ff0000"/></g></svg>
<div class="t" style="left:142px;top:817px;font-size:12px;line-height:12px;color:#333333;letter-spacing:0.257px;">Frag00026</div>
<div style="left:110px;top:845px;width:10px;height:1px;background:#a9c1e2;"></div>
<svg style="left:123px;top:838px;" width="16" height="16" viewBox="0 0 16 16" shape-rendering="crispEdges"><rect x="0" y="0" width="15" height="1" fill="#7b4a12"/><rect x="0" y="1" width="1" height="1" fill="#7b4a12"/><rect x="1" y="1" width="4" height="1" fill="#33e51a"/><rect x="5" y="1" width="2" height="1" fill="#7b4a12"/><rect x="7" y="1" width="2" height="1" fill="#ffffff"/><rect x="9" y="1" width="1" height="1" fill="#7b4a12"/><rect x="10" y="1" width="3" height="1" fill="#ffffff"/><rect x="13" y="1" width="2" height="1" fill="#7b4a12"/><rect x="0" y="2" width="1" height="1" fill="#7b4a12"/><rect x="1" y="2" width="4" height="1" fill="#33e51a"/><rect x="5" y="2" width="2" height="1" fill="#7b4a12"/><rect x="7" y="2" width="2" height="1" fill="#ffffff"/><rect x="9" y="2" width="1" height="1" fill="#7b4a12"/><rect x="10" y="2" width="3" height="1" fill="#ffffff"/><rect x="13" y="2" width="2" height="1" fill="#7b4a12"/><rect x="0" y="3" width="1" height="1" fill="#7b4a12"/><rect x="1" y="3" width="4" height="1" fill="#33e51a"/><rect x="5" y="3" width="10" height="1" fill="#7b4a12"/><rect x="0" y="4" width="6" height="1" fill="#7b4a12"/><rect x="6" y="4" width="8" height="1" fill="#ffffff"/><rect x="14" y="4" width="1" height="1" fill="#7b4a12"/><rect x="0" y="5" width="1" height="1" fill="#7b4a12"/><rect x="1" y="5" width="4" height="1" fill="#ffffff"/><rect x="5" y="5" width="1" height="1" fill="#7b4a12"/><rect x="6" y="5" width="1" height="1" fill="#ffffff"/><rect x="7" y="5" width="2" height="1" fill="#000000"/><rect x="9" y="5" width="1" height="1" fill="#ffffff"/><rect x="10" y="5" width="3" height="1" fill="#000000"/><rect x="13" y="5" width="1" height="1" fill="#ffffff"/><rect x="14" y="5" width="1" height="1" fill="#7b4a12"/><rect x="0" y="6" width="6" height="1" fill="#7b4a12"/><rect x="6" y="6" width="8" height="1" fill="#ffffff"/><rect x="14" y="6" width="1" height="1" fill="#7b4a12"/><rect x="0" y="7" width="1" height="1" fill="#7b4a12"/><rect x="1" y="7" width="4" height="1" fill="#ffffff"/><rect x="5" y="7" width="1" height="1" fill="#7b4a12"/><rect x="6" y="7" width="1" height="1" fill="#ffffff"/><rect x="7" y="7" width="2" height="1" fill="#000000"/><rect x="9" y="7" width="1" height="1" fill="#ffffff"/><rect x="10" y="7" width="3" height="1" fill="#000000"/><rect x="13" y="7" width="1" height="1" fill="#ffffff"/><rect x="14" y="7" width="1" height="1" fill="#7b4a12"/><rect x="0" y="8" width="1" height="1" fill="#7b4a12"/><rect x="1" y="8" width="4" height="1" fill="#ffffff"/><rect x="5" y="8" width="1" height="1" fill="#7b4a12"/><rect x="6" y="8" width="1" height="1" fill="#ffffff"/><rect x="7" y="8" width="2" height="1" fill="#000000"/><rect x="9" y="8" width="1" height="1" fill="#ffffff"/><rect x="10" y="8" width="3" height="1" fill="#000000"/><rect x="13" y="8" width="1" height="1" fill="#ffffff"/><rect x="14" y="8" width="1" height="1" fill="#7b4a12"/><rect x="0" y="9" width="6" height="1" fill="#7b4a12"/><rect x="6" y="9" width="8" height="1" fill="#ffffff"/><rect x="14" y="9" width="1" height="1" fill="#7b4a12"/><rect x="0" y="10" width="1" height="1" fill="#7b4a12"/><rect x="1" y="10" width="4" height="1" fill="#ffffff"/><rect x="5" y="10" width="1" height="1" fill="#7b4a12"/><rect x="6" y="10" width="1" height="1" fill="#ffffff"/><rect x="7" y="10" width="2" height="1" fill="#000000"/><rect x="9" y="10" width="1" height="1" fill="#ffffff"/><rect x="10" y="10" width="2" height="1" fill="#000000"/><rect x="12" y="10" width="2" height="1" fill="#ffffff"/><rect x="14" y="10" width="1" height="1" fill="#7b4a12"/><rect x="0" y="11" width="6" height="1" fill="#7b4a12"/><rect x="6" y="11" width="8" height="1" fill="#ffffff"/><rect x="14" y="11" width="1" height="1" fill="#7b4a12"/><rect x="0" y="12" width="1" height="1" fill="#7b4a12"/><rect x="1" y="12" width="4" height="1" fill="#ffffff"/><rect x="5" y="12" width="1" height="1" fill="#7b4a12"/><rect x="6" y="12" width="1" height="1" fill="#ffffff"/><rect x="7" y="12" width="2" height="1" fill="#000000"/><rect x="9" y="12" width="5" height="1" fill="#ffffff"/><rect x="14" y="12" width="1" height="1" fill="#7b4a12"/><rect x="0" y="13" width="1" height="1" fill="#7b4a12"/><rect x="1" y="13" width="4" height="1" fill="#ffffff"/><rect x="5" y="13" width="1" height="1" fill="#7b4a12"/><rect x="6" y="13" width="8" height="1" fill="#ffffff"/><rect x="14" y="13" width="1" height="1" fill="#7b4a12"/><rect x="0" y="14" width="15" height="1" fill="#7b4a12"/><g transform="translate(8,8)"><rect x="3" y="0" width="1" height="1" fill="#ff0000"/><rect x="2" y="1" width="3" height="1" fill="#ff0000"/><rect x="2" y="2" width="3" height="1" fill="#ff0000"/><rect x="1" y="3" width="2" height="1" fill="#ff0000"/><rect x="3" y="3" width="1" height="1" fill="#ffffff"/><rect x="4" y="3" width="2" height="1" fill="#ff0000"/><rect x="1" y="4" width="5" height="1" fill="#ff0000"/><rect x="0" y="5" width="7" height="1" fill="#ff0000"/><rect x="0" y="6" width="2" height="1" fill="#ff0000"/><rect x="5" y="6" width="2" height="1" fill="#ff0000"/></g></svg>
<div class="t" style="left:142px;top:840px;font-size:12px;line-height:12px;color:#333333;letter-spacing:0.257px;">Frag00027</div>
<div style="left:110px;top:868px;width:10px;height:1px;background:#a9c1e2;"></div>
<svg style="left:123px;top:861px;" width="16" height="16" viewBox="0 0 16 16" shape-rendering="crispEdges"><rect x="0" y="0" width="15" height="1" fill="#7b4a12"/><rect x="0" y="1" width="1" height="1" fill="#7b4a12"/><rect x="1" y="1" width="4" height="1" fill="#33e51a"/><rect x="5" y="1" width="2" height="1" fill="#7b4a12"/><rect x="7" y="1" width="2" height="1" fill="#ffffff"/><rect x="9" y="1" width="1" height="1" fill="#7b4a12"/><rect x="10" y="1" width="3" height="1" fill="#ffffff"/><rect x="13" y="1" width="2" height="1" fill="#7b4a12"/><rect x="0" y="2" width="1" height="1" fill="#7b4a12"/><rect x="1" y="2" width="4" height="1" fill="#33e51a"/><rect x="5" y="2" width="2" height="1" fill="#7b4a12"/><rect x="7" y="2" width="2" height="1" fill="#ffffff"/><rect x="9" y="2" width="1" height="1" fill="#7b4a12"/><rect x="10" y="2" width="3" height="1" fill="#ffffff"/><rect x="13" y="2" width="2" height="1" fill="#7b4a12"/><rect x="0" y="3" width="1" height="1" fill="#7b4a12"/><rect x="1" y="3" width="4" height="1" fill="#33e51a"/><rect x="5" y="3" width="10" height="1" fill="#7b4a12"/><rect x="0" y="4" width="6" height="1" fill="#7b4a12"/><rect x="6" y="4" width="8" height="1" fill="#ffffff"/><rect x="14" y="4" width="1" height="1" fill="#7b4a12"/><rect x="0" y="5" width="1" height="1" fill="#7b4a12"/><rect x="1" y="5" width="4" height="1" fill="#ffffff"/><rect x="5" y="5" width="1" height="1" fill="#7b4a12"/><rect x="6" y="5" width="1" height="1" fill="#ffffff"/><rect x="7" y="5" width="2" height="1" fill="#000000"/><rect x="9" y="5" width="1" height="1" fill="#ffffff"/><rect x="10" y="5" width="3" height="1" fill="#000000"/><rect x="13" y="5" width="1" height="1" fill="#ffffff"/><rect x="14" y="5" width="1" height="1" fill="#7b4a12"/><rect x="0" y="6" width="6" height="1" fill="#7b4a12"/><rect x="6" y="6" width="8" height="1" fill="#ffffff"/><rect x="14" y="6" width="1" height="1" fill="#7b4a12"/><rect x="0" y="7" width="1" height="1" fill="#7b4a12"/><rect x="1" y="7" width="4" height="1" fill="#ffffff"/><rect x="5" y="7" width="1" height="1" fill="#7b4a12"/><rect x="6" y="7" width="1" height="1" fill="#ffffff"/><rect x="7" y="7" width="2" height="1" fill="#000000"/><rect x="9" y="7" width="1" height="1" fill="#ffffff"/><rect x="10" y="7" width="3" height="1" fill="#000000"/><rect x="13" y="7" width="1" height="1" fill="#ffffff"/><rect x="14" y="7" width="1" height="1" fill="#7b4a12"/><rect x="0" y="8" width="1" height="1" fill="#7b4a12"/><rect x="1" y="8" width="4" height="1" fill="#ffffff"/><rect x="5" y="8" width="1" height="1" fill="#7b4a12"/><rect x="6" y="8" width="1" height="1" fill="#ffffff"/><rect x="7" y="8" width="2" height="1" fill="#000000"/><rect x="9" y="8" width="1" height="1" fill="#ffffff"/><rect x="10" y="8" width="3" height="1" fill="#000000"/><rect x="13" y="8" width="1" height="1" fill="#ffffff"/><rect x="14" y="8" width="1" height="1" fill="#7b4a12"/><rect x="0" y="9" width="6" height="1" fill="#7b4a12"/><rect x="6" y="9" width="8" height="1" fill="#ffffff"/><rect x="14" y="9" width="1" height="1" fill="#7b4a12"/><rect x="0" y="10" width="1" height="1" fill="#7b4a12"/><rect x="1" y="10" width="4" height="1" fill="#ffffff"/><rect x="5" y="10" width="1" height="1" fill="#7b4a12"/><rect x="6" y="10" width="1" height="1" fill="#ffffff"/><rect x="7" y="10" width="2" height="1" fill="#000000"/><rect x="9" y="10" width="1" height="1" fill="#ffffff"/><rect x="10" y="10" width="2" height="1" fill="#000000"/><rect x="12" y="10" width="2" height="1" fill="#ffffff"/><rect x="14" y="10" width="1" height="1" fill="#7b4a12"/><rect x="0" y="11" width="6" height="1" fill="#7b4a12"/><rect x="6" y="11" width="8" height="1" fill="#ffffff"/><rect x="14" y="11" width="1" height="1" fill="#7b4a12"/><rect x="0" y="12" width="1" height="1" fill="#7b4a12"/><rect x="1" y="12" width="4" height="1" fill="#ffffff"/><rect x="5" y="12" width="1" height="1" fill="#7b4a12"/><rect x="6" y="12" width="1" height="1" fill="#ffffff"/><rect x="7" y="12" width="2" height="1" fill="#000000"/><rect x="9" y="12" width="5" height="1" fill="#ffffff"/><rect x="14" y="12" width="1" height="1" fill="#7b4a12"/><rect x="0" y="13" width="1" height="1" fill="#7b4a12"/><rect x="1" y="13" width="4" height="1" fill="#ffffff"/><rect x="5" y="13" width="1" height="1" fill="#7b4a12"/><rect x="6" y="13" width="8" height="1" fill="#ffffff"/><rect x="14" y="13" width="1" height="1" fill="#7b4a12"/><rect x="0" y="14" width="15" height="1" fill="#7b4a12"/><g transform="translate(8,8)"><rect x="3" y="0" width="1" height="1" fill="#ff0000"/><rect x="2" y="1" width="3" height="1" fill="#ff0000"/><rect x="2" y="2" width="3" height="1" fill="#ff0000"/><rect x="1" y="3" width="2" height="1" fill="#ff0000"/><rect x="3" y="3" width="1" height="1" fill="#ffffff"/><rect x="4" y="3" width="2" height="1" fill="#ff0000"/><rect x="1" y="4" width="5" height="1" fill="#ff0000"/><rect x="0" y="5" width="7" height="1" fill="#ff0000"/><rect x="0" y="6" width="2" height="1" fill="#ff0000"/><rect x="5" y="6" width="2" height="1" fill="#ff0000"/></g></svg>
<div class="t" style="left:142px;top:863px;font-size:12px;line-height:12px;color:#333333;letter-spacing:0.257px;">Frag00028</div>
<div style="left:110px;top:891px;width:10px;height:1px;background:#a9c1e2;"></div>
<svg style="left:123px;top:884px;" width="16" height="16" viewBox="0 0 16 16" shape-rendering="crispEdges"><rect x="0" y="0" width="15" height="1" fill="#7b4a12"/><rect x="0" y="1" width="1" height="1" fill="#7b4a12"/><rect x="1" y="1" width="4" height="1" fill="#33e51a"/><rect x="5" y="1" width="2" height="1" fill="#7b4a12"/><rect x="7" y="1" width="2" height="1" fill="#ffffff"/><rect x="9" y="1" width="1" height="1" fill="#7b4a12"/><rect x="10" y="1" width="3" height="1" fill="#ffffff"/><rect x="13" y="1" width="2" height="1" fill="#7b4a12"/><rect x="0" y="2" width="1" height="1" fill="#7b4a12"/><rect x="1" y="2" width="4" height="1" fill="#33e51a"/><rect x="5" y="2" width="2" height="1" fill="#7b4a12"/><rect x="7" y="2" width="2" height="1" fill="#ffffff"/><rect x="9" y="2" width="1" height="1" fill="#7b4a12"/><rect x="10" y="2" width="3" height="1" fill="#ffffff"/><rect x="13" y="2" width="2" height="1" fill="#7b4a12"/><rect x="0" y="3" width="1" height="1" fill="#7b4a12"/><rect x="1" y="3" width="4" height="1" fill="#33e51a"/><rect x="5" y="3" width="10" height="1" fill="#7b4a12"/><rect x="0" y="4" width="6" height="1" fill="#7b4a12"/><rect x="6" y="4" width="8" height="1" fill="#ffffff"/><rect x="14" y="4" width="1" height="1" fill="#7b4a12"/><rect x="0" y="5" width="1" height="1" fill="#7b4a12"/><rect x="1" y="5" width="4" height="1" fill="#ffffff"/><rect x="5" y="5" width="1" height="1" fill="#7b4a12"/><rect x="6" y="5" width="1" height="1" fill="#ffffff"/><rect x="7" y="5" width="2" height="1" fill="#000000"/><rect x="9" y="5" width="1" height="1" fill="#ffffff"/><rect x="10" y="5" width="3" height="1" fill="#000000"/><rect x="13" y="5" width="1" height="1" fill="#ffffff"/><rect x="14" y="5" width="1" height="1" fill="#7b4a12"/><rect x="0" y="6" width="6" height="1" fill="#7b4a12"/><rect x="6" y="6" width="8" height="1" fill="#ffffff"/><rect x="14" y="6" width="1" height="1" fill="#7b4a12"/><rect x="0" y="7" width="1" height="1" fill="#7b4a12"/><rect x="1" y="7" width="4" height="1" fill="#ffffff"/><rect x="5" y="7" width="1" height="1" fill="#7b4a12"/><rect x="6" y="7" width="1" height="1" fill="#ffffff"/><rect x="7" y="7" width="2" height="1" fill="#000000"/><rect x="9" y="7" width="1" height="1" fill="#ffffff"/><rect x="10" y="7" width="3" height="1" fill="#000000"/><rect x="13" y="7" width="1" height="1" fill="#ffffff"/><rect x="14" y="7" width="1" height="1" fill="#7b4a12"/><rect x="0" y="8" width="1" height="1" fill="#7b4a12"/><rect x="1" y="8" width="4" height="1" fill="#ffffff"/><rect x="5" y="8" width="1" height="1" fill="#7b4a12"/><rect x="6" y="8" width="1" height="1" fill="#ffffff"/><rect x="7" y="8" width="2" height="1" fill="#000000"/><rect x="9" y="8" width="1" height="1" fill="#ffffff"/><rect x="10" y="8" width="3" height="1" fill="#000000"/><rect x="13" y="8" width="1" height="1" fill="#ffffff"/><rect x="14" y="8" width="1" height="1" fill="#7b4a12"/><rect x="0" y="9" width="6" height="1" fill="#7b4a12"/><rect x="6" y="9" width="8" height="1" fill="#ffffff"/><rect x="14" y="9" width="1" height="1" fill="#7b4a12"/><rect x="0" y="10" width="1" height="1" fill="#7b4a12"/><rect x="1" y="10" width="4" height="1" fill="#ffffff"/><rect x="5" y="10" width="1" height="1" fill="#7b4a12"/><rect x="6" y="10" width="1" height="1" fill="#ffffff"/><rect x="7" y="10" width="2" height="1" fill="#000000"/><rect x="9" y="10" width="1" height="1" fill="#ffffff"/><rect x="10" y="10" width="2" height="1" fill="#000000"/><rect x="12" y="10" width="2" height="1" fill="#ffffff"/><rect x="14" y="10" width="1" height="1" fill="#7b4a12"/><rect x="0" y="11" width="6" height="1" fill="#7b4a12"/><rect x="6" y="11" width="8" height="1" fill="#ffffff"/><rect x="14" y="11" width="1" height="1" fill="#7b4a12"/><rect x="0" y="12" width="1" height="1" fill="#7b4a12"/><rect x="1" y="12" width="4" height="1" fill="#ffffff"/><rect x="5" y="12" width="1" height="1" fill="#7b4a12"/><rect x="6" y="12" width="1" height="1" fill="#ffffff"/><rect x="7" y="12" width="2" height="1" fill="#000000"/><rect x="9" y="12" width="5" height="1" fill="#ffffff"/><rect x="14" y="12" width="1" height="1" fill="#7b4a12"/><rect x="0" y="13" width="1" height="1" fill="#7b4a12"/><rect x="1" y="13" width="4" height="1" fill="#ffffff"/><rect x="5" y="13" width="1" height="1" fill="#7b4a12"/><rect x="6" y="13" width="8" height="1" fill="#ffffff"/><rect x="14" y="13" width="1" height="1" fill="#7b4a12"/><rect x="0" y="14" width="15" height="1" fill="#7b4a12"/><g transform="translate(8,8)"><rect x="3" y="0" width="1" height="1" fill="#ff0000"/><rect x="2" y="1" width="3" height="1" fill="#ff0000"/><rect x="2" y="2" width="3" height="1" fill="#ff0000"/><rect x="1" y="3" width="2" height="1" fill="#ff0000"/><rect x="3" y="3" width="1" height="1" fill="#ffffff"/><rect x="4" y="3" width="2" height="1" fill="#ff0000"/><rect x="1" y="4" width="5" height="1" fill="#ff0000"/><rect x="0" y="5" width="7" height="1" fill="#ff0000"/><rect x="0" y="6" width="2" height="1" fill="#ff0000"/><rect x="5" y="6" width="2" height="1" fill="#ff0000"/></g></svg>
<div class="t" style="left:142px;top:886px;font-size:12px;line-height:12px;color:#333333;letter-spacing:0.257px;">Frag00029</div>
<div style="left:110px;top:914px;width:10px;height:1px;background:#a9c1e2;"></div>
<svg style="left:123px;top:907px;" width="16" height="16" viewBox="0 0 16 16" shape-rendering="crispEdges"><rect x="0" y="0" width="15" height="1" fill="#7b4a12"/><rect x="0" y="1" width="1" height="1" fill="#7b4a12"/><rect x="1" y="1" width="4" height="1" fill="#33e51a"/><rect x="5" y="1" width="2" height="1" fill="#7b4a12"/><rect x="7" y="1" width="2" height="1" fill="#ffffff"/><rect x="9" y="1" width="1" height="1" fill="#7b4a12"/><rect x="10" y="1" width="3" height="1" fill="#ffffff"/><rect x="13" y="1" width="2" height="1" fill="#7b4a12"/><rect x="0" y="2" width="1" height="1" fill="#7b4a12"/><rect x="1" y="2" width="4" height="1" fill="#33e51a"/><rect x="5" y="2" width="2" height="1" fill="#7b4a12"/><rect x="7" y="2" width="2" height="1" fill="#ffffff"/><rect x="9" y="2" width="1" height="1" fill="#7b4a12"/><rect x="10" y="2" width="3" height="1" fill="#ffffff"/><rect x="13" y="2" width="2" height="1" fill="#7b4a12"/><rect x="0" y="3" width="1" height="1" fill="#7b4a12"/><rect x="1" y="3" width="4" height="1" fill="#33e51a"/><rect x="5" y="3" width="10" height="1" fill="#7b4a12"/><rect x="0" y="4" width="6" height="1" fill="#7b4a12"/><rect x="6" y="4" width="8" height="1" fill="#ffffff"/><rect x="14" y="4" width="1" height="1" fill="#7b4a12"/><rect x="0" y="5" width="1" height="1" fill="#7b4a12"/><rect x="1" y="5" width="4" height="1" fill="#ffffff"/><rect x="5" y="5" width="1" height="1" fill="#7b4a12"/><rect x="6" y="5" width="1" height="1" fill="#ffffff"/><rect x="7" y="5" width="2" height="1" fill="#000000"/><rect x="9" y="5" width="1" height="1" fill="#ffffff"/><rect x="10" y="5" width="3" height="1" fill="#000000"/><rect x="13" y="5" width="1" height="1" fill="#ffffff"/><rect x="14" y="5" width="1" height="1" fill="#7b4a12"/><rect x="0" y="6" width="6" height="1" fill="#7b4a12"/><rect x="6" y="6" width="8" height="1" fill="#ffffff"/><rect x="14" y="6" width="1" height="1" fill="#7b4a12"/><rect x="0" y="7" width="1" height="1" fill="#7b4a12"/><rect x="1" y="7" width="4" height="1" fill="#ffffff"/><rect x="5" y="7" width="1" height="1" fill="#7b4a12"/><rect x="6" y="7" width="1" height="1" fill="#ffffff"/><rect x="7" y="7" width="2" height="1" fill="#000000"/><rect x="9" y="7" width="1" height="1" fill="#ffffff"/><rect x="10" y="7" width="3" height="1" fill="#000000"/><rect x="13" y="7" width="1" height="1" fill="#ffffff"/><rect x="14" y="7" width="1" height="1" fill="#7b4a12"/><rect x="0" y="8" width="1" height="1" fill="#7b4a12"/><rect x="1" y="8" width="4" height="1" fill="#ffffff"/><rect x="5" y="8" width="1" height="1" fill="#7b4a12"/><rect x="6" y="8" width="1" height="1" fill="#ffffff"/><rect x="7" y="8" width="2" height="1" fill="#000000"/><rect x="9" y="8" width="1" height="1" fill="#ffffff"/><rect x="10" y="8" width="3" height="1" fill="#000000"/><rect x="13" y="8" width="1" height="1" fill="#ffffff"/><rect x="14" y="8" width="1" height="1" fill="#7b4a12"/><rect x="0" y="9" width="6" height="1" fill="#7b4a12"/><rect x="6" y="9" width="8" height="1" fill="#ffffff"/><rect x="14" y="9" width="1" height="1" fill="#7b4a12"/><rect x="0" y="10" width="1" height="1" fill="#7b4a12"/><rect x="1" y="10" width="4" height="1" fill="#ffffff"/><rect x="5" y="10" width="1" height="1" fill="#7b4a12"/><rect x="6" y="10" width="1" height="1" fill="#ffffff"/><rect x="7" y="10" width="2" height="1" fill="#000000"/><rect x="9" y="10" width="1" height="1" fill="#ffffff"/><rect x="10" y="10" width="2" height="1" fill="#000000"/><rect x="12" y="10" width="2" height="1" fill="#ffffff"/><rect x="14" y="10" width="1" height="1" fill="#7b4a12"/><rect x="0" y="11" width="6" height="1" fill="#7b4a12"/><rect x="6" y="11" width="8" height="1" fill="#ffffff"/><rect x="14" y="11" width="1" height="1" fill="#7b4a12"/><rect x="0" y="12" width="1" height="1" fill="#7b4a12"/><rect x="1" y="12" width="4" height="1" fill="#ffffff"/><rect x="5" y="12" width="1" height="1" fill="#7b4a12"/><rect x="6" y="12" width="1" height="1" fill="#ffffff"/><rect x="7" y="12" width="2" height="1" fill="#000000"/><rect x="9" y="12" width="5" height="1" fill="#ffffff"/><rect x="14" y="12" width="1" height="1" fill="#7b4a12"/><rect x="0" y="13" width="1" height="1" fill="#7b4a12"/><rect x="1" y="13" width="4" height="1" fill="#ffffff"/><rect x="5" y="13" width="1" height="1" fill="#7b4a12"/><rect x="6" y="13" width="8" height="1" fill="#ffffff"/><rect x="14" y="13" width="1" height="1" fill="#7b4a12"/><rect x="0" y="14" width="15" height="1" fill="#7b4a12"/><g transform="translate(8,8)"><rect x="3" y="0" width="1" height="1" fill="#ff0000"/><rect x="2" y="1" width="3" height="1" fill="#ff0000"/><rect x="2" y="2" width="3" height="1" fill="#ff0000"/><rect x="1" y="3" width="2" height="1" fill="#ff0000"/><rect x="3" y="3" width="1" height="1" fill="#ffffff"/><rect x="4" y="3" width="2" height="1" fill="#ff0000"/><rect x="1" y="4" width="5" height="1" fill="#ff0000"/><rect x="0" y="5" width="7" height="1" fill="#ff0000"/><rect x="0" y="6" width="2" height="1" fill="#ff0000"/><rect x="5" y="6" width="2" height="1" fill="#ff0000"/></g></svg>
<div class="t" style="left:142px;top:909px;font-size:12px;line-height:12px;color:#333333;letter-spacing:0.244px;">Frag0003</div>
<div style="left:110px;top:937px;width:10px;height:1px;background:#a9c1e2;"></div>
<svg style="left:123px;top:930px;" width="16" height="16" viewBox="0 0 16 16" shape-rendering="crispEdges"><rect x="0" y="0" width="15" height="1" fill="#7b4a12"/><rect x="0" y="1" width="1" height="1" fill="#7b4a12"/><rect x="1" y="1" width="4" height="1" fill="#33e51a"/><rect x="5" y="1" width="2" height="1" fill="#7b4a12"/><rect x="7" y="1" width="2" height="1" fill="#ffffff"/><rect x="9" y="1" width="1" height="1" fill="#7b4a12"/><rect x="10" y="1" width="3" height="1" fill="#ffffff"/><rect x="13" y="1" width="2" height="1" fill="#7b4a12"/><rect x="0" y="2" width="1" height="1" fill="#7b4a12"/><rect x="1" y="2" width="4" height="1" fill="#33e51a"/><rect x="5" y="2" width="2" height="1" fill="#7b4a12"/><rect x="7" y="2" width="2" height="1" fill="#ffffff"/><rect x="9" y="2" width="1" height="1" fill="#7b4a12"/><rect x="10" y="2" width="3" height="1" fill="#ffffff"/><rect x="13" y="2" width="2" height="1" fill="#7b4a12"/><rect x="0" y="3" width="1" height="1" fill="#7b4a12"/><rect x="1" y="3" width="4" height="1" fill="#33e51a"/><rect x="5" y="3" width="10" height="1" fill="#7b4a12"/><rect x="0" y="4" width="6" height="1" fill="#7b4a12"/><rect x="6" y="4" width="8" height="1" fill="#ffffff"/><rect x="14" y="4" width="1" height="1" fill="#7b4a12"/><rect x="0" y="5" width="1" height="1" fill="#7b4a12"/><rect x="1" y="5" width="4" height="1" fill="#ffffff"/><rect x="5" y="5" width="1" height="1" fill="#7b4a12"/><rect x="6" y="5" width="1" height="1" fill="#ffffff"/><rect x="7" y="5" width="2" height="1" fill="#000000"/><rect x="9" y="5" width="1" height="1" fill="#ffffff"/><rect x="10" y="5" width="3" height="1" fill="#000000"/><rect x="13" y="5" width="1" height="1" fill="#ffffff"/><rect x="14" y="5" width="1" height="1" fill="#7b4a12"/><rect x="0" y="6" width="6" height="1" fill="#7b4a12"/><rect x="6" y="6" width="8" height="1" fill="#ffffff"/><rect x="14" y="6" width="1" height="1" fill="#7b4a12"/><rect x="0" y="7" width="1" height="1" fill="#7b4a12"/><rect x="1" y="7" width="4" height="1" fill="#ffffff"/><rect x="5" y="7" width="1" height="1" fill="#7b4a12"/><rect x="6" y="7" width="1" height="1" fill="#ffffff"/><rect x="7" y="7" width="2" height="1" fill="#000000"/><rect x="9" y="7" width="1" height="1" fill="#ffffff"/><rect x="10" y="7" width="3" height="1" fill="#000000"/><rect x="13" y="7" width="1" height="1" fill="#ffffff"/><rect x="14" y="7" width="1" height="1" fill="#7b4a12"/><rect x="0" y="8" width="1" height="1" fill="#7b4a12"/><rect x="1" y="8" width="4" height="1" fill="#ffffff"/><rect x="5" y="8" width="1" height="1" fill="#7b4a12"/><rect x="6" y="8" width="1" height="1" fill="#ffffff"/><rect x="7" y="8" width="2" height="1" fill="#000000"/><rect x="9" y="8" width="1" height="1" fill="#ffffff"/><rect x="10" y="8" width="3" height="1" fill="#000000"/><rect x="13" y="8" width="1" height="1" fill="#ffffff"/><rect x="14" y="8" width="1" height="1" fill="#7b4a12"/><rect x="0" y="9" width="6" height="1" fill="#7b4a12"/><rect x="6" y="9" width="8" height="1" fill="#ffffff"/><rect x="14" y="9" width="1" height="1" fill="#7b4a12"/><rect x="0" y="10" width="1" height="1" fill="#7b4a12"/><rect x="1" y="10" width="4" height="1" fill="#ffffff"/><rect x="5" y="10" width="1" height="1" fill="#7b4a12"/><rect x="6" y="10" width="1" height="1" fill="#ffffff"/><rect x="7" y="10" width="2" height="1" fill="#000000"/><rect x="9" y="10" width="1" height="1" fill="#ffffff"/><rect x="10" y="10" width="2" height="1" fill="#000000"/><rect x="12" y="10" width="2" height="1" fill="#ffffff"/><rect x="14" y="10" width="1" height="1" fill="#7b4a12"/><rect x="0" y="11" width="6" height="1" fill="#7b4a12"/><rect x="6" y="11" width="8" height="1" fill="#ffffff"/><rect x="14" y="11" width="1" height="1" fill="#7b4a12"/><rect x="0" y="12" width="1" height="1" fill="#7b4a12"/><rect x="1" y="12" width="4" height="1" fill="#ffffff"/><rect x="5" y="12" width="1" height="1" fill="#7b4a12"/><rect x="6" y="12" width="1" height="1" fill="#ffffff"/><rect x="7" y="12" width="2" height="1" fill="#000000"/><rect x="9" y="12" width="5" height="1" fill="#ffffff"/><rect x="14" y="12" width="1" height="1" fill="#7b4a12"/><rect x="0" y="13" width="1" height="1" fill="#7b4a12"/><rect x="1" y="13" width="4" height="1" fill="#ffffff"/><rect x="5" y="13" width="1" height="1" fill="#7b4a12"/><rect x="6" y="13" width="8" height="1" fill="#ffffff"/><rect x="14" y="13" width="1" height="1" fill="#7b4a12"/><rect x="0" y="14" width="15" height="1" fill="#7b4a12"/><g transform="translate(8,8)"><rect x="3" y="0" width="1" height="1" fill="#ff0000"/><rect x="2" y="1" width="3" height="1" fill="#ff0000"/><rect x="2" y="2" width="3" height="1" fill="#ff0000"/><rect x="1" y="3" width="2" height="1" fill="#ff0000"/><rect x="3" y="3" width="1" height="1" fill="#ffffff"/><rect x="4" y="3" width="2" height="1" fill="#ff0000"/><rect x="1" y="4" width="5" height="1" fill="#ff0000"/><rect x="0" y="5" width="7" height="1" fill="#ff0000"/><rect x="0" y="6" width="2" height="1" fill="#ff0000"/><rect x="5" y="6" width="2" height="1" fill="#ff0000"/></g></svg>
<div class="t" style="left:142px;top:932px;font-size:12px;line-height:12px;color:#333333;letter-spacing:0.257px;">Frag00030</div>
<div style="left:110px;top:960px;width:10px;height:1px;background:#a9c1e2;"></div>
<svg style="left:123px;top:953px;" width="16" height="16" viewBox="0 0 16 16" shape-rendering="crispEdges"><rect x="0" y="0" width="15" height="1" fill="#7b4a12"/><rect x="0" y="1" width="1" height="1" fill="#7b4a12"/><rect x="1" y="1" width="4" height="1" fill="#33e51a"/><rect x="5" y="1" width="2" height="1" fill="#7b4a12"/><rect x="7" y="1" width="2" height="1" fill="#ffffff"/><rect x="9" y="1" width="1" height="1" fill="#7b4a12"/><rect x="10" y="1" width="3" height="1" fill="#ffffff"/><rect x="13" y="1" width="2" height="1" fill="#7b4a12"/><rect x="0" y="2" width="1" height="1" fill="#7b4a12"/><rect x="1" y="2" width="4" height="1" fill="#33e51a"/><rect x="5" y="2" width="2" height="1" fill="#7b4a12"/><rect x="7" y="2" width="2" height="1" fill="#ffffff"/><rect x="9" y="2" width="1" height="1" fill="#7b4a12"/><rect x="10" y="2" width="3" height="1" fill="#ffffff"/><rect x="13" y="2" width="2" height="1" fill="#7b4a12"/><rect x="0" y="3" width="1" height="1" fill="#7b4a12"/><rect x="1" y="3" width="4" height="1" fill="#33e51a"/><rect x="5" y="3" width="10" height="1" fill="#7b4a12"/><rect x="0" y="4" width="6" height="1" fill="#7b4a12"/><rect x="6" y="4" width="8" height="1" fill="#ffffff"/><rect x="14" y="4" width="1" height="1" fill="#7b4a12"/><rect x="0" y="5" width="1" height="1" fill="#7b4a12"/><rect x="1" y="5" width="4" height="1" fill="#ffffff"/><rect x="5" y="5" width="1" height="1" fill="#7b4a12"/><rect x="6" y="5" width="1" height="1" fill="#ffffff"/><rect x="7" y="5" width="2" height="1" fill="#000000"/><rect x="9" y="5" width="1" height="1" fill="#ffffff"/><rect x="10" y="5" width="3" height="1" fill="#000000"/><rect x="13" y="5" width="1" height="1" fill="#ffffff"/><rect x="14" y="5" width="1" height="1" fill="#7b4a12"/><rect x="0" y="6" width="6" height="1" fill="#7b4a12"/><rect x="6" y="6" width="8" height="1" fill="#ffffff"/><rect x="14" y="6" width="1" height="1" fill="#7b4a12"/><rect x="0" y="7" width="1" height="1" fill="#7b4a12"/><rect x="1" y="7" width="4" height="1" fill="#ffffff"/><rect x="5" y="7" width="1" height="1" fill="#7b4a12"/><rect x="6" y="7" width="1" height="1" fill="#ffffff"/><rect x="7" y="7" width="2" height="1" fill="#000000"/><rect x="9" y="7" width="1" height="1" fill="#ffffff"/><rect x="10" y="7" width="3" height="1" fill="#000000"/><rect x="13" y="7" width="1" height="1" fill="#ffffff"/><rect x="14" y="7" width="1" height="1" fill="#7b4a12"/><rect x="0" y="8" width="1" height="1" fill="#7b4a12"/><rect x="1" y="8" width="4" height="1" fill="#ffffff"/><rect x="5" y="8" width="1" height="1" fill="#7b4a12"/><rect x="6" y="8" width="1" height="1" fill="#ffffff"/><rect x="7" y="8" width="2" height="1" fill="#000000"/><rect x="9" y="8" width="1" height="1" fill="#ffffff"/><rect x="10" y="8" width="3" height="1" fill="#000000"/><rect x="13" y="8" width="1" height="1" fill="#ffffff"/><rect x="14" y="8" width="1" height="1" fill="#7b4a12"/><rect x="0" y="9" width="6" height="1" fill="#7b4a12"/><rect x="6" y="9" width="8" height="1" fill="#ffffff"/><rect x="14" y="9" width="1" height="1" fill="#7b4a12"/><rect x="0" y="10" width="1" height="1" fill="#7b4a12"/><rect x="1" y="10" width="4" height="1" fill="#ffffff"/><rect x="5" y="10" width="1" height="1" fill="#7b4a12"/><rect x="6" y="10" width="1" height="1" fill="#ffffff"/><rect x="7" y="10" width="2" height="1" fill="#000000"/><rect x="9" y="10" width="1" height="1" fill="#ffffff"/><rect x="10" y="10" width="2" height="1" fill="#000000"/><rect x="12" y="10" width="2" height="1" fill="#ffffff"/><rect x="14" y="10" width="1" height="1" fill="#7b4a12"/><rect x="0" y="11" width="6" height="1" fill="#7b4a12"/><rect x="6" y="11" width="8" height="1" fill="#ffffff"/><rect x="14" y="11" width="1" height="1" fill="#7b4a12"/><rect x="0" y="12" width="1" height="1" fill="#7b4a12"/><rect x="1" y="12" width="4" height="1" fill="#ffffff"/><rect x="5" y="12" width="1" height="1" fill="#7b4a12"/><rect x="6" y="12" width="1" height="1" fill="#ffffff"/><rect x="7" y="12" width="2" height="1" fill="#000000"/><rect x="9" y="12" width="5" height="1" fill="#ffffff"/><rect x="14" y="12" width="1" height="1" fill="#7b4a12"/><rect x="0" y="13" width="1" height="1" fill="#7b4a12"/><rect x="1" y="13" width="4" height="1" fill="#ffffff"/><rect x="5" y="13" width="1" height="1" fill="#7b4a12"/><rect x="6" y="13" width="8" height="1" fill="#ffffff"/><rect x="14" y="13" width="1" height="1" fill="#7b4a12"/><rect x="0" y="14" width="15" height="1" fill="#7b4a12"/><g transform="translate(8,8)"><rect x="3" y="0" width="1" height="1" fill="#ff0000"/><rect x="2" y="1" width="3" height="1" fill="#ff0000"/><rect x="2" y="2" width="3" height="1" fill="#ff0000"/><rect x="1" y="3" width="2" height="1" fill="#ff0000"/><rect x="3" y="3" width="1" height="1" fill="#ffffff"/><rect x="4" y="3" width="2" height="1" fill="#ff0000"/><rect x="1" y="4" width="5" height="1" fill="#ff0000"/><rect x="0" y="5" width="7" height="1" fill="#ff0000"/><rect x="0" y="6" width="2" height="1" fill="#ff0000"/><rect x="5" y="6" width="2" height="1" fill="#ff0000"/></g></svg>
<div class="t" style="left:142px;top:955px;font-size:12px;line-height:12px;color:#333333;letter-spacing:0.257px;">Frag00031</div>
<div style="left:110px;top:983px;width:10px;height:1px;background:#a9c1e2;"></div>
<svg style="left:123px;top:976px;" width="16" height="16" viewBox="0 0 16 16" shape-rendering="crispEdges"><rect x="0" y="0" width="15" height="1" fill="#7b4a12"/><rect x="0" y="1" width="1" height="1" fill="#7b4a12"/><rect x="1" y="1" width="4" height="1" fill="#33e51a"/><rect x="5" y="1" width="2" height="1" fill="#7b4a12"/><rect x="7" y="1" width="2" height="1" fill="#ffffff"/><rect x="9" y="1" width="1" height="1" fill="#7b4a12"/><rect x="10" y="1" width="3" height="1" fill="#ffffff"/><rect x="13" y="1" width="2" height="1" fill="#7b4a12"/><rect x="0" y="2" width="1" height="1" fill="#7b4a12"/><rect x="1" y="2" width="4" height="1" fill="#33e51a"/><rect x="5" y="2" width="2" height="1" fill="#7b4a12"/><rect x="7" y="2" width="2" height="1" fill="#ffffff"/><rect x="9" y="2" width="1" height="1" fill="#7b4a12"/><rect x="10" y="2" width="3" height="1" fill="#ffffff"/><rect x="13" y="2" width="2" height="1" fill="#7b4a12"/><rect x="0" y="3" width="1" height="1" fill="#7b4a12"/><rect x="1" y="3" width="4" height="1" fill="#33e51a"/><rect x="5" y="3" width="10" height="1" fill="#7b4a12"/><rect x="0" y="4" width="6" height="1" fill="#7b4a12"/><rect x="6" y="4" width="8" height="1" fill="#ffffff"/><rect x="14" y="4" width="1" height="1" fill="#7b4a12"/><rect x="0" y="5" width="1" height="1" fill="#7b4a12"/><rect x="1" y="5" width="4" height="1" fill="#ffffff"/><rect x="5" y="5" width="1" height="1" fill="#7b4a12"/><rect x="6" y="5" width="1" height="1" fill="#ffffff"/><rect x="7" y="5" width="2" height="1" fill="#000000"/><rect x="9" y="5" width="1" height="1" fill="#ffffff"/><rect x="10" y="5" width="3" height="1" fill="#000000"/><rect x="13" y="5" width="1" height="1" fill="#ffffff"/><rect x="14" y="5" width="1" height="1" fill="#7b4a12"/><rect x="0" y="6" width="6" height="1" fill="#7b4a12"/><rect x="6" y="6" width="8" height="1" fill="#ffffff"/><rect x="14" y="6" width="1" height="1" fill="#7b4a12"/><rect x="0" y="7" width="1" height="1" fill="#7b4a12"/><rect x="1" y="7" width="4" height="1" fill="#ffffff"/><rect x="5" y="7" width="1" height="1" fill="#7b4a12"/><rect x="6" y="7" width="1" height="1" fill="#ffffff"/><rect x="7" y="7" width="2" height="1" fill="#000000"/><rect x="9" y="7" width="1" height="1" fill="#ffffff"/><rect x="10" y="7" width="3" height="1" fill="#000000"/><rect x="13" y="7" width="1" height="1" fill="#ffffff"/><rect x="14" y="7" width="1" height="1" fill="#7b4a12"/><rect x="0" y="8" width="1" height="1" fill="#7b4a12"/><rect x="1" y="8" width="4" height="1" fill="#ffffff"/><rect x="5" y="8" width="1" height="1" fill="#7b4a12"/><rect x="6" y="8" width="1" height="1" fill="#ffffff"/><rect x="7" y="8" width="2" height="1" fill="#000000"/><rect x="9" y="8" width="1" height="1" fill="#ffffff"/><rect x="10" y="8" width="3" height="1" fill="#000000"/><rect x="13" y="8" width="1" height="1" fill="#ffffff"/><rect x="14" y="8" width="1" height="1" fill="#7b4a12"/><rect x="0" y="9" width="6" height="1" fill="#7b4a12"/><rect x="6" y="9" width="8" height="1" fill="#ffffff"/><rect x="14" y="9" width="1" height="1" fill="#7b4a12"/><rect x="0" y="10" width="1" height="1" fill="#7b4a12"/><rect x="1" y="10" width="4" height="1" fill="#ffffff"/><rect x="5" y="10" width="1" height="1" fill="#7b4a12"/><rect x="6" y="10" width="1" height="1" fill="#ffffff"/><rect x="7" y="10" width="2" height="1" fill="#000000"/><rect x="9" y="10" width="1" height="1" fill="#ffffff"/><rect x="10" y="10" width="2" height="1" fill="#000000"/><rect x="12" y="10" width="2" height="1" fill="#ffffff"/><rect x="14" y="10" width="1" height="1" fill="#7b4a12"/><rect x="0" y="11" width="6" height="1" fill="#7b4a12"/><rect x="6" y="11" width="8" height="1" fill="#ffffff"/><rect x="14" y="11" width="1" height="1" fill="#7b4a12"/><rect x="0" y="12" width="1" height="1" fill="#7b4a12"/><rect x="1" y="12" width="4" height="1" fill="#ffffff"/><rect x="5" y="12" width="1" height="1" fill="#7b4a12"/><rect x="6" y="12" width="1" height="1" fill="#ffffff"/><rect x="7" y="12" width="2" height="1" fill="#000000"/><rect x="9" y="12" width="5" height="1" fill="#ffffff"/><rect x="14" y="12" width="1" height="1" fill="#7b4a12"/><rect x="0" y="13" width="1" height="1" fill="#7b4a12"/><rect x="1" y="13" width="4" height="1" fill="#ffffff"/><rect x="5" y="13" width="1" height="1" fill="#7b4a12"/><rect x="6" y="13" width="8" height="1" fill="#ffffff"/><rect x="14" y="13" width="1" height="1" fill="#7b4a12"/><rect x="0" y="14" width="15" height="1" fill="#7b4a12"/><g transform="translate(8,8)"><rect x="3" y="0" width="1" height="1" fill="#ff0000"/><rect x="2" y="1" width="3" height="1" fill="#ff0000"/><rect x="2" y="2" width="3" height="1" fill="#ff0000"/><rect x="1" y="3" width="2" height="1" fill="#ff0000"/><rect x="3" y="3" width="1" height="1" fill="#ffffff"/><rect x="4" y="3" width="2" height="1" fill="#ff0000"/><rect x="1" y="4" width="5" height="1" fill="#ff0000"/><rect x="0" y="5" width="7" height="1" fill="#ff0000"/><rect x="0" y="6" width="2" height="1" fill="#ff0000"/><rect x="5" y="6" width="2" height="1" fill="#ff0000"/></g></svg>
<div class="t" style="left:142px;top:978px;font-size:12px;line-height:12px;color:#333333;letter-spacing:0.257px;">Frag00032</div>
<div style="left:110px;top:1006px;width:10px;height:1px;background:#a9c1e2;"></div>
<svg style="left:123px;top:999px;" width="16" height="16" viewBox="0 0 16 16" shape-rendering="crispEdges"><rect x="0" y="0" width="15" height="1" fill="#7b4a12"/><rect x="0" y="1" width="1" height="1" fill="#7b4a12"/><rect x="1" y="1" width="4" height="1" fill="#33e51a"/><rect x="5" y="1" width="2" height="1" fill="#7b4a12"/><rect x="7" y="1" width="2" height="1" fill="#ffffff"/><rect x="9" y="1" width="1" height="1" fill="#7b4a12"/><rect x="10" y="1" width="3" height="1" fill="#ffffff"/><rect x="13" y="1" width="2" height="1" fill="#7b4a12"/><rect x="0" y="2" width="1" height="1" fill="#7b4a12"/><rect x="1" y="2" width="4" height="1" fill="#33e51a"/><rect x="5" y="2" width="2" height="1" fill="#7b4a12"/><rect x="7" y="2" width="2" height="1" fill="#ffffff"/><rect x="9" y="2" width="1" height="1" fill="#7b4a12"/><rect x="10" y="2" width="3" height="1" fill="#ffffff"/><rect x="13" y="2" width="2" height="1" fill="#7b4a12"/><rect x="0" y="3" width="1" height="1" fill="#7b4a12"/><rect x="1" y="3" width="4" height="1" fill="#33e51a"/><rect x="5" y="3" width="10" height="1" fill="#7b4a12"/><rect x="0" y="4" width="6" height="1" fill="#7b4a12"/><rect x="6" y="4" width="8" height="1" fill="#ffffff"/><rect x="14" y="4" width="1" height="1" fill="#7b4a12"/><rect x="0" y="5" width="1" height="1" fill="#7b4a12"/><rect x="1" y="5" width="4" height="1" fill="#ffffff"/><rect x="5" y="5" width="1" height="1" fill="#7b4a12"/><rect x="6" y="5" width="1" height="1" fill="#ffffff"/><rect x="7" y="5" width="2" height="1" fill="#000000"/><rect x="9" y="5" width="1" height="1" fill="#ffffff"/><rect x="10" y="5" width="3" height="1" fill="#000000"/><rect x="13" y="5" width="1" height="1" fill="#ffffff"/><rect x="14" y="5" width="1" height="1" fill="#7b4a12"/><rect x="0" y="6" width="6" height="1" fill="#7b4a12"/><rect x="6" y="6" width="8" height="1" fill="#ffffff"/><rect x="14" y="6" width="1" height="1" fill="#7b4a12"/><rect x="0" y="7" width="1" height="1" fill="#7b4a12"/><rect x="1" y="7" width="4" height="1" fill="#ffffff"/><rect x="5" y="7" width="1" height="1" fill="#7b4a12"/><rect x="6" y="7" width="1" height="1" fill="#ffffff"/><rect x="7" y="7" width="2" height="1" fill="#000000"/><rect x="9" y="7" width="1" height="1" fill="#ffffff"/><rect x="10" y="7" width="3" height="1" fill="#000000"/><rect x="13" y="7" width="1" height="1" fill="#ffffff"/><rect x="14" y="7" width="1" height="1" fill="#7b4a12"/><rect x="0" y="8" width="1" height="1" fill="#7b4a12"/><rect x="1" y="8" width="4" height="1" fill="#ffffff"/><rect x="5" y="8" width="1" height="1" fill="#7b4a12"/><rect x="6" y="8" width="1" height="1" fill="#ffffff"/><rect x="7" y="8" width="2" height="1" fill="#000000"/><rect x="9" y="8" width="1" height="1" fill="#ffffff"/><rect x="10" y="8" width="3" height="1" fill="#000000"/><rect x="13" y="8" width="1" height="1" fill="#ffffff"/><rect x="14" y="8" width="1" height="1" fill="#7b4a12"/><rect x="0" y="9" width="6" height="1" fill="#7b4a12"/><rect x="6" y="9" width="8" height="1" fill="#ffffff"/><rect x="14" y="9" width="1" height="1" fill="#7b4a12"/><rect x="0" y="10" width="1" height="1" fill="#7b4a12"/><rect x="1" y="10" width="4" height="1" fill="#ffffff"/><rect x="5" y="10" width="1" height="1" fill="#7b4a12"/><rect x="6" y="10" width="1" height="1" fill="#ffffff"/><rect x="7" y="10" width="2" height="1" fill="#000000"/><rect x="9" y="10" width="1" height="1" fill="#ffffff"/><rect x="10" y="10" width="2" height="1" fill="#000000"/><rect x="12" y="10" width="2" height="1" fill="#ffffff"/><rect x="14" y="10" width="1" height="1" fill="#7b4a12"/><rect x="0" y="11" width="6" height="1" fill="#7b4a12"/><rect x="6" y="11" width="8" height="1" fill="#ffffff"/><rect x="14" y="11" width="1" height="1" fill="#7b4a12"/><rect x="0" y="12" width="1" height="1" fill="#7b4a12"/><rect x="1" y="12" width="4" height="1" fill="#ffffff"/><rect x="5" y="12" width="1" height="1" fill="#7b4a12"/><rect x="6" y="12" width="1" height="1" fill="#ffffff"/><rect x="7" y="12" width="2" height="1" fill="#000000"/><rect x="9" y="12" width="5" height="1" fill="#ffffff"/><rect x="14" y="12" width="1" height="1" fill="#7b4a12"/><rect x="0" y="13" width="1" height="1" fill="#7b4a12"/><rect x="1" y="13" width="4" height="1" fill="#ffffff"/><rect x="5" y="13" width="1" height="1" fill="#7b4a12"/><rect x="6" y="13" width="8" height="1" fill="#ffffff"/><rect x="14" y="13" width="1" height="1" fill="#7b4a12"/><rect x="0" y="14" width="15" height="1" fill="#7b4a12"/><g transform="translate(8,8)"><rect x="3" y="0" width="1" height="1" fill="#ff0000"/><rect x="2" y="1" width="3" height="1" fill="#ff0000"/><rect x="2" y="2" width="3" height="1" fill="#ff0000"/><rect x="1" y="3" width="2" height="1" fill="#ff0000"/><rect x="3" y="3" width="1" height="1" fill="#ffffff"/><rect x="4" y="3" width="2" height="1" fill="#ff0000"/><rect x="1" y="4" width="5" height="1" fill="#ff0000"/><rect x="0" y="5" width="7" height="1" fill="#ff0000"/><rect x="0" y="6" width="2" height="1" fill="#ff0000"/><rect x="5" y="6" width="2" height="1" fill="#ff0000"/></g></svg>
<div class="t" style="left:142px;top:1001px;font-size:12px;line-height:12px;color:#333333;letter-spacing:0.257px;">Frag00033</div>
<div style="left:110px;top:1029px;width:10px;height:1px;background:#a9c1e2;"></div>
<svg style="left:123px;top:1022px;" width="16" height="16" viewBox="0 0 16 16" shape-rendering="crispEdges"><rect x="0" y="0" width="15" height="1" fill="#7b4a12"/><rect x="0" y="1" width="1" height="1" fill="#7b4a12"/><rect x="1" y="1" width="4" height="1" fill="#33e51a"/><rect x="5" y="1" width="2" height="1" fill="#7b4a12"/><rect x="7" y="1" width="2" height="1" fill="#ffffff"/><rect x="9" y="1" width="1" height="1" fill="#7b4a12"/><rect x="10" y="1" width="3" height="1" fill="#ffffff"/><rect x="13" y="1" width="2" height="1" fill="#7b4a12"/><rect x="0" y="2" width="1" height="1" fill="#7b4a12"/><rect x="1" y="2" width="4" height="1" fill="#33e51a"/><rect x="5" y="2" width="2" height="1" fill="#7b4a12"/><rect x="7" y="2" width="2" height="1" fill="#ffffff"/><rect x="9" y="2" width="1" height="1" fill="#7b4a12"/><rect x="10" y="2" width="3" height="1" fill="#ffffff"/><rect x="13" y="2" width="2" height="1" fill="#7b4a12"/><rect x="0" y="3" width="1" height="1" fill="#7b4a12"/><rect x="1" y="3" width="4" height="1" fill="#33e51a"/><rect x="5" y="3" width="10" height="1" fill="#7b4a12"/><rect x="0" y="4" width="6" height="1" fill="#7b4a12"/><rect x="6" y="4" width="8" height="1" fill="#ffffff"/><rect x="14" y="4" width="1" height="1" fill="#7b4a12"/><rect x="0" y="5" width="1" height="1" fill="#7b4a12"/><rect x="1" y="5" width="4" height="1" fill="#ffffff"/><rect x="5" y="5" width="1" height="1" fill="#7b4a12"/><rect x="6" y="5" width="1" height="1" fill="#ffffff"/><rect x="7" y="5" width="2" height="1" fill="#000000"/><rect x="9" y="5" width="1" height="1" fill="#ffffff"/><rect x="10" y="5" width="3" height="1" fill="#000000"/><rect x="13" y="5" width="1" height="1" fill="#ffffff"/><rect x="14" y="5" width="1" height="1" fill="#7b4a12"/><rect x="0" y="6" width="6" height="1" fill="#7b4a12"/><rect x="6" y="6" width="8" height="1" fill="#ffffff"/><rect x="14" y="6" width="1" height="1" fill="#7b4a12"/><rect x="0" y="7" width="1" height="1" fill="#7b4a12"/><rect x="1" y="7" width="4" height="1" fill="#ffffff"/><rect x="5" y="7" width="1" height="1" fill="#7b4a12"/><rect x="6" y="7" width="1" height="1" fill="#ffffff"/><rect x="7" y="7" width="2" height="1" fill="#000000"/><rect x="9" y="7" width="1" height="1" fill="#ffffff"/><rect x="10" y="7" width="3" height="1" fill="#000000"/><rect x="13" y="7" width="1" height="1" fill="#ffffff"/><rect x="14" y="7" width="1" height="1" fill="#7b4a12"/><rect x="0" y="8" width="1" height="1" fill="#7b4a12"/><rect x="1" y="8" width="4" height="1" fill="#ffffff"/><rect x="5" y="8" width="1" height="1" fill="#7b4a12"/><rect x="6" y="8" width="1" height="1" fill="#ffffff"/><rect x="7" y="8" width="2" height="1" fill="#000000"/><rect x="9" y="8" width="1" height="1" fill="#ffffff"/><rect x="10" y="8" width="3" height="1" fill="#000000"/><rect x="13" y="8" width="1" height="1" fill="#ffffff"/><rect x="14" y="8" width="1" height="1" fill="#7b4a12"/><rect x="0" y="9" width="6" height="1" fill="#7b4a12"/><rect x="6" y="9" width="8" height="1" fill="#ffffff"/><rect x="14" y="9" width="1" height="1" fill="#7b4a12"/><rect x="0" y="10" width="1" height="1" fill="#7b4a12"/><rect x="1" y="10" width="4" height="1" fill="#ffffff"/><rect x="5" y="10" width="1" height="1" fill="#7b4a12"/><rect x="6" y="10" width="1" height="1" fill="#ffffff"/><rect x="7" y="10" width="2" height="1" fill="#000000"/><rect x="9" y="10" width="1" height="1" fill="#ffffff"/><rect x="10" y="10" width="2" height="1" fill="#000000"/><rect x="12" y="10" width="2" height="1" fill="#ffffff"/><rect x="14" y="10" width="1" height="1" fill="#7b4a12"/><rect x="0" y="11" width="6" height="1" fill="#7b4a12"/><rect x="6" y="11" width="8" height="1" fill="#ffffff"/><rect x="14" y="11" width="1" height="1" fill="#7b4a12"/><rect x="0" y="12" width="1" height="1" fill="#7b4a12"/><rect x="1" y="12" width="4" height="1" fill="#ffffff"/><rect x="5" y="12" width="1" height="1" fill="#7b4a12"/><rect x="6" y="12" width="1" height="1" fill="#ffffff"/><rect x="7" y="12" width="2" height="1" fill="#000000"/><rect x="9" y="12" width="5" height="1" fill="#ffffff"/><rect x="14" y="12" width="1" height="1" fill="#7b4a12"/><rect x="0" y="13" width="1" height="1" fill="#7b4a12"/><rect x="1" y="13" width="4" height="1" fill="#ffffff"/><rect x="5" y="13" width="1" height="1" fill="#7b4a12"/><rect x="6" y="13" width="8" height="1" fill="#ffffff"/><rect x="14" y="13" width="1" height="1" fill="#7b4a12"/><rect x="0" y="14" width="15" height="1" fill="#7b4a12"/><g transform="translate(8,8)"><rect x="3" y="0" width="1" height="1" fill="#ff0000"/><rect x="2" y="1" width="3" height="1" fill="#ff0000"/><rect x="2" y="2" width="3" height="1" fill="#ff0000"/><rect x="1" y="3" width="2" height="1" fill="#ff0000"/><rect x="3" y="3" width="1" height="1" fill="#ffffff"/><rect x="4" y="3" width="2" height="1" fill="#ff0000"/><rect x="1" y="4" width="5" height="1" fill="#ff0000"/><rect x="0" y="5" width="7" height="1" fill="#ff0000"/><rect x="0" y="6" width="2" height="1" fill="#ff0000"/><rect x="5" y="6" width="2" height="1" fill="#ff0000"/></g></svg>
<div class="t" style="left:142px;top:1024px;font-size:12px;line-height:12px;color:#333333;letter-spacing:0.257px;">Frag00034</div>
<div style="left:110px;top:1052px;width:10px;height:1px;background:#a9c1e2;"></div>
<svg style="left:123px;top:1045px;" width="16" height="16" viewBox="0 0 16 16" shape-rendering="crispEdges"><rect x="0" y="0" width="15" height="1" fill="#7b4a12"/><rect x="0" y="1" width="1" height="1" fill="#7b4a12"/><rect x="1" y="1" width="4" height="1" fill="#33e51a"/><rect x="5" y="1" width="2" height="1" fill="#7b4a12"/><rect x="7" y="1" width="2" height="1" fill="#ffffff"/><rect x="9" y="1" width="1" height="1" fill="#7b4a12"/><rect x="10" y="1" width="3" height="1" fill="#ffffff"/><rect x="13" y="1" width="2" height="1" fill="#7b4a12"/><rect x="0" y="2" width="1" height="1" fill="#7b4a12"/><rect x="1" y="2" width="4" height="1" fill="#33e51a"/><rect x="5" y="2" width="2" height="1" fill="#7b4a12"/><rect x="7" y="2" width="2" height="1" fill="#ffffff"/><rect x="9" y="2" width="1" height="1" fill="#7b4a12"/><rect x="10" y="2" width="3" height="1" fill="#ffffff"/><rect x="13" y="2" width="2" height="1" fill="#7b4a12"/><rect x="0" y="3" width="1" height="1" fill="#7b4a12"/><rect x="1" y="3" width="4" height="1" fill="#33e51a"/><rect x="5" y="3" width="10" height="1" fill="#7b4a12"/><rect x="0" y="4" width="6" height="1" fill="#7b4a12"/><rect x="6" y="4" width="8" height="1" fill="#ffffff"/><rect x="14" y="4" width="1" height="1" fill="#7b4a12"/><rect x="0" y="5" width="1" height="1" fill="#7b4a12"/><rect x="1" y="5" width="4" height="1" fill="#ffffff"/><rect x="5" y="5" width="1" height="1" fill="#7b4a12"/><rect x="6" y="5" width="1" height="1" fill="#ffffff"/><rect x="7" y="5" width="2" height="1" fill="#000000"/><rect x="9" y="5" width="1" height="1" fill="#ffffff"/><rect x="10" y="5" width="3" height="1" fill="#000000"/><rect x="13" y="5" width="1" height="1" fill="#ffffff"/><rect x="14" y="5" width="1" height="1" fill="#7b4a12"/><rect x="0" y="6" width="6" height="1" fill="#7b4a12"/><rect x="6" y="6" width="8" height="1" fill="#ffffff"/><rect x="14" y="6" width="1" height="1" fill="#7b4a12"/><rect x="0" y="7" width="1" height="1" fill="#7b4a12"/><rect x="1" y="7" width="4" height="1" fill="#ffffff"/><rect x="5" y="7" width="1" height="1" fill="#7b4a12"/><rect x="6" y="7" width="1" height="1" fill="#ffffff"/><rect x="7" y="7" width="2" height="1" fill="#000000"/><rect x="9" y="7" width="1" height="1" fill="#ffffff"/><rect x="10" y="7" width="3" height="1" fill="#000000"/><rect x="13" y="7" width="1" height="1" fill="#ffffff"/><rect x="14" y="7" width="1" height="1" fill="#7b4a12"/><rect x="0" y="8" width="1" height="1" fill="#7b4a12"/><rect x="1" y="8" width="4" height="1" fill="#ffffff"/><rect x="5" y="8" width="1" height="1" fill="#7b4a12"/><rect x="6" y="8" width="1" height="1" fill="#ffffff"/><rect x="7" y="8" width="2" height="1" fill="#000000"/><rect x="9" y="8" width="1" height="1" fill="#ffffff"/><rect x="10" y="8" width="3" height="1" fill="#000000"/><rect x="13" y="8" width="1" height="1" fill="#ffffff"/><rect x="14" y="8" width="1" height="1" fill="#7b4a12"/><rect x="0" y="9" width="6" height="1" fill="#7b4a12"/><rect x="6" y="9" width="8" height="1" fill="#ffffff"/><rect x="14" y="9" width="1" height="1" fill="#7b4a12"/><rect x="0" y="10" width="1" height="1" fill="#7b4a12"/><rect x="1" y="10" width="4" height="1" fill="#ffffff"/><rect x="5" y="10" width="1" height="1" fill="#7b4a12"/><rect x="6" y="10" width="1" height="1" fill="#ffffff"/><rect x="7" y="10" width="2" height="1" fill="#000000"/><rect x="9" y="10" width="1" height="1" fill="#ffffff"/><rect x="10" y="10" width="2" height="1" fill="#000000"/><rect x="12" y="10" width="2" height="1" fill="#ffffff"/><rect x="14" y="10" width="1" height="1" fill="#7b4a12"/><rect x="0" y="11" width="6" height="1" fill="#7b4a12"/><rect x="6" y="11" width="8" height="1" fill="#ffffff"/><rect x="14" y="11" width="1" height="1" fill="#7b4a12"/><rect x="0" y="12" width="1" height="1" fill="#7b4a12"/><rect x="1" y="12" width="4" height="1" fill="#ffffff"/><rect x="5" y="12" width="1" height="1" fill="#7b4a12"/><rect x="6" y="12" width="1" height="1" fill="#ffffff"/><rect x="7" y="12" width="2" height="1" fill="#000000"/><rect x="9" y="12" width="5" height="1" fill="#ffffff"/><rect x="14" y="12" width="1" height="1" fill="#7b4a12"/><rect x="0" y="13" width="1" height="1" fill="#7b4a12"/><rect x="1" y="13" width="4" height="1" fill="#ffffff"/><rect x="5" y="13" width="1" height="1" fill="#7b4a12"/><rect x="6" y="13" width="8" height="1" fill="#ffffff"/><rect x="14" y="13" width="1" height="1" fill="#7b4a12"/><rect x="0" y="14" width="15" height="1" fill="#7b4a12"/><g transform="translate(8,8)"><rect x="3" y="0" width="1" height="1" fill="#ff0000"/><rect x="2" y="1" width="3" height="1" fill="#ff0000"/><rect x="2" y="2" width="3" height="1" fill="#ff0000"/><rect x="1" y="3" width="2" height="1" fill="#ff0000"/><rect x="3" y="3" width="1" height="1" fill="#ffffff"/><rect x="4" y="3" width="2" height="1" fill="#ff0000"/><rect x="1" y="4" width="5" height="1" fill="#ff0000"/><rect x="0" y="5" width="7" height="1" fill="#ff0000"/><rect x="0" y="6" width="2" height="1" fill="#ff0000"/><rect x="5" y="6" width="2" height="1" fill="#ff0000"/></g></svg>
<div class="t" style="left:142px;top:1047px;font-size:12px;line-height:12px;color:#333333;letter-spacing:0.257px;">Frag00035</div>
<div style="left:110px;top:1075px;width:10px;height:1px;background:#a9c1e2;"></div>
<svg style="left:123px;top:1068px;" width="16" height="16" viewBox="0 0 16 16" shape-rendering="crispEdges"><rect x="0" y="0" width="15" height="1" fill="#7b4a12"/><rect x="0" y="1" width="1" height="1" fill="#7b4a12"/><rect x="1" y="1" width="4" height="1" fill="#33e51a"/><rect x="5" y="1" width="2" height="1" fill="#7b4a12"/><rect x="7" y="1" width="2" height="1" fill="#ffffff"/><rect x="9" y="1" width="1" height="1" fill="#7b4a12"/><rect x="10" y="1" width="3" height="1" fill="#ffffff"/><rect x="13" y="1" width="2" height="1" fill="#7b4a12"/><rect x="0" y="2" width="1" height="1" fill="#7b4a12"/><rect x="1" y="2" width="4" height="1" fill="#33e51a"/><rect x="5" y="2" width="2" height="1" fill="#7b4a12"/><rect x="7" y="2" width="2" height="1" fill="#ffffff"/><rect x="9" y="2" width="1" height="1" fill="#7b4a12"/><rect x="10" y="2" width="3" height="1" fill="#ffffff"/><rect x="13" y="2" width="2" height="1" fill="#7b4a12"/><rect x="0" y="3" width="1" height="1" fill="#7b4a12"/><rect x="1" y="3" width="4" height="1" fill="#33e51a"/><rect x="5" y="3" width="10" height="1" fill="#7b4a12"/><rect x="0" y="4" width="6" height="1" fill="#7b4a12"/><rect x="6" y="4" width="8" height="1" fill="#ffffff"/><rect x="14" y="4" width="1" height="1" fill="#7b4a12"/><rect x="0" y="5" width="1" height="1" fill="#7b4a12"/><rect x="1" y="5" width="4" height="1" fill="#ffffff"/><rect x="5" y="5" width="1" height="1" fill="#7b4a12"/><rect x="6" y="5" width="1" height="1" fill="#ffffff"/><rect x="7" y="5" width="2" height="1" fill="#000000"/><rect x="9" y="5" width="1" height="1" fill="#ffffff"/><rect x="10" y="5" width="3" height="1" fill="#000000"/><rect x="13" y="5" width="1" height="1" fill="#ffffff"/><rect x="14" y="5" width="1" height="1" fill="#7b4a12"/><rect x="0" y="6" width="6" height="1" fill="#7b4a12"/><rect x="6" y="6" width="8" height="1" fill="#ffffff"/><rect x="14" y="6" width="1" height="1" fill="#7b4a12"/><rect x="0" y="7" width="1" height="1" fill="#7b4a12"/><rect x="1" y="7" width="4" height="1" fill="#ffffff"/><rect x="5" y="7" width="1" height="1" fill="#7b4a12"/><rect x="6" y="7" width="1" height="1" fill="#ffffff"/><rect x="7" y="7" width="2" height="1" fill="#000000"/><rect x="9" y="7" width="1" height="1" fill="#ffffff"/><rect x="10" y="7" width="3" height="1" fill="#000000"/><rect x="13" y="7" width="1" height="1" fill="#ffffff"/><rect x="14" y="7" width="1" height="1" fill="#7b4a12"/><rect x="0" y="8" width="1" height="1" fill="#7b4a12"/><rect x="1" y="8" width="4" height="1" fill="#ffffff"/><rect x="5" y="8" width="1" height="1" fill="#7b4a12"/><rect x="6" y="8" width="1" height="1" fill="#ffffff"/><rect x="7" y="8" width="2" height="1" fill="#000000"/><rect x="9" y="8" width="1" height="1" fill="#ffffff"/><rect x="10" y="8" width="3" height="1" fill="#000000"/><rect x="13" y="8" width="1" height="1" fill="#ffffff"/><rect x="14" y="8" width="1" height="1" fill="#7b4a12"/><rect x="0" y="9" width="6" height="1" fill="#7b4a12"/><rect x="6" y="9" width="8" height="1" fill="#ffffff"/><rect x="14" y="9" width="1" height="1" fill="#7b4a12"/><rect x="0" y="10" width="1" height="1" fill="#7b4a12"/><rect x="1" y="10" width="4" height="1" fill="#ffffff"/><rect x="5" y="10" width="1" height="1" fill="#7b4a12"/><rect x="6" y="10" width="1" height="1" fill="#ffffff"/><rect x="7" y="10" width="2" height="1" fill="#000000"/><rect x="9" y="10" width="1" height="1" fill="#ffffff"/><rect x="10" y="10" width="2" height="1" fill="#000000"/><rect x="12" y="10" width="2" height="1" fill="#ffffff"/><rect x="14" y="10" width="1" height="1" fill="#7b4a12"/><rect x="0" y="11" width="6" height="1" fill="#7b4a12"/><rect x="6" y="11" width="8" height="1" fill="#ffffff"/><rect x="14" y="11" width="1" height="1" fill="#7b4a12"/><rect x="0" y="12" width="1" height="1" fill="#7b4a12"/><rect x="1" y="12" width="4" height="1" fill="#ffffff"/><rect x="5" y="12" width="1" height="1" fill="#7b4a12"/><rect x="6" y="12" width="1" height="1" fill="#ffffff"/><rect x="7" y="12" width="2" height="1" fill="#000000"/><rect x="9" y="12" width="5" height="1" fill="#ffffff"/><rect x="14" y="12" width="1" height="1" fill="#7b4a12"/><rect x="0" y="13" width="1" height="1" fill="#7b4a12"/><rect x="1" y="13" width="4" height="1" fill="#ffffff"/><rect x="5" y="13" width="1" height="1" fill="#7b4a12"/><rect x="6" y="13" width="8" height="1" fill="#ffffff"/><rect x="14" y="13" width="1" height="1" fill="#7b4a12"/><rect x="0" y="14" width="15" height="1" fill="#7b4a12"/><g transform="translate(8,8)"><rect x="3" y="0" width="1" height="1" fill="#ff0000"/><rect x="2" y="1" width="3" height="1" fill="#ff0000"/><rect x="2" y="2" width="3" height="1" fill="#ff0000"/><rect x="1" y="3" width="2" height="1" fill="#ff0000"/><rect x="3" y="3" width="1" height="1" fill="#ffffff"/><rect x="4" y="3" width="2" height="1" fill="#ff0000"/><rect x="1" y="4" width="5" height="1" fill="#ff0000"/><rect x="0" y="5" width="7" height="1" fill="#ff0000"/><rect x="0" y="6" width="2" height="1" fill="#ff0000"/><rect x="5" y="6" width="2" height="1" fill="#ff0000"/></g></svg>
<div class="t" style="left:142px;top:1070px;font-size:12px;line-height:12px;color:#333333;letter-spacing:0.244px;">Frag0004</div>
<div style="left:110px;top:1098px;width:10px;height:1px;background:#a9c1e2;"></div>
<svg style="left:123px;top:1091px;" width="16" height="16" viewBox="0 0 16 16" shape-rendering="crispEdges"><rect x="0" y="0" width="15" height="1" fill="#7b4a12"/><rect x="0" y="1" width="1" height="1" fill="#7b4a12"/><rect x="1" y="1" width="4" height="1" fill="#33e51a"/><rect x="5" y="1" width="2" height="1" fill="#7b4a12"/><rect x="7" y="1" width="2" height="1" fill="#ffffff"/><rect x="9" y="1" width="1" height="1" fill="#7b4a12"/><rect x="10" y="1" width="3" height="1" fill="#ffffff"/><rect x="13" y="1" width="2" height="1" fill="#7b4a12"/><rect x="0" y="2" width="1" height="1" fill="#7b4a12"/><rect x="1" y="2" width="4" height="1" fill="#33e51a"/><rect x="5" y="2" width="2" height="1" fill="#7b4a12"/><rect x="7" y="2" width="2" height="1" fill="#ffffff"/><rect x="9" y="2" width="1" height="1" fill="#7b4a12"/><rect x="10" y="2" width="3" height="1" fill="#ffffff"/><rect x="13" y="2" width="2" height="1" fill="#7b4a12"/><rect x="0" y="3" width="1" height="1" fill="#7b4a12"/><rect x="1" y="3" width="4" height="1" fill="#33e51a"/><rect x="5" y="3" width="10" height="1" fill="#7b4a12"/><rect x="0" y="4" width="6" height="1" fill="#7b4a12"/><rect x="6" y="4" width="8" height="1" fill="#ffffff"/><rect x="14" y="4" width="1" height="1" fill="#7b4a12"/><rect x="0" y="5" width="1" height="1" fill="#7b4a12"/><rect x="1" y="5" width="4" height="1" fill="#ffffff"/><rect x="5" y="5" width="1" height="1" fill="#7b4a12"/><rect x="6" y="5" width="1" height="1" fill="#ffffff"/><rect x="7" y="5" width="2" height="1" fill="#000000"/><rect x="9" y="5" width="1" height="1" fill="#ffffff"/><rect x="10" y="5" width="3" height="1" fill="#000000"/><rect x="13" y="5" width="1" height="1" fill="#ffffff"/><rect x="14" y="5" width="1" height="1" fill="#7b4a12"/><rect x="0" y="6" width="6" height="1" fill="#7b4a12"/><rect x="6" y="6" width="8" height="1" fill="#ffffff"/><rect x="14" y="6" width="1" height="1" fill="#7b4a12"/><rect x="0" y="7" width="1" height="1" fill="#7b4a12"/><rect x="1" y="7" width="4" height="1" fill="#ffffff"/><rect x="5" y="7" width="1" height="1" fill="#7b4a12"/><rect x="6" y="7" width="1" height="1" fill="#ffffff"/><rect x="7" y="7" width="2" height="1" fill="#000000"/><rect x="9" y="7" width="1" height="1" fill="#ffffff"/><rect x="10" y="7" width="3" height="1" fill="#000000"/><rect x="13" y="7" width="1" height="1" fill="#ffffff"/><rect x="14" y="7" width="1" height="1" fill="#7b4a12"/><rect x="0" y="8" width="1" height="1" fill="#7b4a12"/><rect x="1" y="8" width="4" height="1" fill="#ffffff"/><rect x="5" y="8" width="1" height="1" fill="#7b4a12"/><rect x="6" y="8" width="1" height="1" fill="#ffffff"/><rect x="7" y="8" width="2" height="1" fill="#000000"/><rect x="9" y="8" width="1" height="1" fill="#ffffff"/><rect x="10" y="8" width="3" height="1" fill="#000000"/><rect x="13" y="8" width="1" height="1" fill="#ffffff"/><rect x="14" y="8" width="1" height="1" fill="#7b4a12"/><rect x="0" y="9" width="6" height="1" fill="#7b4a12"/><rect x="6" y="9" width="8" height="1" fill="#ffffff"/><rect x="14" y="9" width="1" height="1" fill="#7b4a12"/><rect x="0" y="10" width="1" height="1" fill="#7b4a12"/><rect x="1" y="10" width="4" height="1" fill="#ffffff"/><rect x="5" y="10" width="1" height="1" fill="#7b4a12"/><rect x="6" y="10" width="1" height="1" fill="#ffffff"/><rect x="7" y="10" width="2" height="1" fill="#000000"/><rect x="9" y="10" width="1" height="1" fill="#ffffff"/><rect x="10" y="10" width="2" height="1" fill="#000000"/><rect x="12" y="10" width="2" height="1" fill="#ffffff"/><rect x="14" y="10" width="1" height="1" fill="#7b4a12"/><rect x="0" y="11" width="6" height="1" fill="#7b4a12"/><rect x="6" y="11" width="8" height="1" fill="#ffffff"/><rect x="14" y="11" width="1" height="1" fill="#7b4a12"/><rect x="0" y="12" width="1" height="1" fill="#7b4a12"/><rect x="1" y="12" width="4" height="1" fill="#ffffff"/><rect x="5" y="12" width="1" height="1" fill="#7b4a12"/><rect x="6" y="12" width="1" height="1" fill="#ffffff"/><rect x="7" y="12" width="2" height="1" fill="#000000"/><rect x="9" y="12" width="5" height="1" fill="#ffffff"/><rect x="14" y="12" width="1" height="1" fill="#7b4a12"/><rect x="0" y="13" width="1" height="1" fill="#7b4a12"/><rect x="1" y="13" width="4" height="1" fill="#ffffff"/><rect x="5" y="13" width="1" height="1" fill="#7b4a12"/><rect x="6" y="13" width="8" height="1" fill="#ffffff"/><rect x="14" y="13" width="1" height="1" fill="#7b4a12"/><rect x="0" y="14" width="15" height="1" fill="#7b4a12"/><g transform="translate(8,8)"><rect x="3" y="0" width="1" height="1" fill="#ff0000"/><rect x="2" y="1" width="3" height="1" fill="#ff0000"/><rect x="2" y="2" width="3" height="1" fill="#ff0000"/><rect x="1" y="3" width="2" height="1" fill="#ff0000"/><rect x="3" y="3" width="1" height="1" fill="#ffffff"/><rect x="4" y="3" width="2" height="1" fill="#ff0000"/><rect x="1" y="4" width="5" height="1" fill="#ff0000"/><rect x="0" y="5" width="7" height="1" fill="#ff0000"/><rect x="0" y="6" width="2" height="1" fill="#ff0000"/><rect x="5" y="6" width="2" height="1" fill="#ff0000"/></g></svg>
<div class="t" style="left:142px;top:1093px;font-size:12px;line-height:12px;color:#333333;letter-spacing:0.244px;">Frag0005</div>
<div style="left:110px;top:1121px;width:10px;height:1px;background:#a9c1e2;"></div>
<svg style="left:123px;top:1114px;" width="16" height="16" viewBox="0 0 16 16" shape-rendering="crispEdges"><rect x="0" y="0" width="15" height="1" fill="#7b4a12"/><rect x="0" y="1" width="1" height="1" fill="#7b4a12"/><rect x="1" y="1" width="4" height="1" fill="#33e51a"/><rect x="5" y="1" width="2" height="1" fill="#7b4a12"/><rect x="7" y="1" width="2" height="1" fill="#ffffff"/><rect x="9" y="1" width="1" height="1" fill="#7b4a12"/><rect x="10" y="1" width="3" height="1" fill="#ffffff"/><rect x="13" y="1" width="2" height="1" fill="#7b4a12"/><rect x="0" y="2" width="1" height="1" fill="#7b4a12"/><rect x="1" y="2" width="4" height="1" fill="#33e51a"/><rect x="5" y="2" width="2" height="1" fill="#7b4a12"/><rect x="7" y="2" width="2" height="1" fill="#ffffff"/><rect x="9" y="2" width="1" height="1" fill="#7b4a12"/><rect x="10" y="2" width="3" height="1" fill="#ffffff"/><rect x="13" y="2" width="2" height="1" fill="#7b4a12"/><rect x="0" y="3" width="1" height="1" fill="#7b4a12"/><rect x="1" y="3" width="4" height="1" fill="#33e51a"/><rect x="5" y="3" width="10" height="1" fill="#7b4a12"/><rect x="0" y="4" width="6" height="1" fill="#7b4a12"/><rect x="6" y="4" width="8" height="1" fill="#ffffff"/><rect x="14" y="4" width="1" height="1" fill="#7b4a12"/><rect x="0" y="5" width="1" height="1" fill="#7b4a12"/><rect x="1" y="5" width="4" height="1" fill="#ffffff"/><rect x="5" y="5" width="1" height="1" fill="#7b4a12"/><rect x="6" y="5" width="1" height="1" fill="#ffffff"/><rect x="7" y="5" width="2" height="1" fill="#000000"/><rect x="9" y="5" width="1" height="1" fill="#ffffff"/><rect x="10" y="5" width="3" height="1" fill="#000000"/><rect x="13" y="5" width="1" height="1" fill="#ffffff"/><rect x="14" y="5" width="1" height="1" fill="#7b4a12"/><rect x="0" y="6" width="6" height="1" fill="#7b4a12"/><rect x="6" y="6" width="8" height="1" fill="#ffffff"/><rect x="14" y="6" width="1" height="1" fill="#7b4a12"/><rect x="0" y="7" width="1" height="1" fill="#7b4a12"/><rect x="1" y="7" width="4" height="1" fill="#ffffff"/><rect x="5" y="7" width="1" height="1" fill="#7b4a12"/><rect x="6" y="7" width="1" height="1" fill="#ffffff"/><rect x="7" y="7" width="2" height="1" fill="#000000"/><rect x="9" y="7" width="1" height="1" fill="#ffffff"/><rect x="10" y="7" width="3" height="1" fill="#000000"/><rect x="13" y="7" width="1" height="1" fill="#ffffff"/><rect x="14" y="7" width="1" height="1" fill="#7b4a12"/><rect x="0" y="8" width="1" height="1" fill="#7b4a12"/><rect x="1" y="8" width="4" height="1" fill="#ffffff"/><rect x="5" y="8" width="1" height="1" fill="#7b4a12"/><rect x="6" y="8" width="1" height="1" fill="#ffffff"/><rect x="7" y="8" width="2" height="1" fill="#000000"/><rect x="9" y="8" width="1" height="1" fill="#ffffff"/><rect x="10" y="8" width="3" height="1" fill="#000000"/><rect x="13" y="8" width="1" height="1" fill="#ffffff"/><rect x="14" y="8" width="1" height="1" fill="#7b4a12"/><rect x="0" y="9" width="6" height="1" fill="#7b4a12"/><rect x="6" y="9" width="8" height="1" fill="#ffffff"/><rect x="14" y="9" width="1" height="1" fill="#7b4a12"/><rect x="0" y="10" width="1" height="1" fill="#7b4a12"/><rect x="1" y="10" width="4" height="1" fill="#ffffff"/><rect x="5" y="10" width="1" height="1" fill="#7b4a12"/><rect x="6" y="10" width="1" height="1" fill="#ffffff"/><rect x="7" y="10" width="2" height="1" fill="#000000"/><rect x="9" y="10" width="1" height="1" fill="#ffffff"/><rect x="10" y="10" width="2" height="1" fill="#000000"/><rect x="12" y="10" width="2" height="1" fill="#ffffff"/><rect x="14" y="10" width="1" height="1" fill="#7b4a12"/><rect x="0" y="11" width="6" height="1" fill="#7b4a12"/><rect x="6" y="11" width="8" height="1" fill="#ffffff"/><rect x="14" y="11" width="1" height="1" fill="#7b4a12"/><rect x="0" y="12" width="1" height="1" fill="#7b4a12"/><rect x="1" y="12" width="4" height="1" fill="#ffffff"/><rect x="5" y="12" width="1" height="1" fill="#7b4a12"/><rect x="6" y="12" width="1" height="1" fill="#ffffff"/><rect x="7" y="12" width="2" height="1" fill="#000000"/><rect x="9" y="12" width="5" height="1" fill="#ffffff"/><rect x="14" y="12" width="1" height="1" fill="#7b4a12"/><rect x="0" y="13" width="1" height="1" fill="#7b4a12"/><rect x="1" y="13" width="4" height="1" fill="#ffffff"/><rect x="5" y="13" width="1" height="1" fill="#7b4a12"/><rect x="6" y="13" width="8" height="1" fill="#ffffff"/><rect x="14" y="13" width="1" height="1" fill="#7b4a12"/><rect x="0" y="14" width="15" height="1" fill="#7b4a12"/><g transform="translate(8,8)"><rect x="3" y="0" width="1" height="1" fill="#ff0000"/><rect x="2" y="1" width="3" height="1" fill="#ff0000"/><rect x="2" y="2" width="3" height="1" fill="#ff0000"/><rect x="1" y="3" width="2" height="1" fill="#ff0000"/><rect x="3" y="3" width="1" height="1" fill="#ffffff"/><rect x="4" y="3" width="2" height="1" fill="#ff0000"/><rect x="1" y="4" width="5" height="1" fill="#ff0000"/><rect x="0" y="5" width="7" height="1" fill="#ff0000"/><rect x="0" y="6" width="2" height="1" fill="#ff0000"/><rect x="5" y="6" width="2" height="1" fill="#ff0000"/></g></svg>
<div class="t" style="left:142px;top:1116px;font-size:12px;line-height:12px;color:#333333;letter-spacing:0.244px;">Frag0006</div>
<div style="left:110px;top:1144px;width:10px;height:1px;background:#a9c1e2;"></div>
<svg style="left:123px;top:1137px;" width="16" height="16" viewBox="0 0 16 16" shape-rendering="crispEdges"><rect x="0" y="0" width="15" height="1" fill="#7b4a12"/><rect x="0" y="1" width="1" height="1" fill="#7b4a12"/><rect x="1" y="1" width="4" height="1" fill="#33e51a"/><rect x="5" y="1" width="2" height="1" fill="#7b4a12"/><rect x="7" y="1" width="2" height="1" fill="#ffffff"/><rect x="9" y="1" width="1" height="1" fill="#7b4a12"/><rect x="10" y="1" width="3" height="1" fill="#ffffff"/><rect x="13" y="1" width="2" height="1" fill="#7b4a12"/><rect x="0" y="2" width="1" height="1" fill="#7b4a12"/><rect x="1" y="2" width="4" height="1" fill="#33e51a"/><rect x="5" y="2" width="2" height="1" fill="#7b4a12"/><rect x="7" y="2" width="2" height="1" fill="#ffffff"/><rect x="9" y="2" width="1" height="1" fill="#7b4a12"/><rect x="10" y="2" width="3" height="1" fill="#ffffff"/><rect x="13" y="2" width="2" height="1" fill="#7b4a12"/><rect x="0" y="3" width="1" height="1" fill="#7b4a12"/><rect x="1" y="3" width="4" height="1" fill="#33e51a"/><rect x="5" y="3" width="10" height="1" fill="#7b4a12"/><rect x="0" y="4" width="6" height="1" fill="#7b4a12"/><rect x="6" y="4" width="8" height="1" fill="#ffffff"/><rect x="14" y="4" width="1" height="1" fill="#7b4a12"/><rect x="0" y="5" width="1" height="1" fill="#7b4a12"/><rect x="1" y="5" width="4" height="1" fill="#ffffff"/><rect x="5" y="5" width="1" height="1" fill="#7b4a12"/><rect x="6" y="5" width="1" height="1" fill="#ffffff"/><rect x="7" y="5" width="2" height="1" fill="#000000"/><rect x="9" y="5" width="1" height="1" fill="#ffffff"/><rect x="10" y="5" width="3" height="1" fill="#000000"/><rect x="13" y="5" width="1" height="1" fill="#ffffff"/><rect x="14" y="5" width="1" height="1" fill="#7b4a12"/><rect x="0" y="6" width="6" height="1" fill="#7b4a12"/><rect x="6" y="6" width="8" height="1" fill="#ffffff"/><rect x="14" y="6" width="1" height="1" fill="#7b4a12"/><rect x="0" y="7" width="1" height="1" fill="#7b4a12"/><rect x="1" y="7" width="4" height="1" fill="#ffffff"/><rect x="5" y="7" width="1" height="1" fill="#7b4a12"/><rect x="6" y="7" width="1" height="1" fill="#ffffff"/><rect x="7" y="7" width="2" height="1" fill="#000000"/><rect x="9" y="7" width="1" height="1" fill="#ffffff"/><rect x="10" y="7" width="3" height="1" fill="#000000"/><rect x="13" y="7" width="1" height="1" fill="#ffffff"/><rect x="14" y="7" width="1" height="1" fill="#7b4a12"/><rect x="0" y="8" width="1" height="1" fill="#7b4a12"/><rect x="1" y="8" width="4" height="1" fill="#ffffff"/><rect x="5" y="8" width="1" height="1" fill="#7b4a12"/><rect x="6" y="8" width="1" height="1" fill="#ffffff"/><rect x="7" y="8" width="2" height="1" fill="#000000"/><rect x="9" y="8" width="1" height="1" fill="#ffffff"/><rect x="10" y="8" width="3" height="1" fill="#000000"/><rect x="13" y="8" width="1" height="1" fill="#ffffff"/><rect x="14" y="8" width="1" height="1" fill="#7b4a12"/><rect x="0" y="9" width="6" height="1" fill="#7b4a12"/><rect x="6" y="9" width="8" height="1" fill="#ffffff"/><rect x="14" y="9" width="1" height="1" fill="#7b4a12"/><rect x="0" y="10" width="1" height="1" fill="#7b4a12"/><rect x="1" y="10" width="4" height="1" fill="#ffffff"/><rect x="5" y="10" width="1" height="1" fill="#7b4a12"/><rect x="6" y="10" width="1" height="1" fill="#ffffff"/><rect x="7" y="10" width="2" height="1" fill="#000000"/><rect x="9" y="10" width="1" height="1" fill="#ffffff"/><rect x="10" y="10" width="2" height="1" fill="#000000"/><rect x="12" y="10" width="2" height="1" fill="#ffffff"/><rect x="14" y="10" width="1" height="1" fill="#7b4a12"/><rect x="0" y="11" width="6" height="1" fill="#7b4a12"/><rect x="6" y="11" width="8" height="1" fill="#ffffff"/><rect x="14" y="11" width="1" height="1" fill="#7b4a12"/><rect x="0" y="12" width="1" height="1" fill="#7b4a12"/><rect x="1" y="12" width="4" height="1" fill="#ffffff"/><rect x="5" y="12" width="1" height="1" fill="#7b4a12"/><rect x="6" y="12" width="1" height="1" fill="#ffffff"/><rect x="7" y="12" width="2" height="1" fill="#000000"/><rect x="9" y="12" width="5" height="1" fill="#ffffff"/><rect x="14" y="12" width="1" height="1" fill="#7b4a12"/><rect x="0" y="13" width="1" height="1" fill="#7b4a12"/><rect x="1" y="13" width="4" height="1" fill="#ffffff"/><rect x="5" y="13" width="1" height="1" fill="#7b4a12"/><rect x="6" y="13" width="8" height="1" fill="#ffffff"/><rect x="14" y="13" width="1" height="1" fill="#7b4a12"/><rect x="0" y="14" width="15" height="1" fill="#7b4a12"/><g transform="translate(8,8)"><rect x="3" y="0" width="1" height="1" fill="#ff0000"/><rect x="2" y="1" width="3" height="1" fill="#ff0000"/><rect x="2" y="2" width="3" height="1" fill="#ff0000"/><rect x="1" y="3" width="2" height="1" fill="#ff0000"/><rect x="3" y="3" width="1" height="1" fill="#ffffff"/><rect x="4" y="3" width="2" height="1" fill="#ff0000"/><rect x="1" y="4" width="5" height="1" fill="#ff0000"/><rect x="0" y="5" width="7" height="1" fill="#ff0000"/><rect x="0" y="6" width="2" height="1" fill="#ff0000"/><rect x="5" y="6" width="2" height="1" fill="#ff0000"/></g></svg>
<div class="t" style="left:142px;top:1139px;font-size:12px;line-height:12px;color:#333333;letter-spacing:0.244px;">Frag0007</div>
<div style="left:110px;top:1167px;width:10px;height:1px;background:#a9c1e2;"></div>
<svg style="left:123px;top:1160px;" width="16" height="16" viewBox="0 0 16 16" shape-rendering="crispEdges"><rect x="0" y="0" width="15" height="1" fill="#7b4a12"/><rect x="0" y="1" width="1" height="1" fill="#7b4a12"/><rect x="1" y="1" width="4" height="1" fill="#33e51a"/><rect x="5" y="1" width="2" height="1" fill="#7b4a12"/><rect x="7" y="1" width="2" height="1" fill="#ffffff"/><rect x="9" y="1" width="1" height="1" fill="#7b4a12"/><rect x="10" y="1" width="3" height="1" fill="#ffffff"/><rect x="13" y="1" width="2" height="1" fill="#7b4a12"/><rect x="0" y="2" width="1" height="1" fill="#7b4a12"/><rect x="1" y="2" width="4" height="1" fill="#33e51a"/><rect x="5" y="2" width="2" height="1" fill="#7b4a12"/><rect x="7" y="2" width="2" height="1" fill="#ffffff"/><rect x="9" y="2" width="1" height="1" fill="#7b4a12"/><rect x="10" y="2" width="3" height="1" fill="#ffffff"/><rect x="13" y="2" width="2" height="1" fill="#7b4a12"/><rect x="0" y="3" width="1" height="1" fill="#7b4a12"/><rect x="1" y="3" width="4" height="1" fill="#33e51a"/><rect x="5" y="3" width="10" height="1" fill="#7b4a12"/><rect x="0" y="4" width="6" height="1" fill="#7b4a12"/><rect x="6" y="4" width="8" height="1" fill="#ffffff"/><rect x="14" y="4" width="1" height="1" fill="#7b4a12"/><rect x="0" y="5" width="1" height="1" fill="#7b4a12"/><rect x="1" y="5" width="4" height="1" fill="#ffffff"/><rect x="5" y="5" width="1" height="1" fill="#7b4a12"/><rect x="6" y="5" width="1" height="1" fill="#ffffff"/><rect x="7" y="5" width="2" height="1" fill="#000000"/><rect x="9" y="5" width="1" height="1" fill="#ffffff"/><rect x="10" y="5" width="3" height="1" fill="#000000"/><rect x="13" y="5" width="1" height="1" fill="#ffffff"/><rect x="14" y="5" width="1" height="1" fill="#7b4a12"/><rect x="0" y="6" width="6" height="1" fill="#7b4a12"/><rect x="6" y="6" width="8" height="1" fill="#ffffff"/><rect x="14" y="6" width="1" height="1" fill="#7b4a12"/><rect x="0" y="7" width="1" height="1" fill="#7b4a12"/><rect x="1" y="7" width="4" height="1" fill="#ffffff"/><rect x="5" y="7" width="1" height="1" fill="#7b4a12"/><rect x="6" y="7" width="1" height="1" fill="#ffffff"/><rect x="7" y="7" width="2" height="1" fill="#000000"/><rect x="9" y="7" width="1" height="1" fill="#ffffff"/><rect x="10" y="7" width="3" height="1" fill="#000000"/><rect x="13" y="7" width="1" height="1" fill="#ffffff"/><rect x="14" y="7" width="1" height="1" fill="#7b4a12"/><rect x="0" y="8" width="1" height="1" fill="#7b4a12"/><rect x="1" y="8" width="4" height="1" fill="#ffffff"/><rect x="5" y="8" width="1" height="1" fill="#7b4a12"/><rect x="6" y="8" width="1" height="1" fill="#ffffff"/><rect x="7" y="8" width="2" height="1" fill="#000000"/><rect x="9" y="8" width="1" height="1" fill="#ffffff"/><rect x="10" y="8" width="3" height="1" fill="#000000"/><rect x="13" y="8" width="1" height="1" fill="#ffffff"/><rect x="14" y="8" width="1" height="1" fill="#7b4a12"/><rect x="0" y="9" width="6" height="1" fill="#7b4a12"/><rect x="6" y="9" width="8" height="1" fill="#ffffff"/><rect x="14" y="9" width="1" height="1" fill="#7b4a12"/><rect x="0" y="10" width="1" height="1" fill="#7b4a12"/><rect x="1" y="10" width="4" height="1" fill="#ffffff"/><rect x="5" y="10" width="1" height="1" fill="#7b4a12"/><rect x="6" y="10" width="1" height="1" fill="#ffffff"/><rect x="7" y="10" width="2" height="1" fill="#000000"/><rect x="9" y="10" width="1" height="1" fill="#ffffff"/><rect x="10" y="10" width="2" height="1" fill="#000000"/><rect x="12" y="10" width="2" height="1" fill="#ffffff"/><rect x="14" y="10" width="1" height="1" fill="#7b4a12"/><rect x="0" y="11" width="6" height="1" fill="#7b4a12"/><rect x="6" y="11" width="8" height="1" fill="#ffffff"/><rect x="14" y="11" width="1" height="1" fill="#7b4a12"/><rect x="0" y="12" width="1" height="1" fill="#7b4a12"/><rect x="1" y="12" width="4" height="1" fill="#ffffff"/><rect x="5" y="12" width="1" height="1" fill="#7b4a12"/><rect x="6" y="12" width="1" height="1" fill="#ffffff"/><rect x="7" y="12" width="2" height="1" fill="#000000"/><rect x="9" y="12" width="5" height="1" fill="#ffffff"/><rect x="14" y="12" width="1" height="1" fill="#7b4a12"/><rect x="0" y="13" width="1" height="1" fill="#7b4a12"/><rect x="1" y="13" width="4" height="1" fill="#ffffff"/><rect x="5" y="13" width="1" height="1" fill="#7b4a12"/><rect x="6" y="13" width="8" height="1" fill="#ffffff"/><rect x="14" y="13" width="1" height="1" fill="#7b4a12"/><rect x="0" y="14" width="15" height="1" fill="#7b4a12"/><g transform="translate(8,8)"><rect x="3" y="0" width="1" height="1" fill="#ff0000"/><rect x="2" y="1" width="3" height="1" fill="#ff0000"/><rect x="2" y="2" width="3" height="1" fill="#ff0000"/><rect x="1" y="3" width="2" height="1" fill="#ff0000"/><rect x="3" y="3" width="1" height="1" fill="#ffffff"/><rect x="4" y="3" width="2" height="1" fill="#ff0000"/><rect x="1" y="4" width="5" height="1" fill="#ff0000"/><rect x="0" y="5" width="7" height="1" fill="#ff0000"/><rect x="0" y="6" width="2" height="1" fill="#ff0000"/><rect x="5" y="6" width="2" height="1" fill="#ff0000"/></g></svg>
<div class="t" style="left:142px;top:1162px;font-size:12px;line-height:12px;color:#333333;letter-spacing:0.244px;">Frag0008</div>
<div style="left:110px;top:1190px;width:10px;height:1px;background:#a9c1e2;"></div>
<svg style="left:123px;top:1183px;" width="16" height="16" viewBox="0 0 16 16" shape-rendering="crispEdges"><rect x="0" y="0" width="15" height="1" fill="#7b4a12"/><rect x="0" y="1" width="1" height="1" fill="#7b4a12"/><rect x="1" y="1" width="4" height="1" fill="#33e51a"/><rect x="5" y="1" width="2" height="1" fill="#7b4a12"/><rect x="7" y="1" width="2" height="1" fill="#ffffff"/><rect x="9" y="1" width="1" height="1" fill="#7b4a12"/><rect x="10" y="1" width="3" height="1" fill="#ffffff"/><rect x="13" y="1" width="2" height="1" fill="#7b4a12"/><rect x="0" y="2" width="1" height="1" fill="#7b4a12"/><rect x="1" y="2" width="4" height="1" fill="#33e51a"/><rect x="5" y="2" width="2" height="1" fill="#7b4a12"/><rect x="7" y="2" width="2" height="1" fill="#ffffff"/><rect x="9" y="2" width="1" height="1" fill="#7b4a12"/><rect x="10" y="2" width="3" height="1" fill="#ffffff"/><rect x="13" y="2" width="2" height="1" fill="#7b4a12"/><rect x="0" y="3" width="1" height="1" fill="#7b4a12"/><rect x="1" y="3" width="4" height="1" fill="#33e51a"/><rect x="5" y="3" width="10" height="1" fill="#7b4a12"/><rect x="0" y="4" width="6" height="1" fill="#7b4a12"/><rect x="6" y="4" width="8" height="1" fill="#ffffff"/><rect x="14" y="4" width="1" height="1" fill="#7b4a12"/><rect x="0" y="5" width="1" height="1" fill="#7b4a12"/><rect x="1" y="5" width="4" height="1" fill="#ffffff"/><rect x="5" y="5" width="1" height="1" fill="#7b4a12"/><rect x="6" y="5" width="1" height="1" fill="#ffffff"/><rect x="7" y="5" width="2" height="1" fill="#000000"/><rect x="9" y="5" width="1" height="1" fill="#ffffff"/><rect x="10" y="5" width="3" height="1" fill="#000000"/><rect x="13" y="5" width="1" height="1" fill="#ffffff"/><rect x="14" y="5" width="1" height="1" fill="#7b4a12"/><rect x="0" y="6" width="6" height="1" fill="#7b4a12"/><rect x="6" y="6" width="8" height="1" fill="#ffffff"/><rect x="14" y="6" width="1" height="1" fill="#7b4a12"/><rect x="0" y="7" width="1" height="1" fill="#7b4a12"/><rect x="1" y="7" width="4" height="1" fill="#ffffff"/><rect x="5" y="7" width="1" height="1" fill="#7b4a12"/><rect x="6" y="7" width="1" height="1" fill="#ffffff"/><rect x="7" y="7" width="2" height="1" fill="#000000"/><rect x="9" y="7" width="1" height="1" fill="#ffffff"/><rect x="10" y="7" width="3" height="1" fill="#000000"/><rect x="13" y="7" width="1" height="1" fill="#ffffff"/><rect x="14" y="7" width="1" height="1" fill="#7b4a12"/><rect x="0" y="8" width="1" height="1" fill="#7b4a12"/><rect x="1" y="8" width="4" height="1" fill="#ffffff"/><rect x="5" y="8" width="1" height="1" fill="#7b4a12"/><rect x="6" y="8" width="1" height="1" fill="#ffffff"/><rect x="7" y="8" width="2" height="1" fill="#000000"/><rect x="9" y="8" width="1" height="1" fill="#ffffff"/><rect x="10" y="8" width="3" height="1" fill="#000000"/><rect x="13" y="8" width="1" height="1" fill="#ffffff"/><rect x="14" y="8" width="1" height="1" fill="#7b4a12"/><rect x="0" y="9" width="6" height="1" fill="#7b4a12"/><rect x="6" y="9" width="8" height="1" fill="#ffffff"/><rect x="14" y="9" width="1" height="1" fill="#7b4a12"/><rect x="0" y="10" width="1" height="1" fill="#7b4a12"/><rect x="1" y="10" width="4" height="1" fill="#ffffff"/><rect x="5" y="10" width="1" height="1" fill="#7b4a12"/><rect x="6" y="10" width="1" height="1" fill="#ffffff"/><rect x="7" y="10" width="2" height="1" fill="#000000"/><rect x="9" y="10" width="1" height="1" fill="#ffffff"/><rect x="10" y="10" width="2" height="1" fill="#000000"/><rect x="12" y="10" width="2" height="1" fill="#ffffff"/><rect x="14" y="10" width="1" height="1" fill="#7b4a12"/><rect x="0" y="11" width="6" height="1" fill="#7b4a12"/><rect x="6" y="11" width="8" height="1" fill="#ffffff"/><rect x="14" y="11" width="1" height="1" fill="#7b4a12"/><rect x="0" y="12" width="1" height="1" fill="#7b4a12"/><rect x="1" y="12" width="4" height="1" fill="#ffffff"/><rect x="5" y="12" width="1" height="1" fill="#7b4a12"/><rect x="6" y="12" width="1" height="1" fill="#ffffff"/><rect x="7" y="12" width="2" height="1" fill="#000000"/><rect x="9" y="12" width="5" height="1" fill="#ffffff"/><rect x="14" y="12" width="1" height="1" fill="#7b4a12"/><rect x="0" y="13" width="1" height="1" fill="#7b4a12"/><rect x="1" y="13" width="4" height="1" fill="#ffffff"/><rect x="5" y="13" width="1" height="1" fill="#7b4a12"/><rect x="6" y="13" width="8" height="1" fill="#ffffff"/><rect x="14" y="13" width="1" height="1" fill="#7b4a12"/><rect x="0" y="14" width="15" height="1" fill="#7b4a12"/><g transform="translate(8,8)"><rect x="3" y="0" width="1" height="1" fill="#ff0000"/><rect x="2" y="1" width="3" height="1" fill="#ff0000"/><rect x="2" y="2" width="3" height="1" fill="#ff0000"/><rect x="1" y="3" width="2" height="1" fill="#ff0000"/><rect x="3" y="3" width="1" height="1" fill="#ffffff"/><rect x="4" y="3" width="2" height="1" fill="#ff0000"/><rect x="1" y="4" width="5" height="1" fill="#ff0000"/><rect x="0" y="5" width="7" height="1" fill="#ff0000"/><rect x="0" y="6" width="2" height="1" fill="#ff0000"/><rect x="5" y="6" width="2" height="1" fill="#ff0000"/></g></svg>
<div class="t" style="left:142px;top:1185px;font-size:12px;line-height:12px;color:#333333;letter-spacing:0.244px;">Frag0009</div>
<div style="left:90px;top:1213px;width:10px;height:1px;background:#a9c1e2;"></div>
<svg style="left:88px;top:1210px;" width="12" height="6" viewBox="0 0 12 6" shape-rendering="crispEdges"><rect x="1" y="0" width="4" height="1" fill="#5475c2"/><rect x="0" y="1" width="6" height="1" fill="#5475c2"/><rect x="0" y="2" width="2" height="1" fill="#5475c2"/><rect x="4" y="2" width="6" height="1" fill="#5475c2"/><rect x="0" y="3" width="2" height="1" fill="#5475c2"/><rect x="4" y="3" width="6" height="1" fill="#5475c2"/><rect x="0" y="4" width="6" height="1" fill="#5475c2"/><rect x="1" y="5" width="4" height="1" fill="#5475c2"/></svg>
<svg style="left:103px;top:1206px;" width="16" height="16" viewBox="0 0 16 16" shape-rendering="crispEdges"><rect x="2" y="1" width="4" height="1" fill="#000000"/><rect x="1" y="2" width="1" height="1" fill="#000000"/><rect x="2" y="2" width="4" height="1" fill="#f6c792"/><rect x="6" y="2" width="1" height="1" fill="#000000"/><rect x="0" y="3" width="1" height="1" fill="#000000"/><rect x="1" y="3" width="11" height="1" fill="#f6c792"/><rect x="12" y="3" width="1" height="1" fill="#000000"/><rect x="0" y="4" width="1" height="1" fill="#000000"/><rect x="1" y="4" width="1" height="1" fill="#f6c792"/><rect x="2" y="4" width="4" height="1" fill="#a8742e"/><rect x="6" y="4" width="7" height="1" fill="#f6c792"/><rect x="13" y="4" width="1" height="1" fill="#000000"/><rect x="0" y="5" width="1" height="1" fill="#000000"/><rect x="1" y="5" width="12" height="1" fill="#f6c792"/><rect x="13" y="5" width="1" height="1" fill="#1c1208"/><rect x="14" y="5" width="1" height="1" fill="#000000"/><rect x="0" y="6" width="1" height="1" fill="#000000"/><rect x="1" y="6" width="12" height="1" fill="#f6c792"/><rect x="13" y="6" width="1" height="1" fill="#1c1208"/><rect x="14" y="6" width="1" height="1" fill="#000000"/><rect x="0" y="7" width="1" height="1" fill="#000000"/><rect x="1" y="7" width="12" height="1" fill="#f6c792"/><rect x="13" y="7" width="1" height="1" fill="#1c1208"/><rect x="14" y="7" width="1" height="1" fill="#000000"/><rect x="0" y="8" width="1" height="1" fill="#000000"/><rect x="1" y="8" width="12" height="1" fill="#f6c792"/><rect x="13" y="8" width="1" height="1" fill="#1c1208"/><rect x="14" y="8" width="1" height="1" fill="#000000"/><rect x="0" y="9" width="1" height="1" fill="#000000"/><rect x="1" y="9" width="12" height="1" fill="#eab57c"/><rect x="13" y="9" width="1" height="1" fill="#1c1208"/><rect x="14" y="9" width="1" height="1" fill="#000000"/><rect x="0" y="10" width="1" height="1" fill="#000000"/><rect x="1" y="10" width="12" height="1" fill="#eab57c"/><rect x="13" y="10" width="1" height="1" fill="#1c1208"/><rect x="14" y="10" width="1" height="1" fill="#000000"/><rect x="1" y="11" width="1" height="1" fill="#000000"/><rect x="2" y="11" width="11" height="1" fill="#cf955c"/><rect x="13" y="11" width="1" height="1" fill="#1c1208"/><rect x="14" y="11" width="1" height="1" fill="#000000"/><rect x="2" y="12" width="1" height="1" fill="#000000"/><rect x="3" y="12" width="11" height="1" fill="#1c1208"/><rect x="14" y="12" width="1" height="1" fill="#000000"/><rect x="3" y="13" width="11" height="1" fill="#000000"/><g transform="translate(8,8)"><rect x="3" y="0" width="1" height="1" fill="#ff0000"/><rect x="2" y="1" width="3" height="1" fill="#ff0000"/><rect x="2" y="2" width="3" height="1" fill="#ff0000"/><rect x="1" y="3" width="2" height="1" fill="#ff0000"/><rect x="3" y="3" width="1" height="1" fill="#ffffff"/><rect x="4" y="3" width="2" height="1" fill="#ff0000"/><rect x="1" y="4" width="5" height="1" fill="#ff0000"/><rect x="0" y="5" width="7" height="1" fill="#ff0000"/><rect x="0" y="6" width="2" height="1" fill="#ff0000"/><rect x="5" y="6" width="2" height="1" fill="#ff0000"/></g></svg>
<div class="t" style="left:122px;top:1208px;font-size:12px;line-height:12px;color:#333333;letter-spacing:0.122px;">MyUShort</div>
<div style="left:90px;top:1236px;width:10px;height:1px;background:#a9c1e2;"></div>
<svg style="left:88px;top:1233px;" width="12" height="6" viewBox="0 0 12 6" shape-rendering="crispEdges"><rect x="1" y="0" width="4" height="1" fill="#5475c2"/><rect x="0" y="1" width="6" height="1" fill="#5475c2"/><rect x="0" y="2" width="2" height="1" fill="#5475c2"/><rect x="4" y="2" width="6" height="1" fill="#5475c2"/><rect x="0" y="3" width="2" height="1" fill="#5475c2"/><rect x="4" y="3" width="6" height="1" fill="#5475c2"/><rect x="0" y="4" width="6" height="1" fill="#5475c2"/><rect x="1" y="5" width="4" height="1" fill="#5475c2"/></svg>
<svg style="left:103px;top:1229px;" width="16" height="16" viewBox="0 0 16 16" shape-rendering="crispEdges"><rect x="2" y="1" width="4" height="1" fill="#000000"/><rect x="1" y="2" width="1" height="1" fill="#000000"/><rect x="2" y="2" width="4" height="1" fill="#f6c792"/><rect x="6" y="2" width="1" height="1" fill="#000000"/><rect x="0" y="3" width="1" height="1" fill="#000000"/><rect x="1" y="3" width="11" height="1" fill="#f6c792"/><rect x="12" y="3" width="1" height="1" fill="#000000"/><rect x="0" y="4" width="1" height="1" fill="#000000"/><rect x="1" y="4" width="1" height="1" fill="#f6c792"/><rect x="2" y="4" width="4" height="1" fill="#a8742e"/><rect x="6" y="4" width="7" height="1" fill="#f6c792"/><rect x="13" y="4" width="1" height="1" fill="#000000"/><rect x="0" y="5" width="1" height="1" fill="#000000"/><rect x="1" y="5" width="12" height="1" fill="#f6c792"/><rect x="13" y="5" width="1" height="1" fill="#1c1208"/><rect x="14" y="5" width="1" height="1" fill="#000000"/><rect x="0" y="6" width="1" height="1" fill="#000000"/><rect x="1" y="6" width="12" height="1" fill="#f6c792"/><rect x="13" y="6" width="1" height="1" fill="#1c1208"/><rect x="14" y="6" width="1" height="1" fill="#000000"/><rect x="0" y="7" width="1" height="1" fill="#000000"/><rect x="1" y="7" width="12" height="1" fill="#f6c792"/><rect x="13" y="7" width="1" height="1" fill="#1c1208"/><rect x="14" y="7" width="1" height="1" fill="#000000"/><rect x="0" y="8" width="1" height="1" fill="#000000"/><rect x="1" y="8" width="12" height="1" fill="#f6c792"/><rect x="13" y="8" width="1" height="1" fill="#1c1208"/><rect x="14" y="8" width="1" height="1" fill="#000000"/><rect x="0" y="9" width="1" height="1" fill="#000000"/><rect x="1" y="9" width="12" height="1" fill="#eab57c"/><rect x="13" y="9" width="1" height="1" fill="#1c1208"/><rect x="14" y="9" width="1" height="1" fill="#000000"/><rect x="0" y="10" width="1" height="1" fill="#000000"/><rect x="1" y="10" width="12" height="1" fill="#eab57c"/><rect x="13" y="10" width="1" height="1" fill="#1c1208"/><rect x="14" y="10" width="1" height="1" fill="#000000"/><rect x="1" y="11" width="1" height="1" fill="#000000"/><rect x="2" y="11" width="11" height="1" fill="#cf955c"/><rect x="13" y="11" width="1" height="1" fill="#1c1208"/><rect x="14" y="11" width="1" height="1" fill="#000000"/><rect x="2" y="12" width="1" height="1" fill="#000000"/><rect x="3" y="12" width="11" height="1" fill="#1c1208"/><rect x="14" y="12" width="1" height="1" fill="#000000"/><rect x="3" y="13" width="11" height="1" fill="#000000"/><g transform="translate(8,8)"><rect x="3" y="0" width="1" height="1" fill="#ff0000"/><rect x="2" y="1" width="3" height="1" fill="#ff0000"/><rect x="2" y="2" width="3" height="1" fill="#ff0000"/><rect x="1" y="3" width="2" height="1" fill="#ff0000"/><rect x="3" y="3" width="1" height="1" fill="#ffffff"/><rect x="4" y="3" width="2" height="1" fill="#ff0000"/><rect x="1" y="4" width="5" height="1" fill="#ff0000"/><rect x="0" y="5" width="7" height="1" fill="#ff0000"/><rect x="0" y="6" width="2" height="1" fill="#ff0000"/><rect x="5" y="6" width="2" height="1" fill="#ff0000"/></g></svg>
<div class="t" style="left:122px;top:1231px;font-size:12px;line-height:12px;color:#333333;letter-spacing:0.185px;">Positions</div>
<div style="left:514px;top:144px;width:972px;height:1259px;background:#ffffff;"></div>
<div style="left:1486px;top:144px;width:1px;height:1259px;background:#7a8a99;"></div>
<div style="left:1487px;top:144px;width:3px;height:1259px;background:#ffffff;"></div>
<div style="left:515px;top:144px;width:909px;height:1px;background:#7a8a99;"></div>
<div style="left:514px;top:145px;width:911px;height:4px;background:#7a8a99;"></div>
<div style="left:514px;top:149px;width:5px;height:1259px;background:#7a8a99;"></div>
<div style="left:1420px;top:149px;width:5px;height:1259px;background:#7a8a99;"></div>
<div style="left:528px;top:146px;width:883px;height:1px;background:#333333;"></div>
<div style="left:516px;top:158px;width:1px;height:1246px;background:#333333;"></div>
<div style="left:1422px;top:158px;width:1px;height:1246px;background:#333333;"></div>
<div style="left:529px;top:147px;width:883px;height:1px;background:#b8cfe5;"></div>
<div style="left:517px;top:159px;width:1px;height:1245px;background:#b8cfe5;"></div>
<div style="left:1423px;top:159px;width:1px;height:1245px;background:#b8cfe5;"></div>
<div style="left:519px;top:149px;width:901px;height:1259px;background:#eeeeee;"></div>
<div style="left:519px;top:149px;width:901px;height:22px;background:#eeeeee;"></div>
<div style="left:519px;top:171px;width:901px;height:1px;background:#7a8a99;"></div>
<svg style="left:524px;top:153px;" width="15" height="15" viewBox="0 0 15 15" shape-rendering="crispEdges"><rect x="0" y="0" width="15" height="1" fill="#7b4a12"/><rect x="0" y="1" width="1" height="1" fill="#7b4a12"/><rect x="1" y="1" width="4" height="1" fill="#33e51a"/><rect x="5" y="1" width="2" height="1" fill="#7b4a12"/><rect x="7" y="1" width="2" height="1" fill="#ffffff"/><rect x="9" y="1" width="1" height="1" fill="#7b4a12"/><rect x="10" y="1" width="3" height="1" fill="#ffffff"/><rect x="13" y="1" width="2" height="1" fill="#7b4a12"/><rect x="0" y="2" width="1" height="1" fill="#7b4a12"/><rect x="1" y="2" width="4" height="1" fill="#33e51a"/><rect x="5" y="2" width="2" height="1" fill="#7b4a12"/><rect x="7" y="2" width="2" height="1" fill="#ffffff"/><rect x="9" y="2" width="1" height="1" fill="#7b4a12"/><rect x="10" y="2" width="3" height="1" fill="#ffffff"/><rect x="13" y="2" width="2" height="1" fill="#7b4a12"/><rect x="0" y="3" width="1" height="1" fill="#7b4a12"/><rect x="1" y="3" width="4" height="1" fill="#33e51a"/><rect x="5" y="3" width="10" height="1" fill="#7b4a12"/><rect x="0" y="4" width="6" height="1" fill="#7b4a12"/><rect x="6" y="4" width="8" height="1" fill="#ffffff"/><rect x="14" y="4" width="1" height="1" fill="#7b4a12"/><rect x="0" y="5" width="1" height="1" fill="#7b4a12"/><rect x="1" y="5" width="4" height="1" fill="#ffffff"/><rect x="5" y="5" width="1" height="1" fill="#7b4a12"/><rect x="6" y="5" width="1" height="1" fill="#ffffff"/><rect x="7" y="5" width="2" height="1" fill="#000000"/><rect x="9" y="5" width="1" height="1" fill="#ffffff"/><rect x="10" y="5" width="3" height="1" fill="#000000"/><rect x="13" y="5" width="1" height="1" fill="#ffffff"/><rect x="14" y="5" width="1" height="1" fill="#7b4a12"/><rect x="0" y="6" width="6" height="1" fill="#7b4a12"/><rect x="6" y="6" width="8" height="1" fill="#ffffff"/><rect x="14" y="6" width="1" height="1" fill="#7b4a12"/><rect x="0" y="7" width="1" height="1" fill="#7b4a12"/><rect x="1" y="7" width="4" height="1" fill="#ffffff"/><rect x="5" y="7" width="1" height="1" fill="#7b4a12"/><rect x="6" y="7" width="1" height="1" fill="#ffffff"/><rect x="7" y="7" width="2" height="1" fill="#000000"/><rect x="9" y="7" width="1" height="1" fill="#ffffff"/><rect x="10" y="7" width="3" height="1" fill="#000000"/><rect x="13" y="7" width="1" height="1" fill="#ffffff"/><rect x="14" y="7" width="1" height="1" fill="#7b4a12"/><rect x="0" y="8" width="1" height="1" fill="#7b4a12"/><rect x="1" y="8" width="4" height="1" fill="#ffffff"/><rect x="5" y="8" width="1" height="1" fill="#7b4a12"/><rect x="6" y="8" width="1" height="1" fill="#ffffff"/><rect x="7" y="8" width="2" height="1" fill="#000000"/><rect x="9" y="8" width="1" height="1" fill="#ffffff"/><rect x="10" y="8" width="3" height="1" fill="#000000"/><rect x="13" y="8" width="1" height="1" fill="#ffffff"/><rect x="14" y="8" width="1" height="1" fill="#7b4a12"/><rect x="0" y="9" width="6" height="1" fill="#7b4a12"/><rect x="6" y="9" width="8" height="1" fill="#ffffff"/><rect x="14" y="9" width="1" height="1" fill="#7b4a12"/><rect x="0" y="10" width="1" height="1" fill="#7b4a12"/><rect x="1" y="10" width="4" height="1" fill="#ffffff"/><rect x="5" y="10" width="1" height="1" fill="#7b4a12"/><rect x="6" y="10" width="1" height="1" fill="#ffffff"/><rect x="7" y="10" width="2" height="1" fill="#000000"/><rect x="9" y="10" width="1" height="1" fill="#ffffff"/><rect x="10" y="10" width="2" height="1" fill="#000000"/><rect x="12" y="10" width="2" height="1" fill="#ffffff"/><rect x="14" y="10" width="1" height="1" fill="#7b4a12"/><rect x="0" y="11" width="6" height="1" fill="#7b4a12"/><rect x="6" y="11" width="8" height="1" fill="#ffffff"/><rect x="14" y="11" width="1" height="1" fill="#7b4a12"/><rect x="0" y="12" width="1" height="1" fill="#7b4a12"/><rect x="1" y="12" width="4" height="1" fill="#ffffff"/><rect x="5" y="12" width="1" height="1" fill="#7b4a12"/><rect x="6" y="12" width="1" height="1" fill="#ffffff"/><rect x="7" y="12" width="2" height="1" fill="#000000"/><rect x="9" y="12" width="5" height="1" fill="#ffffff"/><rect x="14" y="12" width="1" height="1" fill="#7b4a12"/><rect x="0" y="13" width="1" height="1" fill="#7b4a12"/><rect x="1" y="13" width="4" height="1" fill="#ffffff"/><rect x="5" y="13" width="1" height="1" fill="#7b4a12"/><rect x="6" y="13" width="8" height="1" fill="#ffffff"/><rect x="14" y="13" width="1" height="1" fill="#7b4a12"/><rect x="0" y="14" width="15" height="1" fill="#7b4a12"/></svg>
<div class="t" style="left:544px;top:155px;font-size:12px;line-height:12px;color:#333333;letter-spacing:0.116px;">Frag0000  at  /t=000000000.0000000000/MyPointCloud/Points/StandardCartesianChart3D/Positions/  [FragmentedParticles.f5  in  C:\msys\home\Wrk\...</div>
<svg style="left:1377px;top:152px;" width="15" height="14" viewBox="0 0 15 14" shape-rendering="crispEdges"><rect x="0" y="4" width="10" height="10" fill="#333333"/><rect x="1.5" y="5" width="7" height="7.5" fill="#6382bf"/><rect x="2.5" y="6" width="5" height="5.5" fill="#e8eef7"/><path d="M3 11 L12.5 1.5" stroke="#000" stroke-width="1.1" fill="none" shape-rendering="geometricPrecision"/><rect x="9" y="1" width="4" height="1" fill="#000"/><rect x="12" y="1" width="1" height="4" fill="#000"/></svg>
<svg style="left:1402px;top:152px;" width="14" height="14" viewBox="0 0 14 14" shape-rendering="crispEdges"><rect x="0" y="0" width="14" height="14" fill="#333333"/><rect x="1.5" y="1.5" width="11" height="11" fill="#6382bf"/><rect x="2.5" y="2.5" width="9" height="9" fill="#eef2f8"/><path d="M3.5 3.5 L10.5 10.5 M10.5 3.5 L3.5 10.5" stroke="#111" stroke-width="1" fill="none" shape-rendering="geometricPrecision"/></svg>
<div style="left:519px;top:172px;width:901px;height:26px;background:linear-gradient(to bottom,#ffffff 0%,#dadada 100%);"></div>
<div style="left:519px;top:198px;width:901px;height:1px;background:#f2f2f2;"></div>
<div style="left:519px;top:199px;width:901px;height:1px;background:#cfcfcf;"></div>
<div class="t" style="left:525px;top:180px;font-size:12px;line-height:12px;color:#333333;letter-spacing:0.236px;">Table</div>
<div style="left:525px;top:191px;width:7px;height:1px;background:#333333;"></div>
<div style="left:577px;top:172px;width:28px;height:24px;border:1px solid #8ea2b8;background:linear-gradient(to bottom,#f4f7fb,#d4e1ef);"></div>
<svg style="left:582px;top:175px;" width="22" height="21" viewBox="0 0 22 21" shape-rendering="crispEdges"><rect x="0" y="0" width="1" height="20" fill="#000"/><rect x="0" y="19" width="20" height="1" fill="#000"/><rect x="3" y="7" width="2" height="12" fill="#900000"/><rect x="8" y="12" width="2" height="7" fill="#900000"/><rect x="13" y="7" width="2" height="12" fill="#900000"/><rect x="18" y="3" width="2" height="16" fill="#900000"/><path d="M1 6.5 L3.5 4.3 L9.6 10.5 L18.5 1.4 L19.6 2.6" stroke="#1010ff" stroke-width="1.2" fill="none" shape-rendering="geometricPrecision"/><path d="M1 15.6 L4.5 12.3 L9.4 17.7 L12.6 14.4 L15.4 17.8 L19.8 13.3" stroke="#10e010" stroke-width="1.2" fill="none" shape-rendering="geometricPrecision"/></svg>
<div style="left:521px;top:208px;width:1px;height:1196px;background:#c4c4c4;"></div>
<div style="left:522px;top:209px;width:1px;height:1195px;background:#ffffff;"></div>
<div style="left:521px;top:208px;width:844px;height:1px;background:#c4c4c4;"></div>
<div style="left:522px;top:209px;width:843px;height:1px;background:#ffffff;"></div>
<div style="left:1415px;top:208px;width:4px;height:1px;background:#c4c4c4;"></div>
<div style="left:1415px;top:209px;width:4px;height:1px;background:#ffffff;"></div>
<div style="left:1418px;top:208px;width:1px;height:1196px;background:#c4c4c4;"></div>
<div style="left:1419px;top:208px;width:1px;height:1196px;background:#ffffff;"></div>
<div class="t" style="left:1367.5px;top:203px;font-size:12px;line-height:12px;color:#333333;letter-spacing:0.274px;">0-based</div>
<div style="left:524px;top:218px;width:76px;height:25px;background:#eeeeee;"></div>
<div style="left:524px;top:218px;width:76px;height:1px;background:#7a8a99;"></div>
<div style="left:524px;top:218px;width:1px;height:25px;background:#7a8a99;"></div>
<div style="left:525px;top:219px;width:74px;height:1px;background:#9a9a9a;"></div>
<div style="left:525px;top:219px;width:1px;height:23px;background:#9a9a9a;"></div>
<div style="left:525px;top:241px;width:74px;height:1px;background:#9a9a9a;"></div>
<div style="left:598px;top:219px;width:1px;height:23px;background:#9a9a9a;"></div>
<div style="left:526px;top:220px;width:72px;height:1px;background:#ffffff;"></div>
<div style="left:526px;top:220px;width:1px;height:21px;background:#ffffff;"></div>
<div style="left:599px;top:219px;width:1px;height:24px;background:#ffffff;"></div>
<div style="left:524px;top:242px;width:76px;height:1px;background:#ffffff;"></div>
<div style="left:600px;top:218px;width:816px;height:26px;background:#ffffff;"></div>
<div style="left:601px;top:220px;width:812px;height:21px;background:#fffff0;"></div>
<div style="left:600px;top:218px;width:815px;height:2px;background:#7a8a99;"></div>
<div style="left:600px;top:218px;width:1px;height:24px;background:#7a8a99;"></div>
<div style="left:601px;top:241px;width:813px;height:1px;background:#7a8a99;"></div>
<div style="left:1413px;top:222px;width:1px;height:20px;background:#7a8a99;"></div>
<div style="left:524px;top:243px;width:892px;height:9px;background:#f3f3f3;"></div>
<svg style="left:524px;top:243px" width="892" height="9" shape-rendering="crispEdges"><defs><pattern id="bh514" width="4" height="9" patternUnits="userSpaceOnUse"><rect x="0" y="4" width="1" height="1" fill="#6f6f6f"/><rect x="2" y="6" width="1" height="1" fill="#6f6f6f"/><rect x="3" y="3" width="1" height="1" fill="#ffffff"/><rect x="1" y="5" width="1" height="1" fill="#ffffff"/></pattern></defs><rect x="4" y="0" width="884" height="9" fill="url(#bh514)"/></svg>
<div style="left:524px;top:252px;width:892px;height:1151px;background:#eeeeee;"></div>
<div style="left:524px;top:252px;width:890px;height:2px;background:#7a8a99;"></div>
<div style="left:524px;top:252px;width:2px;height:1151px;background:#7a8a99;"></div>
<div style="left:1413px;top:252px;width:1px;height:1152px;background:#7a8a99;"></div>
<div style="left:1414px;top:253px;width:2px;height:1151px;background:#ffffff;"></div>
<div style="left:526px;top:274px;width:73px;height:1px;background:#ffffff;"></div>
<div style="left:526px;top:274px;width:1px;height:14px;background:#ffffff;"></div>
<div style="left:527px;top:275px;width:72px;height:13px;background:#c0c0c0;"></div>
<div style="left:526px;top:288px;width:75px;height:2px;background:#7a8a99;"></div>
<div style="left:599px;top:274px;width:2px;height:16px;background:#7a8a99;"></div>
<div style="left:526px;top:290px;width:73px;height:1px;background:#ffffff;"></div>
<div style="left:526px;top:290px;width:1px;height:14px;background:#ffffff;"></div>
<div style="left:527px;top:291px;width:72px;height:13px;background:#c0c0c0;"></div>
<div style="left:526px;top:304px;width:75px;height:2px;background:#7a8a99;"></div>
<div style="left:599px;top:290px;width:2px;height:16px;background:#7a8a99;"></div>
<div style="left:526px;top:306px;width:73px;height:1px;background:#ffffff;"></div>
<div style="left:526px;top:306px;width:1px;height:14px;background:#ffffff;"></div>
<div style="left:527px;top:307px;width:72px;height:13px;background:#c0c0c0;"></div>
<div style="left:526px;top:320px;width:75px;height:2px;background:#7a8a99;"></div>
<div style="left:599px;top:306px;width:2px;height:16px;background:#7a8a99;"></div>
<div style="left:526px;top:322px;width:73px;height:1px;background:#ffffff;"></div>
<div style="left:526px;top:322px;width:1px;height:14px;background:#ffffff;"></div>
<div style="left:527px;top:323px;width:72px;height:13px;background:#c0c0c0;"></div>
<div style="left:526px;top:336px;width:75px;height:2px;background:#7a8a99;"></div>
<div style="left:599px;top:322px;width:2px;height:16px;background:#7a8a99;"></div>
<div style="left:526px;top:338px;width:73px;height:1px;background:#ffffff;"></div>
<div style="left:526px;top:338px;width:1px;height:14px;background:#ffffff;"></div>
<div style="left:527px;top:339px;width:72px;height:13px;background:#c0c0c0;"></div>
<div style="left:526px;top:352px;width:75px;height:2px;background:#7a8a99;"></div>
<div style="left:599px;top:338px;width:2px;height:16px;background:#7a8a99;"></div>
<div style="left:526px;top:354px;width:73px;height:1px;background:#ffffff;"></div>
<div style="left:526px;top:354px;width:1px;height:14px;background:#ffffff;"></div>
<div style="left:527px;top:355px;width:72px;height:13px;background:#c0c0c0;"></div>
<div style="left:526px;top:368px;width:75px;height:2px;background:#7a8a99;"></div>
<div style="left:599px;top:354px;width:2px;height:16px;background:#7a8a99;"></div>
<div style="left:526px;top:370px;width:73px;height:1px;background:#ffffff;"></div>
<div style="left:526px;top:370px;width:1px;height:14px;background:#ffffff;"></div>
<div style="left:527px;top:371px;width:72px;height:13px;background:#c0c0c0;"></div>
<div style="left:526px;top:384px;width:75px;height:2px;background:#7a8a99;"></div>
<div style="left:599px;top:370px;width:2px;height:16px;background:#7a8a99;"></div>
<div style="left:526px;top:386px;width:73px;height:1px;background:#ffffff;"></div>
<div style="left:526px;top:386px;width:1px;height:14px;background:#ffffff;"></div>
<div style="left:527px;top:387px;width:72px;height:13px;background:#c0c0c0;"></div>
<div style="left:526px;top:400px;width:75px;height:2px;background:#7a8a99;"></div>
<div style="left:599px;top:386px;width:2px;height:16px;background:#7a8a99;"></div>
<div style="left:526px;top:402px;width:73px;height:1px;background:#ffffff;"></div>
<div style="left:526px;top:402px;width:1px;height:14px;background:#ffffff;"></div>
<div style="left:527px;top:403px;width:72px;height:13px;background:#c0c0c0;"></div>
<div style="left:526px;top:416px;width:75px;height:2px;background:#7a8a99;"></div>
<div style="left:599px;top:402px;width:2px;height:16px;background:#7a8a99;"></div>
<div style="left:526px;top:418px;width:73px;height:1px;background:#ffffff;"></div>
<div style="left:526px;top:418px;width:1px;height:14px;background:#ffffff;"></div>
<div style="left:527px;top:419px;width:72px;height:13px;background:#c0c0c0;"></div>
<div style="left:526px;top:432px;width:75px;height:2px;background:#7a8a99;"></div>
<div style="left:599px;top:418px;width:2px;height:16px;background:#7a8a99;"></div>
<div style="left:526px;top:434px;width:73px;height:1px;background:#ffffff;"></div>
<div style="left:526px;top:434px;width:1px;height:14px;background:#ffffff;"></div>
<div style="left:527px;top:435px;width:72px;height:13px;background:#c0c0c0;"></div>
<div style="left:526px;top:448px;width:75px;height:2px;background:#7a8a99;"></div>
<div style="left:599px;top:434px;width:2px;height:16px;background:#7a8a99;"></div>
<div style="left:526px;top:450px;width:73px;height:1px;background:#ffffff;"></div>
<div style="left:526px;top:450px;width:1px;height:14px;background:#ffffff;"></div>
<div style="left:527px;top:451px;width:72px;height:13px;background:#c0c0c0;"></div>
<div style="left:526px;top:464px;width:75px;height:2px;background:#7a8a99;"></div>
<div style="left:599px;top:450px;width:2px;height:16px;background:#7a8a99;"></div>
<div style="left:526px;top:466px;width:73px;height:1px;background:#ffffff;"></div>
<div style="left:526px;top:466px;width:1px;height:14px;background:#ffffff;"></div>
<div style="left:527px;top:467px;width:72px;height:13px;background:#c0c0c0;"></div>
<div style="left:526px;top:480px;width:75px;height:2px;background:#7a8a99;"></div>
<div style="left:599px;top:466px;width:2px;height:16px;background:#7a8a99;"></div>
<div style="left:526px;top:482px;width:73px;height:1px;background:#ffffff;"></div>
<div style="left:526px;top:482px;width:1px;height:14px;background:#ffffff;"></div>
<div style="left:527px;top:483px;width:72px;height:13px;background:#c0c0c0;"></div>
<div style="left:526px;top:496px;width:75px;height:2px;background:#7a8a99;"></div>
<div style="left:599px;top:482px;width:2px;height:16px;background:#7a8a99;"></div>
<div style="left:526px;top:498px;width:73px;height:1px;background:#ffffff;"></div>
<div style="left:526px;top:498px;width:1px;height:14px;background:#ffffff;"></div>
<div style="left:527px;top:499px;width:72px;height:13px;background:#c0c0c0;"></div>
<div style="left:526px;top:512px;width:75px;height:2px;background:#7a8a99;"></div>
<div style="left:599px;top:498px;width:2px;height:16px;background:#7a8a99;"></div>
<div style="left:526px;top:514px;width:73px;height:1px;background:#ffffff;"></div>
<div style="left:526px;top:514px;width:1px;height:14px;background:#ffffff;"></div>
<div style="left:527px;top:515px;width:72px;height:13px;background:#c0c0c0;"></div>
<div style="left:526px;top:528px;width:75px;height:2px;background:#7a8a99;"></div>
<div style="left:599px;top:514px;width:2px;height:16px;background:#7a8a99;"></div>
<div style="left:526px;top:530px;width:73px;height:1px;background:#ffffff;"></div>
<div style="left:526px;top:530px;width:1px;height:14px;background:#ffffff;"></div>
<div style="left:527px;top:531px;width:72px;height:13px;background:#c0c0c0;"></div>
<div style="left:526px;top:544px;width:75px;height:2px;background:#7a8a99;"></div>
<div style="left:599px;top:530px;width:2px;height:16px;background:#7a8a99;"></div>
<div style="left:526px;top:546px;width:73px;height:1px;background:#ffffff;"></div>
<div style="left:526px;top:546px;width:1px;height:14px;background:#ffffff;"></div>
<div style="left:527px;top:547px;width:72px;height:13px;background:#c0c0c0;"></div>
<div style="left:526px;top:560px;width:75px;height:2px;background:#7a8a99;"></div>
<div style="left:599px;top:546px;width:2px;height:16px;background:#7a8a99;"></div>
<div style="left:526px;top:562px;width:73px;height:1px;background:#ffffff;"></div>
<div style="left:526px;top:562px;width:1px;height:14px;background:#ffffff;"></div>
<div style="left:527px;top:563px;width:72px;height:13px;background:#c0c0c0;"></div>
<div style="left:526px;top:576px;width:75px;height:2px;background:#7a8a99;"></div>
<div style="left:599px;top:562px;width:2px;height:16px;background:#7a8a99;"></div>
<div style="left:526px;top:578px;width:73px;height:1px;background:#ffffff;"></div>
<div style="left:526px;top:578px;width:1px;height:14px;background:#ffffff;"></div>
<div style="left:527px;top:579px;width:72px;height:13px;background:#c0c0c0;"></div>
<div style="left:526px;top:592px;width:75px;height:2px;background:#7a8a99;"></div>
<div style="left:599px;top:578px;width:2px;height:16px;background:#7a8a99;"></div>
<div style="left:526px;top:594px;width:73px;height:1px;background:#ffffff;"></div>
<div style="left:526px;top:594px;width:1px;height:14px;background:#ffffff;"></div>
<div style="left:527px;top:595px;width:72px;height:13px;background:#c0c0c0;"></div>
<div style="left:526px;top:608px;width:75px;height:2px;background:#7a8a99;"></div>
<div style="left:599px;top:594px;width:2px;height:16px;background:#7a8a99;"></div>
<div style="left:526px;top:610px;width:73px;height:1px;background:#ffffff;"></div>
<div style="left:526px;top:610px;width:1px;height:14px;background:#ffffff;"></div>
<div style="left:527px;top:611px;width:72px;height:13px;background:#c0c0c0;"></div>
<div style="left:526px;top:624px;width:75px;height:2px;background:#7a8a99;"></div>
<div style="left:599px;top:610px;width:2px;height:16px;background:#7a8a99;"></div>
<div style="left:526px;top:626px;width:73px;height:1px;background:#ffffff;"></div>
<div style="left:526px;top:626px;width:1px;height:14px;background:#ffffff;"></div>
<div style="left:527px;top:627px;width:72px;height:13px;background:#c0c0c0;"></div>
<div style="left:526px;top:640px;width:75px;height:2px;background:#7a8a99;"></div>
<div style="left:599px;top:626px;width:2px;height:16px;background:#7a8a99;"></div>
<div style="left:526px;top:642px;width:73px;height:1px;background:#ffffff;"></div>
<div style="left:526px;top:642px;width:1px;height:14px;background:#ffffff;"></div>
<div style="left:527px;top:643px;width:72px;height:13px;background:#c0c0c0;"></div>
<div style="left:526px;top:656px;width:75px;height:2px;background:#7a8a99;"></div>
<div style="left:599px;top:642px;width:2px;height:16px;background:#7a8a99;"></div>
<div style="left:526px;top:658px;width:73px;height:1px;background:#ffffff;"></div>
<div style="left:526px;top:658px;width:1px;height:14px;background:#ffffff;"></div>
<div style="left:527px;top:659px;width:72px;height:13px;background:#c0c0c0;"></div>
<div style="left:526px;top:672px;width:75px;height:2px;background:#7a8a99;"></div>
<div style="left:599px;top:658px;width:2px;height:16px;background:#7a8a99;"></div>
<div style="left:526px;top:674px;width:73px;height:1px;background:#ffffff;"></div>
<div style="left:526px;top:674px;width:1px;height:14px;background:#ffffff;"></div>
<div style="left:527px;top:675px;width:72px;height:13px;background:#c0c0c0;"></div>
<div style="left:526px;top:688px;width:75px;height:2px;background:#7a8a99;"></div>
<div style="left:599px;top:674px;width:2px;height:16px;background:#7a8a99;"></div>
<div style="left:526px;top:690px;width:73px;height:1px;background:#ffffff;"></div>
<div style="left:526px;top:690px;width:1px;height:14px;background:#ffffff;"></div>
<div style="left:527px;top:691px;width:72px;height:13px;background:#c0c0c0;"></div>
<div style="left:526px;top:704px;width:75px;height:2px;background:#7a8a99;"></div>
<div style="left:599px;top:690px;width:2px;height:16px;background:#7a8a99;"></div>
<div style="left:526px;top:706px;width:73px;height:1px;background:#ffffff;"></div>
<div style="left:526px;top:706px;width:1px;height:14px;background:#ffffff;"></div>
<div style="left:527px;top:707px;width:72px;height:13px;background:#c0c0c0;"></div>
<div style="left:526px;top:720px;width:75px;height:2px;background:#7a8a99;"></div>
<div style="left:599px;top:706px;width:2px;height:16px;background:#7a8a99;"></div>
<div style="left:526px;top:722px;width:73px;height:1px;background:#ffffff;"></div>
<div style="left:526px;top:722px;width:1px;height:14px;background:#ffffff;"></div>
<div style="left:527px;top:723px;width:72px;height:13px;background:#c0c0c0;"></div>
<div style="left:526px;top:736px;width:75px;height:2px;background:#7a8a99;"></div>
<div style="left:599px;top:722px;width:2px;height:16px;background:#7a8a99;"></div>
<div style="left:526px;top:738px;width:73px;height:1px;background:#ffffff;"></div>
<div style="left:526px;top:738px;width:1px;height:14px;background:#ffffff;"></div>
<div style="left:527px;top:739px;width:72px;height:13px;background:#c0c0c0;"></div>
<div style="left:526px;top:752px;width:75px;height:2px;background:#7a8a99;"></div>
<div style="left:599px;top:738px;width:2px;height:16px;background:#7a8a99;"></div>
<div style="left:526px;top:754px;width:73px;height:1px;background:#ffffff;"></div>
<div style="left:526px;top:754px;width:1px;height:14px;background:#ffffff;"></div>
<div style="left:527px;top:755px;width:72px;height:13px;background:#c0c0c0;"></div>
<div style="left:526px;top:768px;width:75px;height:2px;background:#7a8a99;"></div>
<div style="left:599px;top:754px;width:2px;height:16px;background:#7a8a99;"></div>
<div style="left:526px;top:770px;width:73px;height:1px;background:#ffffff;"></div>
<div style="left:526px;top:770px;width:1px;height:14px;background:#ffffff;"></div>
<div style="left:527px;top:771px;width:72px;height:13px;background:#c0c0c0;"></div>
<div style="left:526px;top:784px;width:75px;height:2px;background:#7a8a99;"></div>
<div style="left:599px;top:770px;width:2px;height:16px;background:#7a8a99;"></div>
<div style="left:526px;top:786px;width:73px;height:1px;background:#ffffff;"></div>
<div style="left:526px;top:786px;width:1px;height:14px;background:#ffffff;"></div>
<div style="left:527px;top:787px;width:72px;height:13px;background:#c0c0c0;"></div>
<div style="left:526px;top:800px;width:75px;height:2px;background:#7a8a99;"></div>
<div style="left:599px;top:786px;width:2px;height:16px;background:#7a8a99;"></div>
<div style="left:526px;top:802px;width:73px;height:1px;background:#ffffff;"></div>
<div style="left:526px;top:802px;width:1px;height:14px;background:#ffffff;"></div>
<div style="left:527px;top:803px;width:72px;height:13px;background:#c0c0c0;"></div>
<div style="left:526px;top:816px;width:75px;height:2px;background:#7a8a99;"></div>
<div style="left:599px;top:802px;width:2px;height:16px;background:#7a8a99;"></div>
<div style="left:526px;top:818px;width:73px;height:1px;background:#ffffff;"></div>
<div style="left:526px;top:818px;width:1px;height:14px;background:#ffffff;"></div>
<div style="left:527px;top:819px;width:72px;height:13px;background:#c0c0c0;"></div>
<div style="left:526px;top:832px;width:75px;height:2px;background:#7a8a99;"></div>
<div style="left:599px;top:818px;width:2px;height:16px;background:#7a8a99;"></div>
<div style="left:526px;top:834px;width:73px;height:1px;background:#ffffff;"></div>
<div style="left:526px;top:834px;width:1px;height:14px;background:#ffffff;"></div>
<div style="left:527px;top:835px;width:72px;height:13px;background:#c0c0c0;"></div>
<div style="left:526px;top:848px;width:75px;height:2px;background:#7a8a99;"></div>
<div style="left:599px;top:834px;width:2px;height:16px;background:#7a8a99;"></div>
<div style="left:526px;top:850px;width:73px;height:1px;background:#ffffff;"></div>
<div style="left:526px;top:850px;width:1px;height:14px;background:#ffffff;"></div>
<div style="left:527px;top:851px;width:72px;height:13px;background:#c0c0c0;"></div>
<div style="left:526px;top:864px;width:75px;height:2px;background:#7a8a99;"></div>
<div style="left:599px;top:850px;width:2px;height:16px;background:#7a8a99;"></div>
<div style="left:526px;top:866px;width:73px;height:1px;background:#ffffff;"></div>
<div style="left:526px;top:866px;width:1px;height:14px;background:#ffffff;"></div>
<div style="left:527px;top:867px;width:72px;height:13px;background:#c0c0c0;"></div>
<div style="left:526px;top:880px;width:75px;height:2px;background:#7a8a99;"></div>
<div style="left:599px;top:866px;width:2px;height:16px;background:#7a8a99;"></div>
<div style="left:526px;top:882px;width:73px;height:1px;background:#ffffff;"></div>
<div style="left:526px;top:882px;width:1px;height:14px;background:#ffffff;"></div>
<div style="left:527px;top:883px;width:72px;height:13px;background:#c0c0c0;"></div>
<div style="left:526px;top:896px;width:75px;height:2px;background:#7a8a99;"></div>
<div style="left:599px;top:882px;width:2px;height:16px;background:#7a8a99;"></div>
<div style="left:526px;top:898px;width:73px;height:1px;background:#ffffff;"></div>
<div style="left:526px;top:898px;width:1px;height:14px;background:#ffffff;"></div>
<div style="left:527px;top:899px;width:72px;height:13px;background:#c0c0c0;"></div>
<div style="left:526px;top:912px;width:75px;height:2px;background:#7a8a99;"></div>
<div style="left:599px;top:898px;width:2px;height:16px;background:#7a8a99;"></div>
<div style="left:526px;top:914px;width:73px;height:1px;background:#ffffff;"></div>
<div style="left:526px;top:914px;width:1px;height:14px;background:#ffffff;"></div>
<div style="left:527px;top:915px;width:72px;height:13px;background:#c0c0c0;"></div>
<div style="left:526px;top:928px;width:75px;height:2px;background:#7a8a99;"></div>
<div style="left:599px;top:914px;width:2px;height:16px;background:#7a8a99;"></div>
<div style="left:526px;top:930px;width:73px;height:1px;background:#ffffff;"></div>
<div style="left:526px;top:930px;width:1px;height:14px;background:#ffffff;"></div>
<div style="left:527px;top:931px;width:72px;height:13px;background:#c0c0c0;"></div>
<div style="left:526px;top:944px;width:75px;height:2px;background:#7a8a99;"></div>
<div style="left:599px;top:930px;width:2px;height:16px;background:#7a8a99;"></div>
<div style="left:526px;top:946px;width:73px;height:1px;background:#ffffff;"></div>
<div style="left:526px;top:946px;width:1px;height:14px;background:#ffffff;"></div>
<div style="left:527px;top:947px;width:72px;height:13px;background:#c0c0c0;"></div>
<div style="left:526px;top:960px;width:75px;height:2px;background:#7a8a99;"></div>
<div style="left:599px;top:946px;width:2px;height:16px;background:#7a8a99;"></div>
<div style="left:526px;top:962px;width:73px;height:1px;background:#ffffff;"></div>
<div style="left:526px;top:962px;width:1px;height:14px;background:#ffffff;"></div>
<div style="left:527px;top:963px;width:72px;height:13px;background:#c0c0c0;"></div>
<div style="left:526px;top:976px;width:75px;height:2px;background:#7a8a99;"></div>
<div style="left:599px;top:962px;width:2px;height:16px;background:#7a8a99;"></div>
<div style="left:526px;top:978px;width:73px;height:1px;background:#ffffff;"></div>
<div style="left:526px;top:978px;width:1px;height:14px;background:#ffffff;"></div>
<div style="left:527px;top:979px;width:72px;height:13px;background:#c0c0c0;"></div>
<div style="left:526px;top:992px;width:75px;height:2px;background:#7a8a99;"></div>
<div style="left:599px;top:978px;width:2px;height:16px;background:#7a8a99;"></div>
<div style="left:526px;top:994px;width:73px;height:1px;background:#ffffff;"></div>
<div style="left:526px;top:994px;width:1px;height:14px;background:#ffffff;"></div>
<div style="left:527px;top:995px;width:72px;height:13px;background:#c0c0c0;"></div>
<div style="left:526px;top:1008px;width:75px;height:2px;background:#7a8a99;"></div>
<div style="left:599px;top:994px;width:2px;height:16px;background:#7a8a99;"></div>
<div style="left:526px;top:1010px;width:73px;height:1px;background:#ffffff;"></div>
<div style="left:526px;top:1010px;width:1px;height:14px;background:#ffffff;"></div>
<div style="left:527px;top:1011px;width:72px;height:13px;background:#c0c0c0;"></div>
<div style="left:526px;top:1024px;width:75px;height:2px;background:#7a8a99;"></div>
<div style="left:599px;top:1010px;width:2px;height:16px;background:#7a8a99;"></div>
<div style="left:526px;top:1026px;width:73px;height:1px;background:#ffffff;"></div>
<div style="left:526px;top:1026px;width:1px;height:14px;background:#ffffff;"></div>
<div style="left:527px;top:1027px;width:72px;height:13px;background:#c0c0c0;"></div>
<div style="left:526px;top:1040px;width:75px;height:2px;background:#7a8a99;"></div>
<div style="left:599px;top:1026px;width:2px;height:16px;background:#7a8a99;"></div>
<div style="left:526px;top:1042px;width:73px;height:1px;background:#ffffff;"></div>
<div style="left:526px;top:1042px;width:1px;height:14px;background:#ffffff;"></div>
<div style="left:527px;top:1043px;width:72px;height:13px;background:#c0c0c0;"></div>
<div style="left:526px;top:1056px;width:75px;height:2px;background:#7a8a99;"></div>
<div style="left:599px;top:1042px;width:2px;height:16px;background:#7a8a99;"></div>
<div style="left:526px;top:1058px;width:73px;height:1px;background:#ffffff;"></div>
<div style="left:526px;top:1058px;width:1px;height:14px;background:#ffffff;"></div>
<div style="left:527px;top:1059px;width:72px;height:13px;background:#c0c0c0;"></div>
<div style="left:526px;top:1072px;width:75px;height:2px;background:#7a8a99;"></div>
<div style="left:599px;top:1058px;width:2px;height:16px;background:#7a8a99;"></div>
<div style="left:530px;top:159px;width:910px;height:1px;background:#6382bf;"></div>
<div style="left:529px;top:160px;width:912px;height:4px;background:#6382bf;"></div>
<div style="left:529px;top:164px;width:5px;height:1244px;background:#6382bf;"></div>
<div style="left:1436px;top:164px;width:5px;height:1244px;background:#6382bf;"></div>
<div style="left:543px;top:161px;width:884px;height:1px;background:#333333;"></div>
<div style="left:531px;top:173px;width:1px;height:1231px;background:#333333;"></div>
<div style="left:1438px;top:173px;width:1px;height:1231px;background:#333333;"></div>
<div style="left:544px;top:162px;width:884px;height:1px;background:#a3b8cc;"></div>
<div style="left:532px;top:174px;width:1px;height:1230px;background:#a3b8cc;"></div>
<div style="left:1439px;top:174px;width:1px;height:1230px;background:#a3b8cc;"></div>
<div style="left:534px;top:164px;width:902px;height:1244px;background:#eeeeee;"></div>
<div style="left:534px;top:164px;width:902px;height:22px;background:linear-gradient(to bottom,#dde8f3 0%,#ffffff 30%,#dde8f3 60%,#b8cfe5 100%);"></div>
<div style="left:534px;top:186px;width:902px;height:1px;background:#6382bf;"></div>
<svg style="left:539px;top:168px;" width="15" height="15" viewBox="0 0 15 15" shape-rendering="crispEdges"><rect x="0" y="0" width="15" height="1" fill="#7b4a12"/><rect x="0" y="1" width="1" height="1" fill="#7b4a12"/><rect x="1" y="1" width="4" height="1" fill="#33e51a"/><rect x="5" y="1" width="2" height="1" fill="#7b4a12"/><rect x="7" y="1" width="2" height="1" fill="#ffffff"/><rect x="9" y="1" width="1" height="1" fill="#7b4a12"/><rect x="10" y="1" width="3" height="1" fill="#ffffff"/><rect x="13" y="1" width="2" height="1" fill="#7b4a12"/><rect x="0" y="2" width="1" height="1" fill="#7b4a12"/><rect x="1" y="2" width="4" height="1" fill="#33e51a"/><rect x="5" y="2" width="2" height="1" fill="#7b4a12"/><rect x="7" y="2" width="2" height="1" fill="#ffffff"/><rect x="9" y="2" width="1" height="1" fill="#7b4a12"/><rect x="10" y="2" width="3" height="1" fill="#ffffff"/><rect x="13" y="2" width="2" height="1" fill="#7b4a12"/><rect x="0" y="3" width="1" height="1" fill="#7b4a12"/><rect x="1" y="3" width="4" height="1" fill="#33e51a"/><rect x="5" y="3" width="10" height="1" fill="#7b4a12"/><rect x="0" y="4" width="6" height="1" fill="#7b4a12"/><rect x="6" y="4" width="8" height="1" fill="#ffffff"/><rect x="14" y="4" width="1" height="1" fill="#7b4a12"/><rect x="0" y="5" width="1" height="1" fill="#7b4a12"/><rect x="1" y="5" width="4" height="1" fill="#ffffff"/><rect x="5" y="5" width="1" height="1" fill="#7b4a12"/><rect x="6" y="5" width="1" height="1" fill="#ffffff"/><rect x="7" y="5" width="2" height="1" fill="#000000"/><rect x="9" y="5" width="1" height="1" fill="#ffffff"/><rect x="10" y="5" width="3" height="1" fill="#000000"/><rect x="13" y="5" width="1" height="1" fill="#ffffff"/><rect x="14" y="5" width="1" height="1" fill="#7b4a12"/><rect x="0" y="6" width="6" height="1" fill="#7b4a12"/><rect x="6" y="6" width="8" height="1" fill="#ffffff"/><rect x="14" y="6" width="1" height="1" fill="#7b4a12"/><rect x="0" y="7" width="1" height="1" fill="#7b4a12"/><rect x="1" y="7" width="4" height="1" fill="#ffffff"/><rect x="5" y="7" width="1" height="1" fill="#7b4a12"/><rect x="6" y="7" width="1" height="1" fill="#ffffff"/><rect x="7" y="7" width="2" height="1" fill="#000000"/><rect x="9" y="7" width="1" height="1" fill="#ffffff"/><rect x="10" y="7" width="3" height="1" fill="#000000"/><rect x="13" y="7" width="1" height="1" fill="#ffffff"/><rect x="14" y="7" width="1" height="1" fill="#7b4a12"/><rect x="0" y="8" width="1" height="1" fill="#7b4a12"/><rect x="1" y="8" width="4" height="1" fill="#ffffff"/><rect x="5" y="8" width="1" height="1" fill="#7b4a12"/><rect x="6" y="8" width="1" height="1" fill="#ffffff"/><rect x="7" y="8" width="2" height="1" fill="#000000"/><rect x="9" y="8" width="1" height="1" fill="#ffffff"/><rect x="10" y="8" width="3" height="1" fill="#000000"/><rect x="13" y="8" width="1" height="1" fill="#ffffff"/><rect x="14" y="8" width="1" height="1" fill="#7b4a12"/><rect x="0" y="9" width="6" height="1" fill="#7b4a12"/><rect x="6" y="9" width="8" height="1" fill="#ffffff"/><rect x="14" y="9" width="1" height="1" fill="#7b4a12"/><rect x="0" y="10" width="1" height="1" fill="#7b4a12"/><rect x="1" y="10" width="4" height="1" fill="#ffffff"/><rect x="5" y="10" width="1" height="1" fill="#7b4a12"/><rect x="6" y="10" width="1" height="1" fill="#ffffff"/><rect x="7" y="10" width="2" height="1" fill="#000000"/><rect x="9" y="10" width="1" height="1" fill="#ffffff"/><rect x="10" y="10" width="2" height="1" fill="#000000"/><rect x="12" y="10" width="2" height="1" fill="#ffffff"/><rect x="14" y="10" width="1" height="1" fill="#7b4a12"/><rect x="0" y="11" width="6" height="1" fill="#7b4a12"/><rect x="6" y="11" width="8" height="1" fill="#ffffff"/><rect x="14" y="11" width="1" height="1" fill="#7b4a12"/><rect x="0" y="12" width="1" height="1" fill="#7b4a12"/><rect x="1" y="12" width="4" height="1" fill="#ffffff"/><rect x="5" y="12" width="1" height="1" fill="#7b4a12"/><rect x="6" y="12" width="1" height="1" fill="#ffffff"/><rect x="7" y="12" width="2" height="1" fill="#000000"/><rect x="9" y="12" width="5" height="1" fill="#ffffff"/><rect x="14" y="12" width="1" height="1" fill="#7b4a12"/><rect x="0" y="13" width="1" height="1" fill="#7b4a12"/><rect x="1" y="13" width="4" height="1" fill="#ffffff"/><rect x="5" y="13" width="1" height="1" fill="#7b4a12"/><rect x="6" y="13" width="8" height="1" fill="#ffffff"/><rect x="14" y="13" width="1" height="1" fill="#7b4a12"/><rect x="0" y="14" width="15" height="1" fill="#7b4a12"/></svg>
<div class="t" style="left:559px;top:170px;font-size:12px;line-height:12px;color:#333333;letter-spacing:0.112px;">Frag0000  at  /t=000000000.0000000000/MyPointCloud/Points/StandardCartesianChart3D/MyTensor/  [FragmentedParticles.f5  in  C:\msys\home\Wrk\...</div>
<svg style="left:1392px;top:167px;" width="15" height="14" viewBox="0 0 15 14" shape-rendering="crispEdges"><rect x="0" y="4" width="10" height="10" fill="#333333"/><rect x="1.5" y="5" width="7" height="7.5" fill="#6382bf"/><rect x="2.5" y="6" width="5" height="5.5" fill="#e8eef7"/><path d="M3 11 L12.5 1.5" stroke="#000" stroke-width="1.1" fill="none" shape-rendering="geometricPrecision"/><rect x="9" y="1" width="4" height="1" fill="#000"/><rect x="12" y="1" width="1" height="4" fill="#000"/></svg>
<svg style="left:1417px;top:167px;" width="14" height="14" viewBox="0 0 14 14" shape-rendering="crispEdges"><rect x="0" y="0" width="14" height="14" fill="#333333"/><rect x="1.5" y="1.5" width="11" height="11" fill="#6382bf"/><rect x="2.5" y="2.5" width="9" height="9" fill="#eef2f8"/><path d="M3.5 3.5 L10.5 10.5 M10.5 3.5 L3.5 10.5" stroke="#111" stroke-width="1" fill="none" shape-rendering="geometricPrecision"/></svg>
<div style="left:534px;top:187px;width:902px;height:26px;background:linear-gradient(to bottom,#ffffff 0%,#dadada 100%);"></div>
<div style="left:534px;top:213px;width:902px;height:1px;background:#f2f2f2;"></div>
<div style="left:534px;top:214px;width:902px;height:1px;background:#cfcfcf;"></div>
<div class="t" style="left:540px;top:195px;font-size:12px;line-height:12px;color:#333333;letter-spacing:0.236px;">Table</div>
<div style="left:540px;top:206px;width:7px;height:1px;background:#333333;"></div>
<div style="left:592px;top:187px;width:28px;height:24px;border:1px solid #8ea2b8;background:linear-gradient(to bottom,#f4f7fb,#d4e1ef);"></div>
<svg style="left:597px;top:190px;" width="22" height="21" viewBox="0 0 22 21" shape-rendering="crispEdges"><rect x="0" y="0" width="1" height="20" fill="#000"/><rect x="0" y="19" width="20" height="1" fill="#000"/><rect x="3" y="7" width="2" height="12" fill="#900000"/><rect x="8" y="12" width="2" height="7" fill="#900000"/><rect x="13" y="7" width="2" height="12" fill="#900000"/><rect x="18" y="3" width="2" height="16" fill="#900000"/><path d="M1 6.5 L3.5 4.3 L9.6 10.5 L18.5 1.4 L19.6 2.6" stroke="#1010ff" stroke-width="1.2" fill="none" shape-rendering="geometricPrecision"/><path d="M1 15.6 L4.5 12.3 L9.4 17.7 L12.6 14.4 L15.4 17.8 L19.8 13.3" stroke="#10e010" stroke-width="1.2" fill="none" shape-rendering="geometricPrecision"/></svg>
<div style="left:536px;top:223px;width:1px;height:1181px;background:#c4c4c4;"></div>
<div style="left:537px;top:224px;width:1px;height:1180px;background:#ffffff;"></div>
<div style="left:536px;top:223px;width:844px;height:1px;background:#c4c4c4;"></div>
<div style="left:537px;top:224px;width:843px;height:1px;background:#ffffff;"></div>
<div style="left:1430px;top:223px;width:4px;height:1px;background:#c4c4c4;"></div>
<div style="left:1430px;top:224px;width:4px;height:1px;background:#ffffff;"></div>
<div style="left:1433px;top:223px;width:1px;height:1181px;background:#c4c4c4;"></div>
<div style="left:1434px;top:223px;width:1px;height:1181px;background:#ffffff;"></div>
<div class="t" style="left:1382.5px;top:218px;font-size:12px;line-height:12px;color:#333333;letter-spacing:0.274px;">0-based</div>
<div style="left:539px;top:233px;width:76px;height:25px;background:#eeeeee;"></div>
<div style="left:539px;top:233px;width:76px;height:1px;background:#7a8a99;"></div>
<div style="left:539px;top:233px;width:1px;height:25px;background:#7a8a99;"></div>
<div style="left:540px;top:234px;width:74px;height:1px;background:#9a9a9a;"></div>
<div style="left:540px;top:234px;width:1px;height:23px;background:#9a9a9a;"></div>
<div style="left:540px;top:256px;width:74px;height:1px;background:#9a9a9a;"></div>
<div style="left:613px;top:234px;width:1px;height:23px;background:#9a9a9a;"></div>
<div style="left:541px;top:235px;width:72px;height:1px;background:#ffffff;"></div>
<div style="left:541px;top:235px;width:1px;height:21px;background:#ffffff;"></div>
<div style="left:614px;top:234px;width:1px;height:24px;background:#ffffff;"></div>
<div style="left:539px;top:257px;width:76px;height:1px;background:#ffffff;"></div>
<div style="left:615px;top:233px;width:816px;height:26px;background:#ffffff;"></div>
<div style="left:616px;top:235px;width:812px;height:21px;background:#fffff0;"></div>
<div style="left:615px;top:233px;width:815px;height:2px;background:#7a8a99;"></div>
<div style="left:615px;top:233px;width:1px;height:24px;background:#7a8a99;"></div>
<div style="left:616px;top:256px;width:813px;height:1px;background:#7a8a99;"></div>
<div style="left:1428px;top:237px;width:1px;height:20px;background:#7a8a99;"></div>
<div style="left:539px;top:258px;width:892px;height:9px;background:#f3f3f3;"></div>
<svg style="left:539px;top:258px" width="892" height="9" shape-rendering="crispEdges"><defs><pattern id="bh529" width="4" height="9" patternUnits="userSpaceOnUse"><rect x="0" y="4" width="1" height="1" fill="#6f6f6f"/><rect x="2" y="6" width="1" height="1" fill="#6f6f6f"/><rect x="3" y="3" width="1" height="1" fill="#ffffff"/><rect x="1" y="5" width="1" height="1" fill="#ffffff"/></pattern></defs><rect x="4" y="0" width="884" height="9" fill="url(#bh529)"/></svg>
<div style="left:539px;top:267px;width:892px;height:1136px;background:#eeeeee;"></div>
<div style="left:539px;top:267px;width:890px;height:2px;background:#7a8a99;"></div>
<div style="left:539px;top:267px;width:2px;height:1136px;background:#7a8a99;"></div>
<div style="left:1428px;top:267px;width:1px;height:1137px;background:#7a8a99;"></div>
<div style="left:1429px;top:268px;width:2px;height:1136px;background:#ffffff;"></div>
<div style="left:616px;top:269px;width:1px;height:20px;background:#ffffff;"></div>
<div style="left:616px;top:269px;width:74px;height:1px;background:#f8f8f8;"></div>
<div style="left:690px;top:269px;width:1px;height:20px;background:#7a8a99;"></div>
<div style="left:617px;top:288px;width:74px;height:1px;background:#7a8a99;"></div>
<div class="t" style="left:616px;top:274px;width:78px;text-align:center;font-size:12px;line-height:12px;color:#333333;letter-spacing:0.149px">gxx</div>
<div style="left:691px;top:269px;width:1px;height:20px;background:#ffffff;"></div>
<div style="left:691px;top:269px;width:74px;height:1px;background:#f8f8f8;"></div>
<div style="left:765px;top:269px;width:1px;height:20px;background:#7a8a99;"></div>
<div style="left:692px;top:288px;width:74px;height:1px;background:#7a8a99;"></div>
<div class="t" style="left:691px;top:274px;width:78px;text-align:center;font-size:12px;line-height:12px;color:#333333;letter-spacing:0.149px">gxy</div>
<div style="left:766px;top:269px;width:1px;height:20px;background:#ffffff;"></div>
<div style="left:766px;top:269px;width:74px;height:1px;background:#f8f8f8;"></div>
<div style="left:840px;top:269px;width:1px;height:20px;background:#7a8a99;"></div>
<div style="left:767px;top:288px;width:74px;height:1px;background:#7a8a99;"></div>
<div class="t" style="left:766px;top:274px;width:78px;text-align:center;font-size:12px;line-height:12px;color:#333333;letter-spacing:0.149px">gxz</div>
<div style="left:841px;top:269px;width:1px;height:20px;background:#ffffff;"></div>
<div style="left:841px;top:269px;width:74px;height:1px;background:#f8f8f8;"></div>
<div style="left:915px;top:269px;width:1px;height:20px;background:#7a8a99;"></div>
<div style="left:842px;top:288px;width:74px;height:1px;background:#7a8a99;"></div>
<div class="t" style="left:841px;top:274px;width:78px;text-align:center;font-size:12px;line-height:12px;color:#333333;letter-spacing:0.149px">gyy</div>
<div style="left:916px;top:269px;width:1px;height:20px;background:#ffffff;"></div>
<div style="left:916px;top:269px;width:74px;height:1px;background:#f8f8f8;"></div>
<div style="left:990px;top:269px;width:1px;height:20px;background:#7a8a99;"></div>
<div style="left:917px;top:288px;width:74px;height:1px;background:#7a8a99;"></div>
<div class="t" style="left:916px;top:274px;width:78px;text-align:center;font-size:12px;line-height:12px;color:#333333;letter-spacing:0.149px">gyz</div>
<div style="left:991px;top:269px;width:1px;height:20px;background:#ffffff;"></div>
<div style="left:991px;top:269px;width:74px;height:1px;background:#f8f8f8;"></div>
<div style="left:1065px;top:269px;width:1px;height:20px;background:#7a8a99;"></div>
<div style="left:992px;top:288px;width:74px;height:1px;background:#7a8a99;"></div>
<div class="t" style="left:991px;top:274px;width:78px;text-align:center;font-size:12px;line-height:12px;color:#333333;letter-spacing:0.149px">gzz</div>
<div style="left:616px;top:288px;width:1px;height:1px;background:#ffffff;"></div>
<div style="left:541px;top:289px;width:73px;height:1px;background:#ffffff;"></div>
<div style="left:541px;top:289px;width:1px;height:14px;background:#ffffff;"></div>
<div style="left:542px;top:290px;width:72px;height:13px;background:#c0c0c0;"></div>
<div style="left:541px;top:303px;width:75px;height:2px;background:#7a8a99;"></div>
<div style="left:614px;top:289px;width:2px;height:16px;background:#7a8a99;"></div>
<div class="t" style="left:541px;top:291px;width:76px;text-align:center;font-size:12px;line-height:12px;color:#333333;letter-spacing:0.366px">0</div>
<div style="left:541px;top:305px;width:73px;height:1px;background:#ffffff;"></div>
<div style="left:541px;top:305px;width:1px;height:14px;background:#ffffff;"></div>
<div style="left:542px;top:306px;width:72px;height:13px;background:#c0c0c0;"></div>
<div style="left:541px;top:319px;width:75px;height:2px;background:#7a8a99;"></div>
<div style="left:614px;top:305px;width:2px;height:16px;background:#7a8a99;"></div>
<div class="t" style="left:541px;top:307px;width:76px;text-align:center;font-size:12px;line-height:12px;color:#333333;letter-spacing:0.366px">1</div>
<div style="left:541px;top:321px;width:73px;height:1px;background:#ffffff;"></div>
<div style="left:541px;top:321px;width:1px;height:14px;background:#ffffff;"></div>
<div style="left:542px;top:322px;width:72px;height:13px;background:#c0c0c0;"></div>
<div style="left:541px;top:335px;width:75px;height:2px;background:#7a8a99;"></div>
<div style="left:614px;top:321px;width:2px;height:16px;background:#7a8a99;"></div>
<div class="t" style="left:541px;top:323px;width:76px;text-align:center;font-size:12px;line-height:12px;color:#333333;letter-spacing:0.366px">2</div>
<div style="left:541px;top:337px;width:73px;height:1px;background:#ffffff;"></div>
<div style="left:541px;top:337px;width:1px;height:14px;background:#ffffff;"></div>
<div style="left:542px;top:338px;width:72px;height:13px;background:#c0c0c0;"></div>
<div style="left:541px;top:351px;width:75px;height:2px;background:#7a8a99;"></div>
<div style="left:614px;top:337px;width:2px;height:16px;background:#7a8a99;"></div>
<div class="t" style="left:541px;top:339px;width:76px;text-align:center;font-size:12px;line-height:12px;color:#333333;letter-spacing:0.366px">3</div>
<div style="left:541px;top:353px;width:73px;height:1px;background:#ffffff;"></div>
<div style="left:541px;top:353px;width:1px;height:14px;background:#ffffff;"></div>
<div style="left:542px;top:354px;width:72px;height:13px;background:#c0c0c0;"></div>
<div style="left:541px;top:367px;width:75px;height:2px;background:#7a8a99;"></div>
<div style="left:614px;top:353px;width:2px;height:16px;background:#7a8a99;"></div>
<div class="t" style="left:541px;top:355px;width:76px;text-align:center;font-size:12px;line-height:12px;color:#333333;letter-spacing:0.366px">4</div>
<div style="left:541px;top:369px;width:73px;height:1px;background:#ffffff;"></div>
<div style="left:541px;top:369px;width:1px;height:14px;background:#ffffff;"></div>
<div style="left:542px;top:370px;width:72px;height:13px;background:#c0c0c0;"></div>
<div style="left:541px;top:383px;width:75px;height:2px;background:#7a8a99;"></div>
<div style="left:614px;top:369px;width:2px;height:16px;background:#7a8a99;"></div>
<div class="t" style="left:541px;top:371px;width:76px;text-align:center;font-size:12px;line-height:12px;color:#333333;letter-spacing:0.366px">5</div>
<div style="left:541px;top:385px;width:73px;height:1px;background:#ffffff;"></div>
<div style="left:541px;top:385px;width:1px;height:14px;background:#ffffff;"></div>
<div style="left:542px;top:386px;width:72px;height:13px;background:#c0c0c0;"></div>
<div style="left:541px;top:399px;width:75px;height:2px;background:#7a8a99;"></div>
<div style="left:614px;top:385px;width:2px;height:16px;background:#7a8a99;"></div>
<div class="t" style="left:541px;top:387px;width:76px;text-align:center;font-size:12px;line-height:12px;color:#333333;letter-spacing:0.366px">6</div>
<div style="left:541px;top:401px;width:73px;height:1px;background:#ffffff;"></div>
<div style="left:541px;top:401px;width:1px;height:14px;background:#ffffff;"></div>
<div style="left:542px;top:402px;width:72px;height:13px;background:#c0c0c0;"></div>
<div style="left:541px;top:415px;width:75px;height:2px;background:#7a8a99;"></div>
<div style="left:614px;top:401px;width:2px;height:16px;background:#7a8a99;"></div>
<div class="t" style="left:541px;top:403px;width:76px;text-align:center;font-size:12px;line-height:12px;color:#333333;letter-spacing:0.366px">7</div>
<div style="left:541px;top:417px;width:73px;height:1px;background:#ffffff;"></div>
<div style="left:541px;top:417px;width:1px;height:14px;background:#ffffff;"></div>
<div style="left:542px;top:418px;width:72px;height:13px;background:#c0c0c0;"></div>
<div style="left:541px;top:431px;width:75px;height:2px;background:#7a8a99;"></div>
<div style="left:614px;top:417px;width:2px;height:16px;background:#7a8a99;"></div>
<div class="t" style="left:541px;top:419px;width:76px;text-align:center;font-size:12px;line-height:12px;color:#333333;letter-spacing:0.366px">8</div>
<div style="left:541px;top:433px;width:73px;height:1px;background:#ffffff;"></div>
<div style="left:541px;top:433px;width:1px;height:14px;background:#ffffff;"></div>
<div style="left:542px;top:434px;width:72px;height:13px;background:#c0c0c0;"></div>
<div style="left:541px;top:447px;width:75px;height:2px;background:#7a8a99;"></div>
<div style="left:614px;top:433px;width:2px;height:16px;background:#7a8a99;"></div>
<div class="t" style="left:541px;top:435px;width:76px;text-align:center;font-size:12px;line-height:12px;color:#333333;letter-spacing:0.366px">9</div>
<div style="left:541px;top:449px;width:73px;height:1px;background:#ffffff;"></div>
<div style="left:541px;top:449px;width:1px;height:14px;background:#ffffff;"></div>
<div style="left:542px;top:450px;width:72px;height:13px;background:#c0c0c0;"></div>
<div style="left:541px;top:463px;width:75px;height:2px;background:#7a8a99;"></div>
<div style="left:614px;top:449px;width:2px;height:16px;background:#7a8a99;"></div>
<div class="t" style="left:541px;top:451px;width:76px;text-align:center;font-size:12px;line-height:12px;color:#333333;letter-spacing:0.366px">10</div>
<div style="left:541px;top:465px;width:73px;height:1px;background:#ffffff;"></div>
<div style="left:541px;top:465px;width:1px;height:14px;background:#ffffff;"></div>
<div style="left:542px;top:466px;width:72px;height:13px;background:#c0c0c0;"></div>
<div style="left:541px;top:479px;width:75px;height:2px;background:#7a8a99;"></div>
<div style="left:614px;top:465px;width:2px;height:16px;background:#7a8a99;"></div>
<div class="t" style="left:541px;top:467px;width:76px;text-align:center;font-size:12px;line-height:12px;color:#333333;letter-spacing:0.366px">11</div>
<div style="left:541px;top:481px;width:73px;height:1px;background:#ffffff;"></div>
<div style="left:541px;top:481px;width:1px;height:14px;background:#ffffff;"></div>
<div style="left:542px;top:482px;width:72px;height:13px;background:#c0c0c0;"></div>
<div style="left:541px;top:495px;width:75px;height:2px;background:#7a8a99;"></div>
<div style="left:614px;top:481px;width:2px;height:16px;background:#7a8a99;"></div>
<div class="t" style="left:541px;top:483px;width:76px;text-align:center;font-size:12px;line-height:12px;color:#333333;letter-spacing:0.366px">12</div>
<div style="left:541px;top:497px;width:73px;height:1px;background:#ffffff;"></div>
<div style="left:541px;top:497px;width:1px;height:14px;background:#ffffff;"></div>
<div style="left:542px;top:498px;width:72px;height:13px;background:#c0c0c0;"></div>
<div style="left:541px;top:511px;width:75px;height:2px;background:#7a8a99;"></div>
<div style="left:614px;top:497px;width:2px;height:16px;background:#7a8a99;"></div>
<div class="t" style="left:541px;top:499px;width:76px;text-align:center;font-size:12px;line-height:12px;color:#333333;letter-spacing:0.366px">13</div>
<div style="left:541px;top:513px;width:73px;height:1px;background:#ffffff;"></div>
<div style="left:541px;top:513px;width:1px;height:14px;background:#ffffff;"></div>
<div style="left:542px;top:514px;width:72px;height:13px;background:#c0c0c0;"></div>
<div style="left:541px;top:527px;width:75px;height:2px;background:#7a8a99;"></div>
<div style="left:614px;top:513px;width:2px;height:16px;background:#7a8a99;"></div>
<div class="t" style="left:541px;top:515px;width:76px;text-align:center;font-size:12px;line-height:12px;color:#333333;letter-spacing:0.366px">14</div>
<div style="left:541px;top:529px;width:73px;height:1px;background:#ffffff;"></div>
<div style="left:541px;top:529px;width:1px;height:14px;background:#ffffff;"></div>
<div style="left:542px;top:530px;width:72px;height:13px;background:#c0c0c0;"></div>
<div style="left:541px;top:543px;width:75px;height:2px;background:#7a8a99;"></div>
<div style="left:614px;top:529px;width:2px;height:16px;background:#7a8a99;"></div>
<div class="t" style="left:541px;top:531px;width:76px;text-align:center;font-size:12px;line-height:12px;color:#333333;letter-spacing:0.366px">15</div>
<div style="left:541px;top:545px;width:73px;height:1px;background:#ffffff;"></div>
<div style="left:541px;top:545px;width:1px;height:14px;background:#ffffff;"></div>
<div style="left:542px;top:546px;width:72px;height:13px;background:#c0c0c0;"></div>
<div style="left:541px;top:559px;width:75px;height:2px;background:#7a8a99;"></div>
<div style="left:614px;top:545px;width:2px;height:16px;background:#7a8a99;"></div>
<div class="t" style="left:541px;top:547px;width:76px;text-align:center;font-size:12px;line-height:12px;color:#333333;letter-spacing:0.366px">16</div>
<div style="left:541px;top:561px;width:73px;height:1px;background:#ffffff;"></div>
<div style="left:541px;top:561px;width:1px;height:14px;background:#ffffff;"></div>
<div style="left:542px;top:562px;width:72px;height:13px;background:#c0c0c0;"></div>
<div style="left:541px;top:575px;width:75px;height:2px;background:#7a8a99;"></div>
<div style="left:614px;top:561px;width:2px;height:16px;background:#7a8a99;"></div>
<div class="t" style="left:541px;top:563px;width:76px;text-align:center;font-size:12px;line-height:12px;color:#333333;letter-spacing:0.366px">17</div>
<div style="left:541px;top:577px;width:73px;height:1px;background:#ffffff;"></div>
<div style="left:541px;top:577px;width:1px;height:14px;background:#ffffff;"></div>
<div style="left:542px;top:578px;width:72px;height:13px;background:#c0c0c0;"></div>
<div style="left:541px;top:591px;width:75px;height:2px;background:#7a8a99;"></div>
<div style="left:614px;top:577px;width:2px;height:16px;background:#7a8a99;"></div>
<div class="t" style="left:541px;top:579px;width:76px;text-align:center;font-size:12px;line-height:12px;color:#333333;letter-spacing:0.366px">18</div>
<div style="left:541px;top:593px;width:73px;height:1px;background:#ffffff;"></div>
<div style="left:541px;top:593px;width:1px;height:14px;background:#ffffff;"></div>
<div style="left:542px;top:594px;width:72px;height:13px;background:#c0c0c0;"></div>
<div style="left:541px;top:607px;width:75px;height:2px;background:#7a8a99;"></div>
<div style="left:614px;top:593px;width:2px;height:16px;background:#7a8a99;"></div>
<div class="t" style="left:541px;top:595px;width:76px;text-align:center;font-size:12px;line-height:12px;color:#333333;letter-spacing:0.366px">19</div>
<div style="left:541px;top:609px;width:73px;height:1px;background:#ffffff;"></div>
<div style="left:541px;top:609px;width:1px;height:14px;background:#ffffff;"></div>
<div style="left:542px;top:610px;width:72px;height:13px;background:#c0c0c0;"></div>
<div style="left:541px;top:623px;width:75px;height:2px;background:#7a8a99;"></div>
<div style="left:614px;top:609px;width:2px;height:16px;background:#7a8a99;"></div>
<div class="t" style="left:541px;top:611px;width:76px;text-align:center;font-size:12px;line-height:12px;color:#333333;letter-spacing:0.366px">20</div>
<div style="left:541px;top:625px;width:73px;height:1px;background:#ffffff;"></div>
<div style="left:541px;top:625px;width:1px;height:14px;background:#ffffff;"></div>
<div style="left:542px;top:626px;width:72px;height:13px;background:#c0c0c0;"></div>
<div style="left:541px;top:639px;width:75px;height:2px;background:#7a8a99;"></div>
<div style="left:614px;top:625px;width:2px;height:16px;background:#7a8a99;"></div>
<div class="t" style="left:541px;top:627px;width:76px;text-align:center;font-size:12px;line-height:12px;color:#333333;letter-spacing:0.366px">21</div>
<div style="left:541px;top:641px;width:73px;height:1px;background:#ffffff;"></div>
<div style="left:541px;top:641px;width:1px;height:14px;background:#ffffff;"></div>
<div style="left:542px;top:642px;width:72px;height:13px;background:#c0c0c0;"></div>
<div style="left:541px;top:655px;width:75px;height:2px;background:#7a8a99;"></div>
<div style="left:614px;top:641px;width:2px;height:16px;background:#7a8a99;"></div>
<div class="t" style="left:541px;top:643px;width:76px;text-align:center;font-size:12px;line-height:12px;color:#333333;letter-spacing:0.366px">22</div>
<div style="left:541px;top:657px;width:73px;height:1px;background:#ffffff;"></div>
<div style="left:541px;top:657px;width:1px;height:14px;background:#ffffff;"></div>
<div style="left:542px;top:658px;width:72px;height:13px;background:#c0c0c0;"></div>
<div style="left:541px;top:671px;width:75px;height:2px;background:#7a8a99;"></div>
<div style="left:614px;top:657px;width:2px;height:16px;background:#7a8a99;"></div>
<div class="t" style="left:541px;top:659px;width:76px;text-align:center;font-size:12px;line-height:12px;color:#333333;letter-spacing:0.366px">23</div>
<div style="left:541px;top:673px;width:73px;height:1px;background:#ffffff;"></div>
<div style="left:541px;top:673px;width:1px;height:14px;background:#ffffff;"></div>
<div style="left:542px;top:674px;width:72px;height:13px;background:#c0c0c0;"></div>
<div style="left:541px;top:687px;width:75px;height:2px;background:#7a8a99;"></div>
<div style="left:614px;top:673px;width:2px;height:16px;background:#7a8a99;"></div>
<div class="t" style="left:541px;top:675px;width:76px;text-align:center;font-size:12px;line-height:12px;color:#333333;letter-spacing:0.366px">24</div>
<div style="left:541px;top:689px;width:73px;height:1px;background:#ffffff;"></div>
<div style="left:541px;top:689px;width:1px;height:14px;background:#ffffff;"></div>
<div style="left:542px;top:690px;width:72px;height:13px;background:#c0c0c0;"></div>
<div style="left:541px;top:703px;width:75px;height:2px;background:#7a8a99;"></div>
<div style="left:614px;top:689px;width:2px;height:16px;background:#7a8a99;"></div>
<div class="t" style="left:541px;top:691px;width:76px;text-align:center;font-size:12px;line-height:12px;color:#333333;letter-spacing:0.366px">25</div>
<div style="left:541px;top:705px;width:73px;height:1px;background:#ffffff;"></div>
<div style="left:541px;top:705px;width:1px;height:14px;background:#ffffff;"></div>
<div style="left:542px;top:706px;width:72px;height:13px;background:#c0c0c0;"></div>
<div style="left:541px;top:719px;width:75px;height:2px;background:#7a8a99;"></div>
<div style="left:614px;top:705px;width:2px;height:16px;background:#7a8a99;"></div>
<div class="t" style="left:541px;top:707px;width:76px;text-align:center;font-size:12px;line-height:12px;color:#333333;letter-spacing:0.366px">26</div>
<div style="left:541px;top:721px;width:73px;height:1px;background:#ffffff;"></div>
<div style="left:541px;top:721px;width:1px;height:14px;background:#ffffff;"></div>
<div style="left:542px;top:722px;width:72px;height:13px;background:#c0c0c0;"></div>
<div style="left:541px;top:735px;width:75px;height:2px;background:#7a8a99;"></div>
<div style="left:614px;top:721px;width:2px;height:16px;background:#7a8a99;"></div>
<div class="t" style="left:541px;top:723px;width:76px;text-align:center;font-size:12px;line-height:12px;color:#333333;letter-spacing:0.366px">27</div>
<div style="left:541px;top:737px;width:73px;height:1px;background:#ffffff;"></div>
<div style="left:541px;top:737px;width:1px;height:14px;background:#ffffff;"></div>
<div style="left:542px;top:738px;width:72px;height:13px;background:#c0c0c0;"></div>
<div style="left:541px;top:751px;width:75px;height:2px;background:#7a8a99;"></div>
<div style="left:614px;top:737px;width:2px;height:16px;background:#7a8a99;"></div>
<div class="t" style="left:541px;top:739px;width:76px;text-align:center;font-size:12px;line-height:12px;color:#333333;letter-spacing:0.366px">28</div>
<div style="left:541px;top:753px;width:73px;height:1px;background:#ffffff;"></div>
<div style="left:541px;top:753px;width:1px;height:14px;background:#ffffff;"></div>
<div style="left:542px;top:754px;width:72px;height:13px;background:#c0c0c0;"></div>
<div style="left:541px;top:767px;width:75px;height:2px;background:#7a8a99;"></div>
<div style="left:614px;top:753px;width:2px;height:16px;background:#7a8a99;"></div>
<div class="t" style="left:541px;top:755px;width:76px;text-align:center;font-size:12px;line-height:12px;color:#333333;letter-spacing:0.366px">29</div>
<div style="left:541px;top:769px;width:73px;height:1px;background:#ffffff;"></div>
<div style="left:541px;top:769px;width:1px;height:14px;background:#ffffff;"></div>
<div style="left:542px;top:770px;width:72px;height:13px;background:#c0c0c0;"></div>
<div style="left:541px;top:783px;width:75px;height:2px;background:#7a8a99;"></div>
<div style="left:614px;top:769px;width:2px;height:16px;background:#7a8a99;"></div>
<div class="t" style="left:541px;top:771px;width:76px;text-align:center;font-size:12px;line-height:12px;color:#333333;letter-spacing:0.366px">30</div>
<div style="left:541px;top:785px;width:73px;height:1px;background:#ffffff;"></div>
<div style="left:541px;top:785px;width:1px;height:14px;background:#ffffff;"></div>
<div style="left:542px;top:786px;width:72px;height:13px;background:#c0c0c0;"></div>
<div style="left:541px;top:799px;width:75px;height:2px;background:#7a8a99;"></div>
<div style="left:614px;top:785px;width:2px;height:16px;background:#7a8a99;"></div>
<div class="t" style="left:541px;top:787px;width:76px;text-align:center;font-size:12px;line-height:12px;color:#333333;letter-spacing:0.366px">31</div>
<div style="left:541px;top:801px;width:73px;height:1px;background:#ffffff;"></div>
<div style="left:541px;top:801px;width:1px;height:14px;background:#ffffff;"></div>
<div style="left:542px;top:802px;width:72px;height:13px;background:#c0c0c0;"></div>
<div style="left:541px;top:815px;width:75px;height:2px;background:#7a8a99;"></div>
<div style="left:614px;top:801px;width:2px;height:16px;background:#7a8a99;"></div>
<div class="t" style="left:541px;top:803px;width:76px;text-align:center;font-size:12px;line-height:12px;color:#333333;letter-spacing:0.366px">32</div>
<div style="left:541px;top:817px;width:73px;height:1px;background:#ffffff;"></div>
<div style="left:541px;top:817px;width:1px;height:14px;background:#ffffff;"></div>
<div style="left:542px;top:818px;width:72px;height:13px;background:#c0c0c0;"></div>
<div style="left:541px;top:831px;width:75px;height:2px;background:#7a8a99;"></div>
<div style="left:614px;top:817px;width:2px;height:16px;background:#7a8a99;"></div>
<div class="t" style="left:541px;top:819px;width:76px;text-align:center;font-size:12px;line-height:12px;color:#333333;letter-spacing:0.366px">33</div>
<div style="left:541px;top:833px;width:73px;height:1px;background:#ffffff;"></div>
<div style="left:541px;top:833px;width:1px;height:14px;background:#ffffff;"></div>
<div style="left:542px;top:834px;width:72px;height:13px;background:#c0c0c0;"></div>
<div style="left:541px;top:847px;width:75px;height:2px;background:#7a8a99;"></div>
<div style="left:614px;top:833px;width:2px;height:16px;background:#7a8a99;"></div>
<div class="t" style="left:541px;top:835px;width:76px;text-align:center;font-size:12px;line-height:12px;color:#333333;letter-spacing:0.366px">34</div>
<div style="left:541px;top:849px;width:73px;height:1px;background:#ffffff;"></div>
<div style="left:541px;top:849px;width:1px;height:14px;background:#ffffff;"></div>
<div style="left:542px;top:850px;width:72px;height:13px;background:#c0c0c0;"></div>
<div style="left:541px;top:863px;width:75px;height:2px;background:#7a8a99;"></div>
<div style="left:614px;top:849px;width:2px;height:16px;background:#7a8a99;"></div>
<div class="t" style="left:541px;top:851px;width:76px;text-align:center;font-size:12px;line-height:12px;color:#333333;letter-spacing:0.366px">35</div>
<div style="left:541px;top:865px;width:73px;height:1px;background:#ffffff;"></div>
<div style="left:541px;top:865px;width:1px;height:14px;background:#ffffff;"></div>
<div style="left:542px;top:866px;width:72px;height:13px;background:#c0c0c0;"></div>
<div style="left:541px;top:879px;width:75px;height:2px;background:#7a8a99;"></div>
<div style="left:614px;top:865px;width:2px;height:16px;background:#7a8a99;"></div>
<div class="t" style="left:541px;top:867px;width:76px;text-align:center;font-size:12px;line-height:12px;color:#333333;letter-spacing:0.366px">36</div>
<div style="left:541px;top:881px;width:73px;height:1px;background:#ffffff;"></div>
<div style="left:541px;top:881px;width:1px;height:14px;background:#ffffff;"></div>
<div style="left:542px;top:882px;width:72px;height:13px;background:#c0c0c0;"></div>
<div style="left:541px;top:895px;width:75px;height:2px;background:#7a8a99;"></div>
<div style="left:614px;top:881px;width:2px;height:16px;background:#7a8a99;"></div>
<div class="t" style="left:541px;top:883px;width:76px;text-align:center;font-size:12px;line-height:12px;color:#333333;letter-spacing:0.366px">37</div>
<div style="left:541px;top:897px;width:73px;height:1px;background:#ffffff;"></div>
<div style="left:541px;top:897px;width:1px;height:14px;background:#ffffff;"></div>
<div style="left:542px;top:898px;width:72px;height:13px;background:#c0c0c0;"></div>
<div style="left:541px;top:911px;width:75px;height:2px;background:#7a8a99;"></div>
<div style="left:614px;top:897px;width:2px;height:16px;background:#7a8a99;"></div>
<div class="t" style="left:541px;top:899px;width:76px;text-align:center;font-size:12px;line-height:12px;color:#333333;letter-spacing:0.366px">38</div>
<div style="left:541px;top:913px;width:73px;height:1px;background:#ffffff;"></div>
<div style="left:541px;top:913px;width:1px;height:14px;background:#ffffff;"></div>
<div style="left:542px;top:914px;width:72px;height:13px;background:#c0c0c0;"></div>
<div style="left:541px;top:927px;width:75px;height:2px;background:#7a8a99;"></div>
<div style="left:614px;top:913px;width:2px;height:16px;background:#7a8a99;"></div>
<div class="t" style="left:541px;top:915px;width:76px;text-align:center;font-size:12px;line-height:12px;color:#333333;letter-spacing:0.366px">39</div>
<div style="left:541px;top:929px;width:73px;height:1px;background:#ffffff;"></div>
<div style="left:541px;top:929px;width:1px;height:14px;background:#ffffff;"></div>
<div style="left:542px;top:930px;width:72px;height:13px;background:#c0c0c0;"></div>
<div style="left:541px;top:943px;width:75px;height:2px;background:#7a8a99;"></div>
<div style="left:614px;top:929px;width:2px;height:16px;background:#7a8a99;"></div>
<div class="t" style="left:541px;top:931px;width:76px;text-align:center;font-size:12px;line-height:12px;color:#333333;letter-spacing:0.366px">40</div>
<div style="left:541px;top:945px;width:73px;height:1px;background:#ffffff;"></div>
<div style="left:541px;top:945px;width:1px;height:14px;background:#ffffff;"></div>
<div style="left:542px;top:946px;width:72px;height:13px;background:#c0c0c0;"></div>
<div style="left:541px;top:959px;width:75px;height:2px;background:#7a8a99;"></div>
<div style="left:614px;top:945px;width:2px;height:16px;background:#7a8a99;"></div>
<div class="t" style="left:541px;top:947px;width:76px;text-align:center;font-size:12px;line-height:12px;color:#333333;letter-spacing:0.366px">41</div>
<div style="left:541px;top:961px;width:73px;height:1px;background:#ffffff;"></div>
<div style="left:541px;top:961px;width:1px;height:14px;background:#ffffff;"></div>
<div style="left:542px;top:962px;width:72px;height:13px;background:#c0c0c0;"></div>
<div style="left:541px;top:975px;width:75px;height:2px;background:#7a8a99;"></div>
<div style="left:614px;top:961px;width:2px;height:16px;background:#7a8a99;"></div>
<div class="t" style="left:541px;top:963px;width:76px;text-align:center;font-size:12px;line-height:12px;color:#333333;letter-spacing:0.366px">42</div>
<div style="left:541px;top:977px;width:73px;height:1px;background:#ffffff;"></div>
<div style="left:541px;top:977px;width:1px;height:14px;background:#ffffff;"></div>
<div style="left:542px;top:978px;width:72px;height:13px;background:#c0c0c0;"></div>
<div style="left:541px;top:991px;width:75px;height:2px;background:#7a8a99;"></div>
<div style="left:614px;top:977px;width:2px;height:16px;background:#7a8a99;"></div>
<div class="t" style="left:541px;top:979px;width:76px;text-align:center;font-size:12px;line-height:12px;color:#333333;letter-spacing:0.366px">43</div>
<div style="left:541px;top:993px;width:73px;height:1px;background:#ffffff;"></div>
<div style="left:541px;top:993px;width:1px;height:14px;background:#ffffff;"></div>
<div style="left:542px;top:994px;width:72px;height:13px;background:#c0c0c0;"></div>
<div style="left:541px;top:1007px;width:75px;height:2px;background:#7a8a99;"></div>
<div style="left:614px;top:993px;width:2px;height:16px;background:#7a8a99;"></div>
<div class="t" style="left:541px;top:995px;width:76px;text-align:center;font-size:12px;line-height:12px;color:#333333;letter-spacing:0.366px">44</div>
<div style="left:541px;top:1009px;width:73px;height:1px;background:#ffffff;"></div>
<div style="left:541px;top:1009px;width:1px;height:14px;background:#ffffff;"></div>
<div style="left:542px;top:1010px;width:72px;height:13px;background:#c0c0c0;"></div>
<div style="left:541px;top:1023px;width:75px;height:2px;background:#7a8a99;"></div>
<div style="left:614px;top:1009px;width:2px;height:16px;background:#7a8a99;"></div>
<div class="t" style="left:541px;top:1011px;width:76px;text-align:center;font-size:12px;line-height:12px;color:#333333;letter-spacing:0.366px">45</div>
<div style="left:541px;top:1025px;width:73px;height:1px;background:#ffffff;"></div>
<div style="left:541px;top:1025px;width:1px;height:14px;background:#ffffff;"></div>
<div style="left:542px;top:1026px;width:72px;height:13px;background:#c0c0c0;"></div>
<div style="left:541px;top:1039px;width:75px;height:2px;background:#7a8a99;"></div>
<div style="left:614px;top:1025px;width:2px;height:16px;background:#7a8a99;"></div>
<div class="t" style="left:541px;top:1027px;width:76px;text-align:center;font-size:12px;line-height:12px;color:#333333;letter-spacing:0.366px">46</div>
<div style="left:541px;top:1041px;width:73px;height:1px;background:#ffffff;"></div>
<div style="left:541px;top:1041px;width:1px;height:14px;background:#ffffff;"></div>
<div style="left:542px;top:1042px;width:72px;height:13px;background:#c0c0c0;"></div>
<div style="left:541px;top:1055px;width:75px;height:2px;background:#7a8a99;"></div>
<div style="left:614px;top:1041px;width:2px;height:16px;background:#7a8a99;"></div>
<div class="t" style="left:541px;top:1043px;width:76px;text-align:center;font-size:12px;line-height:12px;color:#333333;letter-spacing:0.366px">47</div>
<div style="left:541px;top:1057px;width:73px;height:1px;background:#ffffff;"></div>
<div style="left:541px;top:1057px;width:1px;height:14px;background:#ffffff;"></div>
<div style="left:542px;top:1058px;width:72px;height:13px;background:#c0c0c0;"></div>
<div style="left:541px;top:1071px;width:75px;height:2px;background:#7a8a99;"></div>
<div style="left:614px;top:1057px;width:2px;height:16px;background:#7a8a99;"></div>
<div class="t" style="left:541px;top:1059px;width:76px;text-align:center;font-size:12px;line-height:12px;color:#333333;letter-spacing:0.366px">48</div>
<div style="left:541px;top:1073px;width:73px;height:1px;background:#ffffff;"></div>
<div style="left:541px;top:1073px;width:1px;height:14px;background:#ffffff;"></div>
<div style="left:542px;top:1074px;width:72px;height:13px;background:#c0c0c0;"></div>
<div style="left:541px;top:1087px;width:75px;height:2px;background:#7a8a99;"></div>
<div style="left:614px;top:1073px;width:2px;height:16px;background:#7a8a99;"></div>
<div class="t" style="left:541px;top:1075px;width:76px;text-align:center;font-size:12px;line-height:12px;color:#333333;letter-spacing:0.366px">49</div>
<div style="left:616px;top:289px;width:450px;height:800px;background:#ffffff;"></div>
<div style="left:616px;top:304px;width:450px;height:1px;background:#808080;"></div>
<div style="left:616px;top:320px;width:450px;height:1px;background:#808080;"></div>
<div style="left:616px;top:336px;width:450px;height:1px;background:#808080;"></div>
<div style="left:616px;top:352px;width:450px;height:1px;background:#808080;"></div>
<div style="left:616px;top:368px;width:450px;height:1px;background:#808080;"></div>
<div style="left:616px;top:384px;width:450px;height:1px;background:#808080;"></div>
<div style="left:616px;top:400px;width:450px;height:1px;background:#808080;"></div>
<div style="left:616px;top:416px;width:450px;height:1px;background:#808080;"></div>
<div style="left:616px;top:432px;width:450px;height:1px;background:#808080;"></div>
<div style="left:616px;top:448px;width:450px;height:1px;background:#808080;"></div>
<div style="left:616px;top:464px;width:450px;height:1px;background:#808080;"></div>
<div style="left:616px;top:480px;width:450px;height:1px;background:#808080;"></div>
<div style="left:616px;top:496px;width:450px;height:1px;background:#808080;"></div>
<div style="left:616px;top:512px;width:450px;height:1px;background:#808080;"></div>
<div style="left:616px;top:528px;width:450px;height:1px;background:#808080;"></div>
<div style="left:616px;top:544px;width:450px;height:1px;background:#808080;"></div>
<div style="left:616px;top:560px;width:450px;height:1px;background:#808080;"></div>
<div style="left:616px;top:576px;width:450px;height:1px;background:#808080;"></div>
<div style="left:616px;top:592px;width:450px;height:1px;background:#808080;"></div>
<div style="left:616px;top:608px;width:450px;height:1px;background:#808080;"></div>
<div style="left:616px;top:624px;width:450px;height:1px;background:#808080;"></div>
<div style="left:616px;top:640px;width:450px;height:1px;background:#808080;"></div>
<div style="left:616px;top:656px;width:450px;height:1px;background:#808080;"></div>
<div style="left:616px;top:672px;width:450px;height:1px;background:#808080;"></div>
<div style="left:616px;top:688px;width:450px;height:1px;background:#808080;"></div>
<div style="left:616px;top:704px;width:450px;height:1px;background:#808080;"></div>
<div style="left:616px;top:720px;width:450px;height:1px;background:#808080;"></div>
<div style="left:616px;top:736px;width:450px;height:1px;background:#808080;"></div>
<div style="left:616px;top:752px;width:450px;height:1px;background:#808080;"></div>
<div style="left:616px;top:768px;width:450px;height:1px;background:#808080;"></div>
<div style="left:616px;top:784px;width:450px;height:1px;background:#808080;"></div>
<div style="left:616px;top:800px;width:450px;height:1px;background:#808080;"></div>
<div style="left:616px;top:816px;width:450px;height:1px;background:#808080;"></div>
<div style="left:616px;top:832px;width:450px;height:1px;background:#808080;"></div>
<div style="left:616px;top:848px;width:450px;height:1px;background:#808080;"></div>
<div style="left:616px;top:864px;width:450px;height:1px;background:#808080;"></div>
<div style="left:616px;top:880px;width:450px;height:1px;background:#808080;"></div>
<div style="left:616px;top:896px;width:450px;height:1px;background:#808080;"></div>
<div style="left:616px;top:912px;width:450px;height:1px;background:#808080;"></div>
<div style="left:616px;top:928px;width:450px;height:1px;background:#808080;"></div>
<div style="left:616px;top:944px;width:450px;height:1px;background:#808080;"></div>
<div style="left:616px;top:960px;width:450px;height:1px;background:#808080;"></div>
<div style="left:616px;top:976px;width:450px;height:1px;background:#808080;"></div>
<div style="left:616px;top:992px;width:450px;height:1px;background:#808080;"></div>
<div style="left:616px;top:1008px;width:450px;height:1px;background:#808080;"></div>
<div style="left:616px;top:1024px;width:450px;height:1px;background:#808080;"></div>
<div style="left:616px;top:1040px;width:450px;height:1px;background:#808080;"></div>
<div style="left:616px;top:1056px;width:450px;height:1px;background:#808080;"></div>
<div style="left:616px;top:1072px;width:450px;height:1px;background:#808080;"></div>
<div style="left:616px;top:1088px;width:450px;height:1px;background:#808080;"></div>
<div style="left:690px;top:289px;width:1px;height:800px;background:#808080;"></div>
<div style="left:765px;top:289px;width:1px;height:800px;background:#808080;"></div>
<div style="left:840px;top:289px;width:1px;height:800px;background:#808080;"></div>
<div style="left:915px;top:289px;width:1px;height:800px;background:#808080;"></div>
<div style="left:990px;top:289px;width:1px;height:800px;background:#808080;"></div>
<div style="left:1065px;top:289px;width:1px;height:800px;background:#808080;"></div>
<div class="t" style="left:617.5px;top:291px;font-size:12px;line-height:12px;color:#333333;letter-spacing:0.201px;">0.93</div>
<div class="t" style="left:692.5px;top:291px;font-size:12px;line-height:12px;color:#333333;letter-spacing:0.201px;">0.92</div>
<div class="t" style="left:767.5px;top:291px;font-size:12px;line-height:12px;color:#333333;letter-spacing:0.201px;">0.21</div>
<div class="t" style="left:842.5px;top:291px;font-size:12px;line-height:12px;color:#333333;letter-spacing:0.201px;">0.35</div>
<div class="t" style="left:917.5px;top:291px;font-size:12px;line-height:12px;color:#333333;letter-spacing:0.201px;">0.49</div>
<div class="t" style="left:992.5px;top:291px;font-size:12px;line-height:12px;color:#333333;letter-spacing:0.201px;">0.86</div>
<div class="t" style="left:617.5px;top:307px;font-size:12px;line-height:12px;color:#333333;letter-spacing:0.201px;">0.63</div>
<div class="t" style="left:692.5px;top:307px;font-size:12px;line-height:12px;color:#333333;letter-spacing:0.201px;">0.26</div>
<div class="t" style="left:767.5px;top:307px;font-size:12px;line-height:12px;color:#333333;letter-spacing:0.201px;">0.36</div>
<div class="t" style="left:842.5px;top:307px;font-size:12px;line-height:12px;color:#333333;letter-spacing:0.201px;">0.26</div>
<div class="t" style="left:917.5px;top:307px;font-size:12px;line-height:12px;color:#333333;letter-spacing:0.201px;">0.72</div>
<div class="t" style="left:992.5px;top:307px;font-size:12px;line-height:12px;color:#333333;letter-spacing:0.146px;">0.4</div>
<div class="t" style="left:617.5px;top:323px;font-size:12px;line-height:12px;color:#333333;letter-spacing:0.201px;">0.82</div>
<div class="t" style="left:692.5px;top:323px;font-size:12px;line-height:12px;color:#333333;letter-spacing:0.201px;">0.23</div>
<div class="t" style="left:767.5px;top:323px;font-size:12px;line-height:12px;color:#333333;letter-spacing:0.201px;">0.35</div>
<div class="t" style="left:842.5px;top:323px;font-size:12px;line-height:12px;color:#333333;letter-spacing:0.146px;">0.3</div>
<div class="t" style="left:917.5px;top:323px;font-size:12px;line-height:12px;color:#333333;letter-spacing:0.201px;">0.67</div>
<div class="t" style="left:992.5px;top:323px;font-size:12px;line-height:12px;color:#333333;letter-spacing:0.201px;">0.62</div>
<div class="t" style="left:617.5px;top:339px;font-size:12px;line-height:12px;color:#333333;letter-spacing:0.201px;">0.69</div>
<div class="t" style="left:692.5px;top:339px;font-size:12px;line-height:12px;color:#333333;letter-spacing:0.201px;">0.56</div>
<div class="t" style="left:767.5px;top:339px;font-size:12px;line-height:12px;color:#333333;letter-spacing:0.201px;">0.42</div>
<div class="t" style="left:842.5px;top:339px;font-size:12px;line-height:12px;color:#333333;letter-spacing:0.201px;">0.67</div>
<div class="t" style="left:917.5px;top:339px;font-size:12px;line-height:12px;color:#333333;letter-spacing:0.201px;">0.11</div>
<div class="t" style="left:992.5px;top:339px;font-size:12px;line-height:12px;color:#333333;letter-spacing:0.201px;">0.93</div>
<div class="t" style="left:617.5px;top:355px;font-size:12px;line-height:12px;color:#333333;letter-spacing:0.201px;">0.84</div>
<div class="t" style="left:692.5px;top:355px;font-size:12px;line-height:12px;color:#333333;letter-spacing:0.201px;">0.24</div>
<div class="t" style="left:767.5px;top:355px;font-size:12px;line-height:12px;color:#333333;letter-spacing:0.146px;">0.7</div>
<div class="t" style="left:842.5px;top:355px;font-size:12px;line-height:12px;color:#333333;letter-spacing:0.201px;">0.37</div>
<div class="t" style="left:917.5px;top:355px;font-size:12px;line-height:12px;color:#333333;letter-spacing:0.201px;">0.15</div>
<div class="t" style="left:992.5px;top:355px;font-size:12px;line-height:12px;color:#333333;letter-spacing:0.201px;">0.98</div>
<div class="t" style="left:617.5px;top:371px;font-size:12px;line-height:12px;color:#333333;letter-spacing:0.201px;">0.56</div>
<div class="t" style="left:692.5px;top:371px;font-size:12px;line-height:12px;color:#333333;letter-spacing:0.146px;">0.7</div>
<div class="t" style="left:767.5px;top:371px;font-size:12px;line-height:12px;color:#333333;letter-spacing:0.201px;">0.81</div>
<div class="t" style="left:842.5px;top:371px;font-size:12px;line-height:12px;color:#333333;letter-spacing:0.201px;">0.73</div>
<div class="t" style="left:917.5px;top:371px;font-size:12px;line-height:12px;color:#333333;letter-spacing:0.201px;">0.96</div>
<div class="t" style="left:992.5px;top:371px;font-size:12px;line-height:12px;color:#333333;letter-spacing:0.201px;">0.62</div>
<div class="t" style="left:617.5px;top:387px;font-size:12px;line-height:12px;color:#333333;letter-spacing:0.201px;">0.36</div>
<div class="t" style="left:692.5px;top:387px;font-size:12px;line-height:12px;color:#333333;letter-spacing:0.201px;">0.29</div>
<div class="t" style="left:767.5px;top:387px;font-size:12px;line-height:12px;color:#333333;letter-spacing:0.201px;">0.57</div>
<div class="t" style="left:842.5px;top:387px;font-size:12px;line-height:12px;color:#333333;letter-spacing:0.201px;">0.05</div>
<div class="t" style="left:917.5px;top:387px;font-size:12px;line-height:12px;color:#333333;letter-spacing:0.201px;">0.13</div>
<div class="t" style="left:992.5px;top:387px;font-size:12px;line-height:12px;color:#333333;letter-spacing:0.201px;">0.46</div>
<div class="t" style="left:617.5px;top:403px;font-size:12px;line-height:12px;color:#333333;letter-spacing:0.201px;">0.14</div>
<div class="t" style="left:692.5px;top:403px;font-size:12px;line-height:12px;color:#333333;letter-spacing:0.201px;">0.64</div>
<div class="t" style="left:767.5px;top:403px;font-size:12px;line-height:12px;color:#333333;letter-spacing:0.146px;">0.5</div>
<div class="t" style="left:842.5px;top:403px;font-size:12px;line-height:12px;color:#333333;letter-spacing:0.201px;">0.67</div>
<div class="t" style="left:917.5px;top:403px;font-size:12px;line-height:12px;color:#333333;letter-spacing:0.201px;">0.43</div>
<div class="t" style="left:992.5px;top:403px;font-size:12px;line-height:12px;color:#333333;letter-spacing:0.201px;">0.34</div>
<div class="t" style="left:617.5px;top:419px;font-size:12px;line-height:12px;color:#333333;letter-spacing:0.201px;">0.88</div>
<div class="t" style="left:692.5px;top:419px;font-size:12px;line-height:12px;color:#333333;letter-spacing:0.201px;">0.51</div>
<div class="t" style="left:767.5px;top:419px;font-size:12px;line-height:12px;color:#333333;letter-spacing:0.201px;">0.99</div>
<div class="t" style="left:842.5px;top:419px;font-size:12px;line-height:12px;color:#333333;letter-spacing:0.201px;">0.84</div>
<div class="t" style="left:917.5px;top:419px;font-size:12px;line-height:12px;color:#333333;letter-spacing:0.201px;">0.54</div>
<div class="t" style="left:992.5px;top:419px;font-size:12px;line-height:12px;color:#333333;letter-spacing:0.201px;">0.03</div>
<div class="t" style="left:617.5px;top:435px;font-size:12px;line-height:12px;color:#333333;letter-spacing:0.201px;">0.39</div>
<div class="t" style="left:692.5px;top:435px;font-size:12px;line-height:12px;color:#333333;letter-spacing:0.201px;">0.86</div>
<div class="t" style="left:767.5px;top:435px;font-size:12px;line-height:12px;color:#333333;letter-spacing:0.201px;">0.39</div>
<div class="t" style="left:842.5px;top:435px;font-size:12px;line-height:12px;color:#333333;letter-spacing:0.201px;">0.12</div>
<div class="t" style="left:917.5px;top:435px;font-size:12px;line-height:12px;color:#333333;letter-spacing:0.201px;">0.94</div>
<div class="t" style="left:992.5px;top:435px;font-size:12px;line-height:12px;color:#333333;letter-spacing:0.201px;">0.26</div>
<div class="t" style="left:617.5px;top:451px;font-size:12px;line-height:12px;color:#333333;letter-spacing:0.201px;">0.67</div>
<div class="t" style="left:692.5px;top:451px;font-size:12px;line-height:12px;color:#333333;letter-spacing:0.201px;">0.02</div>
<div class="t" style="left:767.5px;top:451px;font-size:12px;line-height:12px;color:#333333;letter-spacing:0.201px;">0.92</div>
<div class="t" style="left:842.5px;top:451px;font-size:12px;line-height:12px;color:#333333;letter-spacing:0.201px;">0.01</div>
<div class="t" style="left:917.5px;top:451px;font-size:12px;line-height:12px;color:#333333;letter-spacing:0.201px;">0.17</div>
<div class="t" style="left:992.5px;top:451px;font-size:12px;line-height:12px;color:#333333;letter-spacing:0.201px;">0.97</div>
<div class="t" style="left:617.5px;top:467px;font-size:12px;line-height:12px;color:#333333;letter-spacing:0.201px;">0.86</div>
<div class="t" style="left:692.5px;top:467px;font-size:12px;line-height:12px;color:#333333;letter-spacing:0.201px;">0.89</div>
<div class="t" style="left:767.5px;top:467px;font-size:12px;line-height:12px;color:#333333;letter-spacing:0.201px;">0.19</div>
<div class="t" style="left:842.5px;top:467px;font-size:12px;line-height:12px;color:#333333;letter-spacing:0.201px;">0.41</div>
<div class="t" style="left:917.5px;top:467px;font-size:12px;line-height:12px;color:#333333;letter-spacing:0.201px;">0.44</div>
<div class="t" style="left:992.5px;top:467px;font-size:12px;line-height:12px;color:#333333;letter-spacing:0.201px;">0.65</div>
<div class="t" style="left:617.5px;top:483px;font-size:12px;line-height:12px;color:#333333;letter-spacing:0.201px;">0.97</div>
<div class="t" style="left:692.5px;top:483px;font-size:12px;line-height:12px;color:#333333;letter-spacing:0.201px;">0.75</div>
<div class="t" style="left:767.5px;top:483px;font-size:12px;line-height:12px;color:#333333;letter-spacing:0.201px;">0.27</div>
<div class="t" style="left:842.5px;top:483px;font-size:12px;line-height:12px;color:#333333;letter-spacing:0.201px;">0.71</div>
<div class="t" style="left:917.5px;top:483px;font-size:12px;line-height:12px;color:#333333;letter-spacing:0.201px;">0.09</div>
<div class="t" style="left:992.5px;top:483px;font-size:12px;line-height:12px;color:#333333;letter-spacing:0.201px;">0.81</div>
<div class="t" style="left:617.5px;top:499px;font-size:12px;line-height:12px;color:#333333;letter-spacing:0.201px;">0.86</div>
<div class="t" style="left:692.5px;top:499px;font-size:12px;line-height:12px;color:#333333;letter-spacing:0.201px;">0.83</div>
<div class="t" style="left:767.5px;top:499px;font-size:12px;line-height:12px;color:#333333;letter-spacing:0.201px;">0.24</div>
<div class="t" style="left:842.5px;top:499px;font-size:12px;line-height:12px;color:#333333;letter-spacing:0.201px;">0.65</div>
<div class="t" style="left:917.5px;top:499px;font-size:12px;line-height:12px;color:#333333;letter-spacing:0.201px;">0.19</div>
<div class="t" style="left:992.5px;top:499px;font-size:12px;line-height:12px;color:#333333;letter-spacing:0.201px;">0.06</div>
<div class="t" style="left:617.5px;top:515px;font-size:12px;line-height:12px;color:#333333;letter-spacing:0.201px;">0.03</div>
<div class="t" style="left:692.5px;top:515px;font-size:12px;line-height:12px;color:#333333;letter-spacing:0.201px;">0.68</div>
<div class="t" style="left:767.5px;top:515px;font-size:12px;line-height:12px;color:#333333;letter-spacing:0.201px;">0.15</div>
<div class="t" style="left:842.5px;top:515px;font-size:12px;line-height:12px;color:#333333;letter-spacing:0.201px;">0.19</div>
<div class="t" style="left:917.5px;top:515px;font-size:12px;line-height:12px;color:#333333;letter-spacing:0.201px;">0.08</div>
<div class="t" style="left:992.5px;top:515px;font-size:12px;line-height:12px;color:#333333;letter-spacing:0.146px;">0.7</div>
<div class="t" style="left:617.5px;top:531px;font-size:12px;line-height:12px;color:#333333;letter-spacing:0.201px;">0.18</div>
<div class="t" style="left:692.5px;top:531px;font-size:12px;line-height:12px;color:#333333;letter-spacing:0.201px;">0.51</div>
<div class="t" style="left:767.5px;top:531px;font-size:12px;line-height:12px;color:#333333;letter-spacing:0.201px;">0.55</div>
<div class="t" style="left:842.5px;top:531px;font-size:12px;line-height:12px;color:#333333;letter-spacing:0.201px;">0.45</div>
<div class="t" style="left:917.5px;top:531px;font-size:12px;line-height:12px;color:#333333;letter-spacing:0.201px;">0.21</div>
<div class="t" style="left:992.5px;top:531px;font-size:12px;line-height:12px;color:#333333;letter-spacing:0.201px;">0.46</div>
<div class="t" style="left:617.5px;top:547px;font-size:12px;line-height:12px;color:#333333;letter-spacing:0.201px;">0.41</div>
<div class="t" style="left:692.5px;top:547px;font-size:12px;line-height:12px;color:#333333;letter-spacing:0.146px;">0.0</div>
<div class="t" style="left:767.5px;top:547px;font-size:12px;line-height:12px;color:#333333;letter-spacing:0.201px;">0.64</div>
<div class="t" style="left:842.5px;top:547px;font-size:12px;line-height:12px;color:#333333;letter-spacing:0.146px;">0.5</div>
<div class="t" style="left:917.5px;top:547px;font-size:12px;line-height:12px;color:#333333;letter-spacing:0.201px;">0.34</div>
<div class="t" style="left:992.5px;top:547px;font-size:12px;line-height:12px;color:#333333;letter-spacing:0.201px;">0.93</div>
<div class="t" style="left:617.5px;top:563px;font-size:12px;line-height:12px;color:#333333;letter-spacing:0.201px;">0.43</div>
<div class="t" style="left:692.5px;top:563px;font-size:12px;line-height:12px;color:#333333;letter-spacing:0.201px;">0.65</div>
<div class="t" style="left:767.5px;top:563px;font-size:12px;line-height:12px;color:#333333;letter-spacing:0.201px;">0.36</div>
<div class="t" style="left:842.5px;top:563px;font-size:12px;line-height:12px;color:#333333;letter-spacing:0.201px;">0.91</div>
<div class="t" style="left:917.5px;top:563px;font-size:12px;line-height:12px;color:#333333;letter-spacing:0.201px;">0.59</div>
<div class="t" style="left:992.5px;top:563px;font-size:12px;line-height:12px;color:#333333;letter-spacing:0.201px;">0.27</div>
<div class="t" style="left:617.5px;top:579px;font-size:12px;line-height:12px;color:#333333;letter-spacing:0.201px;">0.75</div>
<div class="t" style="left:692.5px;top:579px;font-size:12px;line-height:12px;color:#333333;letter-spacing:0.201px;">0.21</div>
<div class="t" style="left:767.5px;top:579px;font-size:12px;line-height:12px;color:#333333;letter-spacing:0.201px;">0.95</div>
<div class="t" style="left:842.5px;top:579px;font-size:12px;line-height:12px;color:#333333;letter-spacing:0.201px;">0.07</div>
<div class="t" style="left:917.5px;top:579px;font-size:12px;line-height:12px;color:#333333;letter-spacing:0.201px;">0.58</div>
<div class="t" style="left:992.5px;top:579px;font-size:12px;line-height:12px;color:#333333;letter-spacing:0.201px;">0.74</div>
<div class="t" style="left:617.5px;top:595px;font-size:12px;line-height:12px;color:#333333;letter-spacing:0.201px;">0.18</div>
<div class="t" style="left:692.5px;top:595px;font-size:12px;line-height:12px;color:#333333;letter-spacing:0.201px;">0.11</div>
<div class="t" style="left:767.5px;top:595px;font-size:12px;line-height:12px;color:#333333;letter-spacing:0.201px;">0.29</div>
<div class="t" style="left:842.5px;top:595px;font-size:12px;line-height:12px;color:#333333;letter-spacing:0.201px;">0.28</div>
<div class="t" style="left:917.5px;top:595px;font-size:12px;line-height:12px;color:#333333;letter-spacing:0.201px;">0.28</div>
<div class="t" style="left:992.5px;top:595px;font-size:12px;line-height:12px;color:#333333;letter-spacing:0.201px;">0.43</div>
<div class="t" style="left:617.5px;top:611px;font-size:12px;line-height:12px;color:#333333;letter-spacing:0.201px;">0.13</div>
<div class="t" style="left:692.5px;top:611px;font-size:12px;line-height:12px;color:#333333;letter-spacing:0.146px;">0.4</div>
<div class="t" style="left:767.5px;top:611px;font-size:12px;line-height:12px;color:#333333;letter-spacing:0.201px;">0.18</div>
<div class="t" style="left:842.5px;top:611px;font-size:12px;line-height:12px;color:#333333;letter-spacing:0.201px;">0.38</div>
<div class="t" style="left:917.5px;top:611px;font-size:12px;line-height:12px;color:#333333;letter-spacing:0.201px;">0.04</div>
<div class="t" style="left:992.5px;top:611px;font-size:12px;line-height:12px;color:#333333;letter-spacing:0.201px;">0.06</div>
<div class="t" style="left:617.5px;top:627px;font-size:12px;line-height:12px;color:#333333;letter-spacing:0.201px;">0.17</div>
<div class="t" style="left:692.5px;top:627px;font-size:12px;line-height:12px;color:#333333;letter-spacing:0.201px;">0.43</div>
<div class="t" style="left:767.5px;top:627px;font-size:12px;line-height:12px;color:#333333;letter-spacing:0.201px;">0.83</div>
<div class="t" style="left:842.5px;top:627px;font-size:12px;line-height:12px;color:#333333;letter-spacing:0.201px;">0.96</div>
<div class="t" style="left:917.5px;top:627px;font-size:12px;line-height:12px;color:#333333;letter-spacing:0.146px;">0.7</div>
<div class="t" style="left:992.5px;top:627px;font-size:12px;line-height:12px;color:#333333;letter-spacing:0.201px;">0.24</div>
<div class="t" style="left:617.5px;top:643px;font-size:12px;line-height:12px;color:#333333;letter-spacing:0.201px;">0.44</div>
<div class="t" style="left:692.5px;top:643px;font-size:12px;line-height:12px;color:#333333;letter-spacing:0.201px;">0.39</div>
<div class="t" style="left:767.5px;top:643px;font-size:12px;line-height:12px;color:#333333;letter-spacing:0.201px;">0.86</div>
<div class="t" style="left:842.5px;top:643px;font-size:12px;line-height:12px;color:#333333;letter-spacing:0.146px;">0.9</div>
<div class="t" style="left:917.5px;top:643px;font-size:12px;line-height:12px;color:#333333;letter-spacing:0.201px;">0.54</div>
<div class="t" style="left:992.5px;top:643px;font-size:12px;line-height:12px;color:#333333;letter-spacing:0.201px;">0.05</div>
<div class="t" style="left:617.5px;top:659px;font-size:12px;line-height:12px;color:#333333;letter-spacing:0.201px;">0.97</div>
<div class="t" style="left:692.5px;top:659px;font-size:12px;line-height:12px;color:#333333;letter-spacing:0.201px;">0.04</div>
<div class="t" style="left:767.5px;top:659px;font-size:12px;line-height:12px;color:#333333;letter-spacing:0.201px;">0.11</div>
<div class="t" style="left:842.5px;top:659px;font-size:12px;line-height:12px;color:#333333;letter-spacing:0.201px;">0.07</div>
<div class="t" style="left:917.5px;top:659px;font-size:12px;line-height:12px;color:#333333;letter-spacing:0.201px;">0.48</div>
<div class="t" style="left:992.5px;top:659px;font-size:12px;line-height:12px;color:#333333;letter-spacing:0.201px;">0.55</div>
<div class="t" style="left:617.5px;top:675px;font-size:12px;line-height:12px;color:#333333;letter-spacing:0.201px;">0.46</div>
<div class="t" style="left:692.5px;top:675px;font-size:12px;line-height:12px;color:#333333;letter-spacing:0.201px;">0.22</div>
<div class="t" style="left:767.5px;top:675px;font-size:12px;line-height:12px;color:#333333;letter-spacing:0.146px;">0.1</div>
<div class="t" style="left:842.5px;top:675px;font-size:12px;line-height:12px;color:#333333;letter-spacing:0.201px;">0.68</div>
<div class="t" style="left:917.5px;top:675px;font-size:12px;line-height:12px;color:#333333;letter-spacing:0.201px;">0.11</div>
<div class="t" style="left:992.5px;top:675px;font-size:12px;line-height:12px;color:#333333;letter-spacing:0.146px;">0.4</div>
<div class="t" style="left:617.5px;top:691px;font-size:12px;line-height:12px;color:#333333;letter-spacing:0.201px;">0.78</div>
<div class="t" style="left:692.5px;top:691px;font-size:12px;line-height:12px;color:#333333;letter-spacing:0.201px;">0.36</div>
<div class="t" style="left:767.5px;top:691px;font-size:12px;line-height:12px;color:#333333;letter-spacing:0.201px;">0.26</div>
<div class="t" style="left:842.5px;top:691px;font-size:12px;line-height:12px;color:#333333;letter-spacing:0.201px;">0.05</div>
<div class="t" style="left:917.5px;top:691px;font-size:12px;line-height:12px;color:#333333;letter-spacing:0.201px;">0.44</div>
<div class="t" style="left:992.5px;top:691px;font-size:12px;line-height:12px;color:#333333;letter-spacing:0.146px;">0.2</div>
<div class="t" style="left:617.5px;top:707px;font-size:12px;line-height:12px;color:#333333;letter-spacing:0.201px;">0.82</div>
<div class="t" style="left:692.5px;top:707px;font-size:12px;line-height:12px;color:#333333;letter-spacing:0.201px;">0.37</div>
<div class="t" style="left:767.5px;top:707px;font-size:12px;line-height:12px;color:#333333;letter-spacing:0.201px;">0.24</div>
<div class="t" style="left:842.5px;top:707px;font-size:12px;line-height:12px;color:#333333;letter-spacing:0.201px;">0.58</div>
<div class="t" style="left:917.5px;top:707px;font-size:12px;line-height:12px;color:#333333;letter-spacing:0.201px;">0.62</div>
<div class="t" style="left:992.5px;top:707px;font-size:12px;line-height:12px;color:#333333;letter-spacing:0.201px;">0.24</div>
<div class="t" style="left:617.5px;top:723px;font-size:12px;line-height:12px;color:#333333;letter-spacing:0.201px;">0.79</div>
<div class="t" style="left:692.5px;top:723px;font-size:12px;line-height:12px;color:#333333;letter-spacing:0.201px;">0.71</div>
<div class="t" style="left:767.5px;top:723px;font-size:12px;line-height:12px;color:#333333;letter-spacing:0.201px;">0.31</div>
<div class="t" style="left:842.5px;top:723px;font-size:12px;line-height:12px;color:#333333;letter-spacing:0.146px;">0.5</div>
<div class="t" style="left:917.5px;top:723px;font-size:12px;line-height:12px;color:#333333;letter-spacing:0.201px;">0.73</div>
<div class="t" style="left:992.5px;top:723px;font-size:12px;line-height:12px;color:#333333;letter-spacing:0.201px;">0.68</div>
<div class="t" style="left:617.5px;top:739px;font-size:12px;line-height:12px;color:#333333;letter-spacing:0.146px;">0.6</div>
<div class="t" style="left:692.5px;top:739px;font-size:12px;line-height:12px;color:#333333;letter-spacing:0.201px;">0.81</div>
<div class="t" style="left:767.5px;top:739px;font-size:12px;line-height:12px;color:#333333;letter-spacing:0.201px;">0.96</div>
<div class="t" style="left:842.5px;top:739px;font-size:12px;line-height:12px;color:#333333;letter-spacing:0.201px;">0.63</div>
<div class="t" style="left:917.5px;top:739px;font-size:12px;line-height:12px;color:#333333;letter-spacing:0.201px;">0.99</div>
<div class="t" style="left:992.5px;top:739px;font-size:12px;line-height:12px;color:#333333;letter-spacing:0.201px;">0.99</div>
<div class="t" style="left:617.5px;top:755px;font-size:12px;line-height:12px;color:#333333;letter-spacing:0.146px;">0.9</div>
<div class="t" style="left:692.5px;top:755px;font-size:12px;line-height:12px;color:#333333;letter-spacing:0.201px;">0.66</div>
<div class="t" style="left:767.5px;top:755px;font-size:12px;line-height:12px;color:#333333;letter-spacing:0.146px;">0.4</div>
<div class="t" style="left:842.5px;top:755px;font-size:12px;line-height:12px;color:#333333;letter-spacing:0.201px;">0.95</div>
<div class="t" style="left:917.5px;top:755px;font-size:12px;line-height:12px;color:#333333;letter-spacing:0.201px;">0.84</div>
<div class="t" style="left:992.5px;top:755px;font-size:12px;line-height:12px;color:#333333;letter-spacing:0.201px;">0.26</div>
<div class="t" style="left:617.5px;top:771px;font-size:12px;line-height:12px;color:#333333;letter-spacing:0.201px;">0.36</div>
<div class="t" style="left:692.5px;top:771px;font-size:12px;line-height:12px;color:#333333;letter-spacing:0.201px;">0.56</div>
<div class="t" style="left:767.5px;top:771px;font-size:12px;line-height:12px;color:#333333;letter-spacing:0.201px;">0.18</div>
<div class="t" style="left:842.5px;top:771px;font-size:12px;line-height:12px;color:#333333;letter-spacing:0.201px;">0.07</div>
<div class="t" style="left:917.5px;top:771px;font-size:12px;line-height:12px;color:#333333;letter-spacing:0.201px;">0.79</div>
<div class="t" style="left:992.5px;top:771px;font-size:12px;line-height:12px;color:#333333;letter-spacing:0.201px;">0.45</div>
<div class="t" style="left:617.5px;top:787px;font-size:12px;line-height:12px;color:#333333;letter-spacing:0.201px;">0.59</div>
<div class="t" style="left:692.5px;top:787px;font-size:12px;line-height:12px;color:#333333;letter-spacing:0.146px;">0.1</div>
<div class="t" style="left:767.5px;top:787px;font-size:12px;line-height:12px;color:#333333;letter-spacing:0.201px;">0.87</div>
<div class="t" style="left:842.5px;top:787px;font-size:12px;line-height:12px;color:#333333;letter-spacing:0.201px;">0.09</div>
<div class="t" style="left:917.5px;top:787px;font-size:12px;line-height:12px;color:#333333;letter-spacing:0.201px;">0.42</div>
<div class="t" style="left:992.5px;top:787px;font-size:12px;line-height:12px;color:#333333;letter-spacing:0.201px;">0.36</div>
<div class="t" style="left:617.5px;top:803px;font-size:12px;line-height:12px;color:#333333;letter-spacing:0.201px;">0.21</div>
<div class="t" style="left:692.5px;top:803px;font-size:12px;line-height:12px;color:#333333;letter-spacing:0.201px;">0.99</div>
<div class="t" style="left:767.5px;top:803px;font-size:12px;line-height:12px;color:#333333;letter-spacing:0.201px;">0.04</div>
<div class="t" style="left:842.5px;top:803px;font-size:12px;line-height:12px;color:#333333;letter-spacing:0.201px;">0.55</div>
<div class="t" style="left:917.5px;top:803px;font-size:12px;line-height:12px;color:#333333;letter-spacing:0.201px;">0.21</div>
<div class="t" style="left:992.5px;top:803px;font-size:12px;line-height:12px;color:#333333;letter-spacing:0.201px;">0.19</div>
<div class="t" style="left:617.5px;top:819px;font-size:12px;line-height:12px;color:#333333;letter-spacing:0.201px;">0.05</div>
<div class="t" style="left:692.5px;top:819px;font-size:12px;line-height:12px;color:#333333;letter-spacing:0.146px;">0.5</div>
<div class="t" style="left:767.5px;top:819px;font-size:12px;line-height:12px;color:#333333;letter-spacing:0.201px;">0.58</div>
<div class="t" style="left:842.5px;top:819px;font-size:12px;line-height:12px;color:#333333;letter-spacing:0.201px;">0.28</div>
<div class="t" style="left:917.5px;top:819px;font-size:12px;line-height:12px;color:#333333;letter-spacing:0.201px;">0.84</div>
<div class="t" style="left:992.5px;top:819px;font-size:12px;line-height:12px;color:#333333;letter-spacing:0.201px;">0.27</div>
<div class="t" style="left:617.5px;top:835px;font-size:12px;line-height:12px;color:#333333;letter-spacing:0.201px;">0.96</div>
<div class="t" style="left:692.5px;top:835px;font-size:12px;line-height:12px;color:#333333;letter-spacing:0.201px;">0.84</div>
<div class="t" style="left:767.5px;top:835px;font-size:12px;line-height:12px;color:#333333;letter-spacing:0.201px;">0.72</div>
<div class="t" style="left:842.5px;top:835px;font-size:12px;line-height:12px;color:#333333;letter-spacing:0.201px;">0.81</div>
<div class="t" style="left:917.5px;top:835px;font-size:12px;line-height:12px;color:#333333;letter-spacing:0.201px;">0.92</div>
<div class="t" style="left:992.5px;top:835px;font-size:12px;line-height:12px;color:#333333;letter-spacing:0.146px;">0.3</div>
<div class="t" style="left:617.5px;top:851px;font-size:12px;line-height:12px;color:#333333;letter-spacing:0.201px;">0.22</div>
<div class="t" style="left:692.5px;top:851px;font-size:12px;line-height:12px;color:#333333;letter-spacing:0.201px;">0.42</div>
<div class="t" style="left:767.5px;top:851px;font-size:12px;line-height:12px;color:#333333;letter-spacing:0.201px;">0.13</div>
<div class="t" style="left:842.5px;top:851px;font-size:12px;line-height:12px;color:#333333;letter-spacing:0.201px;">0.99</div>
<div class="t" style="left:917.5px;top:851px;font-size:12px;line-height:12px;color:#333333;letter-spacing:0.201px;">0.98</div>
<div class="t" style="left:992.5px;top:851px;font-size:12px;line-height:12px;color:#333333;letter-spacing:0.146px;">0.4</div>
<div class="t" style="left:617.5px;top:867px;font-size:12px;line-height:12px;color:#333333;letter-spacing:0.201px;">0.09</div>
<div class="t" style="left:692.5px;top:867px;font-size:12px;line-height:12px;color:#333333;letter-spacing:0.201px;">0.36</div>
<div class="t" style="left:767.5px;top:867px;font-size:12px;line-height:12px;color:#333333;letter-spacing:0.201px;">0.55</div>
<div class="t" style="left:842.5px;top:867px;font-size:12px;line-height:12px;color:#333333;letter-spacing:0.201px;">0.81</div>
<div class="t" style="left:917.5px;top:867px;font-size:12px;line-height:12px;color:#333333;letter-spacing:0.201px;">0.32</div>
<div class="t" style="left:992.5px;top:867px;font-size:12px;line-height:12px;color:#333333;letter-spacing:0.201px;">0.19</div>
<div class="t" style="left:617.5px;top:883px;font-size:12px;line-height:12px;color:#333333;letter-spacing:0.201px;">0.73</div>
<div class="t" style="left:692.5px;top:883px;font-size:12px;line-height:12px;color:#333333;letter-spacing:0.201px;">0.55</div>
<div class="t" style="left:767.5px;top:883px;font-size:12px;line-height:12px;color:#333333;letter-spacing:0.201px;">0.42</div>
<div class="t" style="left:842.5px;top:883px;font-size:12px;line-height:12px;color:#333333;letter-spacing:0.201px;">0.76</div>
<div class="t" style="left:917.5px;top:883px;font-size:12px;line-height:12px;color:#333333;letter-spacing:0.146px;">0.6</div>
<div class="t" style="left:992.5px;top:883px;font-size:12px;line-height:12px;color:#333333;letter-spacing:0.146px;">0.5</div>
<div class="t" style="left:617.5px;top:899px;font-size:12px;line-height:12px;color:#333333;letter-spacing:0.201px;">0.21</div>
<div class="t" style="left:692.5px;top:899px;font-size:12px;line-height:12px;color:#333333;letter-spacing:0.201px;">0.13</div>
<div class="t" style="left:767.5px;top:899px;font-size:12px;line-height:12px;color:#333333;letter-spacing:0.201px;">0.54</div>
<div class="t" style="left:842.5px;top:899px;font-size:12px;line-height:12px;color:#333333;letter-spacing:0.201px;">0.67</div>
<div class="t" style="left:917.5px;top:899px;font-size:12px;line-height:12px;color:#333333;letter-spacing:0.201px;">0.61</div>
<div class="t" style="left:992.5px;top:899px;font-size:12px;line-height:12px;color:#333333;letter-spacing:0.201px;">0.04</div>
<div class="t" style="left:617.5px;top:915px;font-size:12px;line-height:12px;color:#333333;letter-spacing:0.201px;">0.02</div>
<div class="t" style="left:692.5px;top:915px;font-size:12px;line-height:12px;color:#333333;letter-spacing:0.201px;">0.21</div>
<div class="t" style="left:767.5px;top:915px;font-size:12px;line-height:12px;color:#333333;letter-spacing:0.201px;">0.68</div>
<div class="t" style="left:842.5px;top:915px;font-size:12px;line-height:12px;color:#333333;letter-spacing:0.201px;">0.06</div>
<div class="t" style="left:917.5px;top:915px;font-size:12px;line-height:12px;color:#333333;letter-spacing:0.201px;">0.42</div>
<div class="t" style="left:992.5px;top:915px;font-size:12px;line-height:12px;color:#333333;letter-spacing:0.201px;">0.84</div>
<div class="t" style="left:617.5px;top:931px;font-size:12px;line-height:12px;color:#333333;letter-spacing:0.201px;">0.58</div>
<div class="t" style="left:692.5px;top:931px;font-size:12px;line-height:12px;color:#333333;letter-spacing:0.201px;">0.08</div>
<div class="t" style="left:767.5px;top:931px;font-size:12px;line-height:12px;color:#333333;letter-spacing:0.201px;">0.48</div>
<div class="t" style="left:842.5px;top:931px;font-size:12px;line-height:12px;color:#333333;letter-spacing:0.201px;">0.98</div>
<div class="t" style="left:917.5px;top:931px;font-size:12px;line-height:12px;color:#333333;letter-spacing:0.201px;">0.53</div>
<div class="t" style="left:992.5px;top:931px;font-size:12px;line-height:12px;color:#333333;letter-spacing:0.201px;">0.36</div>
<div class="t" style="left:617.5px;top:947px;font-size:12px;line-height:12px;color:#333333;letter-spacing:0.146px;">0.9</div>
<div class="t" style="left:692.5px;top:947px;font-size:12px;line-height:12px;color:#333333;letter-spacing:0.201px;">0.46</div>
<div class="t" style="left:767.5px;top:947px;font-size:12px;line-height:12px;color:#333333;letter-spacing:0.201px;">0.29</div>
<div class="t" style="left:842.5px;top:947px;font-size:12px;line-height:12px;color:#333333;letter-spacing:0.201px;">0.54</div>
<div class="t" style="left:917.5px;top:947px;font-size:12px;line-height:12px;color:#333333;letter-spacing:0.201px;">0.68</div>
<div class="t" style="left:992.5px;top:947px;font-size:12px;line-height:12px;color:#333333;letter-spacing:0.201px;">0.67</div>
<div class="t" style="left:617.5px;top:963px;font-size:12px;line-height:12px;color:#333333;letter-spacing:0.201px;">0.49</div>
<div class="t" style="left:692.5px;top:963px;font-size:12px;line-height:12px;color:#333333;letter-spacing:0.201px;">0.33</div>
<div class="t" style="left:767.5px;top:963px;font-size:12px;line-height:12px;color:#333333;letter-spacing:0.201px;">0.97</div>
<div class="t" style="left:842.5px;top:963px;font-size:12px;line-height:12px;color:#333333;letter-spacing:0.146px;">0.9</div>
<div class="t" style="left:917.5px;top:963px;font-size:12px;line-height:12px;color:#333333;letter-spacing:0.201px;">0.63</div>
<div class="t" style="left:992.5px;top:963px;font-size:12px;line-height:12px;color:#333333;letter-spacing:0.201px;">0.03</div>
<div class="t" style="left:617.5px;top:979px;font-size:12px;line-height:12px;color:#333333;letter-spacing:0.201px;">0.52</div>
<div class="t" style="left:692.5px;top:979px;font-size:12px;line-height:12px;color:#333333;letter-spacing:0.201px;">0.88</div>
<div class="t" style="left:767.5px;top:979px;font-size:12px;line-height:12px;color:#333333;letter-spacing:0.201px;">0.29</div>
<div class="t" style="left:842.5px;top:979px;font-size:12px;line-height:12px;color:#333333;letter-spacing:0.201px;">0.96</div>
<div class="t" style="left:917.5px;top:979px;font-size:12px;line-height:12px;color:#333333;letter-spacing:0.201px;">0.57</div>
<div class="t" style="left:992.5px;top:979px;font-size:12px;line-height:12px;color:#333333;letter-spacing:0.201px;">0.75</div>
<div class="t" style="left:617.5px;top:995px;font-size:12px;line-height:12px;color:#333333;letter-spacing:0.146px;">0.6</div>
<div class="t" style="left:692.5px;top:995px;font-size:12px;line-height:12px;color:#333333;letter-spacing:0.201px;">0.27</div>
<div class="t" style="left:767.5px;top:995px;font-size:12px;line-height:12px;color:#333333;letter-spacing:0.201px;">0.48</div>
<div class="t" style="left:842.5px;top:995px;font-size:12px;line-height:12px;color:#333333;letter-spacing:0.201px;">0.04</div>
<div class="t" style="left:917.5px;top:995px;font-size:12px;line-height:12px;color:#333333;letter-spacing:0.146px;">0.5</div>
<div class="t" style="left:992.5px;top:995px;font-size:12px;line-height:12px;color:#333333;letter-spacing:0.201px;">0.28</div>
<div class="t" style="left:617.5px;top:1011px;font-size:12px;line-height:12px;color:#333333;letter-spacing:0.201px;">0.99</div>
<div class="t" style="left:692.5px;top:1011px;font-size:12px;line-height:12px;color:#333333;letter-spacing:0.201px;">0.02</div>
<div class="t" style="left:767.5px;top:1011px;font-size:12px;line-height:12px;color:#333333;letter-spacing:0.201px;">0.03</div>
<div class="t" style="left:842.5px;top:1011px;font-size:12px;line-height:12px;color:#333333;letter-spacing:0.201px;">0.43</div>
<div class="t" style="left:917.5px;top:1011px;font-size:12px;line-height:12px;color:#333333;letter-spacing:0.201px;">0.28</div>
<div class="t" style="left:992.5px;top:1011px;font-size:12px;line-height:12px;color:#333333;letter-spacing:0.201px;">0.39</div>
<div class="t" style="left:617.5px;top:1027px;font-size:12px;line-height:12px;color:#333333;letter-spacing:0.201px;">0.59</div>
<div class="t" style="left:692.5px;top:1027px;font-size:12px;line-height:12px;color:#333333;letter-spacing:0.201px;">0.34</div>
<div class="t" style="left:767.5px;top:1027px;font-size:12px;line-height:12px;color:#333333;letter-spacing:0.201px;">0.92</div>
<div class="t" style="left:842.5px;top:1027px;font-size:12px;line-height:12px;color:#333333;letter-spacing:0.201px;">0.51</div>
<div class="t" style="left:917.5px;top:1027px;font-size:12px;line-height:12px;color:#333333;letter-spacing:0.201px;">0.39</div>
<div class="t" style="left:992.5px;top:1027px;font-size:12px;line-height:12px;color:#333333;letter-spacing:0.201px;">0.35</div>
<div class="t" style="left:617.5px;top:1043px;font-size:12px;line-height:12px;color:#333333;letter-spacing:0.201px;">0.49</div>
<div class="t" style="left:692.5px;top:1043px;font-size:12px;line-height:12px;color:#333333;letter-spacing:0.201px;">0.29</div>
<div class="t" style="left:767.5px;top:1043px;font-size:12px;line-height:12px;color:#333333;letter-spacing:0.201px;">0.35</div>
<div class="t" style="left:842.5px;top:1043px;font-size:12px;line-height:12px;color:#333333;letter-spacing:0.201px;">0.64</div>
<div class="t" style="left:917.5px;top:1043px;font-size:12px;line-height:12px;color:#333333;letter-spacing:0.201px;">0.43</div>
<div class="t" style="left:992.5px;top:1043px;font-size:12px;line-height:12px;color:#333333;letter-spacing:0.201px;">0.85</div>
<div class="t" style="left:617.5px;top:1059px;font-size:12px;line-height:12px;color:#333333;letter-spacing:0.201px;">0.49</div>
<div class="t" style="left:692.5px;top:1059px;font-size:12px;line-height:12px;color:#333333;letter-spacing:0.201px;">0.88</div>
<div class="t" style="left:767.5px;top:1059px;font-size:12px;line-height:12px;color:#333333;letter-spacing:0.201px;">0.95</div>
<div class="t" style="left:842.5px;top:1059px;font-size:12px;line-height:12px;color:#333333;letter-spacing:0.201px;">0.89</div>
<div class="t" style="left:917.5px;top:1059px;font-size:12px;line-height:12px;color:#333333;letter-spacing:0.201px;">0.92</div>
<div class="t" style="left:992.5px;top:1059px;font-size:12px;line-height:12px;color:#333333;letter-spacing:0.201px;">0.67</div>
<div class="t" style="left:617.5px;top:1075px;font-size:12px;line-height:12px;color:#333333;letter-spacing:0.201px;">0.82</div>
<div class="t" style="left:692.5px;top:1075px;font-size:12px;line-height:12px;color:#333333;letter-spacing:0.201px;">0.69</div>
<div class="t" style="left:767.5px;top:1075px;font-size:12px;line-height:12px;color:#333333;letter-spacing:0.201px;">0.32</div>
<div class="t" style="left:842.5px;top:1075px;font-size:12px;line-height:12px;color:#333333;letter-spacing:0.146px;">0.4</div>
<div class="t" style="left:917.5px;top:1075px;font-size:12px;line-height:12px;color:#333333;letter-spacing:0.201px;">0.26</div>
<div class="t" style="left:992.5px;top:1075px;font-size:12px;line-height:12px;color:#333333;letter-spacing:0.201px;">0.41</div>
</body></html>
